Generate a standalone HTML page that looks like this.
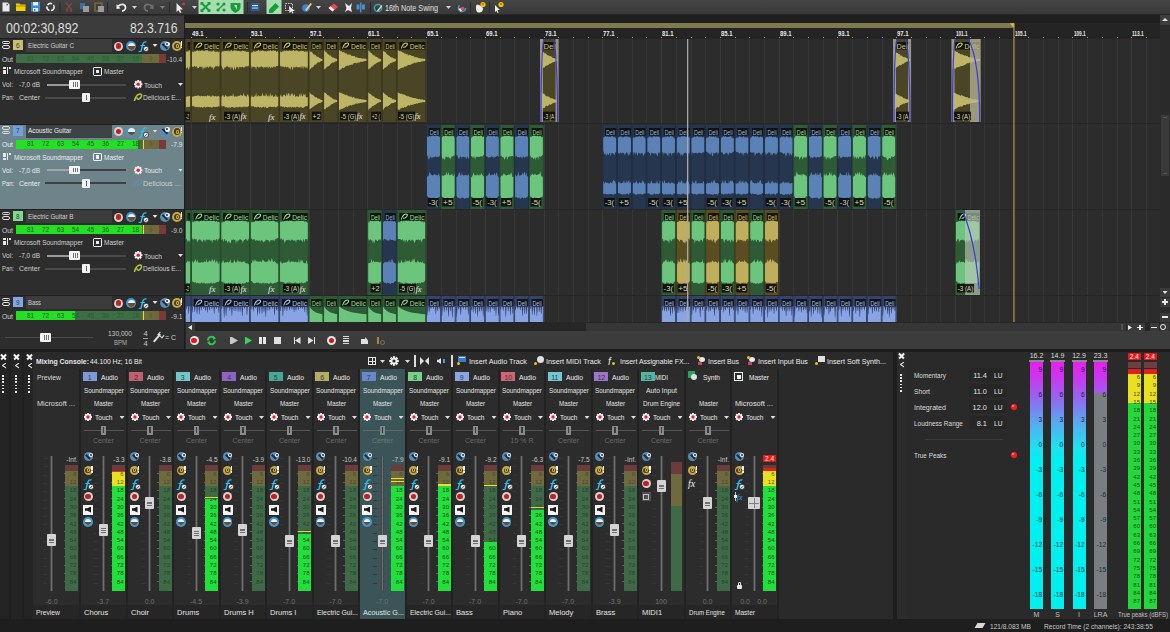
<!DOCTYPE html>
<html><head><meta charset="utf-8"><style>
html,body{margin:0;padding:0;}
body{width:1170px;height:632px;overflow:hidden;position:relative;background:#2b2b2b;font-family:"Liberation Sans",sans-serif;}
body>div,body>svg{position:absolute;}
.t{white-space:nowrap;line-height:1;transform-origin:0 0;}
</style></head><body>
<div style="left:0px;top:0px;width:1170px;height:632px;background:#2b2b2b;"></div>
<div style="left:0px;top:0px;width:1170px;height:15px;background:linear-gradient(#454545,#383838);"></div>
<div style="left:0px;top:14px;width:1170px;height:1px;background:#262626;"></div>
<svg style="position:absolute;left:0;top:0" width="520" height="15"><path d="M2.5,2.5 h5 l2,2 v7 h-7 z" fill="#ececec"/><circle cx="7.2" cy="4.6" r="0.9" fill="#555"/><path d="M16,3.5 h3.5 l1,1 h5 v6.5 h-9.5 z" fill="#f2d000"/><rect x="16" y="5.5" width="9.5" height="1" fill="#a08a00"/><rect x="31" y="2" width="9" height="9.5" fill="#2e8ee0"/><rect x="33" y="2" width="5" height="3.5" fill="#f0f0f0"/><rect x="33" y="8" width="5" height="3.5" fill="#f0f0f0"/><rect x="34" y="9" width="1.5" height="2" fill="#2e8ee0"/><circle cx="50.5" cy="7" r="3.6" stroke="#ececec" stroke-width="1.6" fill="none" stroke-dasharray="5 1.6"/><rect x="59.5" y="2" width="1" height="11" fill="#2a2a2a"/><path d="M66,3 L72,10 M72,3 L66,10" stroke="#7a4a50" stroke-width="1.2"/><circle cx="67" cy="10.5" r="1.3" fill="#8a3a40"/><circle cx="71" cy="10.5" r="1.3" fill="#8a3a40"/><rect x="80" y="3" width="5" height="6" fill="#3a70a0"/><rect x="83" y="6" width="6" height="6" fill="#9a9a9a"/><rect x="95" y="3" width="7" height="8" fill="none" stroke="#8a7030" stroke-width="1.2"/><rect x="98" y="6" width="6" height="6" fill="#9a9a9a"/><rect x="107" y="2" width="1" height="11" fill="#2a2a2a"/><path d="M118,6.5 C120,3.5 125,3.5 125.5,7 C126,10 123,11 122,11" stroke="#ececec" stroke-width="1.8" fill="none"/><path d="M116.5,4 L120.5,8.5 L116.5,9 z" fill="#ececec"/><path d="M152,6.5 C150,3.5 145,3.5 144.5,7 C144,10 147,11 148,11" stroke="#707070" stroke-width="1.8" fill="none"/><path d="M153.5,4 L149.5,8.5 L153.5,9 z" fill="#707070"/><rect x="169" y="2" width="1" height="11" fill="#2a2a2a"/><path d="M176.5,3 L183,9.5 L179.8,9.5 L181.5,12.5 L180,13 L178.3,10.2 L176.5,12 z" fill="#ececec"/><circle cx="183.5" cy="4" r="1.5" fill="#e03040"/><rect x="198.5" y="0" width="45" height="14" fill="#a6deb0"/><path d="M201.5,3 L209.5,11 M209.5,3 L201.5,11" stroke="#1c9a3e" stroke-width="1.8"/><path d="M200.5,2 h3 v1.2 h-1.8 v1.8 h-1.2 z M210.5,2 h-3 v1.2 h1.8 v1.8 h1.2 z M200.5,12 h3 v-1.2 h-1.8 v-1.8 h-1.2 z M210.5,12 h-3 v-1.2 h1.8 v-1.8 h1.2 z" fill="#1c9a3e"/><circle cx="218" cy="4" r="1.6" fill="#1c9a3e"/><circle cx="224" cy="4" r="1.6" fill="#1c9a3e"/><circle cx="218" cy="10" r="1.6" fill="#1c9a3e"/><circle cx="224" cy="10" r="1.6" fill="#1c9a3e"/><path d="M218,10 L224,4" stroke="#1c9a3e" stroke-width="1.3"/><path d="M230.5,3 h10 v4 c0,3 -3,5 -5,6 c-2,-1 -5,-3 -5,-6 z" fill="#1c9a3e"/><path d="M234,5 l3,0 l0,5 z" fill="#a6deb0"/><rect x="247" y="2" width="1" height="11" fill="#2a2a2a"/><rect x="250.5" y="3" width="9" height="8" fill="#2a5a9a"/><rect x="252" y="5" width="6" height="1.2" fill="#e8e8e8"/><rect x="252" y="7.5" width="6" height="1.2" fill="#9ac0f0"/><rect x="266.5" y="0" width="15" height="14" fill="#a6deb0"/><path d="M269,9.5 L275.5,3 L279,6.5 L272.5,13 L269,13 z" fill="#1c9a3e"/><rect x="285.5" y="3.5" width="7" height="7" fill="none" stroke="#c8c8c8" stroke-width="1" stroke-dasharray="1.5 1"/><path d="M289,6 L295,11 L292.5,11 L293.5,13 L292.5,13.5 L291.5,11.5 L289.5,13 z" fill="#ececec"/><circle cx="306" cy="8" r="3.8" fill="#3a84d8"/><path d="M305,10 L310.5,3 L312,4 L306.5,11 z" fill="#f2d060"/><path d="M328.5,8 L334,3.5 L338,7 L332.5,11.5 z" fill="#e84858"/><path d="M328.5,8 L330.5,6.3 L334.5,9.8 L332.5,11.5 z" fill="#f4f4f4"/><path d="M345,3 L349,6 L352,3 L351,8 L352,12 L348,10 L345,12 L346.5,8 z" fill="#ececec"/><rect x="360" y="2.5" width="1.5" height="10" fill="#4a90c8"/><rect x="356.5" y="4.5" width="3" height="5" fill="#4a90c8"/><rect x="362" y="4.5" width="3" height="5" fill="#4a90c8"/><rect x="370" y="2" width="1" height="11" fill="#2a2a2a"/><circle cx="378" cy="8" r="3.6" stroke="#2aa8c8" stroke-width="1.5" fill="none"/><path d="M377,10.5 L381.5,5 L382.5,6 L378,11.5 z" fill="#f0d8a0"/><circle cx="462" cy="8" r="3.6" stroke="#2aa8c8" stroke-width="1.5" fill="none" stroke-dasharray="14 8"/><path d="M458.5,9 L463,6.5 L465,9 L460.5,11.5 z" fill="#e84858"/><path d="M458.5,9 L460,8.2 L462,10.8 L460.5,11.5 z" fill="#f4f4f4"/><rect x="470" y="2" width="1" height="11" fill="#2a2a2a"/><path d="M476,7 C476,4 478,4 479,5 L481,6 C482.5,6.5 483,8 483,9 C483,12 480,12.5 478.5,12.5 C476.5,12.5 476,10 476,7 z" fill="#ececec"/><circle cx="483" cy="4.5" r="2.6" fill="#f2c200"/><rect x="482.6" y="3" width="0.8" height="2" fill="#604000"/><rect x="489" y="2" width="1" height="11" fill="#2a2a2a"/><path d="M495,5 L500,10 L497.5,10 L498.5,12.5 L497.5,13 L496.5,10.8 L495,12 z" fill="#ececec"/><circle cx="501" cy="4.5" r="2.6" fill="#f2c200"/><rect x="500.6" y="3" width="0.8" height="2" fill="#604000"/></svg>
<div style="left:132px;top:6px;width:5px;height:3px;background:#d0d0d0;clip-path:polygon(0 0,100% 0,50% 100%);"></div>
<div style="left:160px;top:6px;width:5px;height:3px;background:#808080;clip-path:polygon(0 0,100% 0,50% 100%);"></div>
<div style="left:192px;top:6px;width:5px;height:3px;background:#d0d0d0;clip-path:polygon(0 0,100% 0,50% 100%);"></div>
<div style="left:316px;top:6px;width:5px;height:3px;background:#d0d0d0;clip-path:polygon(0 0,100% 0,50% 100%);"></div>
<div class="t" style="left:385.00px;top:3.80px;font-size:8.5px;color:#e0e0e0;font-weight:normal;transform:scaleX(0.8497);">16th Note Swing</div>
<div style="left:446px;top:6px;width:5px;height:3px;background:#d0d0d0;clip-path:polygon(0 0,100% 0,50% 100%);"></div>
<div style="left:0px;top:15px;width:185px;height:334px;background:#2d2d2d;"></div>
<div style="left:0px;top:15.8px;width:184px;height:23px;background:#3c3c3c;"></div>
<div class="t" style="left:5.50px;top:20.80px;font-size:14.3px;color:#dcdcdc;font-weight:normal;transform:scaleX(0.8683);">00:02:30,892</div>
<div class="t" style="left:130.00px;top:20.80px;font-size:14.3px;color:#dcdcdc;font-weight:normal;transform:scaleX(0.8533);">82.3.716</div>
<div style="left:185px;top:15px;width:985px;height:24px;background:#242424;"></div>
<div style="left:185px;top:15px;width:985px;height:8px;background:#1f1f1f;"></div>
<div style="left:185px;top:23.2px;width:828.8px;height:4.8px;background:#7d7b4d;"></div>
<div style="left:1009.5px;top:23.2px;width:5px;height:5px;background:#e0b040;clip-path:polygon(0 0,100% 0,100% 100%);"></div>
<div style="left:185px;top:39px;width:975px;height:283px;background:#2c2c2c;"></div>
<div style="left:191px;top:39px;width:1px;height:283px;background:#3a3a3a;"></div>
<div style="left:191px;top:36.8px;width:1px;height:1.6px;background:#a0a0a0;"></div>
<div style="left:206px;top:39px;width:1px;height:283px;background:#363636;"></div>
<div style="left:206px;top:36.8px;width:1px;height:1.6px;background:#a0a0a0;"></div>
<div style="left:220px;top:39px;width:1px;height:283px;background:#363636;"></div>
<div style="left:220px;top:36.8px;width:1px;height:1.6px;background:#a0a0a0;"></div>
<div style="left:235px;top:39px;width:1px;height:283px;background:#363636;"></div>
<div style="left:235px;top:36.8px;width:1px;height:1.6px;background:#a0a0a0;"></div>
<div style="left:250px;top:39px;width:1px;height:283px;background:#3a3a3a;"></div>
<div style="left:250px;top:36.8px;width:1px;height:1.6px;background:#a0a0a0;"></div>
<div style="left:265px;top:39px;width:1px;height:283px;background:#363636;"></div>
<div style="left:265px;top:36.8px;width:1px;height:1.6px;background:#a0a0a0;"></div>
<div style="left:279px;top:39px;width:1px;height:283px;background:#363636;"></div>
<div style="left:279px;top:36.8px;width:1px;height:1.6px;background:#a0a0a0;"></div>
<div style="left:294px;top:39px;width:1px;height:283px;background:#363636;"></div>
<div style="left:294px;top:36.8px;width:1px;height:1.6px;background:#a0a0a0;"></div>
<div style="left:309px;top:39px;width:1px;height:283px;background:#3a3a3a;"></div>
<div style="left:309px;top:36.8px;width:1px;height:1.6px;background:#a0a0a0;"></div>
<div style="left:323px;top:39px;width:1px;height:283px;background:#363636;"></div>
<div style="left:323px;top:36.8px;width:1px;height:1.6px;background:#a0a0a0;"></div>
<div style="left:338px;top:39px;width:1px;height:283px;background:#363636;"></div>
<div style="left:338px;top:36.8px;width:1px;height:1.6px;background:#a0a0a0;"></div>
<div style="left:353px;top:39px;width:1px;height:283px;background:#363636;"></div>
<div style="left:353px;top:36.8px;width:1px;height:1.6px;background:#a0a0a0;"></div>
<div style="left:367px;top:39px;width:1px;height:283px;background:#3a3a3a;"></div>
<div style="left:367px;top:36.8px;width:1px;height:1.6px;background:#a0a0a0;"></div>
<div style="left:382px;top:39px;width:1px;height:283px;background:#363636;"></div>
<div style="left:382px;top:36.8px;width:1px;height:1.6px;background:#a0a0a0;"></div>
<div style="left:397px;top:39px;width:1px;height:283px;background:#363636;"></div>
<div style="left:397px;top:36.8px;width:1px;height:1.6px;background:#a0a0a0;"></div>
<div style="left:411px;top:39px;width:1px;height:283px;background:#363636;"></div>
<div style="left:411px;top:36.8px;width:1px;height:1.6px;background:#a0a0a0;"></div>
<div style="left:426px;top:39px;width:1px;height:283px;background:#3a3a3a;"></div>
<div style="left:426px;top:36.8px;width:1px;height:1.6px;background:#a0a0a0;"></div>
<div style="left:441px;top:39px;width:1px;height:283px;background:#363636;"></div>
<div style="left:441px;top:36.8px;width:1px;height:1.6px;background:#a0a0a0;"></div>
<div style="left:456px;top:39px;width:1px;height:283px;background:#363636;"></div>
<div style="left:456px;top:36.8px;width:1px;height:1.6px;background:#a0a0a0;"></div>
<div style="left:470px;top:39px;width:1px;height:283px;background:#363636;"></div>
<div style="left:470px;top:36.8px;width:1px;height:1.6px;background:#a0a0a0;"></div>
<div style="left:485px;top:39px;width:1px;height:283px;background:#3a3a3a;"></div>
<div style="left:485px;top:36.8px;width:1px;height:1.6px;background:#a0a0a0;"></div>
<div style="left:500px;top:39px;width:1px;height:283px;background:#363636;"></div>
<div style="left:500px;top:36.8px;width:1px;height:1.6px;background:#a0a0a0;"></div>
<div style="left:514px;top:39px;width:1px;height:283px;background:#363636;"></div>
<div style="left:514px;top:36.8px;width:1px;height:1.6px;background:#a0a0a0;"></div>
<div style="left:529px;top:39px;width:1px;height:283px;background:#363636;"></div>
<div style="left:529px;top:36.8px;width:1px;height:1.6px;background:#a0a0a0;"></div>
<div style="left:544px;top:39px;width:1px;height:283px;background:#3a3a3a;"></div>
<div style="left:544px;top:36.8px;width:1px;height:1.6px;background:#a0a0a0;"></div>
<div style="left:558px;top:39px;width:1px;height:283px;background:#363636;"></div>
<div style="left:558px;top:36.8px;width:1px;height:1.6px;background:#a0a0a0;"></div>
<div style="left:573px;top:39px;width:1px;height:283px;background:#363636;"></div>
<div style="left:573px;top:36.8px;width:1px;height:1.6px;background:#a0a0a0;"></div>
<div style="left:588px;top:39px;width:1px;height:283px;background:#363636;"></div>
<div style="left:588px;top:36.8px;width:1px;height:1.6px;background:#a0a0a0;"></div>
<div style="left:602px;top:39px;width:1px;height:283px;background:#3a3a3a;"></div>
<div style="left:602px;top:36.8px;width:1px;height:1.6px;background:#a0a0a0;"></div>
<div style="left:617px;top:39px;width:1px;height:283px;background:#363636;"></div>
<div style="left:617px;top:36.8px;width:1px;height:1.6px;background:#a0a0a0;"></div>
<div style="left:632px;top:39px;width:1px;height:283px;background:#363636;"></div>
<div style="left:632px;top:36.8px;width:1px;height:1.6px;background:#a0a0a0;"></div>
<div style="left:646px;top:39px;width:1px;height:283px;background:#363636;"></div>
<div style="left:646px;top:36.8px;width:1px;height:1.6px;background:#a0a0a0;"></div>
<div style="left:661px;top:39px;width:1px;height:283px;background:#3a3a3a;"></div>
<div style="left:661px;top:36.8px;width:1px;height:1.6px;background:#a0a0a0;"></div>
<div style="left:676px;top:39px;width:1px;height:283px;background:#363636;"></div>
<div style="left:676px;top:36.8px;width:1px;height:1.6px;background:#a0a0a0;"></div>
<div style="left:691px;top:39px;width:1px;height:283px;background:#363636;"></div>
<div style="left:691px;top:36.8px;width:1px;height:1.6px;background:#a0a0a0;"></div>
<div style="left:705px;top:39px;width:1px;height:283px;background:#363636;"></div>
<div style="left:705px;top:36.8px;width:1px;height:1.6px;background:#a0a0a0;"></div>
<div style="left:720px;top:39px;width:1px;height:283px;background:#3a3a3a;"></div>
<div style="left:720px;top:36.8px;width:1px;height:1.6px;background:#a0a0a0;"></div>
<div style="left:735px;top:39px;width:1px;height:283px;background:#363636;"></div>
<div style="left:735px;top:36.8px;width:1px;height:1.6px;background:#a0a0a0;"></div>
<div style="left:749px;top:39px;width:1px;height:283px;background:#363636;"></div>
<div style="left:749px;top:36.8px;width:1px;height:1.6px;background:#a0a0a0;"></div>
<div style="left:764px;top:39px;width:1px;height:283px;background:#363636;"></div>
<div style="left:764px;top:36.8px;width:1px;height:1.6px;background:#a0a0a0;"></div>
<div style="left:779px;top:39px;width:1px;height:283px;background:#3a3a3a;"></div>
<div style="left:779px;top:36.8px;width:1px;height:1.6px;background:#a0a0a0;"></div>
<div style="left:793px;top:39px;width:1px;height:283px;background:#363636;"></div>
<div style="left:793px;top:36.8px;width:1px;height:1.6px;background:#a0a0a0;"></div>
<div style="left:808px;top:39px;width:1px;height:283px;background:#363636;"></div>
<div style="left:808px;top:36.8px;width:1px;height:1.6px;background:#a0a0a0;"></div>
<div style="left:823px;top:39px;width:1px;height:283px;background:#363636;"></div>
<div style="left:823px;top:36.8px;width:1px;height:1.6px;background:#a0a0a0;"></div>
<div style="left:837px;top:39px;width:1px;height:283px;background:#3a3a3a;"></div>
<div style="left:837px;top:36.8px;width:1px;height:1.6px;background:#a0a0a0;"></div>
<div style="left:852px;top:39px;width:1px;height:283px;background:#363636;"></div>
<div style="left:852px;top:36.8px;width:1px;height:1.6px;background:#a0a0a0;"></div>
<div style="left:867px;top:39px;width:1px;height:283px;background:#363636;"></div>
<div style="left:867px;top:36.8px;width:1px;height:1.6px;background:#a0a0a0;"></div>
<div style="left:882px;top:39px;width:1px;height:283px;background:#363636;"></div>
<div style="left:882px;top:36.8px;width:1px;height:1.6px;background:#a0a0a0;"></div>
<div style="left:896px;top:39px;width:1px;height:283px;background:#3a3a3a;"></div>
<div style="left:896px;top:36.8px;width:1px;height:1.6px;background:#a0a0a0;"></div>
<div style="left:911px;top:39px;width:1px;height:283px;background:#363636;"></div>
<div style="left:911px;top:36.8px;width:1px;height:1.6px;background:#a0a0a0;"></div>
<div style="left:926px;top:39px;width:1px;height:283px;background:#363636;"></div>
<div style="left:926px;top:36.8px;width:1px;height:1.6px;background:#a0a0a0;"></div>
<div style="left:940px;top:39px;width:1px;height:283px;background:#363636;"></div>
<div style="left:940px;top:36.8px;width:1px;height:1.6px;background:#a0a0a0;"></div>
<div style="left:955px;top:39px;width:1px;height:283px;background:#3a3a3a;"></div>
<div style="left:955px;top:36.8px;width:1px;height:1.6px;background:#a0a0a0;"></div>
<div style="left:970px;top:39px;width:1px;height:283px;background:#363636;"></div>
<div style="left:970px;top:36.8px;width:1px;height:1.6px;background:#a0a0a0;"></div>
<div style="left:984px;top:39px;width:1px;height:283px;background:#363636;"></div>
<div style="left:984px;top:36.8px;width:1px;height:1.6px;background:#a0a0a0;"></div>
<div style="left:999px;top:39px;width:1px;height:283px;background:#363636;"></div>
<div style="left:999px;top:36.8px;width:1px;height:1.6px;background:#a0a0a0;"></div>
<div style="left:1014px;top:39px;width:1px;height:283px;background:#3a3a3a;"></div>
<div style="left:1014px;top:36.8px;width:1px;height:1.6px;background:#a0a0a0;"></div>
<div style="left:1028px;top:39px;width:1px;height:283px;background:#363636;"></div>
<div style="left:1028px;top:36.8px;width:1px;height:1.6px;background:#a0a0a0;"></div>
<div style="left:1043px;top:39px;width:1px;height:283px;background:#363636;"></div>
<div style="left:1043px;top:36.8px;width:1px;height:1.6px;background:#a0a0a0;"></div>
<div style="left:1058px;top:39px;width:1px;height:283px;background:#363636;"></div>
<div style="left:1058px;top:36.8px;width:1px;height:1.6px;background:#a0a0a0;"></div>
<div style="left:1072px;top:39px;width:1px;height:283px;background:#3a3a3a;"></div>
<div style="left:1072px;top:36.8px;width:1px;height:1.6px;background:#a0a0a0;"></div>
<div style="left:1087px;top:39px;width:1px;height:283px;background:#363636;"></div>
<div style="left:1087px;top:36.8px;width:1px;height:1.6px;background:#a0a0a0;"></div>
<div style="left:1102px;top:39px;width:1px;height:283px;background:#363636;"></div>
<div style="left:1102px;top:36.8px;width:1px;height:1.6px;background:#a0a0a0;"></div>
<div style="left:1117px;top:39px;width:1px;height:283px;background:#363636;"></div>
<div style="left:1117px;top:36.8px;width:1px;height:1.6px;background:#a0a0a0;"></div>
<div style="left:1131px;top:39px;width:1px;height:283px;background:#3a3a3a;"></div>
<div style="left:1131px;top:36.8px;width:1px;height:1.6px;background:#a0a0a0;"></div>
<div style="left:1146px;top:39px;width:1px;height:283px;background:#363636;"></div>
<div style="left:1146px;top:36.8px;width:1px;height:1.6px;background:#a0a0a0;"></div>
<div class="t" style="left:192.10px;top:29.87px;font-size:7px;color:#e8e8e8;font-weight:bold;transform:scaleX(0.8441);">49.1</div>
<div class="t" style="left:250.86px;top:29.87px;font-size:7px;color:#e8e8e8;font-weight:bold;transform:scaleX(0.8441);">53.1</div>
<div class="t" style="left:309.62px;top:29.87px;font-size:7px;color:#e8e8e8;font-weight:bold;transform:scaleX(0.8441);">57.1</div>
<div class="t" style="left:368.38px;top:29.87px;font-size:7px;color:#e8e8e8;font-weight:bold;transform:scaleX(0.8441);">61.1</div>
<div class="t" style="left:427.14px;top:29.87px;font-size:7px;color:#e8e8e8;font-weight:bold;transform:scaleX(0.8441);">65.1</div>
<div class="t" style="left:485.90px;top:29.87px;font-size:7px;color:#e8e8e8;font-weight:bold;transform:scaleX(0.8441);">69.1</div>
<div class="t" style="left:544.66px;top:29.87px;font-size:7px;color:#e8e8e8;font-weight:bold;transform:scaleX(0.8441);">73.1</div>
<div class="t" style="left:603.42px;top:29.87px;font-size:7px;color:#e8e8e8;font-weight:bold;transform:scaleX(0.8441);">77.1</div>
<div class="t" style="left:662.18px;top:29.87px;font-size:7px;color:#e8e8e8;font-weight:bold;transform:scaleX(0.8441);">81.1</div>
<div class="t" style="left:720.94px;top:29.87px;font-size:7px;color:#e8e8e8;font-weight:bold;transform:scaleX(0.8441);">85.1</div>
<div class="t" style="left:779.70px;top:29.87px;font-size:7px;color:#e8e8e8;font-weight:bold;transform:scaleX(0.8441);">89.1</div>
<div class="t" style="left:838.46px;top:29.87px;font-size:7px;color:#e8e8e8;font-weight:bold;transform:scaleX(0.8441);">93.1</div>
<div class="t" style="left:897.22px;top:29.87px;font-size:7px;color:#e8e8e8;font-weight:bold;transform:scaleX(0.8441);">97.1</div>
<div class="t" style="left:955.98px;top:29.87px;font-size:7px;color:#e8e8e8;font-weight:bold;transform:scaleX(0.6565);">101.1</div>
<div class="t" style="left:1014.74px;top:29.87px;font-size:7px;color:#e8e8e8;font-weight:bold;transform:scaleX(0.6565);">105.1</div>
<div class="t" style="left:1073.50px;top:29.87px;font-size:7px;color:#e8e8e8;font-weight:bold;transform:scaleX(0.6565);">109.1</div>
<div class="t" style="left:1132.26px;top:29.87px;font-size:7px;color:#e8e8e8;font-weight:bold;transform:scaleX(0.6713);">113.1</div>
<div style="left:185px;top:123px;width:975px;height:1px;background:#262626;"></div>
<div style="left:185px;top:209px;width:975px;height:1px;background:#262626;"></div>
<div style="left:185px;top:295px;width:975px;height:1px;background:#262626;"></div>
<div style="left:1160px;top:15px;width:10px;height:307px;background:#2a2a2a;"></div>
<div style="left:1160px;top:15px;width:10px;height:10px;background:#3d3d3d;"></div>
<div style="left:1162px;top:18px;width:6px;height:3px;background:#e8e8e8;clip-path:polygon(50% 0,100% 100%,0 100%);"></div>
<div style="left:1161px;top:115px;width:8px;height:61px;background:#3a3a3a;"></div>
<div style="left:1163px;top:117px;width:4px;height:1px;background:#555;"></div>
<div style="left:1163px;top:173px;width:4px;height:1px;background:#555;"></div>
<div style="left:1160px;top:288px;width:10px;height:9px;background:#3a3a3a;"></div>
<div style="left:1160px;top:297.5px;width:10px;height:9px;background:#3a3a3a;"></div>
<div style="left:1160px;top:312.5px;width:10px;height:9px;background:#3a3a3a;"></div>
<div style="left:1162.5px;top:291px;width:5px;height:3px;background:#e8e8e8;clip-path:polygon(0 0,100% 0,50% 100%);"></div>
<div style="left:1162px;top:301.2px;width:6px;height:1.5px;background:#e8e8e8;"></div>
<div style="left:1164.25px;top:299px;width:1.5px;height:6px;background:#e8e8e8;"></div>
<div style="left:1162px;top:316.2px;width:6px;height:1.5px;background:#e8e8e8;"></div>
<svg style="position:absolute;left:0;top:0" width="1170" height="632" viewBox="0 0 1170 632"><rect x="185.00" y="39.00" width="6.10" height="83.00" fill="#4a4524" /><polygon points="185.6,52.0 186.3,51.4 187.0,51.5 187.7,51.5 188.4,51.4 189.1,50.1 189.8,50.4 190.5,52.6 190.5,68.6 189.8,66.4 189.1,69.0 188.4,69.9 187.7,66.5 187.0,68.5 186.3,68.2 185.6,65.4" fill="#bdb565"/><polygon points="185.6,97.3 186.3,96.8 187.0,96.2 187.7,96.5 188.4,96.2 189.1,96.1 189.8,96.0 190.5,97.0 190.5,106.8 189.8,106.5 189.1,106.9 188.4,106.9 187.7,106.7 187.0,107.3 186.3,107.0 185.6,105.9" fill="#bdb565"/><rect x="185.00" y="39.00" width="0.80" height="83.00" fill="#3a3620" /><rect x="190.30" y="39.00" width="0.80" height="83.00" fill="#3a3620" /><rect x="187.60" y="42.00" width="2.60" height="7.50" fill="#0e0e08" opacity="0.9"/><text x="188.5" y="48.6" font-family="Liberation Sans" font-size="8" fill="#d4ca74" textLength="0.6" lengthAdjust="spacingAndGlyphs">Deli</text><rect x="191.10" y="39.00" width="29.38" height="83.00" fill="#4a4524" /><polygon points="191.7,51.5 192.4,51.6 193.1,52.6 193.8,51.6 194.5,51.2 195.2,51.4 195.9,51.2 196.6,50.7 197.3,50.3 198.0,50.5 198.7,51.3 199.4,50.4 200.2,51.0 200.9,50.9 201.6,50.3 202.3,50.9 203.0,50.1 203.7,51.2 204.4,50.7 205.1,50.9 205.8,50.1 206.5,50.6 207.2,50.2 207.9,50.3 208.6,51.4 209.3,51.5 210.0,51.1 210.7,51.4 211.4,51.6 212.1,51.4 212.8,51.0 213.5,50.0 214.2,51.5 214.9,51.4 215.7,51.9 216.4,51.9 217.1,51.5 217.8,51.4 218.5,52.4 219.2,51.6 219.9,51.7 219.9,65.8 219.2,65.7 218.5,66.8 217.8,66.6 217.1,65.5 216.4,66.5 215.7,66.1 214.9,67.6 214.2,66.9 213.5,70.0 212.8,67.8 212.1,67.1 211.4,67.8 210.7,66.2 210.0,66.9 209.3,66.3 208.6,68.0 207.9,67.5 207.2,66.3 206.5,67.0 205.8,68.7 205.1,66.2 204.4,68.4 203.7,67.0 203.0,70.2 202.3,66.6 201.6,67.5 200.9,66.3 200.2,67.3 199.4,66.5 198.7,68.3 198.0,67.9 197.3,67.7 196.6,66.1 195.9,67.3 195.2,66.5 194.5,66.0 193.8,66.4 193.1,67.3 192.4,66.8 191.7,65.2" fill="#bdb565"/><polygon points="191.7,96.5 192.4,96.6 193.1,97.0 193.8,96.2 194.5,95.9 195.2,95.7 195.9,96.1 196.6,96.0 197.3,95.5 198.0,95.6 198.7,95.4 199.4,96.1 200.2,96.3 200.9,96.2 201.6,95.7 202.3,96.1 203.0,96.6 203.7,95.8 204.4,96.6 205.1,95.8 205.8,96.1 206.5,96.5 207.2,95.7 207.9,94.9 208.6,96.3 209.3,95.4 210.0,96.0 210.7,96.8 211.4,96.8 212.1,94.7 212.8,96.3 213.5,95.6 214.2,96.4 214.9,96.2 215.7,95.7 216.4,96.4 217.1,96.6 217.8,96.0 218.5,96.1 219.2,96.3 219.9,97.2 219.9,106.1 219.2,106.9 218.5,106.1 217.8,106.9 217.1,106.8 216.4,106.8 215.7,106.9 214.9,107.2 214.2,106.8 213.5,106.6 212.8,107.2 212.1,107.6 211.4,107.7 210.7,107.1 210.0,107.3 209.3,107.1 208.6,107.1 207.9,106.6 207.2,107.3 206.5,106.8 205.8,107.8 205.1,107.2 204.4,106.4 203.7,107.0 203.0,107.7 202.3,107.8 201.6,106.7 200.9,107.0 200.2,107.7 199.4,106.7 198.7,107.7 198.0,106.5 197.3,107.2 196.6,107.3 195.9,106.5 195.2,107.6 194.5,106.6 193.8,106.2 193.1,105.7 192.4,105.9 191.7,106.7" fill="#bdb565"/><rect x="191.10" y="39.00" width="0.80" height="83.00" fill="#3a3620" /><rect x="219.68" y="39.00" width="0.80" height="83.00" fill="#3a3620" /><rect x="193.70" y="42.00" width="25.88" height="7.50" fill="#0e0e08" opacity="0.9"/><path d="M195.6,48.5 C196.6,44 200.1,42 201.6,43.5 C202.6,45 199.1,48 197.6,47" stroke="#d4ca74" stroke-width="1.1" fill="none"/><text x="204.1" y="48.6" font-family="Liberation Sans" font-size="8" fill="#d4ca74" textLength="14.9" lengthAdjust="spacingAndGlyphs">Delic</text><rect x="220.48" y="39.00" width="29.38" height="83.00" fill="#4a4524" /><polygon points="221.1,52.9 221.8,51.4 222.5,51.6 223.2,51.0 223.9,51.7 224.6,50.8 225.3,51.1 226.0,51.3 226.7,50.7 227.4,51.1 228.1,51.5 228.8,50.0 229.5,51.5 230.2,51.4 230.9,50.3 231.6,50.1 232.4,51.5 233.1,50.9 233.8,50.6 234.5,50.2 235.2,50.9 235.9,50.1 236.6,50.8 237.3,51.3 238.0,51.1 238.7,51.1 239.4,51.0 240.1,51.6 240.8,51.3 241.5,51.4 242.2,50.8 242.9,50.8 243.6,51.1 244.3,50.8 245.0,51.9 245.7,51.0 246.4,52.2 247.1,51.4 247.9,52.2 248.6,52.1 249.3,51.5 249.3,69.1 248.6,65.2 247.9,66.2 247.1,66.6 246.4,66.2 245.7,66.0 245.0,67.4 244.3,67.1 243.6,67.7 242.9,66.8 242.2,66.8 241.5,67.6 240.8,67.0 240.1,67.3 239.4,66.5 238.7,69.6 238.0,67.1 237.3,66.7 236.6,66.8 235.9,68.7 235.2,70.1 234.5,66.3 233.8,70.4 233.1,69.3 232.4,67.3 231.6,66.9 230.9,70.3 230.2,66.6 229.5,67.4 228.8,67.4 228.1,67.0 227.4,66.3 226.7,66.2 226.0,66.9 225.3,67.8 224.6,67.1 223.9,69.8 223.2,69.3 222.5,68.3 221.8,66.1 221.1,65.8" fill="#bdb565"/><polygon points="221.1,97.4 221.8,96.1 222.5,95.4 223.2,95.1 223.9,96.9 224.6,97.1 225.3,94.4 226.0,95.9 226.7,96.2 227.4,96.6 228.1,96.7 228.8,95.9 229.5,96.6 230.2,95.5 230.9,95.9 231.6,95.8 232.4,96.2 233.1,93.0 233.8,95.9 234.5,96.8 235.2,96.0 235.9,96.7 236.6,96.5 237.3,96.5 238.0,96.1 238.7,95.8 239.4,95.8 240.1,95.7 240.8,94.2 241.5,95.6 242.2,95.8 242.9,96.1 243.6,92.8 244.3,95.5 245.0,95.8 245.7,96.0 246.4,97.0 247.1,95.1 247.9,93.9 248.6,96.6 249.3,97.1 249.3,105.4 248.6,105.9 247.9,106.5 247.1,107.3 246.4,106.8 245.7,106.4 245.0,107.7 244.3,106.3 243.6,106.7 242.9,107.1 242.2,106.9 241.5,107.5 240.8,106.4 240.1,107.6 239.4,106.5 238.7,107.6 238.0,107.0 237.3,107.6 236.6,106.8 235.9,107.6 235.2,107.3 234.5,107.7 233.8,107.5 233.1,107.3 232.4,107.0 231.6,106.8 230.9,107.8 230.2,107.7 229.5,107.2 228.8,107.6 228.1,107.7 227.4,107.6 226.7,106.9 226.0,107.4 225.3,107.0 224.6,106.5 223.9,106.5 223.2,105.8 222.5,106.5 221.8,105.5 221.1,107.0" fill="#bdb565"/><rect x="220.48" y="39.00" width="0.80" height="83.00" fill="#3a3620" /><rect x="249.06" y="39.00" width="0.80" height="83.00" fill="#3a3620" /><rect x="223.08" y="42.00" width="25.88" height="7.50" fill="#0e0e08" opacity="0.9"/><path d="M224.98,48.5 C225.98,44 229.48,42 230.98,43.5 C231.98,45 228.48,48 226.98,47" stroke="#d4ca74" stroke-width="1.1" fill="none"/><text x="233.48" y="48.6" font-family="Liberation Sans" font-size="8" fill="#d4ca74" textLength="14.9" lengthAdjust="spacingAndGlyphs">Delic</text><rect x="249.86" y="39.00" width="29.38" height="83.00" fill="#4a4524" /><polygon points="250.5,52.3 251.2,52.3 251.9,52.7 252.6,52.3 253.3,50.9 254.0,51.5 254.7,51.4 255.4,51.7 256.1,51.1 256.8,51.2 257.5,51.0 258.2,50.3 258.9,50.1 259.6,51.5 260.3,50.4 261.0,51.5 261.7,50.8 262.4,50.4 263.1,50.6 263.8,51.0 264.5,51.3 265.3,51.2 266.0,50.9 266.7,51.5 267.4,51.2 268.1,50.2 268.8,50.9 269.5,51.1 270.2,50.1 270.9,50.6 271.6,51.2 272.3,50.9 273.0,50.2 273.7,50.6 274.4,51.0 275.1,50.7 275.8,50.8 276.5,52.3 277.2,51.2 277.9,51.6 278.6,53.0 278.6,65.6 277.9,65.9 277.2,66.1 276.5,65.8 275.8,66.8 275.1,67.4 274.4,66.5 273.7,66.2 273.0,67.5 272.3,68.0 271.6,66.5 270.9,68.5 270.2,67.4 269.5,66.8 268.8,66.8 268.1,68.8 267.4,66.6 266.7,67.1 266.0,67.7 265.3,66.9 264.5,66.9 263.8,68.7 263.1,66.6 262.4,67.5 261.7,66.4 261.0,66.6 260.3,66.9 259.6,67.3 258.9,67.6 258.2,67.5 257.5,66.5 256.8,66.6 256.1,70.0 255.4,67.3 254.7,66.7 254.0,67.3 253.3,66.5 252.6,66.6 251.9,68.9 251.2,65.6 250.5,67.0" fill="#bdb565"/><polygon points="250.5,97.4 251.2,97.2 251.9,94.7 252.6,97.1 253.3,96.7 254.0,97.2 254.7,95.6 255.4,96.2 256.1,92.5 256.8,96.7 257.5,96.2 258.2,95.4 258.9,95.3 259.6,96.5 260.3,96.0 261.0,96.3 261.7,95.8 262.4,92.5 263.1,95.8 263.8,95.4 264.5,95.8 265.3,96.6 266.0,92.8 266.7,95.3 267.4,96.0 268.1,96.8 268.8,95.1 269.5,96.8 270.2,92.5 270.9,96.5 271.6,95.6 272.3,94.7 273.0,96.5 273.7,96.9 274.4,95.9 275.1,96.9 275.8,93.9 276.5,96.2 277.2,97.1 277.9,96.4 278.6,96.4 278.6,106.4 277.9,105.5 277.2,106.8 276.5,107.3 275.8,107.3 275.1,107.5 274.4,106.2 273.7,106.9 273.0,107.0 272.3,107.0 271.6,107.1 270.9,107.0 270.2,106.6 269.5,106.8 268.8,106.9 268.1,107.5 267.4,107.9 266.7,107.9 266.0,107.8 265.3,106.5 264.5,108.0 263.8,106.6 263.1,107.1 262.4,107.2 261.7,107.6 261.0,107.7 260.3,106.7 259.6,107.7 258.9,107.1 258.2,106.8 257.5,106.8 256.8,107.2 256.1,107.5 255.4,106.7 254.7,107.2 254.0,106.5 253.3,106.3 252.6,106.6 251.9,106.8 251.2,105.7 250.5,106.9" fill="#bdb565"/><rect x="249.86" y="39.00" width="0.80" height="83.00" fill="#3a3620" /><rect x="278.44" y="39.00" width="0.80" height="83.00" fill="#3a3620" /><rect x="252.46" y="42.00" width="25.88" height="7.50" fill="#0e0e08" opacity="0.9"/><path d="M254.35999999999999,48.5 C255.35999999999999,44 258.86,42 260.36,43.5 C261.36,45 257.86,48 256.36,47" stroke="#d4ca74" stroke-width="1.1" fill="none"/><text x="262.86" y="48.6" font-family="Liberation Sans" font-size="8" fill="#d4ca74" textLength="14.9" lengthAdjust="spacingAndGlyphs">Delic</text><rect x="279.24" y="39.00" width="29.38" height="83.00" fill="#4a4524" /><polygon points="279.8,52.7 280.5,51.3 281.2,52.0 282.0,52.2 282.7,51.0 283.4,51.6 284.1,50.7 284.8,50.6 285.5,51.5 286.2,50.0 286.9,51.2 287.6,50.8 288.3,51.2 289.0,50.5 289.7,50.5 290.4,51.1 291.1,50.4 291.8,51.2 292.5,50.7 293.2,50.0 293.9,50.3 294.6,51.4 295.3,50.3 296.0,51.1 296.7,50.0 297.5,51.0 298.2,51.2 298.9,51.4 299.6,51.3 300.3,51.3 301.0,50.6 301.7,51.1 302.4,51.1 303.1,50.9 303.8,51.3 304.5,52.0 305.2,51.7 305.9,51.0 306.6,52.1 307.3,51.3 308.0,51.9 308.0,65.6 307.3,68.8 306.6,67.7 305.9,66.7 305.2,68.6 304.5,66.6 303.8,66.3 303.1,69.6 302.4,66.5 301.7,66.3 301.0,68.9 300.3,66.8 299.6,67.1 298.9,67.6 298.2,66.9 297.5,67.6 296.7,67.1 296.0,66.3 295.3,67.4 294.6,67.7 293.9,66.5 293.2,68.0 292.5,70.2 291.8,67.3 291.1,66.8 290.4,70.0 289.7,67.5 289.0,69.0 288.3,66.9 287.6,66.6 286.9,67.7 286.2,66.7 285.5,66.5 284.8,66.9 284.1,67.5 283.4,66.6 282.7,66.6 282.0,66.7 281.2,66.2 280.5,66.4 279.8,64.8" fill="#bdb565"/><polygon points="279.8,97.8 280.5,94.0 281.2,96.9 282.0,94.9 282.7,97.2 283.4,94.9 284.1,94.7 284.8,94.7 285.5,96.5 286.2,95.3 286.9,92.6 287.6,95.9 288.3,93.3 289.0,93.0 289.7,95.8 290.4,96.2 291.1,93.5 291.8,94.3 292.5,93.0 293.2,96.0 293.9,94.9 294.6,93.8 295.3,96.7 296.0,96.4 296.7,96.1 297.5,96.6 298.2,96.4 298.9,96.7 299.6,93.5 300.3,96.7 301.0,92.5 301.7,95.3 302.4,96.5 303.1,95.5 303.8,93.5 304.5,95.6 305.2,93.3 305.9,97.2 306.6,97.2 307.3,97.2 308.0,97.1 308.0,106.9 307.3,105.6 306.6,106.1 305.9,106.6 305.2,106.3 304.5,107.2 303.8,107.6 303.1,107.7 302.4,108.0 301.7,107.6 301.0,106.6 300.3,107.2 299.6,107.6 298.9,107.4 298.2,107.1 297.5,106.6 296.7,106.7 296.0,107.6 295.3,107.4 294.6,107.1 293.9,107.3 293.2,107.4 292.5,106.6 291.8,107.6 291.1,107.8 290.4,106.6 289.7,107.0 289.0,107.7 288.3,106.8 287.6,107.7 286.9,107.0 286.2,107.2 285.5,106.6 284.8,107.6 284.1,107.6 283.4,106.3 282.7,106.9 282.0,106.8 281.2,105.9 280.5,106.2 279.8,106.9" fill="#bdb565"/><rect x="279.24" y="39.00" width="0.80" height="83.00" fill="#3a3620" /><rect x="307.82" y="39.00" width="0.80" height="83.00" fill="#3a3620" /><rect x="281.84" y="42.00" width="25.88" height="7.50" fill="#0e0e08" opacity="0.9"/><path d="M283.74,48.5 C284.74,44 288.24,42 289.74,43.5 C290.74,45 287.24,48 285.74,47" stroke="#d4ca74" stroke-width="1.1" fill="none"/><text x="292.24" y="48.6" font-family="Liberation Sans" font-size="8" fill="#d4ca74" textLength="14.9" lengthAdjust="spacingAndGlyphs">Delic</text><rect x="308.62" y="39.00" width="14.69" height="83.00" fill="#4a4524" /><polygon points="309.1,49.6 309.8,51.0 310.6,51.8 311.3,51.8 312.0,52.2 312.7,53.2 313.4,54.5 314.2,54.4 314.9,54.7 315.6,55.0 316.3,56.3 317.0,56.7 317.8,56.7 318.5,57.1 319.2,57.7 319.9,58.1 320.6,58.6 321.4,58.9 322.1,58.8 322.8,58.9 322.8,61.2 322.1,61.1 321.4,61.1 320.6,61.2 319.9,62.0 319.2,62.6 318.5,62.3 317.8,62.4 317.0,63.0 316.3,64.2 315.6,64.5 314.9,64.6 314.2,65.3 313.4,66.7 312.7,67.2 312.0,67.4 311.3,67.8 310.6,68.7 309.8,69.8 309.1,70.7" fill="#bdb565"/><polygon points="309.1,92.3 309.8,92.3 310.6,93.8 311.3,94.3 312.0,94.7 312.7,94.8 313.4,95.3 314.2,96.5 314.9,96.8 315.6,97.5 316.3,96.9 317.0,98.0 317.8,98.8 318.5,98.6 319.2,98.8 319.9,98.9 320.6,99.7 321.4,100.0 322.1,99.9 322.8,100.1 322.8,102.2 322.1,102.0 321.4,102.3 320.6,102.7 319.9,102.9 319.2,103.0 318.5,103.2 317.8,103.9 317.0,103.8 316.3,104.9 315.6,105.2 314.9,105.0 314.2,106.6 313.4,106.5 312.7,106.7 312.0,107.7 311.3,108.0 310.6,108.7 309.8,108.9 309.1,109.8" fill="#bdb565"/><rect x="308.62" y="39.00" width="0.80" height="83.00" fill="#3a3620" /><rect x="322.51" y="39.00" width="0.80" height="83.00" fill="#3a3620" /><rect x="311.22" y="42.00" width="11.19" height="7.50" fill="#0e0e08" opacity="0.9"/><text x="312.12" y="48.6" font-family="Liberation Sans" font-size="8" fill="#d4ca74" textLength="9.2" lengthAdjust="spacingAndGlyphs">Deli</text><rect x="323.31" y="39.00" width="14.69" height="83.00" fill="#4a4524" /><polygon points="323.8,50.5 324.5,50.0 325.3,51.7 326.0,52.0 326.7,52.3 327.4,53.6 328.1,54.5 328.9,54.2 329.6,55.7 330.3,55.3 331.0,55.8 331.7,57.0 332.5,57.4 333.2,57.6 333.9,57.7 334.6,58.0 335.3,58.4 336.1,58.5 336.8,59.0 337.5,58.7 337.5,60.9 336.8,61.2 336.1,61.3 335.3,61.5 334.6,61.7 333.9,62.5 333.2,62.8 332.5,62.4 331.7,62.9 331.0,63.8 330.3,64.3 329.6,65.4 328.9,65.7 328.1,66.6 327.4,66.4 326.7,66.9 326.0,68.2 325.3,68.8 324.5,68.9 323.8,70.2" fill="#bdb565"/><polygon points="323.8,91.4 324.5,92.8 325.3,92.8 326.0,93.5 326.7,93.9 327.4,95.3 328.1,95.3 328.9,95.8 329.6,96.6 330.3,96.7 331.0,97.5 331.7,97.8 332.5,98.6 333.2,99.0 333.9,99.3 334.6,99.5 335.3,99.6 336.1,100.0 336.8,99.8 337.5,99.9 337.5,102.2 336.8,102.2 336.1,102.0 335.3,102.3 334.6,103.1 333.9,102.6 333.2,103.8 332.5,103.9 331.7,103.9 331.0,104.9 330.3,105.5 329.6,105.9 328.9,106.6 328.1,106.8 327.4,107.6 326.7,107.4 326.0,108.0 325.3,109.4 324.5,109.1 323.8,109.5" fill="#bdb565"/><rect x="323.31" y="39.00" width="0.80" height="83.00" fill="#3a3620" /><rect x="337.20" y="39.00" width="0.80" height="83.00" fill="#3a3620" /><rect x="325.91" y="42.00" width="11.19" height="7.50" fill="#0e0e08" opacity="0.9"/><text x="326.81" y="48.6" font-family="Liberation Sans" font-size="8" fill="#d4ca74" textLength="9.2" lengthAdjust="spacingAndGlyphs">Deli</text><rect x="338.00" y="39.00" width="29.38" height="83.00" fill="#4a4524" /><polygon points="338.5,50.4 339.2,50.4 339.9,50.1 340.6,51.5 341.3,50.7 342.0,52.1 342.8,52.4 343.5,51.8 344.2,52.4 344.9,52.7 345.6,53.7 346.3,53.1 347.0,54.0 347.7,54.7 348.4,54.6 349.1,54.8 349.9,54.3 350.6,54.7 351.3,56.0 352.0,55.7 352.7,56.1 353.4,56.1 354.1,55.9 354.8,56.1 355.5,57.4 356.2,56.7 356.9,57.8 357.7,57.4 358.4,57.9 359.1,57.9 359.8,58.1 360.5,58.3 361.2,58.1 361.9,58.6 362.6,58.8 363.3,58.5 364.0,58.6 364.8,58.8 365.5,58.7 366.2,58.8 366.9,59.1 366.9,60.9 366.2,60.9 365.5,60.9 364.8,61.1 364.0,61.2 363.3,61.6 362.6,61.7 361.9,61.7 361.2,61.8 360.5,61.7 359.8,62.5 359.1,62.6 358.4,62.4 357.7,62.9 356.9,62.8 356.2,63.6 355.5,62.8 354.8,63.0 354.1,63.1 353.4,63.5 352.7,64.4 352.0,64.7 351.3,64.5 350.6,65.0 349.9,65.1 349.1,65.2 348.4,65.9 347.7,65.6 347.0,66.1 346.3,66.1 345.6,66.3 344.9,66.9 344.2,67.9 343.5,68.2 342.8,67.5 342.0,68.0 341.3,69.3 340.6,69.6 339.9,69.9 339.2,70.2 338.5,70.3" fill="#bdb565"/><polygon points="338.5,91.3 339.2,92.3 339.9,92.8 340.6,92.7 341.3,92.8 342.0,93.6 342.8,94.1 343.5,93.8 344.2,94.7 344.9,94.2 345.6,95.3 346.3,94.6 347.0,95.7 347.7,95.3 348.4,96.3 349.1,96.4 349.9,96.3 350.6,96.8 351.3,96.2 352.0,97.5 352.7,97.7 353.4,96.8 354.1,97.3 354.8,98.2 355.5,98.5 356.2,98.3 356.9,98.5 357.7,98.4 358.4,98.6 359.1,99.2 359.8,99.1 360.5,98.9 361.2,99.3 361.9,99.5 362.6,99.4 363.3,99.5 364.0,99.6 364.8,99.7 365.5,100.0 366.2,100.1 366.9,99.8 366.9,102.1 366.2,102.0 365.5,102.2 364.8,102.2 364.0,102.4 363.3,102.5 362.6,102.7 361.9,102.4 361.2,102.9 360.5,102.8 359.8,103.2 359.1,103.2 358.4,103.2 357.7,103.4 356.9,103.9 356.2,103.3 355.5,103.6 354.8,104.4 354.1,104.3 353.4,105.0 352.7,104.6 352.0,105.6 351.3,105.5 350.6,105.0 349.9,105.2 349.1,105.7 348.4,105.7 347.7,106.9 347.0,106.4 346.3,106.6 345.6,107.1 344.9,107.6 344.2,107.7 343.5,108.3 342.8,108.8 342.0,108.4 341.3,109.1 340.6,109.5 339.9,109.5 339.2,110.3 338.5,110.2" fill="#bdb565"/><rect x="338.00" y="39.00" width="0.80" height="83.00" fill="#3a3620" /><rect x="366.58" y="39.00" width="0.80" height="83.00" fill="#3a3620" /><rect x="340.60" y="42.00" width="25.88" height="7.50" fill="#0e0e08" opacity="0.9"/><path d="M342.5,48.5 C343.5,44 347.0,42 348.5,43.5 C349.5,45 346.0,48 344.5,47" stroke="#d4ca74" stroke-width="1.1" fill="none"/><text x="351.0" y="48.6" font-family="Liberation Sans" font-size="8" fill="#d4ca74" textLength="14.9" lengthAdjust="spacingAndGlyphs">Delic</text><rect x="367.38" y="39.00" width="14.69" height="83.00" fill="#4a4524" /><polygon points="367.9,49.7 368.6,50.7 369.3,51.2 370.0,51.8 370.8,53.1 371.5,53.0 372.2,54.0 372.9,55.1 373.6,55.5 374.4,55.1 375.1,56.6 375.8,56.5 376.5,57.0 377.2,57.1 378.0,57.9 378.7,58.4 379.4,58.5 380.1,58.9 380.8,58.9 381.6,59.0 381.6,61.0 380.8,60.9 380.1,61.6 379.4,61.7 378.7,62.0 378.0,62.6 377.2,62.6 376.5,63.1 375.8,63.7 375.1,64.0 374.4,64.4 373.6,65.3 372.9,65.5 372.2,66.7 371.5,66.5 370.8,67.5 370.0,68.5 369.3,68.6 368.6,69.3 367.9,69.8" fill="#bdb565"/><polygon points="367.9,92.5 368.6,92.6 369.3,93.3 370.0,94.1 370.8,93.8 371.5,95.3 372.2,95.6 372.9,96.5 373.6,96.1 374.4,97.0 375.1,97.8 375.8,98.0 376.5,97.9 377.2,98.7 378.0,98.9 378.7,99.0 379.4,99.3 380.1,99.8 380.8,99.9 381.6,100.2 381.6,102.1 380.8,102.0 380.1,102.1 379.4,102.3 378.7,102.6 378.0,102.7 377.2,103.2 376.5,104.1 375.8,104.3 375.1,105.2 374.4,105.1 373.6,105.7 372.9,106.3 372.2,106.1 371.5,107.4 370.8,107.7 370.0,108.5 369.3,108.5 368.6,109.7 367.9,110.0" fill="#bdb565"/><rect x="367.38" y="39.00" width="0.80" height="83.00" fill="#3a3620" /><rect x="381.27" y="39.00" width="0.80" height="83.00" fill="#3a3620" /><rect x="369.98" y="42.00" width="11.19" height="7.50" fill="#0e0e08" opacity="0.9"/><text x="370.88" y="48.6" font-family="Liberation Sans" font-size="8" fill="#d4ca74" textLength="9.2" lengthAdjust="spacingAndGlyphs">Deli</text><rect x="382.07" y="39.00" width="14.69" height="83.00" fill="#4a4524" /><polygon points="382.6,50.1 383.3,50.9 384.0,51.4 384.7,51.8 385.5,52.1 386.2,53.9 386.9,53.4 387.6,55.0 388.3,54.9 389.1,56.3 389.8,55.9 390.5,57.1 391.2,57.4 391.9,57.6 392.7,57.5 393.4,58.4 394.1,58.4 394.8,58.6 395.5,58.7 396.3,59.1 396.3,61.1 395.5,61.3 394.8,61.5 394.1,61.7 393.4,62.1 392.7,62.4 391.9,62.2 391.2,63.3 390.5,62.9 389.8,63.5 389.1,65.0 388.3,64.3 387.6,65.9 386.9,66.4 386.2,67.1 385.5,67.8 384.7,67.8 384.0,68.9 383.3,69.4 382.6,69.8" fill="#bdb565"/><polygon points="382.6,91.8 383.3,92.6 384.0,93.1 384.7,94.1 385.5,94.4 386.2,95.0 386.9,95.5 387.6,96.0 388.3,97.2 389.1,97.0 389.8,97.2 390.5,98.0 391.2,97.7 391.9,98.5 392.7,99.4 393.4,99.1 394.1,99.6 394.8,99.7 395.5,99.7 396.3,99.9 396.3,102.1 395.5,101.9 394.8,102.3 394.1,102.8 393.4,103.1 392.7,103.1 391.9,103.5 391.2,103.3 390.5,104.0 389.8,105.0 389.1,105.1 388.3,105.9 387.6,106.5 386.9,106.5 386.2,106.6 385.5,107.1 384.7,107.8 384.0,108.5 383.3,110.0 382.6,110.5" fill="#bdb565"/><rect x="382.07" y="39.00" width="0.80" height="83.00" fill="#3a3620" /><rect x="395.96" y="39.00" width="0.80" height="83.00" fill="#3a3620" /><rect x="384.67" y="42.00" width="11.19" height="7.50" fill="#0e0e08" opacity="0.9"/><text x="385.57" y="48.6" font-family="Liberation Sans" font-size="8" fill="#d4ca74" textLength="9.2" lengthAdjust="spacingAndGlyphs">Deli</text><rect x="396.76" y="39.00" width="29.38" height="83.00" fill="#4a4524" /><polygon points="397.3,50.1 398.0,50.4 398.7,50.5 399.4,51.3 400.1,51.3 400.8,51.2 401.5,51.5 402.2,52.2 402.9,52.5 403.6,52.7 404.4,53.4 405.1,53.7 405.8,53.6 406.5,54.6 407.2,53.8 407.9,55.2 408.6,55.5 409.3,54.6 410.0,55.2 410.7,55.1 411.4,55.7 412.2,55.9 412.9,56.1 413.6,56.3 414.3,56.4 415.0,57.4 415.7,56.9 416.4,57.2 417.1,57.3 417.8,57.7 418.5,58.1 419.3,58.2 420.0,58.1 420.7,58.7 421.4,58.8 422.1,58.4 422.8,58.5 423.5,59.0 424.2,58.8 424.9,58.7 425.6,59.0 425.6,60.9 424.9,61.1 424.2,61.3 423.5,61.1 422.8,61.3 422.1,61.4 421.4,61.3 420.7,61.7 420.0,62.1 419.3,61.9 418.5,62.0 417.8,62.0 417.1,62.7 416.4,62.5 415.7,63.3 415.0,62.4 414.3,62.7 413.6,63.4 412.9,63.3 412.2,64.0 411.4,64.3 410.7,64.5 410.0,65.0 409.3,65.0 408.6,64.7 407.9,65.1 407.2,65.7 406.5,66.2 405.8,66.6 405.1,66.6 404.4,66.6 403.6,67.5 402.9,68.1 402.2,67.5 401.5,68.0 400.8,68.1 400.1,68.8 399.4,69.0 398.7,69.8 398.0,69.8 397.3,70.6" fill="#bdb565"/><polygon points="397.3,91.7 398.0,92.6 398.7,93.1 399.4,93.3 400.1,93.6 400.8,93.9 401.5,93.4 402.2,93.7 402.9,94.8 403.6,94.3 404.4,94.5 405.1,94.9 405.8,95.4 406.5,95.9 407.2,95.6 407.9,96.7 408.6,95.9 409.3,96.8 410.0,97.2 410.7,97.0 411.4,97.4 412.2,97.5 412.9,98.1 413.6,98.0 414.3,97.9 415.0,98.3 415.7,97.9 416.4,98.5 417.1,99.1 417.8,98.7 418.5,99.2 419.3,98.8 420.0,99.2 420.7,99.5 421.4,99.6 422.1,99.6 422.8,99.6 423.5,100.1 424.2,99.9 424.9,99.8 425.6,100.1 425.6,102.2 424.9,102.2 424.2,102.2 423.5,102.1 422.8,102.1 422.1,102.6 421.4,102.6 420.7,102.8 420.0,102.6 419.3,103.1 418.5,103.0 417.8,103.4 417.1,103.7 416.4,103.2 415.7,103.9 415.0,104.1 414.3,103.9 413.6,104.4 412.9,104.8 412.2,104.8 411.4,104.9 410.7,104.4 410.0,105.7 409.3,105.7 408.6,105.1 407.9,106.1 407.2,105.5 406.5,107.0 405.8,107.2 405.1,107.2 404.4,106.7 403.6,107.9 402.9,108.1 402.2,107.6 401.5,108.0 400.8,108.0 400.1,109.4 399.4,109.8 398.7,109.8 398.0,109.2 397.3,109.8" fill="#bdb565"/><rect x="396.76" y="39.00" width="0.80" height="83.00" fill="#3a3620" /><rect x="425.34" y="39.00" width="0.80" height="83.00" fill="#3a3620" /><rect x="399.36" y="42.00" width="25.88" height="7.50" fill="#0e0e08" opacity="0.9"/><path d="M401.26,48.5 C402.26,44 405.76,42 407.26,43.5 C408.26,45 404.76,48 403.26,47" stroke="#d4ca74" stroke-width="1.1" fill="none"/><text x="409.76" y="48.6" font-family="Liberation Sans" font-size="8" fill="#d4ca74" textLength="14.9" lengthAdjust="spacingAndGlyphs">Delic</text><rect x="540.00" y="39.00" width="18.60" height="83.00" fill="#4a4524" /><polygon points="540.5,49.4 541.2,50.3 541.9,50.5 542.6,51.3 543.3,52.2 544.0,52.5 544.7,53.4 545.4,53.0 546.1,53.9 546.8,54.5 547.5,55.2 548.2,54.9 548.9,56.2 549.7,55.7 550.4,56.3 551.1,56.3 551.8,57.1 552.5,57.8 553.2,58.0 553.9,58.1 554.6,58.3 555.3,58.7 556.0,58.4 556.7,59.0 557.4,58.8 558.1,58.9 558.1,61.0 557.4,60.9 556.7,61.3 556.0,61.3 555.3,61.3 554.6,61.8 553.9,62.1 553.2,62.5 552.5,62.2 551.8,63.0 551.1,63.3 550.4,64.1 549.7,63.6 548.9,64.7 548.2,64.7 547.5,65.5 546.8,65.2 546.1,66.2 545.4,66.1 544.7,67.3 544.0,67.8 543.3,67.4 542.6,69.0 541.9,69.4 541.2,69.3 540.5,70.6" fill="#bdb565"/><polygon points="540.5,91.8 541.2,93.0 541.9,92.4 542.6,93.2 543.3,93.4 544.0,93.7 544.7,94.3 545.4,95.4 546.1,95.9 546.8,96.5 547.5,96.2 548.2,96.7 548.9,96.5 549.7,97.3 550.4,98.2 551.1,98.3 551.8,98.2 552.5,98.4 553.2,98.9 553.9,98.7 554.6,99.5 555.3,99.7 556.0,99.4 556.7,99.6 557.4,99.8 558.1,99.9 558.1,102.3 557.4,102.2 556.7,102.0 556.0,102.6 555.3,102.4 554.6,102.4 553.9,103.3 553.2,102.8 552.5,103.3 551.8,104.2 551.1,104.1 550.4,104.9 549.7,104.5 548.9,104.4 548.2,105.9 547.5,106.2 546.8,105.5 546.1,106.1 545.4,106.3 544.7,107.9 544.0,108.1 543.3,108.1 542.6,108.4 541.9,109.1 541.2,110.3 540.5,109.5" fill="#bdb565"/><rect x="540.00" y="39.00" width="0.80" height="83.00" fill="#3a3620" /><rect x="557.80" y="39.00" width="0.80" height="83.00" fill="#3a3620" /><rect x="542.60" y="42.00" width="15.10" height="7.50" fill="#0e0e08" opacity="0.9"/><text x="543.5" y="48.6" font-family="Liberation Sans" font-size="8" fill="#d4ca74" textLength="13.1" lengthAdjust="spacingAndGlyphs">Deli</text><rect x="540.00" y="39.00" width="3.00" height="83.00" fill="#b8b49a" opacity="0.75"/><rect x="555.60" y="39.00" width="3.00" height="83.00" fill="#b8b49a" opacity="0.75"/><path d="M541,122 Q541,49 544,39" stroke="#3838e8" stroke-width="1.2" fill="none"/><path d="M553.6,39 Q557.6,59 557.6,122" stroke="#3838e8" stroke-width="1.2" fill="none"/><rect x="893.00" y="39.00" width="18.00" height="83.00" fill="#4a4524" /><polygon points="893.5,50.4 894.2,50.1 894.9,50.8 895.6,51.5 896.3,52.6 897.0,53.0 897.8,53.2 898.5,54.0 899.2,53.9 899.9,54.3 900.6,55.7 901.3,55.8 902.0,55.4 902.7,56.7 903.4,57.2 904.1,56.6 904.8,57.4 905.5,57.3 906.2,57.8 907.0,58.4 907.7,58.3 908.4,58.8 909.1,58.9 909.8,59.0 910.5,58.8 910.5,61.0 909.8,61.0 909.1,61.2 908.4,61.6 907.7,61.6 907.0,61.5 906.2,61.8 905.5,62.3 904.8,62.5 904.1,63.2 903.4,63.9 902.7,63.7 902.0,64.6 901.3,65.1 900.6,65.5 899.9,65.0 899.2,65.2 898.5,65.9 897.8,66.4 897.0,66.9 896.3,67.6 895.6,68.8 894.9,68.7 894.2,70.1 893.5,69.7" fill="#bdb565"/><polygon points="893.5,92.3 894.2,92.6 894.9,93.4 895.6,94.0 896.3,93.7 897.0,94.4 897.8,95.1 898.5,95.4 899.2,95.0 899.9,96.6 900.6,96.0 901.3,96.6 902.0,96.6 902.7,97.2 903.4,98.3 904.1,97.8 904.8,98.8 905.5,98.4 906.2,99.0 907.0,99.5 907.7,99.3 908.4,99.9 909.1,99.7 909.8,100.0 910.5,99.9 910.5,102.1 909.8,102.0 909.1,102.2 908.4,102.1 907.7,102.3 907.0,102.9 906.2,102.7 905.5,103.0 904.8,103.4 904.1,103.8 903.4,103.5 902.7,104.2 902.0,104.2 901.3,104.9 900.6,105.0 899.9,105.6 899.2,106.9 898.5,107.4 897.8,106.8 897.0,107.4 896.3,107.8 895.6,109.1 894.9,109.7 894.2,110.1 893.5,110.1" fill="#bdb565"/><rect x="893.00" y="39.00" width="0.80" height="83.00" fill="#3a3620" /><rect x="910.20" y="39.00" width="0.80" height="83.00" fill="#3a3620" /><rect x="895.60" y="42.00" width="14.50" height="7.50" fill="#0e0e08" opacity="0.9"/><text x="896.5" y="48.6" font-family="Liberation Sans" font-size="8" fill="#d4ca74" textLength="12.5" lengthAdjust="spacingAndGlyphs">Deli</text><rect x="893.00" y="39.00" width="3.00" height="83.00" fill="#b8b49a" opacity="0.75"/><rect x="908.00" y="39.00" width="3.00" height="83.00" fill="#b8b49a" opacity="0.75"/><path d="M894,122 Q894,49 897,39" stroke="#3838e8" stroke-width="1.2" fill="none"/><path d="M906,39 Q910,59 910,122" stroke="#3838e8" stroke-width="1.2" fill="none"/><rect x="951.50" y="39.00" width="29.20" height="83.00" fill="#4a4524" /><polygon points="952.0,49.4 952.7,50.6 953.4,50.3 954.1,50.6 954.8,50.8 955.5,51.1 956.2,51.9 956.9,51.7 957.6,52.1 958.3,53.3 959.0,53.3 959.8,53.6 960.5,54.4 961.2,54.1 961.9,54.8 962.6,54.2 963.3,55.1 964.0,55.3 964.7,56.0 965.4,55.0 966.1,55.9 966.8,56.1 967.5,55.7 968.2,57.0 968.9,57.1 969.6,57.6 970.3,57.0 971.0,57.9 971.7,57.5 972.4,57.6 973.2,57.6 973.9,58.4 974.6,58.2 975.3,58.5 976.0,58.6 976.7,58.6 977.4,58.9 978.1,58.7 978.8,58.7 979.5,59.0 980.2,58.8 980.2,61.1 979.5,61.0 978.8,61.3 978.1,61.0 977.4,61.3 976.7,61.6 976.0,61.3 975.3,61.4 974.6,61.8 973.9,61.6 973.2,62.3 972.4,61.9 971.7,62.4 971.0,62.7 970.3,62.5 969.6,62.5 968.9,63.6 968.2,62.9 967.5,63.3 966.8,63.3 966.1,64.2 965.4,64.4 964.7,65.1 964.0,65.2 963.3,65.4 962.6,65.9 961.9,65.9 961.2,66.0 960.5,66.3 959.8,66.7 959.0,66.4 958.3,67.6 957.6,67.1 956.9,67.7 956.2,67.5 955.5,68.9 954.8,68.5 954.1,68.5 953.4,69.3 952.7,69.2 952.0,70.3" fill="#bdb565"/><polygon points="952.0,92.0 952.7,91.8 953.4,92.8 954.1,92.9 954.8,92.7 955.5,93.0 956.2,94.3 956.9,93.4 957.6,94.6 958.3,94.4 959.0,94.8 959.8,95.2 960.5,96.0 961.2,95.0 961.9,95.3 962.6,95.7 963.3,95.8 964.0,96.4 964.7,96.5 965.4,96.9 966.1,97.1 966.8,97.4 967.5,97.0 968.2,98.1 968.9,98.5 969.6,97.7 970.3,98.6 971.0,98.5 971.7,99.1 972.4,99.1 973.2,99.2 973.9,99.5 974.6,99.1 975.3,99.4 976.0,99.7 976.7,99.7 977.4,99.7 978.1,99.9 978.8,100.0 979.5,100.0 980.2,100.2 980.2,102.0 979.5,102.1 978.8,102.1 978.1,102.1 977.4,102.2 976.7,102.4 976.0,102.6 975.3,102.7 974.6,102.8 973.9,102.9 973.2,102.8 972.4,103.0 971.7,102.9 971.0,103.1 970.3,103.6 969.6,103.8 968.9,104.1 968.2,104.4 967.5,104.1 966.8,104.5 966.1,104.5 965.4,105.6 964.7,104.9 964.0,105.1 963.3,105.1 962.6,106.4 961.9,106.3 961.2,106.8 960.5,106.2 959.8,106.9 959.0,106.6 958.3,107.3 957.6,107.6 956.9,108.6 956.2,108.3 955.5,109.1 954.8,109.4 954.1,109.8 953.4,109.3 952.7,109.6 952.0,110.7" fill="#bdb565"/><rect x="951.50" y="39.00" width="0.80" height="83.00" fill="#3a3620" /><rect x="979.90" y="39.00" width="0.80" height="83.00" fill="#3a3620" /><rect x="954.10" y="42.00" width="25.70" height="7.50" fill="#0e0e08" opacity="0.9"/><path d="M956.0,48.5 C957.0,44 960.5,42 962.0,43.5 C963.0,45 959.5,48 958.0,47" stroke="#d4ca74" stroke-width="1.1" fill="none"/><text x="964.5" y="48.6" font-family="Liberation Sans" font-size="8" fill="#d4ca74" textLength="14.7" lengthAdjust="spacingAndGlyphs">Delic</text><rect x="951.50" y="39.00" width="3.00" height="83.00" fill="#b8b49a" opacity="0.75"/><rect x="970.00" y="39.00" width="10.70" height="83.00" fill="#b8b49a" opacity="0.75"/><path d="M952.5,122 Q952.5,49 955.5,39" stroke="#3838e8" stroke-width="1.2" fill="none"/><path d="M968.0,39 Q979.7,59 979.7,122" stroke="#3838e8" stroke-width="1.2" fill="none"/><rect x="426.14" y="125.00" width="14.69" height="84.00" fill="#26364e" /><polygon points="426.7,137.6 427.4,136.4 428.2,137.2 428.9,136.3 429.6,135.9 430.3,136.2 431.0,136.4 431.7,135.5 432.4,135.3 433.1,135.4 433.8,135.3 434.5,136.4 435.3,135.4 436.0,135.1 436.7,135.3 437.4,136.0 438.1,135.8 438.8,136.6 439.5,136.7 440.2,137.8 440.2,155.1 439.5,156.3 438.8,157.1 438.1,156.5 437.4,157.1 436.7,156.8 436.0,156.9 435.3,156.2 434.5,157.6 433.8,156.9 433.1,157.3 432.4,157.5 431.7,157.8 431.0,157.3 430.3,156.4 429.6,157.9 428.9,159.7 428.2,158.8 427.4,155.2 426.7,154.7" fill="#5b82b6"/><polygon points="426.7,176.5 427.4,176.5 428.2,176.3 428.9,174.8 429.6,171.7 430.3,173.3 431.0,174.6 431.7,175.0 432.4,175.2 433.1,175.3 433.8,175.0 434.5,174.0 435.3,174.5 436.0,175.1 436.7,175.3 437.4,175.5 438.1,175.0 438.8,172.8 439.5,175.8 440.2,177.2 440.2,195.8 439.5,197.3 438.8,197.5 438.1,197.8 437.4,197.9 436.7,198.2 436.0,198.4 435.3,198.9 434.5,198.3 433.8,197.6 433.1,198.9 432.4,198.0 431.7,198.2 431.0,198.3 430.3,198.2 429.6,197.4 428.9,197.3 428.2,197.8 427.4,196.0 426.7,195.6" fill="#5b82b6"/><rect x="426.14" y="125.00" width="0.80" height="84.00" fill="#202c40" /><rect x="440.03" y="125.00" width="0.80" height="84.00" fill="#202c40" /><rect x="428.74" y="128.00" width="11.19" height="7.50" fill="#0e0e08" opacity="0.9"/><text x="429.64" y="134.6" font-family="Liberation Sans" font-size="8" fill="#98b8e8" textLength="9.2" lengthAdjust="spacingAndGlyphs">Deli</text><rect x="440.83" y="125.00" width="14.69" height="84.00" fill="#2e5a36" /><polygon points="441.4,138.2 442.1,137.0 442.9,136.5 443.6,135.7 444.3,136.6 445.0,135.7 445.7,135.8 446.4,135.6 447.1,135.7 447.8,136.3 448.5,136.4 449.2,135.3 449.9,136.5 450.7,136.1 451.4,136.3 452.1,135.2 452.8,136.3 453.5,136.1 454.2,137.3 454.9,138.4 454.9,154.7 454.2,156.2 453.5,155.6 452.8,156.3 452.1,156.6 451.4,156.7 450.7,159.7 449.9,157.4 449.2,158.6 448.5,156.4 447.8,156.7 447.1,157.7 446.4,156.6 445.7,156.5 445.0,160.0 444.3,159.3 443.6,157.7 442.9,159.8 442.1,157.6 441.4,155.1" fill="#6cc57c"/><polygon points="441.4,176.6 442.1,176.1 442.9,175.3 443.6,175.9 444.3,175.5 445.0,175.1 445.7,175.0 446.4,171.4 447.1,175.6 447.8,174.0 448.5,172.1 449.2,174.9 449.9,175.6 450.7,175.1 451.4,174.6 452.1,173.8 452.8,176.0 453.5,176.2 454.2,173.0 454.9,175.8 454.9,195.5 454.2,196.7 453.5,198.0 452.8,197.5 452.1,198.7 451.4,198.7 450.7,198.5 449.9,198.5 449.2,197.9 448.5,198.0 447.8,197.5 447.1,198.3 446.4,197.9 445.7,198.0 445.0,198.7 444.3,197.9 443.6,197.6 442.9,197.2 442.1,196.4 441.4,195.8" fill="#6cc57c"/><rect x="440.83" y="125.00" width="0.80" height="84.00" fill="#264a2c" /><rect x="454.72" y="125.00" width="0.80" height="84.00" fill="#264a2c" /><rect x="443.43" y="128.00" width="11.19" height="7.50" fill="#0e0e08" opacity="0.9"/><text x="444.33" y="134.6" font-family="Liberation Sans" font-size="8" fill="#98dc98" textLength="9.2" lengthAdjust="spacingAndGlyphs">Deli</text><rect x="455.52" y="125.00" width="14.69" height="84.00" fill="#26364e" /><polygon points="456.1,137.1 456.8,137.6 457.5,136.1 458.2,136.1 459.0,136.0 459.7,136.1 460.4,136.3 461.1,135.5 461.8,136.0 462.5,136.5 463.2,136.4 463.9,136.0 464.6,135.2 465.4,136.2 466.1,135.5 466.8,135.5 467.5,135.6 468.2,137.2 468.9,136.8 469.6,138.4 469.6,154.4 468.9,158.9 468.2,158.1 467.5,156.2 466.8,158.1 466.1,159.3 465.4,156.4 464.6,157.4 463.9,156.6 463.2,157.2 462.5,156.6 461.8,158.7 461.1,156.7 460.4,156.6 459.7,157.1 459.0,159.7 458.2,158.1 457.5,155.6 456.8,155.4 456.1,154.7" fill="#5b82b6"/><polygon points="456.1,177.0 456.8,177.1 457.5,176.5 458.2,175.2 459.0,172.7 459.7,172.0 460.4,175.6 461.1,175.7 461.8,172.2 462.5,174.7 463.2,175.2 463.9,175.4 464.6,175.2 465.4,174.7 466.1,175.1 466.8,175.2 467.5,176.0 468.2,173.6 468.9,174.9 469.6,177.1 469.6,195.7 468.9,197.4 468.2,197.7 467.5,198.2 466.8,198.2 466.1,197.5 465.4,198.7 464.6,198.9 463.9,197.5 463.2,198.6 462.5,197.5 461.8,197.7 461.1,197.8 460.4,198.8 459.7,198.6 459.0,198.0 458.2,197.4 457.5,197.8 456.8,196.4 456.1,195.8" fill="#5b82b6"/><rect x="455.52" y="125.00" width="0.80" height="84.00" fill="#202c40" /><rect x="469.41" y="125.00" width="0.80" height="84.00" fill="#202c40" /><rect x="458.12" y="128.00" width="11.19" height="7.50" fill="#0e0e08" opacity="0.9"/><text x="459.02" y="134.6" font-family="Liberation Sans" font-size="8" fill="#98b8e8" textLength="9.2" lengthAdjust="spacingAndGlyphs">Deli</text><rect x="470.21" y="125.00" width="14.69" height="84.00" fill="#2e5a36" /><polygon points="470.8,137.8 471.5,137.8 472.2,137.1 472.9,136.3 473.7,136.1 474.4,135.7 475.1,135.7 475.8,135.5 476.5,135.4 477.2,136.1 477.9,136.5 478.6,135.5 479.3,136.1 480.0,136.3 480.8,135.0 481.5,135.5 482.2,136.8 482.9,137.2 483.6,136.5 484.3,137.0 484.3,155.3 483.6,154.8 482.9,156.0 482.2,156.6 481.5,156.3 480.8,156.2 480.0,156.7 479.3,156.7 478.6,157.1 477.9,157.1 477.2,156.4 476.5,156.9 475.8,156.5 475.1,159.9 474.4,156.4 473.7,156.7 472.9,158.1 472.2,156.3 471.5,156.2 470.8,155.9" fill="#6cc57c"/><polygon points="470.8,177.5 471.5,177.2 472.2,176.3 472.9,175.0 473.7,172.3 474.4,175.3 475.1,175.3 475.8,175.2 476.5,175.6 477.2,174.6 477.9,174.4 478.6,175.6 479.3,175.7 480.0,173.8 480.8,175.6 481.5,172.5 482.2,175.0 482.9,175.5 483.6,176.7 484.3,174.9 484.3,196.7 483.6,196.4 482.9,197.5 482.2,198.2 481.5,197.4 480.8,198.1 480.0,199.0 479.3,198.5 478.6,197.9 477.9,198.2 477.2,198.5 476.5,198.3 475.8,198.7 475.1,198.0 474.4,197.7 473.7,198.7 472.9,198.4 472.2,196.7 471.5,197.1 470.8,195.7" fill="#6cc57c"/><rect x="470.21" y="125.00" width="0.80" height="84.00" fill="#264a2c" /><rect x="484.10" y="125.00" width="0.80" height="84.00" fill="#264a2c" /><rect x="472.81" y="128.00" width="11.19" height="7.50" fill="#0e0e08" opacity="0.9"/><text x="473.71000000000004" y="134.6" font-family="Liberation Sans" font-size="8" fill="#98dc98" textLength="9.2" lengthAdjust="spacingAndGlyphs">Deli</text><rect x="484.90" y="125.00" width="14.69" height="84.00" fill="#26364e" /><polygon points="485.5,138.0 486.2,137.4 486.9,137.0 487.6,135.5 488.3,135.1 489.1,136.5 489.8,136.1 490.5,135.8 491.2,136.1 491.9,136.3 492.6,136.5 493.3,135.7 494.0,135.7 494.7,136.3 495.4,136.4 496.2,136.4 496.9,136.2 497.6,136.6 498.3,137.1 499.0,138.4 499.0,156.1 498.3,157.1 497.6,155.6 496.9,156.2 496.2,156.6 495.4,157.0 494.7,156.7 494.0,158.6 493.3,156.8 492.6,156.9 491.9,156.2 491.2,156.6 490.5,157.6 489.8,157.1 489.1,157.4 488.3,157.7 487.6,157.3 486.9,155.7 486.2,157.3 485.5,154.6" fill="#5b82b6"/><polygon points="485.5,174.0 486.2,176.2 486.9,175.7 487.6,175.6 488.3,175.0 489.1,172.3 489.8,174.1 490.5,175.5 491.2,175.2 491.9,174.5 492.6,174.5 493.3,175.3 494.0,174.6 494.7,172.5 495.4,175.7 496.2,173.3 496.9,172.1 497.6,175.9 498.3,176.5 499.0,177.4 499.0,196.6 498.3,196.1 497.6,197.1 496.9,198.0 496.2,198.7 495.4,198.4 494.7,198.9 494.0,197.6 493.3,198.6 492.6,197.7 491.9,198.3 491.2,198.8 490.5,197.9 489.8,197.4 489.1,197.5 488.3,198.6 487.6,197.2 486.9,196.6 486.2,196.1 485.5,196.2" fill="#5b82b6"/><rect x="484.90" y="125.00" width="0.80" height="84.00" fill="#202c40" /><rect x="498.79" y="125.00" width="0.80" height="84.00" fill="#202c40" /><rect x="487.50" y="128.00" width="11.19" height="7.50" fill="#0e0e08" opacity="0.9"/><text x="488.4" y="134.6" font-family="Liberation Sans" font-size="8" fill="#98b8e8" textLength="9.2" lengthAdjust="spacingAndGlyphs">Deli</text><rect x="499.59" y="125.00" width="14.69" height="84.00" fill="#2e5a36" /><polygon points="500.2,138.0 500.9,137.8 501.6,136.4 502.3,137.0 503.0,135.8 503.7,136.5 504.5,135.5 505.2,136.3 505.9,135.2 506.6,136.1 507.3,135.7 508.0,136.0 508.7,136.0 509.4,135.7 510.1,135.9 510.8,136.4 511.5,136.6 512.3,136.6 513.0,136.4 513.7,137.3 513.7,156.8 513.0,156.2 512.3,155.7 511.5,156.2 510.8,156.3 510.1,156.3 509.4,156.2 508.7,157.1 508.0,157.0 507.3,160.2 506.6,156.3 505.9,156.8 505.2,158.3 504.5,159.9 503.7,157.4 503.0,156.9 502.3,157.2 501.6,156.1 500.9,155.4 500.2,156.8" fill="#6cc57c"/><polygon points="500.2,176.7 500.9,176.8 501.6,175.5 502.3,175.8 503.0,175.0 503.7,173.3 504.5,174.3 505.2,175.1 505.9,174.7 506.6,175.8 507.3,175.1 508.0,175.0 508.7,174.4 509.4,174.4 510.1,174.9 510.8,173.2 511.5,172.8 512.3,176.7 513.0,176.9 513.7,177.1 513.7,195.8 513.0,196.3 512.3,197.2 511.5,197.6 510.8,199.0 510.1,197.5 509.4,197.9 508.7,198.6 508.0,197.5 507.3,198.3 506.6,198.8 505.9,198.0 505.2,198.0 504.5,197.9 503.7,198.0 503.0,198.4 502.3,198.2 501.6,197.9 500.9,196.3 500.2,196.3" fill="#6cc57c"/><rect x="499.59" y="125.00" width="0.80" height="84.00" fill="#264a2c" /><rect x="513.48" y="125.00" width="0.80" height="84.00" fill="#264a2c" /><rect x="502.19" y="128.00" width="11.19" height="7.50" fill="#0e0e08" opacity="0.9"/><text x="503.09000000000003" y="134.6" font-family="Liberation Sans" font-size="8" fill="#98dc98" textLength="9.2" lengthAdjust="spacingAndGlyphs">Deli</text><rect x="514.28" y="125.00" width="14.69" height="84.00" fill="#26364e" /><polygon points="514.9,137.9 515.6,136.6 516.3,136.3 517.0,136.9 517.7,136.1 518.4,135.7 519.1,135.1 519.9,135.4 520.6,135.5 521.3,135.9 522.0,136.1 522.7,136.2 523.4,135.1 524.1,136.5 524.8,136.1 525.5,136.4 526.2,135.7 527.0,136.6 527.7,137.0 528.4,138.1 528.4,157.6 527.7,155.8 527.0,157.7 526.2,155.9 525.5,156.9 524.8,157.3 524.1,157.7 523.4,156.2 522.7,157.1 522.0,159.0 521.3,156.5 520.6,156.8 519.9,157.7 519.1,157.2 518.4,157.0 517.7,157.5 517.0,156.7 516.3,155.6 515.6,157.5 514.9,154.6" fill="#5b82b6"/><polygon points="514.9,176.7 515.6,173.8 516.3,176.4 517.0,176.0 517.7,174.8 518.4,171.3 519.1,175.7 519.9,175.5 520.6,175.5 521.3,175.1 522.0,174.4 522.7,172.3 523.4,175.1 524.1,172.2 524.8,171.7 525.5,175.7 526.2,172.3 527.0,176.2 527.7,176.4 528.4,176.7 528.4,196.0 527.7,196.2 527.0,197.9 526.2,197.1 525.5,198.4 524.8,197.6 524.1,198.1 523.4,198.4 522.7,197.8 522.0,197.7 521.3,197.7 520.6,198.9 519.9,198.2 519.1,197.4 518.4,197.8 517.7,198.6 517.0,197.0 516.3,197.3 515.6,197.4 514.9,196.6" fill="#5b82b6"/><rect x="514.28" y="125.00" width="0.80" height="84.00" fill="#202c40" /><rect x="528.17" y="125.00" width="0.80" height="84.00" fill="#202c40" /><rect x="516.88" y="128.00" width="11.19" height="7.50" fill="#0e0e08" opacity="0.9"/><text x="517.78" y="134.6" font-family="Liberation Sans" font-size="8" fill="#98b8e8" textLength="9.2" lengthAdjust="spacingAndGlyphs">Deli</text><rect x="528.97" y="125.00" width="14.69" height="84.00" fill="#2e5a36" /><polygon points="529.6,137.3 530.3,136.4 531.0,137.2 531.7,136.6 532.4,136.1 533.1,135.2 533.8,135.6 534.5,135.2 535.2,136.0 536.0,136.3 536.7,136.1 537.4,135.0 538.1,136.4 538.8,136.3 539.5,136.1 540.2,135.2 540.9,136.6 541.6,137.4 542.3,137.3 543.1,136.9 543.1,154.4 542.3,155.2 541.6,156.3 540.9,155.9 540.2,157.3 539.5,156.3 538.8,156.3 538.1,160.3 537.4,156.7 536.7,157.7 536.0,157.5 535.2,160.2 534.5,157.1 533.8,159.3 533.1,158.4 532.4,157.4 531.7,157.1 531.0,157.9 530.3,155.3 529.6,155.2" fill="#6cc57c"/><polygon points="529.6,173.9 530.3,177.1 531.0,173.7 531.7,175.5 532.4,173.6 533.1,174.8 533.8,174.7 534.5,174.6 535.2,173.5 536.0,175.3 536.7,174.8 537.4,174.8 538.1,174.7 538.8,173.9 539.5,174.1 540.2,171.3 540.9,174.8 541.6,176.2 542.3,176.8 543.1,176.5 543.1,195.4 542.3,197.2 541.6,196.8 540.9,197.4 540.2,197.4 539.5,198.1 538.8,199.0 538.1,198.0 537.4,199.0 536.7,198.3 536.0,197.4 535.2,198.1 534.5,197.5 533.8,197.8 533.1,198.9 532.4,198.9 531.7,197.1 531.0,196.7 530.3,196.6 529.6,195.5" fill="#6cc57c"/><rect x="528.97" y="125.00" width="0.80" height="84.00" fill="#264a2c" /><rect x="542.86" y="125.00" width="0.80" height="84.00" fill="#264a2c" /><rect x="531.57" y="128.00" width="11.19" height="7.50" fill="#0e0e08" opacity="0.9"/><text x="532.47" y="134.6" font-family="Liberation Sans" font-size="8" fill="#98dc98" textLength="9.2" lengthAdjust="spacingAndGlyphs">Deli</text><rect x="602.40" y="125.00" width="14.69" height="84.00" fill="#26364e" /><polygon points="603.0,138.0 603.7,137.1 604.4,136.9 605.1,136.3 605.8,136.4 606.5,137.0 607.3,136.5 608.0,136.7 608.7,137.2 609.4,136.4 610.1,137.2 610.8,136.8 611.5,136.3 612.2,136.3 612.9,136.3 613.6,137.5 614.4,136.6 615.1,137.9 615.8,137.4 616.5,138.9 616.5,151.4 615.8,152.7 615.1,152.2 614.4,155.6 613.6,153.5 612.9,153.2 612.2,153.0 611.5,153.0 610.8,156.4 610.1,152.9 609.4,152.9 608.7,155.0 608.0,155.0 607.3,153.1 606.5,155.4 605.8,155.0 605.1,152.8 604.4,154.9 603.7,151.6 603.0,151.2" fill="#5b82b6"/><polygon points="603.0,180.3 603.7,182.4 604.4,184.0 605.1,181.7 605.8,182.3 606.5,182.9 607.3,183.0 608.0,182.3 608.7,183.7 609.4,183.5 610.1,182.9 610.8,181.8 611.5,183.4 612.2,182.6 612.9,181.2 613.6,179.4 614.4,181.0 615.1,180.9 615.8,183.8 616.5,184.8 616.5,193.4 615.8,194.1 615.1,193.5 614.4,193.7 613.6,194.5 612.9,194.9 612.2,194.0 611.5,194.1 610.8,194.0 610.1,194.0 609.4,194.1 608.7,194.4 608.0,193.8 607.3,194.5 606.5,194.3 605.8,194.0 605.1,193.6 604.4,194.0 603.7,193.9 603.0,193.5" fill="#5b82b6"/><rect x="602.40" y="125.00" width="0.80" height="84.00" fill="#202c40" /><rect x="616.29" y="125.00" width="0.80" height="84.00" fill="#202c40" /><rect x="605.00" y="128.00" width="11.19" height="7.50" fill="#0e0e08" opacity="0.9"/><text x="605.9" y="134.6" font-family="Liberation Sans" font-size="8" fill="#98b8e8" textLength="9.2" lengthAdjust="spacingAndGlyphs">Deli</text><rect x="617.09" y="125.00" width="14.69" height="84.00" fill="#26364e" /><polygon points="617.7,137.7 618.4,137.2 619.1,137.5 619.8,136.7 620.5,136.5 621.2,136.4 622.0,137.5 622.7,137.5 623.4,137.5 624.1,136.8 624.8,136.9 625.5,136.3 626.2,137.1 626.9,136.0 627.6,137.1 628.3,136.7 629.0,137.8 629.8,137.0 630.5,138.3 631.2,138.4 631.2,153.2 630.5,151.5 629.8,155.4 629.0,152.5 628.3,156.1 627.6,153.4 626.9,152.2 626.2,152.4 625.5,153.7 624.8,155.3 624.1,153.3 623.4,153.0 622.7,152.4 622.0,153.2 621.2,153.4 620.5,152.4 619.8,152.9 619.1,153.7 618.4,153.3 617.7,151.5" fill="#5b82b6"/><polygon points="617.7,184.1 618.4,180.9 619.1,183.4 619.8,181.6 620.5,183.3 621.2,183.4 622.0,182.9 622.7,183.1 623.4,181.8 624.1,179.9 624.8,183.5 625.5,182.6 626.2,182.8 626.9,180.0 627.6,183.5 628.3,180.3 629.0,181.0 629.8,183.2 630.5,181.4 631.2,184.3 631.2,192.8 630.5,192.7 629.8,193.2 629.0,193.6 628.3,194.9 627.6,193.6 626.9,193.6 626.2,193.9 625.5,194.2 624.8,194.9 624.1,193.5 623.4,194.4 622.7,194.8 622.0,194.1 621.2,194.5 620.5,193.8 619.8,193.8 619.1,193.0 618.4,193.0 617.7,193.3" fill="#5b82b6"/><rect x="617.09" y="125.00" width="0.80" height="84.00" fill="#202c40" /><rect x="630.98" y="125.00" width="0.80" height="84.00" fill="#202c40" /><rect x="619.69" y="128.00" width="11.19" height="7.50" fill="#0e0e08" opacity="0.9"/><text x="620.59" y="134.6" font-family="Liberation Sans" font-size="8" fill="#98b8e8" textLength="9.2" lengthAdjust="spacingAndGlyphs">Deli</text><rect x="631.78" y="125.00" width="14.69" height="84.00" fill="#26364e" /><polygon points="632.4,138.1 633.1,138.1 633.8,137.0 634.5,137.9 635.2,137.2 635.9,136.9 636.6,136.5 637.4,137.4 638.1,136.1 638.8,137.0 639.5,136.1 640.2,136.2 640.9,137.5 641.6,136.2 642.3,136.1 643.0,136.1 643.7,136.9 644.5,137.6 645.2,138.4 645.9,138.9 645.9,151.2 645.2,154.5 644.5,153.0 643.7,156.1 643.0,154.9 642.3,152.5 641.6,153.4 640.9,153.0 640.2,154.4 639.5,152.9 638.8,152.6 638.1,153.7 637.4,155.9 636.6,152.8 635.9,152.3 635.2,155.1 634.5,152.5 633.8,151.7 633.1,155.2 632.4,151.2" fill="#5b82b6"/><polygon points="632.4,184.6 633.1,183.6 633.8,182.0 634.5,183.8 635.2,182.1 635.9,183.0 636.6,180.0 637.4,183.6 638.1,183.6 638.8,183.6 639.5,181.4 640.2,182.9 640.9,183.2 641.6,183.0 642.3,179.6 643.0,182.9 643.7,180.6 644.5,184.1 645.2,184.1 645.9,182.2 645.9,192.8 645.2,194.1 644.5,193.6 643.7,193.4 643.0,194.5 642.3,194.2 641.6,194.8 640.9,193.8 640.2,194.0 639.5,194.2 638.8,194.1 638.1,194.2 637.4,193.6 636.6,194.8 635.9,194.9 635.2,194.5 634.5,194.1 633.8,193.1 633.1,193.4 632.4,193.3" fill="#5b82b6"/><rect x="631.78" y="125.00" width="0.80" height="84.00" fill="#202c40" /><rect x="645.67" y="125.00" width="0.80" height="84.00" fill="#202c40" /><rect x="634.38" y="128.00" width="11.19" height="7.50" fill="#0e0e08" opacity="0.9"/><text x="635.28" y="134.6" font-family="Liberation Sans" font-size="8" fill="#98b8e8" textLength="9.2" lengthAdjust="spacingAndGlyphs">Deli</text><rect x="646.47" y="125.00" width="14.69" height="84.00" fill="#26364e" /><polygon points="647.1,137.9 647.8,137.7 648.5,137.3 649.2,137.4 649.9,136.1 650.6,136.9 651.3,137.2 652.0,137.4 652.8,137.3 653.5,136.0 654.2,136.8 654.9,136.1 655.6,137.3 656.3,136.3 657.0,137.0 657.7,136.5 658.4,136.6 659.1,137.1 659.8,137.7 660.6,137.8 660.6,154.5 659.8,152.3 659.1,152.9 658.4,152.1 657.7,156.5 657.0,155.4 656.3,153.5 655.6,153.2 654.9,153.4 654.2,153.4 653.5,153.7 652.8,152.8 652.0,153.2 651.3,152.6 650.6,156.4 649.9,152.9 649.2,153.1 648.5,151.6 647.8,152.2 647.1,151.9" fill="#5b82b6"/><polygon points="647.1,184.3 647.8,183.1 648.5,183.1 649.2,183.7 649.9,183.4 650.6,182.8 651.3,180.3 652.0,182.4 652.8,183.4 653.5,183.3 654.2,182.6 654.9,183.8 655.6,183.2 656.3,183.3 657.0,180.0 657.7,183.4 658.4,183.3 659.1,184.1 659.8,180.8 660.6,180.5 660.6,193.0 659.8,193.0 659.1,194.0 658.4,194.2 657.7,193.8 657.0,194.4 656.3,193.7 655.6,194.4 654.9,193.6 654.2,193.4 653.5,194.4 652.8,194.4 652.0,194.7 651.3,194.7 650.6,194.5 649.9,194.2 649.2,193.5 648.5,193.3 647.8,192.9 647.1,193.9" fill="#5b82b6"/><rect x="646.47" y="125.00" width="0.80" height="84.00" fill="#202c40" /><rect x="660.36" y="125.00" width="0.80" height="84.00" fill="#202c40" /><rect x="649.07" y="128.00" width="11.19" height="7.50" fill="#0e0e08" opacity="0.9"/><text x="649.97" y="134.6" font-family="Liberation Sans" font-size="8" fill="#98b8e8" textLength="9.2" lengthAdjust="spacingAndGlyphs">Deli</text><rect x="661.16" y="125.00" width="14.69" height="84.00" fill="#26364e" /><polygon points="661.8,138.1 662.5,137.9 663.2,136.7 663.9,137.6 664.6,137.3 665.3,136.3 666.0,137.4 666.7,136.8 667.4,136.2 668.1,136.6 668.9,137.0 669.6,137.0 670.3,136.1 671.0,136.0 671.7,136.5 672.4,136.4 673.1,136.7 673.8,138.1 674.5,138.4 675.2,139.0 675.2,151.6 674.5,152.5 673.8,153.0 673.1,153.0 672.4,152.9 671.7,156.0 671.0,152.7 670.3,153.2 669.6,153.1 668.9,156.5 668.1,152.3 667.4,156.4 666.7,153.5 666.0,153.8 665.3,152.9 664.6,152.2 663.9,155.6 663.2,152.3 662.5,151.7 661.8,154.8" fill="#5b82b6"/><polygon points="661.8,181.4 662.5,181.1 663.2,183.6 663.9,182.8 664.6,179.5 665.3,183.4 666.0,182.6 666.7,183.2 667.4,183.6 668.1,182.4 668.9,182.1 669.6,183.5 670.3,183.5 671.0,183.3 671.7,182.1 672.4,182.9 673.1,182.8 673.8,183.8 674.5,183.8 675.2,183.7 675.2,192.9 674.5,193.6 673.8,193.2 673.1,194.2 672.4,194.9 671.7,194.9 671.0,193.8 670.3,193.9 669.6,193.9 668.9,194.9 668.1,193.5 667.4,194.6 666.7,194.2 666.0,194.7 665.3,193.7 664.6,194.5 663.9,194.3 663.2,194.5 662.5,193.1 661.8,193.4" fill="#5b82b6"/><rect x="661.16" y="125.00" width="0.80" height="84.00" fill="#202c40" /><rect x="675.05" y="125.00" width="0.80" height="84.00" fill="#202c40" /><rect x="663.76" y="128.00" width="11.19" height="7.50" fill="#0e0e08" opacity="0.9"/><text x="664.66" y="134.6" font-family="Liberation Sans" font-size="8" fill="#98b8e8" textLength="9.2" lengthAdjust="spacingAndGlyphs">Deli</text><rect x="675.85" y="125.00" width="14.69" height="84.00" fill="#26364e" /><polygon points="676.5,138.2 677.2,138.2 677.9,137.0 678.6,136.4 679.3,137.5 680.0,136.5 680.7,137.4 681.4,136.1 682.1,136.4 682.8,136.4 683.5,136.3 684.3,136.2 685.0,136.5 685.7,137.1 686.4,136.8 687.1,136.7 687.8,137.5 688.5,136.9 689.2,137.5 689.9,137.6 689.9,152.1 689.2,154.2 688.5,152.7 687.8,154.5 687.1,153.2 686.4,154.1 685.7,152.4 685.0,153.0 684.3,153.0 683.5,154.0 682.8,156.4 682.1,153.2 681.4,155.1 680.7,155.8 680.0,153.3 679.3,153.3 678.6,152.4 677.9,151.6 677.2,154.0 676.5,154.9" fill="#5b82b6"/><polygon points="676.5,183.6 677.2,184.3 677.9,183.4 678.6,181.3 679.3,182.8 680.0,180.8 680.7,183.3 681.4,180.0 682.1,181.0 682.8,183.5 683.5,182.6 684.3,183.6 685.0,183.3 685.7,183.5 686.4,180.0 687.1,183.8 687.8,181.7 688.5,181.4 689.2,183.9 689.9,184.5 689.9,193.8 689.2,193.5 688.5,194.1 687.8,193.9 687.1,194.6 686.4,194.7 685.7,194.7 685.0,193.9 684.3,193.8 683.5,193.5 682.8,194.1 682.1,193.6 681.4,193.9 680.7,194.5 680.0,195.0 679.3,193.8 678.6,194.5 677.9,193.4 677.2,193.8 676.5,193.4" fill="#5b82b6"/><rect x="675.85" y="125.00" width="0.80" height="84.00" fill="#202c40" /><rect x="689.74" y="125.00" width="0.80" height="84.00" fill="#202c40" /><rect x="678.45" y="128.00" width="11.19" height="7.50" fill="#0e0e08" opacity="0.9"/><text x="679.35" y="134.6" font-family="Liberation Sans" font-size="8" fill="#98b8e8" textLength="9.2" lengthAdjust="spacingAndGlyphs">Deli</text><rect x="690.54" y="125.00" width="14.69" height="84.00" fill="#26364e" /><polygon points="691.1,137.5 691.9,138.5 692.6,137.6 693.3,137.2 694.0,137.0 694.7,136.4 695.4,137.3 696.1,137.2 696.8,136.0 697.5,136.1 698.2,137.5 699.0,136.2 699.7,137.2 700.4,136.6 701.1,137.5 701.8,136.2 702.5,137.7 703.2,137.0 703.9,137.2 704.6,137.7 704.6,151.5 703.9,152.6 703.2,152.2 702.5,152.6 701.8,153.8 701.1,152.7 700.4,152.9 699.7,153.1 699.0,152.3 698.2,153.3 697.5,153.6 696.8,153.3 696.1,152.5 695.4,152.9 694.7,153.1 694.0,153.1 693.3,153.0 692.6,151.7 691.9,155.6 691.1,152.0" fill="#5b82b6"/><polygon points="691.1,184.3 691.9,184.2 692.6,180.2 693.3,182.5 694.0,183.2 694.7,183.6 695.4,181.2 696.1,180.1 696.8,183.7 697.5,183.7 698.2,182.5 699.0,183.5 699.7,183.2 700.4,183.6 701.1,182.9 701.8,183.1 702.5,183.9 703.2,181.2 703.9,181.6 704.6,184.6 704.6,193.9 703.9,193.8 703.2,194.1 702.5,193.9 701.8,193.5 701.1,194.4 700.4,193.7 699.7,193.6 699.0,193.8 698.2,194.2 697.5,193.9 696.8,194.8 696.1,194.7 695.4,194.0 694.7,193.4 694.0,194.7 693.3,193.9 692.6,194.1 691.9,193.1 691.1,193.3" fill="#5b82b6"/><rect x="690.54" y="125.00" width="0.80" height="84.00" fill="#202c40" /><rect x="704.43" y="125.00" width="0.80" height="84.00" fill="#202c40" /><rect x="693.14" y="128.00" width="11.19" height="7.50" fill="#0e0e08" opacity="0.9"/><text x="694.04" y="134.6" font-family="Liberation Sans" font-size="8" fill="#98b8e8" textLength="9.2" lengthAdjust="spacingAndGlyphs">Deli</text><rect x="705.23" y="125.00" width="14.69" height="84.00" fill="#26364e" /><polygon points="705.8,138.7 706.5,138.0 707.2,137.3 708.0,137.8 708.7,137.5 709.4,136.1 710.1,136.1 710.8,137.2 711.5,136.4 712.2,136.5 712.9,137.3 713.6,136.3 714.4,137.6 715.1,136.3 715.8,136.6 716.5,137.5 717.2,137.3 717.9,138.2 718.6,137.9 719.3,138.7 719.3,153.7 718.6,152.4 717.9,154.9 717.2,152.3 716.5,152.3 715.8,153.1 715.1,153.0 714.4,153.6 713.6,152.4 712.9,155.8 712.2,156.6 711.5,152.3 710.8,153.6 710.1,155.2 709.4,153.3 708.7,153.4 708.0,152.0 707.2,152.8 706.5,151.5 705.8,150.9" fill="#5b82b6"/><polygon points="705.8,184.3 706.5,184.0 707.2,183.0 708.0,182.4 708.7,183.6 709.4,182.6 710.1,183.3 710.8,183.0 711.5,181.1 712.2,182.7 712.9,182.5 713.6,180.7 714.4,179.8 715.1,183.1 715.8,182.4 716.5,183.4 717.2,183.0 717.9,183.0 718.6,184.1 719.3,184.7 719.3,192.8 718.6,193.1 717.9,194.5 717.2,194.7 716.5,194.1 715.8,194.0 715.1,194.5 714.4,193.7 713.6,194.8 712.9,194.5 712.2,194.7 711.5,194.4 710.8,194.1 710.1,194.5 709.4,193.4 708.7,194.4 708.0,193.7 707.2,194.3 706.5,192.8 705.8,194.0" fill="#5b82b6"/><rect x="705.23" y="125.00" width="0.80" height="84.00" fill="#202c40" /><rect x="719.12" y="125.00" width="0.80" height="84.00" fill="#202c40" /><rect x="707.83" y="128.00" width="11.19" height="7.50" fill="#0e0e08" opacity="0.9"/><text x="708.73" y="134.6" font-family="Liberation Sans" font-size="8" fill="#98b8e8" textLength="9.2" lengthAdjust="spacingAndGlyphs">Deli</text><rect x="719.92" y="125.00" width="14.69" height="84.00" fill="#26364e" /><polygon points="720.5,138.5 721.2,137.2 721.9,138.1 722.6,136.9 723.4,136.1 724.1,136.6 724.8,136.9 725.5,136.1 726.2,137.1 726.9,137.2 727.6,137.3 728.3,136.5 729.0,137.2 729.8,136.5 730.5,136.1 731.2,136.6 731.9,137.4 732.6,138.3 733.3,138.5 734.0,137.9 734.0,152.2 733.3,151.8 732.6,151.8 731.9,152.9 731.2,153.1 730.5,153.4 729.8,152.3 729.0,153.3 728.3,155.3 727.6,153.7 726.9,152.2 726.2,153.2 725.5,153.2 724.8,153.6 724.1,154.6 723.4,154.6 722.6,152.4 721.9,152.3 721.2,152.3 720.5,152.1" fill="#5b82b6"/><polygon points="720.5,181.3 721.2,183.2 721.9,183.6 722.6,179.8 723.4,183.8 724.1,180.0 724.8,183.4 725.5,179.7 726.2,182.9 726.9,183.2 727.6,183.2 728.3,183.5 729.0,180.0 729.8,183.3 730.5,180.3 731.2,181.4 731.9,180.4 732.6,180.8 733.3,183.5 734.0,181.9 734.0,193.2 733.3,193.3 732.6,193.3 731.9,193.6 731.2,193.6 730.5,193.8 729.8,194.6 729.0,193.6 728.3,193.5 727.6,194.4 726.9,193.6 726.2,194.5 725.5,193.7 724.8,193.4 724.1,194.7 723.4,194.7 722.6,193.7 721.9,194.1 721.2,193.3 720.5,192.7" fill="#5b82b6"/><rect x="719.92" y="125.00" width="0.80" height="84.00" fill="#202c40" /><rect x="733.81" y="125.00" width="0.80" height="84.00" fill="#202c40" /><rect x="722.52" y="128.00" width="11.19" height="7.50" fill="#0e0e08" opacity="0.9"/><text x="723.42" y="134.6" font-family="Liberation Sans" font-size="8" fill="#98b8e8" textLength="9.2" lengthAdjust="spacingAndGlyphs">Deli</text><rect x="734.61" y="125.00" width="14.69" height="84.00" fill="#26364e" /><polygon points="735.2,138.0 735.9,138.6 736.6,137.5 737.3,137.7 738.1,137.2 738.8,137.5 739.5,136.1 740.2,137.2 740.9,136.2 741.6,137.4 742.3,137.2 743.0,137.3 743.7,136.1 744.4,137.5 745.1,137.3 745.9,137.4 746.6,137.6 747.3,137.5 748.0,137.5 748.7,138.2 748.7,151.1 748.0,153.3 747.3,154.5 746.6,152.6 745.9,152.7 745.1,152.7 744.4,153.3 743.7,153.4 743.0,156.1 742.3,153.0 741.6,153.5 740.9,153.0 740.2,152.3 739.5,154.3 738.8,152.7 738.1,152.5 737.3,152.0 736.6,152.0 735.9,151.5 735.2,150.8" fill="#5b82b6"/><polygon points="735.2,183.8 735.9,183.1 736.6,183.7 737.3,183.0 738.1,183.7 738.8,181.8 739.5,180.4 740.2,183.2 740.9,179.5 741.6,183.0 742.3,182.3 743.0,180.0 743.7,183.1 744.4,183.3 745.1,180.8 745.9,183.1 746.6,181.3 747.3,183.4 748.0,183.4 748.7,184.6 748.7,192.6 748.0,192.9 747.3,194.1 746.6,193.6 745.9,194.7 745.1,193.4 744.4,194.1 743.7,193.8 743.0,193.7 742.3,194.4 741.6,194.9 740.9,193.8 740.2,194.5 739.5,194.3 738.8,193.6 738.1,193.7 737.3,194.1 736.6,194.4 735.9,193.9 735.2,192.6" fill="#5b82b6"/><rect x="734.61" y="125.00" width="0.80" height="84.00" fill="#202c40" /><rect x="748.50" y="125.00" width="0.80" height="84.00" fill="#202c40" /><rect x="737.21" y="128.00" width="11.19" height="7.50" fill="#0e0e08" opacity="0.9"/><text x="738.11" y="134.6" font-family="Liberation Sans" font-size="8" fill="#98b8e8" textLength="9.2" lengthAdjust="spacingAndGlyphs">Deli</text><rect x="749.30" y="125.00" width="14.69" height="84.00" fill="#26364e" /><polygon points="749.9,137.6 750.6,138.4 751.3,137.6 752.0,136.5 752.7,136.1 753.4,136.1 754.2,137.1 754.9,136.2 755.6,136.2 756.3,136.8 757.0,136.5 757.7,136.2 758.4,137.5 759.1,137.3 759.8,137.2 760.5,136.5 761.3,136.9 762.0,137.0 762.7,137.6 763.4,138.8 763.4,151.7 762.7,153.3 762.0,152.5 761.3,155.2 760.5,154.6 759.8,152.6 759.1,153.1 758.4,152.5 757.7,153.4 757.0,153.3 756.3,153.2 755.6,154.6 754.9,156.6 754.2,152.3 753.4,152.4 752.7,152.6 752.0,152.9 751.3,152.2 750.6,152.2 749.9,151.6" fill="#5b82b6"/><polygon points="749.9,183.6 750.6,180.2 751.3,179.9 752.0,180.7 752.7,182.6 753.4,182.8 754.2,183.2 754.9,183.4 755.6,182.9 756.3,183.1 757.0,183.8 757.7,182.1 758.4,182.5 759.1,182.7 759.8,180.4 760.5,180.1 761.3,182.7 762.0,184.2 762.7,184.1 763.4,184.0 763.4,193.5 762.7,192.8 762.0,193.8 761.3,194.1 760.5,194.4 759.8,193.9 759.1,194.9 758.4,194.4 757.7,194.9 757.0,194.5 756.3,193.7 755.6,194.0 754.9,194.3 754.2,194.0 753.4,193.8 752.7,193.6 752.0,193.8 751.3,194.4 750.6,193.0 749.9,192.8" fill="#5b82b6"/><rect x="749.30" y="125.00" width="0.80" height="84.00" fill="#202c40" /><rect x="763.19" y="125.00" width="0.80" height="84.00" fill="#202c40" /><rect x="751.90" y="128.00" width="11.19" height="7.50" fill="#0e0e08" opacity="0.9"/><text x="752.8" y="134.6" font-family="Liberation Sans" font-size="8" fill="#98b8e8" textLength="9.2" lengthAdjust="spacingAndGlyphs">Deli</text><rect x="763.99" y="125.00" width="14.69" height="84.00" fill="#26364e" /><polygon points="764.6,138.6 765.3,138.6 766.0,136.7 766.7,137.1 767.4,136.8 768.1,137.5 768.9,136.6 769.6,136.3 770.3,136.8 771.0,136.7 771.7,136.5 772.4,137.2 773.1,137.4 773.8,136.5 774.5,137.2 775.2,136.7 775.9,137.0 776.7,137.9 777.4,137.8 778.1,137.9 778.1,150.8 777.4,153.0 776.7,154.4 775.9,152.8 775.2,155.2 774.5,153.4 773.8,152.5 773.1,153.4 772.4,155.4 771.7,152.9 771.0,156.4 770.3,152.7 769.6,152.6 768.9,152.6 768.1,152.4 767.4,154.1 766.7,153.4 766.0,155.7 765.3,152.6 764.6,151.8" fill="#5b82b6"/><polygon points="764.6,183.5 765.3,183.6 766.0,182.9 766.7,183.3 767.4,182.6 768.1,182.6 768.9,180.6 769.6,183.7 770.3,183.6 771.0,183.1 771.7,181.5 772.4,180.6 773.1,183.6 773.8,181.6 774.5,183.5 775.2,182.7 775.9,182.0 776.7,183.3 777.4,183.6 778.1,180.4 778.1,193.9 777.4,193.1 776.7,193.1 775.9,194.7 775.2,194.6 774.5,193.9 773.8,193.8 773.1,193.5 772.4,194.2 771.7,194.2 771.0,193.7 770.3,194.9 769.6,193.5 768.9,193.5 768.1,193.9 767.4,194.5 766.7,193.6 766.0,194.0 765.3,194.1 764.6,193.4" fill="#5b82b6"/><rect x="763.99" y="125.00" width="0.80" height="84.00" fill="#202c40" /><rect x="777.88" y="125.00" width="0.80" height="84.00" fill="#202c40" /><rect x="766.59" y="128.00" width="11.19" height="7.50" fill="#0e0e08" opacity="0.9"/><text x="767.49" y="134.6" font-family="Liberation Sans" font-size="8" fill="#98b8e8" textLength="9.2" lengthAdjust="spacingAndGlyphs">Deli</text><rect x="778.68" y="125.00" width="14.69" height="84.00" fill="#26364e" /><polygon points="779.3,138.0 780.0,137.5 780.7,138.1 781.4,136.4 782.1,136.4 782.8,137.5 783.5,136.3 784.2,136.4 785.0,137.4 785.7,137.4 786.4,136.2 787.1,136.1 787.8,136.9 788.5,137.4 789.2,137.4 789.9,137.2 790.6,136.3 791.4,137.8 792.1,138.1 792.8,137.7 792.8,152.6 792.1,154.5 791.4,155.4 790.6,154.0 789.9,152.7 789.2,156.5 788.5,153.3 787.8,152.6 787.1,152.9 786.4,155.5 785.7,156.6 785.0,153.7 784.2,153.0 783.5,154.6 782.8,152.7 782.1,153.5 781.4,152.3 780.7,152.2 780.0,151.4 779.3,152.9" fill="#5b82b6"/><polygon points="779.3,183.9 780.0,183.6 780.7,183.8 781.4,183.6 782.1,182.2 782.8,182.8 783.5,180.9 784.2,183.4 785.0,182.3 785.7,182.6 786.4,183.2 787.1,181.4 787.8,183.3 788.5,182.5 789.2,182.7 789.9,183.7 790.6,183.3 791.4,183.1 792.1,183.0 792.8,183.3 792.8,192.5 792.1,193.1 791.4,194.3 790.6,193.7 789.9,194.8 789.2,194.5 788.5,193.6 787.8,194.8 787.1,193.9 786.4,194.7 785.7,193.8 785.0,194.6 784.2,194.9 783.5,194.8 782.8,194.9 782.1,194.0 781.4,193.8 780.7,194.3 780.0,194.1 779.3,192.4" fill="#5b82b6"/><rect x="778.68" y="125.00" width="0.80" height="84.00" fill="#202c40" /><rect x="792.57" y="125.00" width="0.80" height="84.00" fill="#202c40" /><rect x="781.28" y="128.00" width="11.19" height="7.50" fill="#0e0e08" opacity="0.9"/><text x="782.18" y="134.6" font-family="Liberation Sans" font-size="8" fill="#98b8e8" textLength="9.2" lengthAdjust="spacingAndGlyphs">Deli</text><rect x="793.30" y="125.00" width="14.69" height="84.00" fill="#2e5a36" /><polygon points="793.9,138.4 794.6,137.7 795.3,136.2 796.0,136.0 796.7,135.2 797.4,135.2 798.2,135.7 798.9,135.8 799.6,135.5 800.3,136.0 801.0,136.4 801.7,135.7 802.4,135.9 803.1,135.3 803.8,136.2 804.5,136.2 805.3,136.3 806.0,136.0 806.7,137.5 807.4,137.6 807.4,154.6 806.7,156.2 806.0,158.5 805.3,157.3 804.5,157.4 803.8,156.7 803.1,158.6 802.4,159.4 801.7,156.3 801.0,157.2 800.3,157.8 799.6,160.2 798.9,157.0 798.2,156.4 797.4,156.7 796.7,156.9 796.0,156.3 795.3,155.9 794.6,158.1 793.9,154.7" fill="#6cc57c"/><polygon points="793.9,176.9 794.6,175.8 795.3,176.5 796.0,175.1 796.7,171.6 797.4,173.5 798.2,174.4 798.9,175.0 799.6,174.6 800.3,175.4 801.0,173.5 801.7,175.8 802.4,174.7 803.1,173.5 803.8,174.4 804.5,174.7 805.3,175.2 806.0,175.4 806.7,176.7 807.4,174.3 807.4,196.4 806.7,196.0 806.0,196.5 805.3,197.4 804.5,198.6 803.8,197.7 803.1,197.7 802.4,197.8 801.7,197.9 801.0,198.1 800.3,197.8 799.6,198.1 798.9,197.6 798.2,198.2 797.4,198.8 796.7,197.7 796.0,198.4 795.3,197.9 794.6,196.8 793.9,195.6" fill="#6cc57c"/><rect x="793.30" y="125.00" width="0.80" height="84.00" fill="#264a2c" /><rect x="807.19" y="125.00" width="0.80" height="84.00" fill="#264a2c" /><rect x="795.90" y="128.00" width="11.19" height="7.50" fill="#0e0e08" opacity="0.9"/><text x="796.8" y="134.6" font-family="Liberation Sans" font-size="8" fill="#98dc98" textLength="9.2" lengthAdjust="spacingAndGlyphs">Deli</text><rect x="807.99" y="125.00" width="14.69" height="84.00" fill="#26364e" /><polygon points="808.6,137.5 809.3,136.8 810.0,137.2 810.7,136.5 811.4,136.5 812.1,135.8 812.9,135.9 813.6,135.1 814.3,135.7 815.0,136.5 815.7,136.0 816.4,136.0 817.1,136.4 817.8,136.6 818.5,136.0 819.2,136.0 820.0,136.1 820.7,136.0 821.4,136.6 822.1,137.4 822.1,155.2 821.4,156.5 820.7,156.4 820.0,157.1 819.2,157.6 818.5,157.3 817.8,157.1 817.1,156.8 816.4,158.1 815.7,157.7 815.0,157.0 814.3,156.5 813.6,156.9 812.9,158.4 812.1,157.6 811.4,157.2 810.7,158.6 810.0,156.2 809.3,155.3 808.6,156.4" fill="#5b82b6"/><polygon points="808.6,173.6 809.3,176.5 810.0,175.6 810.7,174.1 811.4,171.8 812.1,174.4 812.9,175.3 813.6,174.6 814.3,174.1 815.0,175.0 815.7,172.1 816.4,175.8 817.1,172.2 817.8,175.5 818.5,174.7 819.2,175.0 820.0,172.1 820.7,173.4 821.4,176.9 822.1,177.0 822.1,196.9 821.4,197.3 820.7,197.8 820.0,197.7 819.2,198.9 818.5,198.9 817.8,197.8 817.1,197.6 816.4,197.7 815.7,197.7 815.0,197.8 814.3,198.0 813.6,197.8 812.9,198.0 812.1,198.4 811.4,198.0 810.7,197.8 810.0,196.5 809.3,196.1 808.6,196.2" fill="#5b82b6"/><rect x="807.99" y="125.00" width="0.80" height="84.00" fill="#202c40" /><rect x="821.88" y="125.00" width="0.80" height="84.00" fill="#202c40" /><rect x="810.59" y="128.00" width="11.19" height="7.50" fill="#0e0e08" opacity="0.9"/><text x="811.49" y="134.6" font-family="Liberation Sans" font-size="8" fill="#98b8e8" textLength="9.2" lengthAdjust="spacingAndGlyphs">Deli</text><rect x="822.68" y="125.00" width="14.69" height="84.00" fill="#2e5a36" /><polygon points="823.3,138.3 824.0,137.0 824.7,137.2 825.4,135.4 826.1,135.9 826.8,136.2 827.5,135.5 828.2,136.4 829.0,136.5 829.7,136.5 830.4,135.7 831.1,135.6 831.8,135.1 832.5,135.7 833.2,136.0 833.9,135.3 834.6,137.0 835.4,136.4 836.1,137.3 836.8,137.0 836.8,155.7 836.1,155.9 835.4,155.9 834.6,156.6 833.9,156.2 833.2,157.0 832.5,157.6 831.8,158.0 831.1,157.5 830.4,159.8 829.7,157.2 829.0,159.5 828.2,157.0 827.5,157.7 826.8,157.3 826.1,160.6 825.4,156.8 824.7,156.0 824.0,158.0 823.3,154.6" fill="#6cc57c"/><polygon points="823.3,177.4 824.0,173.3 824.7,175.5 825.4,175.8 826.1,173.1 826.8,175.1 827.5,175.7 828.2,175.6 829.0,174.4 829.7,171.6 830.4,175.6 831.1,171.9 831.8,175.4 832.5,175.7 833.2,175.5 833.9,174.1 834.6,174.7 835.4,175.6 836.1,176.0 836.8,177.2 836.8,195.5 836.1,196.5 835.4,197.6 834.6,197.6 833.9,198.9 833.2,198.4 832.5,198.2 831.8,198.6 831.1,198.1 830.4,197.8 829.7,197.5 829.0,198.3 828.2,198.6 827.5,198.9 826.8,197.8 826.1,197.7 825.4,198.2 824.7,198.0 824.0,197.1 823.3,195.9" fill="#6cc57c"/><rect x="822.68" y="125.00" width="0.80" height="84.00" fill="#264a2c" /><rect x="836.57" y="125.00" width="0.80" height="84.00" fill="#264a2c" /><rect x="825.28" y="128.00" width="11.19" height="7.50" fill="#0e0e08" opacity="0.9"/><text x="826.18" y="134.6" font-family="Liberation Sans" font-size="8" fill="#98dc98" textLength="9.2" lengthAdjust="spacingAndGlyphs">Deli</text><rect x="837.37" y="125.00" width="14.69" height="84.00" fill="#26364e" /><polygon points="838.0,137.4 838.7,137.1 839.4,136.5 840.1,135.7 840.8,136.5 841.5,136.5 842.2,135.5 842.9,135.1 843.6,135.3 844.4,135.8 845.1,135.1 845.8,136.2 846.5,135.1 847.2,135.4 847.9,135.2 848.6,135.1 849.3,135.8 850.0,136.2 850.8,137.7 851.5,137.8 851.5,155.1 850.8,156.2 850.0,157.4 849.3,156.8 848.6,156.6 847.9,157.0 847.2,157.7 846.5,156.5 845.8,157.4 845.1,156.9 844.4,157.0 843.6,156.8 842.9,156.7 842.2,156.9 841.5,157.5 840.8,158.4 840.1,156.9 839.4,155.5 838.7,159.3 838.0,154.5" fill="#5b82b6"/><polygon points="838.0,177.3 838.7,176.9 839.4,175.6 840.1,172.2 840.8,174.3 841.5,174.3 842.2,175.3 842.9,175.2 843.6,175.0 844.4,175.3 845.1,175.0 845.8,175.3 846.5,171.4 847.2,175.7 847.9,175.5 848.6,172.0 849.3,174.8 850.0,175.7 850.8,175.4 851.5,175.3 851.5,195.3 850.8,197.4 850.0,196.4 849.3,198.6 848.6,198.5 847.9,198.2 847.2,197.4 846.5,197.8 845.8,198.4 845.1,198.8 844.4,198.9 843.6,198.9 842.9,197.9 842.2,197.4 841.5,198.0 840.8,197.6 840.1,197.6 839.4,197.4 838.7,196.5 838.0,196.1" fill="#5b82b6"/><rect x="837.37" y="125.00" width="0.80" height="84.00" fill="#202c40" /><rect x="851.26" y="125.00" width="0.80" height="84.00" fill="#202c40" /><rect x="839.97" y="128.00" width="11.19" height="7.50" fill="#0e0e08" opacity="0.9"/><text x="840.87" y="134.6" font-family="Liberation Sans" font-size="8" fill="#98b8e8" textLength="9.2" lengthAdjust="spacingAndGlyphs">Deli</text><rect x="852.06" y="125.00" width="14.69" height="84.00" fill="#2e5a36" /><polygon points="852.7,137.5 853.4,137.7 854.1,137.3 854.8,135.6 855.5,135.1 856.2,136.5 856.9,136.4 857.6,136.4 858.3,135.1 859.0,135.6 859.8,135.4 860.5,135.2 861.2,136.3 861.9,135.3 862.6,135.7 863.3,135.7 864.0,136.3 864.7,137.1 865.4,137.8 866.1,138.0 866.1,154.9 865.4,155.2 864.7,158.7 864.0,156.1 863.3,156.8 862.6,158.5 861.9,158.8 861.2,156.8 860.5,156.7 859.8,156.4 859.0,157.7 858.3,159.2 857.6,156.6 856.9,157.7 856.2,159.3 855.5,156.7 854.8,156.2 854.1,159.1 853.4,154.8 852.7,158.4" fill="#6cc57c"/><polygon points="852.7,177.5 853.4,176.6 854.1,175.9 854.8,175.9 855.5,172.9 856.2,173.5 856.9,175.1 857.6,171.7 858.3,175.1 859.0,172.0 859.8,173.0 860.5,175.3 861.2,174.7 861.9,172.8 862.6,175.7 863.3,174.8 864.0,175.8 864.7,176.3 865.4,177.0 866.1,177.2 866.1,195.6 865.4,196.5 864.7,196.8 864.0,198.1 863.3,198.0 862.6,198.8 861.9,198.1 861.2,198.2 860.5,197.6 859.8,197.5 859.0,198.4 858.3,197.5 857.6,198.5 856.9,197.9 856.2,198.9 855.5,198.1 854.8,197.5 854.1,196.7 853.4,196.7 852.7,196.4" fill="#6cc57c"/><rect x="852.06" y="125.00" width="0.80" height="84.00" fill="#264a2c" /><rect x="865.95" y="125.00" width="0.80" height="84.00" fill="#264a2c" /><rect x="854.66" y="128.00" width="11.19" height="7.50" fill="#0e0e08" opacity="0.9"/><text x="855.56" y="134.6" font-family="Liberation Sans" font-size="8" fill="#98dc98" textLength="9.2" lengthAdjust="spacingAndGlyphs">Deli</text><rect x="866.75" y="125.00" width="14.69" height="84.00" fill="#26364e" /><polygon points="867.4,136.9 868.1,137.2 868.8,136.4 869.5,136.5 870.2,135.8 870.9,136.4 871.6,135.7 872.3,135.5 873.0,136.1 873.7,135.4 874.5,136.0 875.2,135.0 875.9,136.5 876.6,135.6 877.3,135.5 878.0,135.5 878.7,136.4 879.4,137.0 880.1,136.6 880.8,137.5 880.8,155.8 880.1,156.0 879.4,156.8 878.7,156.0 878.0,157.9 877.3,160.1 876.6,157.5 875.9,156.2 875.2,156.6 874.5,159.3 873.7,158.8 873.0,156.4 872.3,156.3 871.6,157.2 870.9,158.4 870.2,157.4 869.5,157.0 868.8,155.6 868.1,155.0 867.4,156.8" fill="#5b82b6"/><polygon points="867.4,177.0 868.1,176.6 868.8,174.5 869.5,175.0 870.2,175.2 870.9,173.4 871.6,174.7 872.3,175.4 873.0,175.2 873.7,172.6 874.5,174.7 875.2,175.3 875.9,172.4 876.6,174.7 877.3,174.8 878.0,175.4 878.7,176.1 879.4,175.8 880.1,177.0 880.8,174.3 880.8,196.5 880.1,196.4 879.4,198.0 878.7,198.5 878.0,197.5 877.3,198.4 876.6,198.7 875.9,198.6 875.2,197.9 874.5,197.7 873.7,198.7 873.0,197.9 872.3,198.9 871.6,198.6 870.9,197.8 870.2,198.5 869.5,197.8 868.8,197.4 868.1,196.4 867.4,195.6" fill="#5b82b6"/><rect x="866.75" y="125.00" width="0.80" height="84.00" fill="#202c40" /><rect x="880.64" y="125.00" width="0.80" height="84.00" fill="#202c40" /><rect x="869.35" y="128.00" width="11.19" height="7.50" fill="#0e0e08" opacity="0.9"/><text x="870.25" y="134.6" font-family="Liberation Sans" font-size="8" fill="#98b8e8" textLength="9.2" lengthAdjust="spacingAndGlyphs">Deli</text><rect x="881.44" y="125.00" width="14.69" height="84.00" fill="#2e5a36" /><polygon points="882.0,138.1 882.8,136.6 883.5,136.8 884.2,135.4 884.9,136.2 885.6,136.1 886.3,135.9 887.0,136.0 887.7,135.9 888.4,136.2 889.1,136.0 889.9,135.4 890.6,135.6 891.3,135.5 892.0,136.3 892.7,136.2 893.4,136.5 894.1,136.5 894.8,137.8 895.5,137.8 895.5,155.7 894.8,155.6 894.1,156.8 893.4,156.7 892.7,157.6 892.0,156.6 891.3,156.3 890.6,159.3 889.9,157.9 889.1,158.0 888.4,158.9 887.7,160.3 887.0,159.7 886.3,157.5 885.6,157.5 884.9,156.9 884.2,157.2 883.5,156.6 882.8,155.9 882.0,154.9" fill="#6cc57c"/><polygon points="882.0,173.8 882.8,177.0 883.5,174.1 884.2,172.7 884.9,172.3 885.6,175.7 886.3,173.0 887.0,175.0 887.7,175.6 888.4,175.1 889.1,173.7 889.9,175.4 890.6,173.9 891.3,172.6 892.0,175.5 892.7,175.2 893.4,172.3 894.1,174.0 894.8,176.9 895.5,177.4 895.5,196.4 894.8,197.4 894.1,197.3 893.4,197.5 892.7,198.8 892.0,198.2 891.3,198.2 890.6,198.2 889.9,197.5 889.1,197.7 888.4,199.0 887.7,197.8 887.0,198.0 886.3,198.6 885.6,198.0 884.9,198.2 884.2,198.3 883.5,197.0 882.8,197.2 882.0,195.5" fill="#6cc57c"/><rect x="881.44" y="125.00" width="0.80" height="84.00" fill="#264a2c" /><rect x="895.33" y="125.00" width="0.80" height="84.00" fill="#264a2c" /><rect x="884.04" y="128.00" width="11.19" height="7.50" fill="#0e0e08" opacity="0.9"/><text x="884.9399999999999" y="134.6" font-family="Liberation Sans" font-size="8" fill="#98dc98" textLength="9.2" lengthAdjust="spacingAndGlyphs">Deli</text><rect x="185.00" y="210.00" width="6.10" height="85.00" fill="#2e5a36" /><polygon points="185.6,222.8 186.3,221.4 187.0,221.0 187.7,220.5 188.4,221.2 189.1,220.3 189.8,222.0 190.5,222.2 190.5,241.8 189.8,242.0 189.1,239.9 188.4,241.0 187.7,242.2 187.0,239.7 186.3,239.2 185.6,238.0" fill="#6cc57c"/><polygon points="185.6,263.9 186.3,262.6 187.0,262.4 187.7,260.0 188.4,262.3 189.1,260.6 189.8,262.0 190.5,263.8 190.5,281.8 189.8,282.9 189.1,283.4 188.4,283.3 187.7,282.7 187.0,283.4 186.3,282.9 185.6,281.3" fill="#6cc57c"/><rect x="185.00" y="210.00" width="0.80" height="85.00" fill="#264a2c" /><rect x="190.30" y="210.00" width="0.80" height="85.00" fill="#264a2c" /><rect x="187.60" y="213.00" width="2.60" height="7.50" fill="#0e0e08" opacity="0.9"/><text x="188.5" y="219.6" font-family="Liberation Sans" font-size="8" fill="#98dc98" textLength="0.6" lengthAdjust="spacingAndGlyphs">Deli</text><rect x="191.10" y="210.00" width="29.38" height="85.00" fill="#2e5a36" /><polygon points="191.7,222.6 192.4,221.9 193.1,221.3 193.8,222.5 194.5,221.0 195.2,221.8 195.9,220.7 196.6,220.4 197.3,220.5 198.0,221.3 198.7,221.6 199.4,221.5 200.2,221.3 200.9,220.1 201.6,220.0 202.3,221.2 203.0,220.4 203.7,220.1 204.4,220.2 205.1,220.9 205.8,221.3 206.5,220.4 207.2,220.5 207.9,221.3 208.6,220.8 209.3,220.4 210.0,221.0 210.7,220.4 211.4,220.8 212.1,220.8 212.8,221.3 213.5,220.3 214.2,220.6 214.9,220.9 215.7,222.0 216.4,220.9 217.1,221.5 217.8,222.2 218.5,221.8 219.2,222.0 219.9,223.1 219.9,237.8 219.2,238.4 218.5,239.1 217.8,241.6 217.1,239.2 216.4,238.9 215.7,240.7 214.9,239.6 214.2,240.4 213.5,239.7 212.8,240.4 212.1,243.3 211.4,239.8 210.7,240.8 210.0,240.5 209.3,239.2 208.6,239.8 207.9,240.2 207.2,239.6 206.5,239.6 205.8,239.9 205.1,242.3 204.4,240.1 203.7,239.6 203.0,240.4 202.3,242.8 201.6,240.5 200.9,240.5 200.2,239.4 199.4,239.5 198.7,239.7 198.0,240.5 197.3,242.9 196.6,239.0 195.9,239.0 195.2,239.7 194.5,238.4 193.8,239.1 193.1,239.9 192.4,238.6 191.7,237.8" fill="#6cc57c"/><polygon points="191.7,262.4 192.4,260.6 193.1,263.4 193.8,261.8 194.5,261.5 195.2,259.3 195.9,259.8 196.6,262.7 197.3,259.5 198.0,261.8 198.7,262.7 199.4,262.6 200.2,262.6 200.9,262.7 201.6,261.7 202.3,262.4 203.0,262.2 203.7,262.6 204.4,261.3 205.1,261.6 205.8,262.6 206.5,258.6 207.2,262.5 207.9,262.1 208.6,261.6 209.3,261.0 210.0,259.8 210.7,261.9 211.4,261.5 212.1,258.8 212.8,260.0 213.5,262.1 214.2,259.6 214.9,260.1 215.7,263.2 216.4,260.8 217.1,260.7 217.8,263.5 218.5,264.0 219.2,260.2 219.9,264.1 219.9,280.8 219.2,280.8 218.5,282.2 217.8,282.1 217.1,281.9 216.4,282.2 215.7,282.6 214.9,283.2 214.2,283.6 213.5,282.6 212.8,283.4 212.1,284.0 211.4,282.5 210.7,282.8 210.0,283.3 209.3,283.8 208.6,283.2 207.9,283.1 207.2,283.9 206.5,283.0 205.8,283.6 205.1,284.0 204.4,282.6 203.7,282.8 203.0,283.7 202.3,282.9 201.6,282.5 200.9,282.8 200.2,283.7 199.4,283.3 198.7,283.4 198.0,283.0 197.3,282.8 196.6,283.4 195.9,282.8 195.2,282.0 194.5,282.8 193.8,282.1 193.1,281.9 192.4,281.4 191.7,280.7" fill="#6cc57c"/><rect x="191.10" y="210.00" width="0.80" height="85.00" fill="#264a2c" /><rect x="219.68" y="210.00" width="0.80" height="85.00" fill="#264a2c" /><rect x="193.70" y="213.00" width="25.88" height="7.50" fill="#0e0e08" opacity="0.9"/><path d="M195.6,219.5 C196.6,215 200.1,213 201.6,214.5 C202.6,216 199.1,219 197.6,218" stroke="#98dc98" stroke-width="1.1" fill="none"/><text x="204.1" y="219.6" font-family="Liberation Sans" font-size="8" fill="#98dc98" textLength="14.9" lengthAdjust="spacingAndGlyphs">Delic</text><rect x="220.48" y="210.00" width="29.38" height="85.00" fill="#2e5a36" /><polygon points="221.1,222.6 221.8,222.6 222.5,222.2 223.2,222.2 223.9,221.8 224.6,222.1 225.3,220.6 226.0,220.6 226.7,220.8 227.4,220.2 228.1,220.9 228.8,220.1 229.5,220.5 230.2,221.4 230.9,221.6 231.6,220.8 232.4,221.2 233.1,221.3 233.8,220.3 234.5,221.2 235.2,220.4 235.9,220.9 236.6,221.4 237.3,220.7 238.0,220.8 238.7,221.1 239.4,221.2 240.1,220.3 240.8,221.4 241.5,220.4 242.2,220.2 242.9,220.2 243.6,221.2 244.3,221.5 245.0,220.7 245.7,220.9 246.4,221.5 247.1,221.5 247.9,222.7 248.6,222.0 249.3,221.8 249.3,238.3 248.6,238.7 247.9,240.9 247.1,240.2 246.4,239.5 245.7,238.7 245.0,239.7 244.3,239.9 243.6,240.6 242.9,243.6 242.2,241.1 241.5,240.0 240.8,239.5 240.1,239.3 239.4,239.6 238.7,241.2 238.0,239.6 237.3,242.3 236.6,240.5 235.9,243.5 235.2,239.3 234.5,240.3 233.8,239.4 233.1,239.6 232.4,239.9 231.6,239.8 230.9,242.4 230.2,243.4 229.5,241.8 228.8,241.2 228.1,241.7 227.4,243.4 226.7,239.9 226.0,241.0 225.3,240.8 224.6,239.0 223.9,239.6 223.2,242.5 222.5,238.5 221.8,240.1 221.1,239.7" fill="#6cc57c"/><polygon points="221.1,262.8 221.8,263.3 222.5,261.7 223.2,259.7 223.9,262.3 224.6,263.1 225.3,261.9 226.0,262.6 226.7,262.3 227.4,261.5 228.1,262.5 228.8,262.5 229.5,262.1 230.2,259.0 230.9,262.3 231.6,262.7 232.4,262.7 233.1,262.8 233.8,261.7 234.5,259.6 235.2,262.4 235.9,262.2 236.6,262.6 237.3,259.6 238.0,262.0 238.7,260.4 239.4,261.9 240.1,261.6 240.8,261.4 241.5,262.3 242.2,262.3 242.9,261.4 243.6,261.4 244.3,261.0 245.0,262.8 245.7,263.1 246.4,263.6 247.1,263.5 247.9,263.5 248.6,264.2 249.3,264.3 249.3,281.2 248.6,282.3 247.9,282.3 247.1,282.7 246.4,281.7 245.7,282.8 245.0,282.9 244.3,283.4 243.6,283.6 242.9,283.4 242.2,282.9 241.5,283.9 240.8,283.7 240.1,283.4 239.4,283.5 238.7,282.8 238.0,283.7 237.3,283.7 236.6,283.8 235.9,284.0 235.2,282.9 234.5,283.3 233.8,282.4 233.1,283.9 232.4,283.8 231.6,283.1 230.9,282.8 230.2,282.9 229.5,283.5 228.8,282.9 228.1,282.6 227.4,283.8 226.7,283.0 226.0,283.4 225.3,283.3 224.6,282.9 223.9,282.2 223.2,282.8 222.5,281.8 221.8,281.8 221.1,281.1" fill="#6cc57c"/><rect x="220.48" y="210.00" width="0.80" height="85.00" fill="#264a2c" /><rect x="249.06" y="210.00" width="0.80" height="85.00" fill="#264a2c" /><rect x="223.08" y="213.00" width="25.88" height="7.50" fill="#0e0e08" opacity="0.9"/><path d="M224.98,219.5 C225.98,215 229.48,213 230.98,214.5 C231.98,216 228.48,219 226.98,218" stroke="#98dc98" stroke-width="1.1" fill="none"/><text x="233.48" y="219.6" font-family="Liberation Sans" font-size="8" fill="#98dc98" textLength="14.9" lengthAdjust="spacingAndGlyphs">Delic</text><rect x="249.86" y="210.00" width="29.38" height="85.00" fill="#2e5a36" /><polygon points="250.5,222.7 251.2,221.7 251.9,222.5 252.6,222.0 253.3,221.9 254.0,221.9 254.7,221.9 255.4,220.5 256.1,220.3 256.8,221.6 257.5,220.6 258.2,221.0 258.9,221.4 259.6,220.6 260.3,220.2 261.0,221.5 261.7,221.2 262.4,220.2 263.1,221.0 263.8,220.6 264.5,220.1 265.3,220.7 266.0,220.9 266.7,220.1 267.4,220.6 268.1,220.1 268.8,220.2 269.5,221.6 270.2,221.2 270.9,220.5 271.6,221.1 272.3,220.4 273.0,220.8 273.7,220.5 274.4,220.8 275.1,221.8 275.8,222.2 276.5,221.8 277.2,222.4 277.9,222.6 278.6,223.1 278.6,238.4 277.9,238.3 277.2,238.0 276.5,238.7 275.8,239.7 275.1,238.6 274.4,241.3 273.7,240.5 273.0,239.6 272.3,240.6 271.6,240.1 270.9,240.2 270.2,240.4 269.5,242.8 268.8,240.6 268.1,240.3 267.4,239.9 266.7,240.3 266.0,239.2 265.3,240.6 264.5,241.6 263.8,242.6 263.1,241.8 262.4,240.4 261.7,240.2 261.0,240.3 260.3,241.9 259.6,240.4 258.9,239.8 258.2,241.6 257.5,240.4 256.8,240.1 256.1,240.6 255.4,240.9 254.7,238.8 254.0,240.1 253.3,239.1 252.6,240.3 251.9,238.8 251.2,238.3 250.5,239.7" fill="#6cc57c"/><polygon points="250.5,263.9 251.2,263.2 251.9,263.0 252.6,260.1 253.3,260.3 254.0,262.3 254.7,259.5 255.4,260.0 256.1,261.9 256.8,260.4 257.5,261.5 258.2,261.8 258.9,261.7 259.6,261.5 260.3,261.6 261.0,261.2 261.7,262.5 262.4,259.8 263.1,259.8 263.8,260.8 264.5,261.7 265.3,261.6 266.0,262.6 266.7,261.5 267.4,261.3 268.1,261.8 268.8,258.7 269.5,260.2 270.2,261.6 270.9,261.6 271.6,258.3 272.3,259.0 273.0,262.2 273.7,261.7 274.4,261.0 275.1,261.4 275.8,262.4 276.5,263.8 277.2,262.9 277.9,264.4 278.6,264.1 278.6,281.8 277.9,282.1 277.2,281.6 276.5,282.7 275.8,282.2 275.1,283.2 274.4,282.4 273.7,283.2 273.0,283.4 272.3,283.8 271.6,283.2 270.9,282.7 270.2,282.6 269.5,283.8 268.8,283.9 268.1,283.2 267.4,282.9 266.7,283.6 266.0,283.0 265.3,283.3 264.5,283.7 263.8,282.4 263.1,283.8 262.4,282.5 261.7,283.6 261.0,283.8 260.3,282.7 259.6,283.6 258.9,282.9 258.2,282.6 257.5,282.8 256.8,282.6 256.1,282.8 255.4,283.3 254.7,283.4 254.0,283.3 253.3,282.7 252.6,282.5 251.9,281.3 251.2,281.1 250.5,280.7" fill="#6cc57c"/><rect x="249.86" y="210.00" width="0.80" height="85.00" fill="#264a2c" /><rect x="278.44" y="210.00" width="0.80" height="85.00" fill="#264a2c" /><rect x="252.46" y="213.00" width="25.88" height="7.50" fill="#0e0e08" opacity="0.9"/><path d="M254.35999999999999,219.5 C255.35999999999999,215 258.86,213 260.36,214.5 C261.36,216 257.86,219 256.36,218" stroke="#98dc98" stroke-width="1.1" fill="none"/><text x="262.86" y="219.6" font-family="Liberation Sans" font-size="8" fill="#98dc98" textLength="14.9" lengthAdjust="spacingAndGlyphs">Delic</text><rect x="279.24" y="210.00" width="29.38" height="85.00" fill="#2e5a36" /><polygon points="279.8,222.6 280.5,221.8 281.2,221.3 282.0,222.0 282.7,220.9 283.4,222.1 284.1,221.1 284.8,221.2 285.5,221.3 286.2,220.7 286.9,221.1 287.6,220.0 288.3,221.5 289.0,220.3 289.7,220.4 290.4,220.7 291.1,220.5 291.8,220.1 292.5,221.5 293.2,221.2 293.9,221.5 294.6,221.2 295.3,221.3 296.0,220.9 296.7,220.3 297.5,221.0 298.2,220.0 298.9,220.6 299.6,221.2 300.3,220.9 301.0,220.4 301.7,220.5 302.4,221.0 303.1,220.5 303.8,220.4 304.5,222.2 305.2,221.2 305.9,221.4 306.6,222.1 307.3,222.7 308.0,222.9 308.0,237.5 307.3,241.2 306.6,239.1 305.9,239.1 305.2,238.9 304.5,242.5 303.8,239.3 303.1,239.8 302.4,242.5 301.7,240.2 301.0,240.4 300.3,239.2 299.6,240.7 298.9,240.0 298.2,239.5 297.5,240.2 296.7,239.7 296.0,242.9 295.3,240.2 294.6,240.1 293.9,241.4 293.2,240.2 292.5,239.7 291.8,239.8 291.1,239.5 290.4,241.6 289.7,239.6 289.0,240.8 288.3,239.5 287.6,239.9 286.9,240.3 286.2,240.1 285.5,241.1 284.8,243.4 284.1,241.1 283.4,239.1 282.7,239.7 282.0,239.8 281.2,238.1 280.5,238.6 279.8,240.9" fill="#6cc57c"/><polygon points="279.8,263.5 280.5,261.2 281.2,261.8 282.0,263.7 282.7,263.3 283.4,262.6 284.1,263.1 284.8,262.6 285.5,262.4 286.2,262.4 286.9,262.0 287.6,261.4 288.3,261.4 289.0,258.8 289.7,262.3 290.4,262.4 291.1,261.1 291.8,261.7 292.5,261.4 293.2,261.7 293.9,261.6 294.6,262.3 295.3,261.9 296.0,261.5 296.7,262.4 297.5,262.3 298.2,262.5 298.9,258.4 299.6,262.7 300.3,262.1 301.0,259.2 301.7,261.5 302.4,259.4 303.1,262.5 303.8,262.8 304.5,263.2 305.2,263.6 305.9,262.9 306.6,259.9 307.3,263.4 308.0,264.1 308.0,281.7 307.3,281.3 306.6,281.1 305.9,282.2 305.2,282.8 304.5,282.6 303.8,283.5 303.1,282.8 302.4,283.2 301.7,282.6 301.0,282.6 300.3,283.2 299.6,282.8 298.9,282.7 298.2,283.4 297.5,283.2 296.7,283.3 296.0,282.5 295.3,282.6 294.6,282.6 293.9,283.3 293.2,282.9 292.5,283.2 291.8,283.3 291.1,282.6 290.4,282.7 289.7,282.4 289.0,282.4 288.3,282.7 287.6,282.4 286.9,282.8 286.2,283.6 285.5,283.8 284.8,282.6 284.1,283.1 283.4,282.0 282.7,282.0 282.0,281.7 281.2,281.9 280.5,281.8 279.8,281.5" fill="#6cc57c"/><rect x="279.24" y="210.00" width="0.80" height="85.00" fill="#264a2c" /><rect x="307.82" y="210.00" width="0.80" height="85.00" fill="#264a2c" /><rect x="281.84" y="213.00" width="25.88" height="7.50" fill="#0e0e08" opacity="0.9"/><path d="M283.74,219.5 C284.74,215 288.24,213 289.74,214.5 C290.74,216 287.24,219 285.74,218" stroke="#98dc98" stroke-width="1.1" fill="none"/><text x="292.24" y="219.6" font-family="Liberation Sans" font-size="8" fill="#98dc98" textLength="14.9" lengthAdjust="spacingAndGlyphs">Delic</text><rect x="367.38" y="210.00" width="14.69" height="85.00" fill="#2e5a36" /><polygon points="368.0,222.7 368.7,221.6 369.4,222.4 370.1,220.6 370.8,220.0 371.5,221.5 372.2,220.6 372.9,220.9 373.7,221.2 374.4,221.2 375.1,220.0 375.8,221.4 376.5,220.7 377.2,220.1 377.9,221.5 378.6,220.1 379.3,221.9 380.0,221.6 380.8,221.6 381.5,222.6 381.5,241.4 380.8,240.2 380.0,239.1 379.3,239.9 378.6,239.4 377.9,241.1 377.2,241.1 376.5,240.2 375.8,239.5 375.1,239.8 374.4,243.4 373.7,240.4 372.9,243.4 372.2,240.3 371.5,240.6 370.8,239.8 370.1,239.0 369.4,240.8 368.7,238.6 368.0,241.7" fill="#6cc57c"/><polygon points="368.0,263.6 368.7,263.3 369.4,262.9 370.1,263.1 370.8,262.2 371.5,258.7 372.2,261.8 372.9,262.3 373.7,260.3 374.4,262.5 375.1,261.6 375.8,261.9 376.5,261.7 377.2,262.0 377.9,261.8 378.6,262.1 379.3,263.0 380.0,261.8 380.8,262.4 381.5,260.3 381.5,280.7 380.8,281.7 380.0,282.4 379.3,282.7 378.6,283.6 377.9,283.4 377.2,283.3 376.5,283.4 375.8,282.6 375.1,284.0 374.4,283.0 373.7,283.4 372.9,283.6 372.2,283.6 371.5,283.2 370.8,283.1 370.1,282.5 369.4,283.1 368.7,282.4 368.0,281.2" fill="#6cc57c"/><rect x="367.38" y="210.00" width="0.80" height="85.00" fill="#264a2c" /><rect x="381.27" y="210.00" width="0.80" height="85.00" fill="#264a2c" /><rect x="369.98" y="213.00" width="11.19" height="7.50" fill="#0e0e08" opacity="0.9"/><text x="370.88" y="219.6" font-family="Liberation Sans" font-size="8" fill="#98dc98" textLength="9.2" lengthAdjust="spacingAndGlyphs">Deli</text><rect x="382.07" y="210.00" width="14.69" height="85.00" fill="#26364e" /><polygon points="382.7,222.7 383.4,222.3 384.1,221.0 384.8,221.2 385.5,220.2 386.2,221.2 386.9,220.8 387.6,220.3 388.4,221.4 389.1,220.5 389.8,221.5 390.5,220.3 391.2,220.2 391.9,221.4 392.6,221.2 393.3,221.4 394.0,221.0 394.7,221.1 395.4,222.3 396.2,222.8 396.2,238.9 395.4,241.2 394.7,240.4 394.0,240.4 393.3,240.3 392.6,239.8 391.9,240.1 391.2,239.9 390.5,239.3 389.8,239.4 389.1,240.7 388.4,240.5 387.6,240.3 386.9,240.4 386.2,239.6 385.5,239.5 384.8,239.3 384.1,238.5 383.4,240.6 382.7,240.7" fill="#5b82b6"/><polygon points="382.7,264.5 383.4,263.2 384.1,263.1 384.8,261.8 385.5,262.0 386.2,262.4 386.9,261.6 387.6,262.6 388.4,261.8 389.1,259.4 389.8,262.2 390.5,262.2 391.2,258.4 391.9,262.2 392.6,258.8 393.3,262.1 394.0,262.4 394.7,262.9 395.4,263.5 396.2,263.7 396.2,281.8 395.4,281.1 394.7,281.5 394.0,282.5 393.3,283.2 392.6,283.0 391.9,282.8 391.2,283.2 390.5,283.9 389.8,283.6 389.1,283.0 388.4,282.9 387.6,282.7 386.9,283.1 386.2,283.7 385.5,282.8 384.8,283.0 384.1,282.4 383.4,281.6 382.7,281.2" fill="#5b82b6"/><rect x="382.07" y="210.00" width="0.80" height="85.00" fill="#202c40" /><rect x="395.96" y="210.00" width="0.80" height="85.00" fill="#202c40" /><rect x="384.67" y="213.00" width="11.19" height="7.50" fill="#0e0e08" opacity="0.9"/><text x="385.57" y="219.6" font-family="Liberation Sans" font-size="8" fill="#98b8e8" textLength="9.2" lengthAdjust="spacingAndGlyphs">Deli</text><rect x="396.76" y="210.00" width="29.38" height="85.00" fill="#2e5a36" /><polygon points="397.4,222.9 398.1,222.5 398.8,221.8 399.5,222.5 400.2,222.0 400.9,221.3 401.6,220.5 402.3,221.7 403.0,220.2 403.7,221.0 404.4,221.4 405.1,220.0 405.8,221.1 406.5,220.0 407.2,221.0 407.9,220.1 408.6,220.6 409.3,221.3 410.0,221.3 410.7,220.8 411.4,220.2 412.2,220.3 412.9,221.4 413.6,221.4 414.3,220.5 415.0,220.3 415.7,220.5 416.4,221.3 417.1,221.0 417.8,221.0 418.5,221.1 419.2,220.1 419.9,220.3 420.6,221.4 421.3,221.5 422.0,222.1 422.7,221.2 423.4,222.4 424.1,222.3 424.8,221.8 425.5,222.8 425.5,238.7 424.8,238.4 424.1,239.0 423.4,238.6 422.7,239.5 422.0,241.0 421.3,242.7 420.6,239.2 419.9,240.0 419.2,240.5 418.5,239.3 417.8,240.0 417.1,239.8 416.4,239.8 415.7,239.9 415.0,242.3 414.3,243.0 413.6,240.4 412.9,240.6 412.2,239.3 411.4,240.3 410.7,241.5 410.0,239.4 409.3,240.0 408.6,239.9 407.9,241.2 407.2,242.0 406.5,239.6 405.8,240.2 405.1,242.8 404.4,239.6 403.7,242.1 403.0,239.6 402.3,239.5 401.6,239.9 400.9,239.8 400.2,239.1 399.5,239.1 398.8,239.1 398.1,239.0 397.4,238.0" fill="#6cc57c"/><polygon points="397.4,262.4 398.1,263.9 398.8,260.3 399.5,263.4 400.2,262.5 400.9,262.6 401.6,259.6 402.3,262.2 403.0,262.7 403.7,262.2 404.4,261.6 405.1,262.7 405.8,259.3 406.5,261.6 407.2,261.4 407.9,260.6 408.6,261.6 409.3,259.5 410.0,262.3 410.7,262.1 411.4,262.0 412.2,258.8 412.9,261.5 413.6,259.6 414.3,258.3 415.0,262.2 415.7,262.3 416.4,262.4 417.1,262.0 417.8,260.1 418.5,261.4 419.2,262.7 419.9,262.2 420.6,261.8 421.3,262.3 422.0,263.3 422.7,260.7 423.4,263.5 424.1,263.1 424.8,264.0 425.5,263.8 425.5,280.8 424.8,280.8 424.1,281.7 423.4,282.4 422.7,282.4 422.0,282.5 421.3,282.0 420.6,283.7 419.9,283.1 419.2,282.6 418.5,283.6 417.8,283.0 417.1,283.1 416.4,283.9 415.7,282.8 415.0,282.5 414.3,283.4 413.6,283.7 412.9,282.6 412.2,283.5 411.4,283.9 410.7,283.3 410.0,283.8 409.3,283.2 408.6,283.5 407.9,282.8 407.2,283.6 406.5,282.7 405.8,282.6 405.1,282.4 404.4,283.5 403.7,283.5 403.0,283.9 402.3,282.8 401.6,282.8 400.9,283.2 400.2,281.9 399.5,281.7 398.8,282.2 398.1,281.9 397.4,281.7" fill="#6cc57c"/><rect x="396.76" y="210.00" width="0.80" height="85.00" fill="#264a2c" /><rect x="425.34" y="210.00" width="0.80" height="85.00" fill="#264a2c" /><rect x="399.36" y="213.00" width="25.88" height="7.50" fill="#0e0e08" opacity="0.9"/><path d="M401.26,219.5 C402.26,215 405.76,213 407.26,214.5 C408.26,216 404.76,219 403.26,218" stroke="#98dc98" stroke-width="1.1" fill="none"/><text x="409.76" y="219.6" font-family="Liberation Sans" font-size="8" fill="#98dc98" textLength="14.9" lengthAdjust="spacingAndGlyphs">Delic</text><rect x="661.30" y="210.00" width="14.69" height="85.00" fill="#2e5a36" /><polygon points="661.9,221.9 662.6,222.6 663.3,220.8 664.0,221.4 664.7,221.4 665.4,220.1 666.2,221.3 666.9,220.3 667.6,220.4 668.3,221.4 669.0,220.7 669.7,221.6 670.4,220.7 671.1,220.1 671.8,221.2 672.5,220.9 673.3,221.4 674.0,221.3 674.7,221.4 675.4,222.8 675.4,240.6 674.7,238.1 674.0,238.7 673.3,239.2 672.5,239.2 671.8,240.5 671.1,241.8 670.4,239.6 669.7,239.6 669.0,243.7 668.3,240.6 667.6,241.6 666.9,240.1 666.2,240.6 665.4,239.7 664.7,241.9 664.0,238.9 663.3,241.7 662.6,238.7 661.9,238.8" fill="#6cc57c"/><polygon points="661.9,264.3 662.6,263.5 663.3,262.3 664.0,260.9 664.7,261.8 665.4,260.3 666.2,258.9 666.9,261.9 667.6,262.1 668.3,260.1 669.0,262.4 669.7,261.7 670.4,261.5 671.1,259.4 671.8,262.7 672.5,260.2 673.3,262.9 674.0,262.7 674.7,263.7 675.4,264.4 675.4,281.2 674.7,281.5 674.0,282.2 673.3,283.1 672.5,284.0 671.8,283.1 671.1,283.4 670.4,282.7 669.7,283.7 669.0,283.5 668.3,283.1 667.6,282.7 666.9,282.6 666.2,282.4 665.4,283.8 664.7,283.7 664.0,283.6 663.3,282.4 662.6,282.3 661.9,282.1" fill="#6cc57c"/><rect x="661.30" y="210.00" width="0.80" height="85.00" fill="#264a2c" /><rect x="675.19" y="210.00" width="0.80" height="85.00" fill="#264a2c" /><rect x="663.90" y="213.00" width="11.19" height="7.50" fill="#0e0e08" opacity="0.9"/><text x="664.8" y="219.6" font-family="Liberation Sans" font-size="8" fill="#98dc98" textLength="9.2" lengthAdjust="spacingAndGlyphs">Deli</text><rect x="675.99" y="210.00" width="14.69" height="85.00" fill="#5a4e20" /><polygon points="676.6,222.0 677.3,221.9 678.0,222.2 678.7,221.4 679.4,220.4 680.1,220.5 680.9,221.3 681.6,220.2 682.3,221.1 683.0,220.4 683.7,220.0 684.4,220.9 685.1,221.3 685.8,221.5 686.5,220.4 687.2,220.5 688.0,221.9 688.7,221.6 689.4,221.5 690.1,222.7 690.1,241.8 689.4,238.2 688.7,238.5 688.0,239.2 687.2,240.6 686.5,241.3 685.8,243.6 685.1,240.5 684.4,243.4 683.7,242.3 683.0,242.0 682.3,240.0 681.6,240.0 680.9,239.8 680.1,239.9 679.4,242.0 678.7,239.8 678.0,239.8 677.3,238.4 676.6,238.0" fill="#bfae5c"/><polygon points="676.6,263.9 677.3,264.2 678.0,259.7 678.7,261.9 679.4,262.6 680.1,260.4 680.9,258.3 681.6,261.7 682.3,262.6 683.0,261.9 683.7,258.7 684.4,261.3 685.1,258.4 685.8,262.8 686.5,259.5 687.2,261.6 688.0,262.8 688.7,262.9 689.4,264.0 690.1,260.3 690.1,281.2 689.4,281.5 688.7,281.9 688.0,283.3 687.2,282.6 686.5,283.7 685.8,283.1 685.1,283.8 684.4,283.0 683.7,283.3 683.0,282.9 682.3,283.7 681.6,283.5 680.9,283.9 680.1,283.1 679.4,283.6 678.7,283.0 678.0,282.3 677.3,281.4 676.6,280.9" fill="#bfae5c"/><rect x="675.99" y="210.00" width="0.80" height="85.00" fill="#3a3620" /><rect x="689.88" y="210.00" width="0.80" height="85.00" fill="#3a3620" /><rect x="678.59" y="213.00" width="11.19" height="7.50" fill="#0e0e08" opacity="0.9"/><text x="679.49" y="219.6" font-family="Liberation Sans" font-size="8" fill="#d0c070" textLength="9.2" lengthAdjust="spacingAndGlyphs">Deli</text><rect x="690.68" y="210.00" width="14.69" height="85.00" fill="#2e5a36" /><polygon points="691.3,222.4 692.0,221.4 692.7,221.2 693.4,221.4 694.1,220.9 694.8,220.8 695.5,220.4 696.2,220.4 697.0,221.1 697.7,220.7 698.4,221.5 699.1,221.4 699.8,220.4 700.5,220.4 701.2,221.2 701.9,221.2 702.6,220.9 703.4,222.0 704.1,222.4 704.8,221.9 704.8,238.2 704.1,238.0 703.4,238.6 702.6,242.7 701.9,239.8 701.2,240.1 700.5,239.5 699.8,242.4 699.1,240.6 698.4,241.8 697.7,240.3 697.0,240.5 696.2,241.1 695.5,240.0 694.8,243.7 694.1,239.3 693.4,240.3 692.7,238.5 692.0,239.1 691.3,238.7" fill="#6cc57c"/><polygon points="691.3,263.7 692.0,263.6 692.7,262.5 693.4,262.2 694.1,262.7 694.8,261.6 695.5,262.8 696.2,261.3 697.0,261.3 697.7,261.7 698.4,261.8 699.1,262.5 699.8,262.6 700.5,262.6 701.2,261.8 701.9,262.2 702.6,259.4 703.4,263.6 704.1,262.6 704.8,263.5 704.8,281.8 704.1,281.3 703.4,282.7 702.6,283.4 701.9,282.5 701.2,283.4 700.5,282.9 699.8,283.2 699.1,283.7 698.4,283.8 697.7,283.2 697.0,282.4 696.2,283.1 695.5,282.8 694.8,283.0 694.1,283.2 693.4,283.1 692.7,281.7 692.0,281.0 691.3,281.4" fill="#6cc57c"/><rect x="690.68" y="210.00" width="0.80" height="85.00" fill="#264a2c" /><rect x="704.57" y="210.00" width="0.80" height="85.00" fill="#264a2c" /><rect x="693.28" y="213.00" width="11.19" height="7.50" fill="#0e0e08" opacity="0.9"/><text x="694.18" y="219.6" font-family="Liberation Sans" font-size="8" fill="#98dc98" textLength="9.2" lengthAdjust="spacingAndGlyphs">Deli</text><rect x="705.37" y="210.00" width="14.69" height="85.00" fill="#5a4e20" /><polygon points="706.0,222.9 706.7,222.5 707.4,221.1 708.1,221.5 708.8,220.8 709.5,221.3 710.2,221.2 710.9,221.0 711.6,221.5 712.4,220.8 713.1,220.7 713.8,220.4 714.5,220.8 715.2,221.0 715.9,220.3 716.6,220.7 717.3,220.4 718.0,222.1 718.8,222.5 719.5,222.2 719.5,237.8 718.8,238.6 718.0,239.5 717.3,239.8 716.6,240.4 715.9,241.6 715.2,243.5 714.5,241.9 713.8,239.3 713.1,239.6 712.4,241.9 711.6,240.2 710.9,239.5 710.2,239.5 709.5,240.3 708.8,240.2 708.1,239.5 707.4,238.8 706.7,239.0 706.0,241.7" fill="#bfae5c"/><polygon points="706.0,264.0 706.7,262.7 707.4,263.3 708.1,261.8 708.8,262.7 709.5,262.3 710.2,262.7 710.9,261.2 711.6,262.2 712.4,260.3 713.1,261.2 713.8,262.1 714.5,262.2 715.2,261.0 715.9,262.1 716.6,261.8 717.3,262.7 718.0,262.9 718.8,260.8 719.5,264.3 719.5,282.0 718.8,281.6 718.0,282.4 717.3,282.1 716.6,283.4 715.9,283.3 715.2,283.0 714.5,282.7 713.8,283.7 713.1,282.9 712.4,284.0 711.6,282.6 710.9,283.2 710.2,282.7 709.5,282.6 708.8,283.2 708.1,282.7 707.4,282.6 706.7,282.6 706.0,281.6" fill="#bfae5c"/><rect x="705.37" y="210.00" width="0.80" height="85.00" fill="#3a3620" /><rect x="719.26" y="210.00" width="0.80" height="85.00" fill="#3a3620" /><rect x="707.97" y="213.00" width="11.19" height="7.50" fill="#0e0e08" opacity="0.9"/><text x="708.87" y="219.6" font-family="Liberation Sans" font-size="8" fill="#d0c070" textLength="9.2" lengthAdjust="spacingAndGlyphs">Deli</text><rect x="720.06" y="210.00" width="14.69" height="85.00" fill="#2e5a36" /><polygon points="720.7,221.9 721.4,222.1 722.1,222.1 722.8,221.3 723.5,220.3 724.2,221.0 724.9,220.2 725.6,221.4 726.3,221.3 727.0,220.2 727.8,220.9 728.5,220.1 729.2,220.6 729.9,220.6 730.6,221.3 731.3,220.8 732.0,221.2 732.7,221.5 733.4,221.4 734.1,223.2 734.1,239.0 733.4,241.7 732.7,241.6 732.0,239.5 731.3,239.8 730.6,243.1 729.9,240.6 729.2,240.0 728.5,240.4 727.8,241.4 727.0,240.1 726.3,239.3 725.6,239.6 724.9,239.9 724.2,243.2 723.5,240.3 722.8,239.0 722.1,238.6 721.4,239.2 720.7,238.7" fill="#6cc57c"/><polygon points="720.7,262.7 721.4,262.8 722.1,262.2 722.8,263.0 723.5,261.6 724.2,258.4 724.9,262.7 725.6,258.6 726.3,262.5 727.0,262.5 727.8,262.3 728.5,260.5 729.2,260.2 729.9,259.1 730.6,262.3 731.3,259.9 732.0,261.9 732.7,262.6 733.4,263.3 734.1,264.1 734.1,281.5 733.4,281.2 732.7,282.3 732.0,282.2 731.3,283.9 730.6,282.5 729.9,283.5 729.2,283.1 728.5,283.3 727.8,283.5 727.0,283.0 726.3,282.5 725.6,282.8 724.9,283.6 724.2,282.4 723.5,282.7 722.8,282.7 722.1,282.9 721.4,281.2 720.7,280.9" fill="#6cc57c"/><rect x="720.06" y="210.00" width="0.80" height="85.00" fill="#264a2c" /><rect x="733.95" y="210.00" width="0.80" height="85.00" fill="#264a2c" /><rect x="722.66" y="213.00" width="11.19" height="7.50" fill="#0e0e08" opacity="0.9"/><text x="723.56" y="219.6" font-family="Liberation Sans" font-size="8" fill="#98dc98" textLength="9.2" lengthAdjust="spacingAndGlyphs">Deli</text><rect x="734.75" y="210.00" width="14.69" height="85.00" fill="#5a4e20" /><polygon points="735.4,223.3 736.1,222.4 736.8,222.2 737.5,221.1 738.2,220.6 738.9,220.8 739.6,220.6 740.3,221.2 741.0,221.0 741.7,221.2 742.5,221.0 743.2,220.0 743.9,220.7 744.6,220.5 745.3,221.1 746.0,220.9 746.7,221.6 747.4,222.1 748.1,222.3 748.8,221.9 748.8,241.3 748.1,238.7 747.4,239.2 746.7,239.3 746.0,240.4 745.3,241.5 744.6,241.3 743.9,239.5 743.2,241.8 742.5,240.5 741.7,240.1 741.0,240.0 740.3,239.7 739.6,240.2 738.9,240.4 738.2,239.2 737.5,240.2 736.8,242.3 736.1,242.3 735.4,238.8" fill="#bfae5c"/><polygon points="735.4,264.3 736.1,264.2 736.8,263.2 737.5,263.0 738.2,261.8 738.9,261.8 739.6,259.9 740.3,262.0 741.0,262.0 741.7,261.4 742.5,261.2 743.2,262.0 743.9,261.7 744.6,259.6 745.3,262.0 746.0,261.5 746.7,262.6 747.4,263.4 748.1,262.9 748.8,264.6 748.8,281.3 748.1,282.0 747.4,282.6 746.7,283.4 746.0,283.4 745.3,282.5 744.6,283.4 743.9,282.5 743.2,283.2 742.5,282.7 741.7,283.2 741.0,282.9 740.3,283.9 739.6,283.3 738.9,282.8 738.2,283.3 737.5,282.6 736.8,282.2 736.1,282.4 735.4,280.6" fill="#bfae5c"/><rect x="734.75" y="210.00" width="0.80" height="85.00" fill="#3a3620" /><rect x="748.64" y="210.00" width="0.80" height="85.00" fill="#3a3620" /><rect x="737.35" y="213.00" width="11.19" height="7.50" fill="#0e0e08" opacity="0.9"/><text x="738.25" y="219.6" font-family="Liberation Sans" font-size="8" fill="#d0c070" textLength="9.2" lengthAdjust="spacingAndGlyphs">Deli</text><rect x="749.44" y="210.00" width="14.69" height="85.00" fill="#2e5a36" /><polygon points="750.0,223.1 750.8,222.8 751.5,220.9 752.2,221.8 752.9,221.1 753.6,221.5 754.3,220.2 755.0,220.2 755.7,220.8 756.4,221.3 757.1,220.2 757.9,220.5 758.6,221.2 759.3,221.2 760.0,220.5 760.7,220.0 761.4,221.5 762.1,221.0 762.8,221.7 763.5,222.2 763.5,238.2 762.8,238.0 762.1,240.6 761.4,242.3 760.7,240.4 760.0,241.4 759.3,242.4 758.6,239.9 757.9,239.7 757.1,240.0 756.4,242.4 755.7,240.6 755.0,239.3 754.3,240.2 753.6,241.3 752.9,239.5 752.2,240.2 751.5,240.9 750.8,239.0 750.0,238.0" fill="#6cc57c"/><polygon points="750.0,264.4 750.8,262.8 751.5,262.9 752.2,262.6 752.9,261.2 753.6,261.4 754.3,259.0 755.0,261.8 755.7,262.4 756.4,261.7 757.1,261.0 757.9,258.9 758.6,262.0 759.3,261.2 760.0,262.1 760.7,259.8 761.4,261.8 762.1,261.4 762.8,263.9 763.5,263.5 763.5,281.1 762.8,281.8 762.1,281.7 761.4,283.6 760.7,282.9 760.0,282.8 759.3,283.5 758.6,283.8 757.9,283.5 757.1,283.0 756.4,283.7 755.7,283.7 755.0,283.4 754.3,282.9 753.6,283.4 752.9,282.5 752.2,282.9 751.5,282.6 750.8,282.4 750.0,281.6" fill="#6cc57c"/><rect x="749.44" y="210.00" width="0.80" height="85.00" fill="#264a2c" /><rect x="763.33" y="210.00" width="0.80" height="85.00" fill="#264a2c" /><rect x="752.04" y="213.00" width="11.19" height="7.50" fill="#0e0e08" opacity="0.9"/><text x="752.9399999999999" y="219.6" font-family="Liberation Sans" font-size="8" fill="#98dc98" textLength="9.2" lengthAdjust="spacingAndGlyphs">Deli</text><rect x="764.13" y="210.00" width="14.69" height="85.00" fill="#5a4e20" /><polygon points="764.7,223.2 765.4,222.7 766.1,221.8 766.9,221.1 767.6,221.1 768.3,220.6 769.0,221.5 769.7,220.8 770.4,220.6 771.1,220.4 771.8,220.1 772.5,220.1 773.2,220.3 774.0,220.5 774.7,221.1 775.4,221.1 776.1,221.9 776.8,220.9 777.5,221.5 778.2,222.6 778.2,238.4 777.5,239.7 776.8,238.7 776.1,238.9 775.4,240.4 774.7,240.7 774.0,240.1 773.2,240.0 772.5,240.4 771.8,242.6 771.1,241.7 770.4,239.5 769.7,239.7 769.0,239.3 768.3,242.7 767.6,240.5 766.9,241.6 766.1,239.4 765.4,239.2 764.7,241.7" fill="#bfae5c"/><polygon points="764.7,263.3 765.4,263.5 766.1,261.4 766.9,262.9 767.6,258.8 768.3,262.6 769.0,259.4 769.7,261.0 770.4,258.5 771.1,260.3 771.8,262.7 772.5,258.6 773.2,261.4 774.0,259.8 774.7,262.4 775.4,261.7 776.1,262.8 776.8,262.9 777.5,263.7 778.2,263.6 778.2,280.8 777.5,282.5 776.8,281.8 776.1,282.2 775.4,283.4 774.7,283.1 774.0,283.1 773.2,283.3 772.5,282.9 771.8,283.5 771.1,283.0 770.4,282.7 769.7,283.2 769.0,283.1 768.3,282.8 767.6,282.5 766.9,283.5 766.1,282.8 765.4,281.2 764.7,281.0" fill="#bfae5c"/><rect x="764.13" y="210.00" width="0.80" height="85.00" fill="#3a3620" /><rect x="778.02" y="210.00" width="0.80" height="85.00" fill="#3a3620" /><rect x="766.73" y="213.00" width="11.19" height="7.50" fill="#0e0e08" opacity="0.9"/><text x="767.63" y="219.6" font-family="Liberation Sans" font-size="8" fill="#d0c070" textLength="9.2" lengthAdjust="spacingAndGlyphs">Deli</text><rect x="955.00" y="210.00" width="25.00" height="85.00" fill="#2e5a36" /><polygon points="955.6,222.4 956.3,222.0 957.0,221.7 957.8,221.9 958.5,221.3 959.2,220.6 959.9,220.9 960.6,221.4 961.4,220.1 962.1,220.1 962.8,221.4 963.5,220.6 964.3,220.9 965.0,221.2 965.7,220.7 966.4,220.7 967.1,221.3 967.9,221.1 968.6,220.8 969.3,221.3 970.0,221.2 970.7,221.5 971.5,221.4 972.2,221.0 972.9,220.8 973.6,220.7 974.4,221.3 975.1,221.1 975.8,221.7 976.5,222.0 977.2,222.5 978.0,221.8 978.7,222.2 979.4,222.5 979.4,241.8 978.7,238.7 978.0,240.9 977.2,238.3 976.5,241.8 975.8,239.6 975.1,240.3 974.4,240.5 973.6,243.2 972.9,239.8 972.2,240.6 971.5,239.9 970.7,239.2 970.0,242.8 969.3,239.5 968.6,241.4 967.9,240.0 967.1,242.9 966.4,239.6 965.7,243.1 965.0,241.7 964.3,239.9 963.5,240.5 962.8,239.2 962.1,240.5 961.4,240.0 960.6,240.1 959.9,240.7 959.2,242.3 958.5,239.1 957.8,238.7 957.0,240.7 956.3,241.4 955.6,240.6" fill="#6cc57c"/><polygon points="955.6,264.6 956.3,264.1 957.0,261.5 957.8,263.6 958.5,262.5 959.2,260.2 959.9,261.7 960.6,262.4 961.4,261.4 962.1,261.8 962.8,262.1 963.5,261.8 964.3,262.8 965.0,262.7 965.7,258.8 966.4,259.4 967.1,260.1 967.9,262.0 968.6,262.2 969.3,259.7 970.0,262.0 970.7,262.4 971.5,261.5 972.2,261.6 972.9,262.5 973.6,261.7 974.4,258.9 975.1,262.0 975.8,262.7 976.5,263.5 977.2,261.4 978.0,263.8 978.7,260.6 979.4,263.5 979.4,281.3 978.7,281.6 978.0,281.4 977.2,282.9 976.5,283.2 975.8,283.0 975.1,283.0 974.4,283.0 973.6,283.1 972.9,282.9 972.2,283.2 971.5,282.7 970.7,283.3 970.0,283.0 969.3,283.9 968.6,283.5 967.9,283.3 967.1,283.3 966.4,283.5 965.7,282.8 965.0,283.7 964.3,282.4 963.5,283.3 962.8,283.0 962.1,283.7 961.4,282.9 960.6,283.9 959.9,283.4 959.2,282.6 958.5,283.2 957.8,282.5 957.0,281.4 956.3,281.4 955.6,281.8" fill="#6cc57c"/><rect x="955.00" y="210.00" width="0.80" height="85.00" fill="#264a2c" /><rect x="979.20" y="210.00" width="0.80" height="85.00" fill="#264a2c" /><rect x="957.60" y="213.00" width="21.50" height="7.50" fill="#0e0e08" opacity="0.9"/><path d="M959.5,219.5 C960.5,215 964,213 965.5,214.5 C966.5,216 963,219 961.5,218" stroke="#98dc98" stroke-width="1.1" fill="none"/><text x="968" y="219.6" font-family="Liberation Sans" font-size="8" fill="#98dc98" textLength="10.5" lengthAdjust="spacingAndGlyphs">Delic</text><rect x="965.00" y="210.00" width="15.00" height="85.00" fill="#c0c8bc" opacity="0.62"/><path d="M963,212 Q975,240 979,289" stroke="#3838e8" stroke-width="1.2" fill="none"/><rect x="191.10" y="296.00" width="29.38" height="26.00" fill="#34446e" /><rect x="191.10" y="306.50" width="29.38" height="15.50" fill="#88a4e4" /><polygon points="191.5,306.5 193.1,306.5 192.5,312.6 192.1,312.6" fill="#34446e"/><polygon points="194.0,306.5 195.6,306.5 195.0,312.1 194.6,312.1" fill="#34446e"/><polygon points="196.3,306.5 197.9,306.5 197.3,314.1 196.9,314.1" fill="#34446e"/><polygon points="198.5,306.5 200.1,306.5 199.5,314.3 199.1,314.3" fill="#34446e"/><polygon points="200.5,306.5 202.1,306.5 201.5,310.3 201.1,310.3" fill="#34446e"/><polygon points="203.0,306.5 204.6,306.5 204.0,309.0 203.6,309.0" fill="#34446e"/><polygon points="204.9,306.5 206.5,306.5 205.9,310.9 205.5,310.9" fill="#34446e"/><polygon points="206.7,306.5 208.3,306.5 207.7,312.5 207.3,312.5" fill="#34446e"/><polygon points="208.8,306.5 210.4,306.5 209.8,310.2 209.4,310.2" fill="#34446e"/><polygon points="211.1,306.5 212.7,306.5 212.1,309.3 211.7,309.3" fill="#34446e"/><polygon points="213.4,306.5 215.0,306.5 214.4,313.8 214.0,313.8" fill="#34446e"/><polygon points="215.6,306.5 217.2,306.5 216.6,309.0 216.2,309.0" fill="#34446e"/><polygon points="218.0,306.5 219.6,306.5 219.0,312.7 218.6,312.7" fill="#34446e"/><rect x="191.10" y="296.00" width="0.80" height="26.00" fill="#2a3450" /><rect x="219.68" y="296.00" width="0.80" height="26.00" fill="#2a3450" /><rect x="193.70" y="299.00" width="25.88" height="7.50" fill="#0e0e08" opacity="0.9"/><path d="M195.6,305.5 C196.6,301 200.1,299 201.6,300.5 C202.6,302 199.1,305 197.6,304" stroke="#a8c0f0" stroke-width="1.1" fill="none"/><text x="204.1" y="305.6" font-family="Liberation Sans" font-size="8" fill="#a8c0f0" textLength="14.9" lengthAdjust="spacingAndGlyphs">Delic</text><rect x="220.48" y="296.00" width="29.38" height="26.00" fill="#34446e" /><rect x="220.48" y="306.50" width="29.38" height="15.50" fill="#88a4e4" /><polygon points="220.9,306.5 222.5,306.5 221.9,309.6 221.5,309.6" fill="#34446e"/><polygon points="223.4,306.5 225.0,306.5 224.4,317.2 224.0,317.2" fill="#34446e"/><polygon points="225.3,306.5 226.9,306.5 226.3,315.8 225.9,315.8" fill="#34446e"/><polygon points="227.2,306.5 228.8,306.5 228.2,308.5 227.8,308.5" fill="#34446e"/><polygon points="229.0,306.5 230.6,306.5 230.0,311.1 229.6,311.1" fill="#34446e"/><polygon points="231.1,306.5 232.7,306.5 232.1,315.7 231.7,315.7" fill="#34446e"/><polygon points="233.2,306.5 234.8,306.5 234.2,311.0 233.8,311.0" fill="#34446e"/><polygon points="235.1,306.5 236.7,306.5 236.1,311.2 235.7,311.2" fill="#34446e"/><polygon points="237.3,306.5 238.9,306.5 238.3,311.7 237.9,311.7" fill="#34446e"/><polygon points="239.3,306.5 240.9,306.5 240.3,311.9 239.9,311.9" fill="#34446e"/><polygon points="241.5,306.5 243.1,306.5 242.5,315.9 242.1,315.9" fill="#34446e"/><polygon points="243.8,306.5 245.4,306.5 244.8,308.8 244.4,308.8" fill="#34446e"/><polygon points="246.2,306.5 247.8,306.5 247.2,314.9 246.8,314.9" fill="#34446e"/><rect x="220.48" y="296.00" width="0.80" height="26.00" fill="#2a3450" /><rect x="249.06" y="296.00" width="0.80" height="26.00" fill="#2a3450" /><rect x="223.08" y="299.00" width="25.88" height="7.50" fill="#0e0e08" opacity="0.9"/><path d="M224.98,305.5 C225.98,301 229.48,299 230.98,300.5 C231.98,302 228.48,305 226.98,304" stroke="#a8c0f0" stroke-width="1.1" fill="none"/><text x="233.48" y="305.6" font-family="Liberation Sans" font-size="8" fill="#a8c0f0" textLength="14.9" lengthAdjust="spacingAndGlyphs">Delic</text><rect x="249.86" y="296.00" width="29.38" height="26.00" fill="#34446e" /><rect x="249.86" y="306.50" width="29.38" height="15.50" fill="#88a4e4" /><polygon points="250.3,306.5 251.9,306.5 251.3,309.7 250.9,309.7" fill="#34446e"/><polygon points="252.6,306.5 254.2,306.5 253.6,311.5 253.2,311.5" fill="#34446e"/><polygon points="254.6,306.5 256.2,306.5 255.6,308.5 255.2,308.5" fill="#34446e"/><polygon points="256.8,306.5 258.4,306.5 257.8,315.5 257.4,315.5" fill="#34446e"/><polygon points="258.8,306.5 260.4,306.5 259.8,313.8 259.4,313.8" fill="#34446e"/><polygon points="261.2,306.5 262.8,306.5 262.2,314.1 261.8,314.1" fill="#34446e"/><polygon points="263.2,306.5 264.8,306.5 264.2,312.3 263.8,312.3" fill="#34446e"/><polygon points="265.0,306.5 266.6,306.5 266.0,316.8 265.6,316.8" fill="#34446e"/><polygon points="267.1,306.5 268.7,306.5 268.1,310.7 267.7,310.7" fill="#34446e"/><polygon points="269.0,306.5 270.6,306.5 270.0,310.6 269.6,310.6" fill="#34446e"/><polygon points="271.5,306.5 273.1,306.5 272.5,308.8 272.1,308.8" fill="#34446e"/><polygon points="273.7,306.5 275.3,306.5 274.7,315.2 274.3,315.2" fill="#34446e"/><polygon points="275.7,306.5 277.3,306.5 276.7,310.4 276.3,310.4" fill="#34446e"/><polygon points="277.4,306.5 279.0,306.5 278.4,311.2 278.0,311.2" fill="#34446e"/><rect x="249.86" y="296.00" width="0.80" height="26.00" fill="#2a3450" /><rect x="278.44" y="296.00" width="0.80" height="26.00" fill="#2a3450" /><rect x="252.46" y="299.00" width="25.88" height="7.50" fill="#0e0e08" opacity="0.9"/><path d="M254.35999999999999,305.5 C255.35999999999999,301 258.86,299 260.36,300.5 C261.36,302 257.86,305 256.36,304" stroke="#a8c0f0" stroke-width="1.1" fill="none"/><text x="262.86" y="305.6" font-family="Liberation Sans" font-size="8" fill="#a8c0f0" textLength="14.9" lengthAdjust="spacingAndGlyphs">Delic</text><rect x="279.24" y="296.00" width="29.38" height="26.00" fill="#34446e" /><rect x="279.24" y="306.50" width="29.38" height="15.50" fill="#88a4e4" /><polygon points="279.6,306.5 281.2,306.5 280.6,311.1 280.2,311.1" fill="#34446e"/><polygon points="282.1,306.5 283.7,306.5 283.1,316.4 282.7,316.4" fill="#34446e"/><polygon points="284.1,306.5 285.7,306.5 285.1,310.6 284.7,310.6" fill="#34446e"/><polygon points="286.2,306.5 287.8,306.5 287.2,310.9 286.8,310.9" fill="#34446e"/><polygon points="288.8,306.5 290.4,306.5 289.8,310.2 289.4,310.2" fill="#34446e"/><polygon points="291.1,306.5 292.7,306.5 292.1,309.7 291.7,309.7" fill="#34446e"/><polygon points="293.3,306.5 294.9,306.5 294.3,312.0 293.9,312.0" fill="#34446e"/><polygon points="295.2,306.5 296.8,306.5 296.2,311.0 295.8,311.0" fill="#34446e"/><polygon points="297.5,306.5 299.1,306.5 298.5,310.0 298.1,310.0" fill="#34446e"/><polygon points="299.8,306.5 301.4,306.5 300.8,308.5 300.4,308.5" fill="#34446e"/><polygon points="301.9,306.5 303.5,306.5 302.9,309.1 302.5,309.1" fill="#34446e"/><polygon points="304.0,306.5 305.6,306.5 305.0,312.3 304.6,312.3" fill="#34446e"/><polygon points="306.4,306.5 308.0,306.5 307.4,316.1 307.0,316.1" fill="#34446e"/><rect x="279.24" y="296.00" width="0.80" height="26.00" fill="#2a3450" /><rect x="307.82" y="296.00" width="0.80" height="26.00" fill="#2a3450" /><rect x="281.84" y="299.00" width="25.88" height="7.50" fill="#0e0e08" opacity="0.9"/><path d="M283.74,305.5 C284.74,301 288.24,299 289.74,300.5 C290.74,302 287.24,305 285.74,304" stroke="#a8c0f0" stroke-width="1.1" fill="none"/><text x="292.24" y="305.6" font-family="Liberation Sans" font-size="8" fill="#a8c0f0" textLength="14.9" lengthAdjust="spacingAndGlyphs">Delic</text><rect x="185.00" y="296.00" width="6.10" height="26.00" fill="#34446e" /><rect x="185.00" y="306.50" width="6.10" height="15.50" fill="#88a4e4" /><polygon points="185.4,306.5 187.0,306.5 186.4,309.3 186.0,309.3" fill="#34446e"/><polygon points="187.9,306.5 189.5,306.5 188.9,313.7 188.5,313.7" fill="#34446e"/><rect x="185.00" y="296.00" width="0.80" height="26.00" fill="#2a3450" /><rect x="190.30" y="296.00" width="0.80" height="26.00" fill="#2a3450" /><rect x="308.62" y="296.00" width="14.69" height="26.00" fill="#2e5a36" /><polygon points="309.1,322.0 309.1,306.0 309.1,306.0 310.8,308.4 312.5,310.2 314.3,311.5 316.0,312.4 317.7,313.1 319.4,313.6 321.1,314.0 322.8,314.3 322.8,322.0" fill="#6cc57c"/><rect x="308.62" y="296.00" width="0.80" height="26.00" fill="#264a2c" /><rect x="322.51" y="296.00" width="0.80" height="26.00" fill="#264a2c" /><rect x="311.22" y="299.00" width="11.19" height="7.50" fill="#0e0e08" opacity="0.9"/><text x="312.12" y="305.6" font-family="Liberation Sans" font-size="8" fill="#98dc98" textLength="9.2" lengthAdjust="spacingAndGlyphs">Deli</text><rect x="323.31" y="296.00" width="14.69" height="26.00" fill="#2e5a36" /><polygon points="323.8,322.0 323.8,306.0 323.8,306.0 325.5,308.4 327.2,310.2 328.9,311.5 330.7,312.4 332.4,313.1 334.1,313.6 335.8,314.0 337.5,314.3 337.5,322.0" fill="#6cc57c"/><rect x="323.31" y="296.00" width="0.80" height="26.00" fill="#264a2c" /><rect x="337.20" y="296.00" width="0.80" height="26.00" fill="#264a2c" /><rect x="325.91" y="299.00" width="11.19" height="7.50" fill="#0e0e08" opacity="0.9"/><text x="326.81" y="305.6" font-family="Liberation Sans" font-size="8" fill="#98dc98" textLength="9.2" lengthAdjust="spacingAndGlyphs">Deli</text><rect x="338.00" y="296.00" width="29.38" height="26.00" fill="#2e5a36" /><polygon points="338.5,322.0 338.5,306.0 338.5,306.0 342.0,308.4 345.6,310.2 349.1,311.5 352.7,312.4 356.2,313.1 359.8,313.6 363.3,314.0 366.9,314.3 366.9,322.0" fill="#6cc57c"/><rect x="338.00" y="296.00" width="0.80" height="26.00" fill="#264a2c" /><rect x="366.58" y="296.00" width="0.80" height="26.00" fill="#264a2c" /><rect x="340.60" y="299.00" width="25.88" height="7.50" fill="#0e0e08" opacity="0.9"/><path d="M342.5,305.5 C343.5,301 347.0,299 348.5,300.5 C349.5,302 346.0,305 344.5,304" stroke="#98dc98" stroke-width="1.1" fill="none"/><text x="351.0" y="305.6" font-family="Liberation Sans" font-size="8" fill="#98dc98" textLength="14.9" lengthAdjust="spacingAndGlyphs">Delic</text><rect x="367.38" y="296.00" width="14.69" height="26.00" fill="#2e5a36" /><polygon points="367.9,322.0 367.9,306.0 367.9,306.0 369.6,308.4 371.3,310.2 373.0,311.5 374.7,312.4 376.4,313.1 378.1,313.6 379.9,314.0 381.6,314.3 381.6,322.0" fill="#6cc57c"/><rect x="367.38" y="296.00" width="0.80" height="26.00" fill="#264a2c" /><rect x="381.27" y="296.00" width="0.80" height="26.00" fill="#264a2c" /><rect x="369.98" y="299.00" width="11.19" height="7.50" fill="#0e0e08" opacity="0.9"/><text x="370.88" y="305.6" font-family="Liberation Sans" font-size="8" fill="#98dc98" textLength="9.2" lengthAdjust="spacingAndGlyphs">Deli</text><rect x="382.07" y="296.00" width="14.69" height="26.00" fill="#2e5a36" /><polygon points="382.6,322.0 382.6,306.0 382.6,306.0 384.3,308.4 386.0,310.2 387.7,311.5 389.4,312.4 391.1,313.1 392.8,313.6 394.5,314.0 396.3,314.3 396.3,322.0" fill="#6cc57c"/><rect x="382.07" y="296.00" width="0.80" height="26.00" fill="#264a2c" /><rect x="395.96" y="296.00" width="0.80" height="26.00" fill="#264a2c" /><rect x="384.67" y="299.00" width="11.19" height="7.50" fill="#0e0e08" opacity="0.9"/><text x="385.57" y="305.6" font-family="Liberation Sans" font-size="8" fill="#98dc98" textLength="9.2" lengthAdjust="spacingAndGlyphs">Deli</text><rect x="396.76" y="296.00" width="29.38" height="26.00" fill="#2e5a36" /><polygon points="397.3,322.0 397.3,306.0 397.3,306.0 400.8,308.4 404.4,310.2 407.9,311.5 411.4,312.4 415.0,313.1 418.5,313.6 422.1,314.0 425.6,314.3 425.6,322.0" fill="#6cc57c"/><rect x="396.76" y="296.00" width="0.80" height="26.00" fill="#264a2c" /><rect x="425.34" y="296.00" width="0.80" height="26.00" fill="#264a2c" /><rect x="399.36" y="299.00" width="25.88" height="7.50" fill="#0e0e08" opacity="0.9"/><path d="M401.26,305.5 C402.26,301 405.76,299 407.26,300.5 C408.26,302 404.76,305 403.26,304" stroke="#98dc98" stroke-width="1.1" fill="none"/><text x="409.76" y="305.6" font-family="Liberation Sans" font-size="8" fill="#98dc98" textLength="14.9" lengthAdjust="spacingAndGlyphs">Delic</text><rect x="426.14" y="296.00" width="14.69" height="26.00" fill="#34446e" /><rect x="426.14" y="306.50" width="14.69" height="15.50" fill="#88a4e4" /><polygon points="426.5,306.5 428.1,306.5 427.5,315.3 427.1,315.3" fill="#34446e"/><polygon points="428.3,306.5 429.9,306.5 429.3,312.4 428.9,312.4" fill="#34446e"/><polygon points="430.1,306.5 431.7,306.5 431.1,309.2 430.7,309.2" fill="#34446e"/><polygon points="432.7,306.5 434.3,306.5 433.7,309.1 433.3,309.1" fill="#34446e"/><polygon points="435.0,306.5 436.6,306.5 436.0,314.2 435.6,314.2" fill="#34446e"/><polygon points="436.8,306.5 438.4,306.5 437.8,310.9 437.4,310.9" fill="#34446e"/><polygon points="439.0,306.5 440.6,306.5 440.0,309.5 439.6,309.5" fill="#34446e"/><rect x="426.14" y="296.00" width="0.80" height="26.00" fill="#2a3450" /><rect x="440.03" y="296.00" width="0.80" height="26.00" fill="#2a3450" /><rect x="428.74" y="299.00" width="11.19" height="7.50" fill="#0e0e08" opacity="0.9"/><text x="429.64" y="305.6" font-family="Liberation Sans" font-size="8" fill="#a8c0f0" textLength="9.2" lengthAdjust="spacingAndGlyphs">Deli</text><rect x="440.83" y="296.00" width="14.69" height="26.00" fill="#34446e" /><rect x="440.83" y="306.50" width="14.69" height="15.50" fill="#88a4e4" /><polygon points="441.2,306.5 442.8,306.5 442.2,315.7 441.8,315.7" fill="#34446e"/><polygon points="443.4,306.5 445.0,306.5 444.4,312.2 444.0,312.2" fill="#34446e"/><polygon points="445.6,306.5 447.2,306.5 446.6,310.8 446.2,310.8" fill="#34446e"/><polygon points="447.7,306.5 449.3,306.5 448.7,316.7 448.3,316.7" fill="#34446e"/><polygon points="449.5,306.5 451.1,306.5 450.5,310.9 450.1,310.9" fill="#34446e"/><polygon points="451.5,306.5 453.1,306.5 452.5,317.4 452.1,317.4" fill="#34446e"/><rect x="440.83" y="296.00" width="0.80" height="26.00" fill="#2a3450" /><rect x="454.72" y="296.00" width="0.80" height="26.00" fill="#2a3450" /><rect x="443.43" y="299.00" width="11.19" height="7.50" fill="#0e0e08" opacity="0.9"/><text x="444.33" y="305.6" font-family="Liberation Sans" font-size="8" fill="#a8c0f0" textLength="9.2" lengthAdjust="spacingAndGlyphs">Deli</text><rect x="455.52" y="296.00" width="14.69" height="26.00" fill="#34446e" /><rect x="455.52" y="306.50" width="14.69" height="15.50" fill="#88a4e4" /><polygon points="455.9,306.5 457.5,306.5 456.9,317.3 456.5,317.3" fill="#34446e"/><polygon points="457.9,306.5 459.5,306.5 458.9,309.4 458.5,309.4" fill="#34446e"/><polygon points="459.9,306.5 461.5,306.5 460.9,315.1 460.5,315.1" fill="#34446e"/><polygon points="462.4,306.5 464.0,306.5 463.4,309.0 463.0,309.0" fill="#34446e"/><polygon points="465.0,306.5 466.6,306.5 466.0,310.0 465.6,310.0" fill="#34446e"/><polygon points="467.5,306.5 469.1,306.5 468.5,314.7 468.1,314.7" fill="#34446e"/><rect x="455.52" y="296.00" width="0.80" height="26.00" fill="#2a3450" /><rect x="469.41" y="296.00" width="0.80" height="26.00" fill="#2a3450" /><rect x="458.12" y="299.00" width="11.19" height="7.50" fill="#0e0e08" opacity="0.9"/><text x="459.02" y="305.6" font-family="Liberation Sans" font-size="8" fill="#a8c0f0" textLength="9.2" lengthAdjust="spacingAndGlyphs">Deli</text><rect x="470.21" y="296.00" width="14.69" height="26.00" fill="#34446e" /><rect x="470.21" y="306.50" width="14.69" height="15.50" fill="#88a4e4" /><polygon points="470.6,306.5 472.2,306.5 471.6,310.5 471.2,310.5" fill="#34446e"/><polygon points="472.4,306.5 474.0,306.5 473.4,312.4 473.0,312.4" fill="#34446e"/><polygon points="474.6,306.5 476.2,306.5 475.6,313.7 475.2,313.7" fill="#34446e"/><polygon points="476.8,306.5 478.4,306.5 477.8,316.7 477.4,316.7" fill="#34446e"/><polygon points="478.8,306.5 480.4,306.5 479.8,311.8 479.4,311.8" fill="#34446e"/><polygon points="480.6,306.5 482.2,306.5 481.6,311.3 481.2,311.3" fill="#34446e"/><polygon points="482.4,306.5 484.0,306.5 483.4,316.8 483.0,316.8" fill="#34446e"/><rect x="470.21" y="296.00" width="0.80" height="26.00" fill="#2a3450" /><rect x="484.10" y="296.00" width="0.80" height="26.00" fill="#2a3450" /><rect x="472.81" y="299.00" width="11.19" height="7.50" fill="#0e0e08" opacity="0.9"/><text x="473.71000000000004" y="305.6" font-family="Liberation Sans" font-size="8" fill="#a8c0f0" textLength="9.2" lengthAdjust="spacingAndGlyphs">Deli</text><rect x="484.90" y="296.00" width="14.69" height="26.00" fill="#34446e" /><rect x="484.90" y="306.50" width="14.69" height="15.50" fill="#88a4e4" /><polygon points="485.3,306.5 486.9,306.5 486.3,311.5 485.9,311.5" fill="#34446e"/><polygon points="487.3,306.5 488.9,306.5 488.3,312.2 487.9,312.2" fill="#34446e"/><polygon points="489.4,306.5 491.0,306.5 490.4,312.3 490.0,312.3" fill="#34446e"/><polygon points="491.6,306.5 493.2,306.5 492.6,309.0 492.2,309.0" fill="#34446e"/><polygon points="493.4,306.5 495.0,306.5 494.4,311.1 494.0,311.1" fill="#34446e"/><polygon points="495.2,306.5 496.8,306.5 496.2,316.1 495.8,316.1" fill="#34446e"/><polygon points="497.7,306.5 499.3,306.5 498.7,316.1 498.3,316.1" fill="#34446e"/><rect x="484.90" y="296.00" width="0.80" height="26.00" fill="#2a3450" /><rect x="498.79" y="296.00" width="0.80" height="26.00" fill="#2a3450" /><rect x="487.50" y="299.00" width="11.19" height="7.50" fill="#0e0e08" opacity="0.9"/><text x="488.4" y="305.6" font-family="Liberation Sans" font-size="8" fill="#a8c0f0" textLength="9.2" lengthAdjust="spacingAndGlyphs">Deli</text><rect x="499.59" y="296.00" width="14.69" height="26.00" fill="#34446e" /><rect x="499.59" y="306.50" width="14.69" height="15.50" fill="#88a4e4" /><polygon points="500.0,306.5 501.6,306.5 501.0,309.4 500.6,309.4" fill="#34446e"/><polygon points="502.4,306.5 504.0,306.5 503.4,310.8 503.0,310.8" fill="#34446e"/><polygon points="505.0,306.5 506.6,306.5 506.0,316.9 505.6,316.9" fill="#34446e"/><polygon points="507.4,306.5 509.0,306.5 508.4,311.2 508.0,311.2" fill="#34446e"/><polygon points="509.6,306.5 511.2,306.5 510.6,315.2 510.2,315.2" fill="#34446e"/><polygon points="512.0,306.5 513.6,306.5 513.0,313.8 512.6,313.8" fill="#34446e"/><rect x="499.59" y="296.00" width="0.80" height="26.00" fill="#2a3450" /><rect x="513.48" y="296.00" width="0.80" height="26.00" fill="#2a3450" /><rect x="502.19" y="299.00" width="11.19" height="7.50" fill="#0e0e08" opacity="0.9"/><text x="503.09000000000003" y="305.6" font-family="Liberation Sans" font-size="8" fill="#a8c0f0" textLength="9.2" lengthAdjust="spacingAndGlyphs">Deli</text><rect x="514.28" y="296.00" width="14.69" height="26.00" fill="#34446e" /><rect x="514.28" y="306.50" width="14.69" height="15.50" fill="#88a4e4" /><polygon points="514.7,306.5 516.3,306.5 515.7,310.4 515.3,310.4" fill="#34446e"/><polygon points="517.0,306.5 518.6,306.5 518.0,308.7 517.6,308.7" fill="#34446e"/><polygon points="519.5,306.5 521.1,306.5 520.5,310.0 520.1,310.0" fill="#34446e"/><polygon points="521.7,306.5 523.3,306.5 522.7,315.8 522.3,315.8" fill="#34446e"/><polygon points="523.9,306.5 525.5,306.5 524.9,314.1 524.5,314.1" fill="#34446e"/><polygon points="525.8,306.5 527.4,306.5 526.8,314.1 526.4,314.1" fill="#34446e"/><rect x="514.28" y="296.00" width="0.80" height="26.00" fill="#2a3450" /><rect x="528.17" y="296.00" width="0.80" height="26.00" fill="#2a3450" /><rect x="516.88" y="299.00" width="11.19" height="7.50" fill="#0e0e08" opacity="0.9"/><text x="517.78" y="305.6" font-family="Liberation Sans" font-size="8" fill="#a8c0f0" textLength="9.2" lengthAdjust="spacingAndGlyphs">Deli</text><rect x="528.97" y="296.00" width="14.69" height="26.00" fill="#34446e" /><rect x="528.97" y="306.50" width="14.69" height="15.50" fill="#88a4e4" /><polygon points="529.4,306.5 531.0,306.5 530.4,309.1 530.0,309.1" fill="#34446e"/><polygon points="531.5,306.5 533.1,306.5 532.5,314.6 532.1,314.6" fill="#34446e"/><polygon points="533.6,306.5 535.2,306.5 534.6,315.3 534.2,315.3" fill="#34446e"/><polygon points="536.1,306.5 537.7,306.5 537.1,316.0 536.7,316.0" fill="#34446e"/><polygon points="538.4,306.5 540.0,306.5 539.4,312.3 539.0,312.3" fill="#34446e"/><polygon points="540.4,306.5 542.0,306.5 541.4,313.9 541.0,313.9" fill="#34446e"/><rect x="528.97" y="296.00" width="0.80" height="26.00" fill="#2a3450" /><rect x="542.86" y="296.00" width="0.80" height="26.00" fill="#2a3450" /><rect x="531.57" y="299.00" width="11.19" height="7.50" fill="#0e0e08" opacity="0.9"/><text x="532.47" y="305.6" font-family="Liberation Sans" font-size="8" fill="#a8c0f0" textLength="9.2" lengthAdjust="spacingAndGlyphs">Deli</text><rect x="661.30" y="296.00" width="14.69" height="26.00" fill="#34446e" /><rect x="661.30" y="306.50" width="14.69" height="15.50" fill="#88a4e4" /><polygon points="661.7,306.5 663.3,306.5 662.7,310.7 662.3,310.7" fill="#34446e"/><polygon points="663.7,306.5 665.3,306.5 664.7,311.3 664.3,311.3" fill="#34446e"/><polygon points="665.6,306.5 667.2,306.5 666.6,311.4 666.2,311.4" fill="#34446e"/><polygon points="667.6,306.5 669.2,306.5 668.6,310.9 668.2,310.9" fill="#34446e"/><polygon points="669.6,306.5 671.2,306.5 670.6,316.1 670.2,316.1" fill="#34446e"/><polygon points="671.7,306.5 673.3,306.5 672.7,313.7 672.3,313.7" fill="#34446e"/><polygon points="674.0,306.5 675.6,306.5 675.0,311.2 674.6,311.2" fill="#34446e"/><rect x="661.30" y="296.00" width="0.80" height="26.00" fill="#2a3450" /><rect x="675.19" y="296.00" width="0.80" height="26.00" fill="#2a3450" /><rect x="663.90" y="299.00" width="11.19" height="7.50" fill="#0e0e08" opacity="0.9"/><text x="664.8" y="305.6" font-family="Liberation Sans" font-size="8" fill="#a8c0f0" textLength="9.2" lengthAdjust="spacingAndGlyphs">Deli</text><rect x="675.99" y="296.00" width="14.69" height="26.00" fill="#34446e" /><rect x="675.99" y="306.50" width="14.69" height="15.50" fill="#88a4e4" /><polygon points="676.4,306.5 678.0,306.5 677.4,313.1 677.0,313.1" fill="#34446e"/><polygon points="678.1,306.5 679.7,306.5 679.1,312.9 678.7,312.9" fill="#34446e"/><polygon points="680.0,306.5 681.6,306.5 681.0,311.4 680.6,311.4" fill="#34446e"/><polygon points="682.2,306.5 683.8,306.5 683.2,312.2 682.8,312.2" fill="#34446e"/><polygon points="684.6,306.5 686.2,306.5 685.6,310.7 685.2,310.7" fill="#34446e"/><polygon points="687.0,306.5 688.6,306.5 688.0,311.1 687.6,311.1" fill="#34446e"/><rect x="675.99" y="296.00" width="0.80" height="26.00" fill="#2a3450" /><rect x="689.88" y="296.00" width="0.80" height="26.00" fill="#2a3450" /><rect x="678.59" y="299.00" width="11.19" height="7.50" fill="#0e0e08" opacity="0.9"/><text x="679.49" y="305.6" font-family="Liberation Sans" font-size="8" fill="#a8c0f0" textLength="9.2" lengthAdjust="spacingAndGlyphs">Deli</text><rect x="690.68" y="296.00" width="14.69" height="26.00" fill="#34446e" /><rect x="690.68" y="306.50" width="14.69" height="15.50" fill="#88a4e4" /><polygon points="691.1,306.5 692.7,306.5 692.1,315.4 691.7,315.4" fill="#34446e"/><polygon points="692.9,306.5 694.5,306.5 693.9,310.5 693.5,310.5" fill="#34446e"/><polygon points="695.1,306.5 696.7,306.5 696.1,312.5 695.7,312.5" fill="#34446e"/><polygon points="697.2,306.5 698.8,306.5 698.2,308.9 697.8,308.9" fill="#34446e"/><polygon points="699.4,306.5 701.0,306.5 700.4,317.3 700.0,317.3" fill="#34446e"/><polygon points="701.8,306.5 703.4,306.5 702.8,310.7 702.4,310.7" fill="#34446e"/><rect x="690.68" y="296.00" width="0.80" height="26.00" fill="#2a3450" /><rect x="704.57" y="296.00" width="0.80" height="26.00" fill="#2a3450" /><rect x="693.28" y="299.00" width="11.19" height="7.50" fill="#0e0e08" opacity="0.9"/><text x="694.18" y="305.6" font-family="Liberation Sans" font-size="8" fill="#a8c0f0" textLength="9.2" lengthAdjust="spacingAndGlyphs">Deli</text><rect x="705.37" y="296.00" width="14.69" height="26.00" fill="#34446e" /><rect x="705.37" y="306.50" width="14.69" height="15.50" fill="#88a4e4" /><polygon points="705.8,306.5 707.4,306.5 706.8,310.8 706.4,310.8" fill="#34446e"/><polygon points="708.0,306.5 709.6,306.5 709.0,311.8 708.6,311.8" fill="#34446e"/><polygon points="709.8,306.5 711.4,306.5 710.8,310.9 710.4,310.9" fill="#34446e"/><polygon points="711.8,306.5 713.4,306.5 712.8,309.0 712.4,309.0" fill="#34446e"/><polygon points="713.6,306.5 715.2,306.5 714.6,316.1 714.2,316.1" fill="#34446e"/><polygon points="715.4,306.5 717.0,306.5 716.4,310.1 716.0,310.1" fill="#34446e"/><polygon points="717.8,306.5 719.4,306.5 718.8,310.8 718.4,310.8" fill="#34446e"/><rect x="705.37" y="296.00" width="0.80" height="26.00" fill="#2a3450" /><rect x="719.26" y="296.00" width="0.80" height="26.00" fill="#2a3450" /><rect x="707.97" y="299.00" width="11.19" height="7.50" fill="#0e0e08" opacity="0.9"/><text x="708.87" y="305.6" font-family="Liberation Sans" font-size="8" fill="#a8c0f0" textLength="9.2" lengthAdjust="spacingAndGlyphs">Deli</text><rect x="720.06" y="296.00" width="14.69" height="26.00" fill="#34446e" /><rect x="720.06" y="306.50" width="14.69" height="15.50" fill="#88a4e4" /><polygon points="720.5,306.5 722.1,306.5 721.5,310.0 721.1,310.0" fill="#34446e"/><polygon points="722.8,306.5 724.4,306.5 723.8,312.5 723.4,312.5" fill="#34446e"/><polygon points="724.7,306.5 726.3,306.5 725.7,310.6 725.3,310.6" fill="#34446e"/><polygon points="726.6,306.5 728.2,306.5 727.6,308.6 727.2,308.6" fill="#34446e"/><polygon points="728.7,306.5 730.3,306.5 729.7,315.9 729.3,315.9" fill="#34446e"/><polygon points="731.0,306.5 732.6,306.5 732.0,309.1 731.6,309.1" fill="#34446e"/><polygon points="732.8,306.5 734.4,306.5 733.8,310.6 733.4,310.6" fill="#34446e"/><rect x="720.06" y="296.00" width="0.80" height="26.00" fill="#2a3450" /><rect x="733.95" y="296.00" width="0.80" height="26.00" fill="#2a3450" /><rect x="722.66" y="299.00" width="11.19" height="7.50" fill="#0e0e08" opacity="0.9"/><text x="723.56" y="305.6" font-family="Liberation Sans" font-size="8" fill="#a8c0f0" textLength="9.2" lengthAdjust="spacingAndGlyphs">Deli</text><rect x="734.75" y="296.00" width="14.69" height="26.00" fill="#34446e" /><rect x="734.75" y="306.50" width="14.69" height="15.50" fill="#88a4e4" /><polygon points="735.2,306.5 736.8,306.5 736.2,311.2 735.8,311.2" fill="#34446e"/><polygon points="737.2,306.5 738.8,306.5 738.2,315.1 737.8,315.1" fill="#34446e"/><polygon points="739.7,306.5 741.3,306.5 740.7,310.0 740.3,310.0" fill="#34446e"/><polygon points="742.1,306.5 743.7,306.5 743.1,310.7 742.7,310.7" fill="#34446e"/><polygon points="744.3,306.5 745.9,306.5 745.3,312.8 744.9,312.8" fill="#34446e"/><polygon points="746.3,306.5 747.9,306.5 747.3,312.7 746.9,312.7" fill="#34446e"/><rect x="734.75" y="296.00" width="0.80" height="26.00" fill="#2a3450" /><rect x="748.64" y="296.00" width="0.80" height="26.00" fill="#2a3450" /><rect x="737.35" y="299.00" width="11.19" height="7.50" fill="#0e0e08" opacity="0.9"/><text x="738.25" y="305.6" font-family="Liberation Sans" font-size="8" fill="#a8c0f0" textLength="9.2" lengthAdjust="spacingAndGlyphs">Deli</text><rect x="749.44" y="296.00" width="14.69" height="26.00" fill="#34446e" /><rect x="749.44" y="306.50" width="14.69" height="15.50" fill="#88a4e4" /><polygon points="749.8,306.5 751.4,306.5 750.8,309.9 750.4,309.9" fill="#34446e"/><polygon points="752.3,306.5 753.9,306.5 753.3,314.1 752.9,314.1" fill="#34446e"/><polygon points="754.7,306.5 756.3,306.5 755.7,309.7 755.3,309.7" fill="#34446e"/><polygon points="756.5,306.5 758.1,306.5 757.5,310.3 757.1,310.3" fill="#34446e"/><polygon points="758.8,306.5 760.4,306.5 759.8,311.3 759.4,311.3" fill="#34446e"/><polygon points="761.0,306.5 762.6,306.5 762.0,316.7 761.6,316.7" fill="#34446e"/><rect x="749.44" y="296.00" width="0.80" height="26.00" fill="#2a3450" /><rect x="763.33" y="296.00" width="0.80" height="26.00" fill="#2a3450" /><rect x="752.04" y="299.00" width="11.19" height="7.50" fill="#0e0e08" opacity="0.9"/><text x="752.9399999999999" y="305.6" font-family="Liberation Sans" font-size="8" fill="#a8c0f0" textLength="9.2" lengthAdjust="spacingAndGlyphs">Deli</text><rect x="764.13" y="296.00" width="14.69" height="26.00" fill="#34446e" /><rect x="764.13" y="306.50" width="14.69" height="15.50" fill="#88a4e4" /><polygon points="764.5,306.5 766.1,306.5 765.5,310.2 765.1,310.2" fill="#34446e"/><polygon points="766.9,306.5 768.5,306.5 767.9,317.5 767.5,317.5" fill="#34446e"/><polygon points="769.1,306.5 770.7,306.5 770.1,311.8 769.7,311.8" fill="#34446e"/><polygon points="770.9,306.5 772.5,306.5 771.9,310.7 771.5,310.7" fill="#34446e"/><polygon points="773.2,306.5 774.8,306.5 774.2,313.9 773.8,313.9" fill="#34446e"/><polygon points="775.6,306.5 777.2,306.5 776.6,311.2 776.2,311.2" fill="#34446e"/><rect x="764.13" y="296.00" width="0.80" height="26.00" fill="#2a3450" /><rect x="778.02" y="296.00" width="0.80" height="26.00" fill="#2a3450" /><rect x="766.73" y="299.00" width="11.19" height="7.50" fill="#0e0e08" opacity="0.9"/><text x="767.63" y="305.6" font-family="Liberation Sans" font-size="8" fill="#a8c0f0" textLength="9.2" lengthAdjust="spacingAndGlyphs">Deli</text><rect x="778.82" y="296.00" width="14.69" height="26.00" fill="#34446e" /><rect x="778.82" y="306.50" width="14.69" height="15.50" fill="#88a4e4" /><polygon points="779.2,306.5 780.8,306.5 780.2,308.5 779.8,308.5" fill="#34446e"/><polygon points="781.5,306.5 783.1,306.5 782.5,311.0 782.1,311.0" fill="#34446e"/><polygon points="783.6,306.5 785.2,306.5 784.6,311.1 784.2,311.1" fill="#34446e"/><polygon points="785.3,306.5 786.9,306.5 786.3,316.1 785.9,316.1" fill="#34446e"/><polygon points="787.1,306.5 788.7,306.5 788.1,311.3 787.7,311.3" fill="#34446e"/><polygon points="789.1,306.5 790.7,306.5 790.1,311.5 789.7,311.5" fill="#34446e"/><polygon points="791.0,306.5 792.6,306.5 792.0,315.4 791.6,315.4" fill="#34446e"/><rect x="778.82" y="296.00" width="0.80" height="26.00" fill="#2a3450" /><rect x="792.71" y="296.00" width="0.80" height="26.00" fill="#2a3450" /><rect x="781.42" y="299.00" width="11.19" height="7.50" fill="#0e0e08" opacity="0.9"/><text x="782.3199999999999" y="305.6" font-family="Liberation Sans" font-size="8" fill="#a8c0f0" textLength="9.2" lengthAdjust="spacingAndGlyphs">Deli</text><rect x="793.51" y="296.00" width="14.69" height="26.00" fill="#34446e" /><rect x="793.51" y="306.50" width="14.69" height="15.50" fill="#88a4e4" /><polygon points="793.9,306.5 795.5,306.5 794.9,317.2 794.5,317.2" fill="#34446e"/><polygon points="796.0,306.5 797.6,306.5 797.0,308.5 796.6,308.5" fill="#34446e"/><polygon points="798.1,306.5 799.7,306.5 799.1,311.4 798.7,311.4" fill="#34446e"/><polygon points="800.5,306.5 802.1,306.5 801.5,312.6 801.1,312.6" fill="#34446e"/><polygon points="802.7,306.5 804.3,306.5 803.7,310.7 803.3,310.7" fill="#34446e"/><polygon points="804.5,306.5 806.1,306.5 805.5,309.7 805.1,309.7" fill="#34446e"/><polygon points="806.3,306.5 807.9,306.5 807.3,313.1 806.9,313.1" fill="#34446e"/><rect x="793.51" y="296.00" width="0.80" height="26.00" fill="#2a3450" /><rect x="807.40" y="296.00" width="0.80" height="26.00" fill="#2a3450" /><rect x="796.11" y="299.00" width="11.19" height="7.50" fill="#0e0e08" opacity="0.9"/><text x="797.01" y="305.6" font-family="Liberation Sans" font-size="8" fill="#a8c0f0" textLength="9.2" lengthAdjust="spacingAndGlyphs">Deli</text><rect x="808.20" y="296.00" width="14.69" height="26.00" fill="#34446e" /><rect x="808.20" y="306.50" width="14.69" height="15.50" fill="#88a4e4" /><polygon points="808.6,306.5 810.2,306.5 809.6,311.8 809.2,311.8" fill="#34446e"/><polygon points="810.4,306.5 812.0,306.5 811.4,317.2 811.0,317.2" fill="#34446e"/><polygon points="812.8,306.5 814.4,306.5 813.8,314.3 813.4,314.3" fill="#34446e"/><polygon points="814.8,306.5 816.4,306.5 815.8,310.6 815.4,310.6" fill="#34446e"/><polygon points="817.0,306.5 818.6,306.5 818.0,313.6 817.6,313.6" fill="#34446e"/><polygon points="819.2,306.5 820.8,306.5 820.2,314.4 819.8,314.4" fill="#34446e"/><polygon points="821.0,306.5 822.6,306.5 822.0,317.4 821.6,317.4" fill="#34446e"/><rect x="808.20" y="296.00" width="0.80" height="26.00" fill="#2a3450" /><rect x="822.09" y="296.00" width="0.80" height="26.00" fill="#2a3450" /><rect x="810.80" y="299.00" width="11.19" height="7.50" fill="#0e0e08" opacity="0.9"/><text x="811.6999999999999" y="305.6" font-family="Liberation Sans" font-size="8" fill="#a8c0f0" textLength="9.2" lengthAdjust="spacingAndGlyphs">Deli</text><rect x="822.89" y="296.00" width="14.69" height="26.00" fill="#34446e" /><rect x="822.89" y="306.50" width="14.69" height="15.50" fill="#88a4e4" /><polygon points="823.3,306.5 824.9,306.5 824.3,315.8 823.9,315.8" fill="#34446e"/><polygon points="825.7,306.5 827.3,306.5 826.7,309.6 826.3,309.6" fill="#34446e"/><polygon points="828.1,306.5 829.7,306.5 829.1,314.8 828.7,314.8" fill="#34446e"/><polygon points="829.8,306.5 831.4,306.5 830.8,311.7 830.4,311.7" fill="#34446e"/><polygon points="831.8,306.5 833.4,306.5 832.8,308.6 832.4,308.6" fill="#34446e"/><polygon points="834.3,306.5 835.9,306.5 835.3,317.2 834.9,317.2" fill="#34446e"/><rect x="822.89" y="296.00" width="0.80" height="26.00" fill="#2a3450" /><rect x="836.78" y="296.00" width="0.80" height="26.00" fill="#2a3450" /><rect x="825.49" y="299.00" width="11.19" height="7.50" fill="#0e0e08" opacity="0.9"/><text x="826.39" y="305.6" font-family="Liberation Sans" font-size="8" fill="#a8c0f0" textLength="9.2" lengthAdjust="spacingAndGlyphs">Deli</text><rect x="837.58" y="296.00" width="14.69" height="26.00" fill="#34446e" /><rect x="837.58" y="306.50" width="14.69" height="15.50" fill="#88a4e4" /><polygon points="838.0,306.5 839.6,306.5 839.0,311.0 838.6,311.0" fill="#34446e"/><polygon points="840.5,306.5 842.1,306.5 841.5,316.5 841.1,316.5" fill="#34446e"/><polygon points="842.3,306.5 843.9,306.5 843.3,310.4 842.9,310.4" fill="#34446e"/><polygon points="844.7,306.5 846.3,306.5 845.7,311.1 845.3,311.1" fill="#34446e"/><polygon points="846.8,306.5 848.4,306.5 847.8,310.6 847.4,310.6" fill="#34446e"/><polygon points="848.7,306.5 850.3,306.5 849.7,317.3 849.3,317.3" fill="#34446e"/><rect x="837.58" y="296.00" width="0.80" height="26.00" fill="#2a3450" /><rect x="851.47" y="296.00" width="0.80" height="26.00" fill="#2a3450" /><rect x="840.18" y="299.00" width="11.19" height="7.50" fill="#0e0e08" opacity="0.9"/><text x="841.0799999999999" y="305.6" font-family="Liberation Sans" font-size="8" fill="#a8c0f0" textLength="9.2" lengthAdjust="spacingAndGlyphs">Deli</text><rect x="852.27" y="296.00" width="14.69" height="26.00" fill="#34446e" /><rect x="852.27" y="306.50" width="14.69" height="15.50" fill="#88a4e4" /><polygon points="852.7,306.5 854.3,306.5 853.7,311.4 853.3,311.4" fill="#34446e"/><polygon points="855.0,306.5 856.6,306.5 856.0,313.4 855.6,313.4" fill="#34446e"/><polygon points="857.1,306.5 858.7,306.5 858.1,311.0 857.7,311.0" fill="#34446e"/><polygon points="859.0,306.5 860.6,306.5 860.0,316.8 859.6,316.8" fill="#34446e"/><polygon points="861.1,306.5 862.7,306.5 862.1,310.2 861.7,310.2" fill="#34446e"/><polygon points="863.6,306.5 865.2,306.5 864.6,310.6 864.2,310.6" fill="#34446e"/><rect x="852.27" y="296.00" width="0.80" height="26.00" fill="#2a3450" /><rect x="866.16" y="296.00" width="0.80" height="26.00" fill="#2a3450" /><rect x="854.87" y="299.00" width="11.19" height="7.50" fill="#0e0e08" opacity="0.9"/><text x="855.77" y="305.6" font-family="Liberation Sans" font-size="8" fill="#a8c0f0" textLength="9.2" lengthAdjust="spacingAndGlyphs">Deli</text><rect x="866.96" y="296.00" width="14.69" height="26.00" fill="#34446e" /><rect x="866.96" y="306.50" width="14.69" height="15.50" fill="#88a4e4" /><polygon points="867.4,306.5 869.0,306.5 868.4,314.4 868.0,314.4" fill="#34446e"/><polygon points="869.3,306.5 870.9,306.5 870.3,308.6 869.9,308.6" fill="#34446e"/><polygon points="871.6,306.5 873.2,306.5 872.6,313.4 872.2,313.4" fill="#34446e"/><polygon points="873.8,306.5 875.4,306.5 874.8,311.5 874.4,311.5" fill="#34446e"/><polygon points="875.8,306.5 877.4,306.5 876.8,311.4 876.4,311.4" fill="#34446e"/><polygon points="878.0,306.5 879.6,306.5 879.0,311.9 878.6,311.9" fill="#34446e"/><rect x="866.96" y="296.00" width="0.80" height="26.00" fill="#2a3450" /><rect x="880.85" y="296.00" width="0.80" height="26.00" fill="#2a3450" /><rect x="869.56" y="299.00" width="11.19" height="7.50" fill="#0e0e08" opacity="0.9"/><text x="870.4599999999999" y="305.6" font-family="Liberation Sans" font-size="8" fill="#a8c0f0" textLength="9.2" lengthAdjust="spacingAndGlyphs">Deli</text><rect x="881.65" y="296.00" width="14.69" height="26.00" fill="#34446e" /><rect x="881.65" y="306.50" width="14.69" height="15.50" fill="#88a4e4" /><polygon points="882.1,306.5 883.6,306.5 883.1,315.8 882.6,315.8" fill="#34446e"/><polygon points="884.6,306.5 886.2,306.5 885.6,310.6 885.2,310.6" fill="#34446e"/><polygon points="886.8,306.5 888.4,306.5 887.8,313.7 887.4,313.7" fill="#34446e"/><polygon points="888.5,306.5 890.1,306.5 889.5,317.4 889.1,317.4" fill="#34446e"/><polygon points="890.6,306.5 892.2,306.5 891.6,313.5 891.2,313.5" fill="#34446e"/><polygon points="892.3,306.5 893.9,306.5 893.3,309.2 892.9,309.2" fill="#34446e"/><polygon points="894.2,306.5 895.8,306.5 895.2,311.3 894.8,311.3" fill="#34446e"/><rect x="881.65" y="296.00" width="0.80" height="26.00" fill="#2a3450" /><rect x="895.54" y="296.00" width="0.80" height="26.00" fill="#2a3450" /><rect x="884.25" y="299.00" width="11.19" height="7.50" fill="#0e0e08" opacity="0.9"/><text x="885.15" y="305.6" font-family="Liberation Sans" font-size="8" fill="#a8c0f0" textLength="9.2" lengthAdjust="spacingAndGlyphs">Deli</text><rect x="185.00" y="111.70" width="5.00" height="8.50" fill="#0e0e08" opacity="0.9"/><text x="185.8" y="119.0" font-family="Liberation Sans" font-size="7.5" fill="#d8d8c0" textLength="3.4" lengthAdjust="spacingAndGlyphs">-2</text><text x="209" y="119.5" font-family="Liberation Serif" font-style="italic" font-size="9" fill="#e8e8e8">fx</text><rect x="224.00" y="111.70" width="17.00" height="8.50" fill="#0e0e08" opacity="0.9"/><text x="224.8" y="119.0" font-family="Liberation Sans" font-size="7.5" fill="#d8d8c0" textLength="15.4" lengthAdjust="spacingAndGlyphs">-3 (A)</text><text x="240.5" y="119.2" font-family="Liberation Serif" font-style="italic" font-size="8.5" fill="#e8e8e8">fx</text><text x="268" y="119.5" font-family="Liberation Serif" font-style="italic" font-size="9" fill="#e8e8e8">fx</text><rect x="283.00" y="111.70" width="17.00" height="8.50" fill="#0e0e08" opacity="0.9"/><text x="283.8" y="119.0" font-family="Liberation Sans" font-size="7.5" fill="#d8d8c0" textLength="15.4" lengthAdjust="spacingAndGlyphs">-3 (A)</text><text x="299.5" y="119.2" font-family="Liberation Serif" font-style="italic" font-size="8.5" fill="#e8e8e8">fx</text><rect x="311.80" y="111.70" width="9.50" height="8.50" fill="#0e0e08" opacity="0.9"/><text x="312.6" y="119.0" font-family="Liberation Sans" font-size="7.5" fill="#d8d8c0" textLength="7.9" lengthAdjust="spacingAndGlyphs">+2</text><rect x="340.00" y="111.70" width="17.00" height="8.50" fill="#0e0e08" opacity="0.9"/><text x="340.8" y="119.0" font-family="Liberation Sans" font-size="7.5" fill="#d8d8c0" textLength="15.4" lengthAdjust="spacingAndGlyphs">-5 (G)</text><text x="356.5" y="119.2" font-family="Liberation Serif" font-style="italic" font-size="8.5" fill="#e8e8e8">fx</text><rect x="371.00" y="111.70" width="10.00" height="8.50" fill="#0e0e08" opacity="0.9"/><text x="371.8" y="119.0" font-family="Liberation Sans" font-size="7.5" fill="#d8d8c0" textLength="8.4" lengthAdjust="spacingAndGlyphs">+2 (</text><rect x="398.00" y="111.70" width="17.00" height="8.50" fill="#0e0e08" opacity="0.9"/><text x="398.8" y="119.0" font-family="Liberation Sans" font-size="7.5" fill="#d8d8c0" textLength="15.4" lengthAdjust="spacingAndGlyphs">-5 (G)</text><text x="414.5" y="119.2" font-family="Liberation Serif" font-style="italic" font-size="8.5" fill="#e8e8e8">fx</text><rect x="543.00" y="111.70" width="12.00" height="8.50" fill="#0e0e08" opacity="0.9"/><text x="543.8" y="119.0" font-family="Liberation Sans" font-size="7.5" fill="#d8d8c0" textLength="10.4" lengthAdjust="spacingAndGlyphs">-3 (A</text><rect x="896.00" y="111.70" width="13.00" height="8.50" fill="#0e0e08" opacity="0.9"/><text x="896.8" y="119.0" font-family="Liberation Sans" font-size="7.5" fill="#d8d8c0" textLength="11.4" lengthAdjust="spacingAndGlyphs">-3 (A</text><rect x="954.00" y="111.70" width="17.00" height="8.50" fill="#0e0e08" opacity="0.9"/><text x="954.8" y="119.0" font-family="Liberation Sans" font-size="7.5" fill="#d8d8c0" textLength="15.4" lengthAdjust="spacingAndGlyphs">-3 (A)</text><rect x="427.64" y="198.00" width="11.00" height="8.50" fill="#0e0e08" opacity="0.9"/><text x="428.44" y="205.3" font-family="Liberation Sans" font-size="7.5" fill="#d8d8c0" textLength="9.4" lengthAdjust="spacingAndGlyphs">-3(</text><rect x="442.33" y="198.00" width="11.00" height="8.50" fill="#0e0e08" opacity="0.9"/><text x="443.13" y="205.3" font-family="Liberation Sans" font-size="7.5" fill="#d8d8c0" textLength="9.4" lengthAdjust="spacingAndGlyphs">+5</text><rect x="471.71" y="198.00" width="11.00" height="8.50" fill="#0e0e08" opacity="0.9"/><text x="472.51000000000005" y="205.3" font-family="Liberation Sans" font-size="7.5" fill="#d8d8c0" textLength="9.4" lengthAdjust="spacingAndGlyphs">-5(</text><rect x="486.40" y="198.00" width="11.00" height="8.50" fill="#0e0e08" opacity="0.9"/><text x="487.2" y="205.3" font-family="Liberation Sans" font-size="7.5" fill="#d8d8c0" textLength="9.4" lengthAdjust="spacingAndGlyphs">-3(</text><rect x="501.09" y="198.00" width="11.00" height="8.50" fill="#0e0e08" opacity="0.9"/><text x="501.89000000000004" y="205.3" font-family="Liberation Sans" font-size="7.5" fill="#d8d8c0" textLength="9.4" lengthAdjust="spacingAndGlyphs">+5</text><rect x="530.47" y="198.00" width="11.00" height="8.50" fill="#0e0e08" opacity="0.9"/><text x="531.27" y="205.3" font-family="Liberation Sans" font-size="7.5" fill="#d8d8c0" textLength="9.4" lengthAdjust="spacingAndGlyphs">-5(</text><rect x="603.90" y="198.00" width="11.00" height="8.50" fill="#0e0e08" opacity="0.9"/><text x="604.6999999999999" y="205.3" font-family="Liberation Sans" font-size="7.5" fill="#d8d8c0" textLength="9.4" lengthAdjust="spacingAndGlyphs">-3(</text><rect x="618.59" y="198.00" width="11.00" height="8.50" fill="#0e0e08" opacity="0.9"/><text x="619.39" y="205.3" font-family="Liberation Sans" font-size="7.5" fill="#d8d8c0" textLength="9.4" lengthAdjust="spacingAndGlyphs">+5</text><rect x="647.97" y="198.00" width="11.00" height="8.50" fill="#0e0e08" opacity="0.9"/><text x="648.77" y="205.3" font-family="Liberation Sans" font-size="7.5" fill="#d8d8c0" textLength="9.4" lengthAdjust="spacingAndGlyphs">-5(</text><rect x="662.66" y="198.00" width="11.00" height="8.50" fill="#0e0e08" opacity="0.9"/><text x="663.4599999999999" y="205.3" font-family="Liberation Sans" font-size="7.5" fill="#d8d8c0" textLength="9.4" lengthAdjust="spacingAndGlyphs">-3(</text><rect x="677.35" y="198.00" width="11.00" height="8.50" fill="#0e0e08" opacity="0.9"/><text x="678.15" y="205.3" font-family="Liberation Sans" font-size="7.5" fill="#d8d8c0" textLength="9.4" lengthAdjust="spacingAndGlyphs">+5</text><rect x="706.73" y="198.00" width="11.00" height="8.50" fill="#0e0e08" opacity="0.9"/><text x="707.53" y="205.3" font-family="Liberation Sans" font-size="7.5" fill="#d8d8c0" textLength="9.4" lengthAdjust="spacingAndGlyphs">-5(</text><rect x="721.42" y="198.00" width="11.00" height="8.50" fill="#0e0e08" opacity="0.9"/><text x="722.2199999999999" y="205.3" font-family="Liberation Sans" font-size="7.5" fill="#d8d8c0" textLength="9.4" lengthAdjust="spacingAndGlyphs">-3(</text><rect x="736.11" y="198.00" width="11.00" height="8.50" fill="#0e0e08" opacity="0.9"/><text x="736.91" y="205.3" font-family="Liberation Sans" font-size="7.5" fill="#d8d8c0" textLength="9.4" lengthAdjust="spacingAndGlyphs">+5</text><rect x="765.49" y="198.00" width="11.00" height="8.50" fill="#0e0e08" opacity="0.9"/><text x="766.29" y="205.3" font-family="Liberation Sans" font-size="7.5" fill="#d8d8c0" textLength="9.4" lengthAdjust="spacingAndGlyphs">-5(</text><rect x="780.18" y="198.00" width="11.00" height="8.50" fill="#0e0e08" opacity="0.9"/><text x="780.9799999999999" y="205.3" font-family="Liberation Sans" font-size="7.5" fill="#d8d8c0" textLength="9.4" lengthAdjust="spacingAndGlyphs">-3(</text><rect x="794.87" y="198.00" width="11.00" height="8.50" fill="#0e0e08" opacity="0.9"/><text x="795.67" y="205.3" font-family="Liberation Sans" font-size="7.5" fill="#d8d8c0" textLength="9.4" lengthAdjust="spacingAndGlyphs">+5</text><rect x="824.25" y="198.00" width="11.00" height="8.50" fill="#0e0e08" opacity="0.9"/><text x="825.05" y="205.3" font-family="Liberation Sans" font-size="7.5" fill="#d8d8c0" textLength="9.4" lengthAdjust="spacingAndGlyphs">-5(</text><rect x="838.94" y="198.00" width="11.00" height="8.50" fill="#0e0e08" opacity="0.9"/><text x="839.7399999999999" y="205.3" font-family="Liberation Sans" font-size="7.5" fill="#d8d8c0" textLength="9.4" lengthAdjust="spacingAndGlyphs">-3(</text><rect x="853.63" y="198.00" width="11.00" height="8.50" fill="#0e0e08" opacity="0.9"/><text x="854.43" y="205.3" font-family="Liberation Sans" font-size="7.5" fill="#d8d8c0" textLength="9.4" lengthAdjust="spacingAndGlyphs">+5</text><rect x="883.01" y="198.00" width="11.00" height="8.50" fill="#0e0e08" opacity="0.9"/><text x="883.81" y="205.3" font-family="Liberation Sans" font-size="7.5" fill="#d8d8c0" textLength="9.4" lengthAdjust="spacingAndGlyphs">-5(</text><rect x="185.00" y="284.00" width="5.00" height="8.50" fill="#0e0e08" opacity="0.9"/><text x="185.8" y="291.3" font-family="Liberation Sans" font-size="7.5" fill="#d8d8c0" textLength="3.4" lengthAdjust="spacingAndGlyphs">-2</text><text x="209" y="292" font-family="Liberation Serif" font-style="italic" font-size="9" fill="#e8e8e8">fx</text><rect x="224.00" y="284.00" width="17.00" height="8.50" fill="#0e0e08" opacity="0.9"/><text x="224.8" y="291.3" font-family="Liberation Sans" font-size="7.5" fill="#d8d8c0" textLength="15.4" lengthAdjust="spacingAndGlyphs">-3 (A)</text><text x="240.5" y="291.5" font-family="Liberation Serif" font-style="italic" font-size="8.5" fill="#e8e8e8">fx</text><text x="268" y="292" font-family="Liberation Serif" font-style="italic" font-size="9" fill="#e8e8e8">fx</text><rect x="283.00" y="284.00" width="17.00" height="8.50" fill="#0e0e08" opacity="0.9"/><text x="283.8" y="291.3" font-family="Liberation Sans" font-size="7.5" fill="#d8d8c0" textLength="15.4" lengthAdjust="spacingAndGlyphs">-3 (A)</text><text x="299.5" y="291.5" font-family="Liberation Serif" font-style="italic" font-size="8.5" fill="#e8e8e8">fx</text><rect x="370.50" y="284.00" width="10.00" height="8.50" fill="#0e0e08" opacity="0.9"/><text x="371.3" y="291.3" font-family="Liberation Sans" font-size="7.5" fill="#d8d8c0" textLength="8.4" lengthAdjust="spacingAndGlyphs">+2</text><rect x="399.00" y="284.00" width="17.00" height="8.50" fill="#0e0e08" opacity="0.9"/><text x="399.8" y="291.3" font-family="Liberation Sans" font-size="7.5" fill="#d8d8c0" textLength="15.4" lengthAdjust="spacingAndGlyphs">-5 (G)</text><text x="415.5" y="291.5" font-family="Liberation Serif" font-style="italic" font-size="8.5" fill="#e8e8e8">fx</text><rect x="662.80" y="284.00" width="11.00" height="8.50" fill="#0e0e08" opacity="0.9"/><text x="663.5999999999999" y="291.3" font-family="Liberation Sans" font-size="7.5" fill="#d8d8c0" textLength="9.4" lengthAdjust="spacingAndGlyphs">-3(</text><rect x="677.49" y="284.00" width="11.00" height="8.50" fill="#0e0e08" opacity="0.9"/><text x="678.29" y="291.3" font-family="Liberation Sans" font-size="7.5" fill="#d8d8c0" textLength="9.4" lengthAdjust="spacingAndGlyphs">+5</text><rect x="706.87" y="284.00" width="11.00" height="8.50" fill="#0e0e08" opacity="0.9"/><text x="707.67" y="291.3" font-family="Liberation Sans" font-size="7.5" fill="#d8d8c0" textLength="9.4" lengthAdjust="spacingAndGlyphs">-5(</text><rect x="721.56" y="284.00" width="11.00" height="8.50" fill="#0e0e08" opacity="0.9"/><text x="722.3599999999999" y="291.3" font-family="Liberation Sans" font-size="7.5" fill="#d8d8c0" textLength="9.4" lengthAdjust="spacingAndGlyphs">-3(</text><rect x="736.25" y="284.00" width="11.00" height="8.50" fill="#0e0e08" opacity="0.9"/><text x="737.05" y="291.3" font-family="Liberation Sans" font-size="7.5" fill="#d8d8c0" textLength="9.4" lengthAdjust="spacingAndGlyphs">+5</text><rect x="765.63" y="284.00" width="11.00" height="8.50" fill="#0e0e08" opacity="0.9"/><text x="766.43" y="291.3" font-family="Liberation Sans" font-size="7.5" fill="#d8d8c0" textLength="9.4" lengthAdjust="spacingAndGlyphs">-5(</text><rect x="957.00" y="284.00" width="17.00" height="8.50" fill="#0e0e08" opacity="0.9"/><text x="957.8" y="291.3" font-family="Liberation Sans" font-size="7.5" fill="#d8d8c0" textLength="15.4" lengthAdjust="spacingAndGlyphs">-3 (A)</text><rect x="687.00" y="39.00" width="1.30" height="283.00" fill="#a8a8a8" /><rect x="1013.30" y="28.00" width="1.20" height="294.00" fill="#b0903a" /></svg>
<div style="left:0px;top:39px;width:184px;height:85px;background:#2d2d2d;"></div>
<div style="left:0px;top:38px;width:184px;height:1px;background:#1f1f1f;"></div>
<div style="left:2px;top:40.5px;width:8px;height:3.5px;background:transparent;border:1px solid #e0e0e0;border-radius:2px;box-sizing:border-box;"></div>
<div style="left:2px;top:45px;width:8px;height:3.5px;background:transparent;border:1px solid #e0e0e0;border-radius:2px;box-sizing:border-box;"></div>
<div style="left:13px;top:40px;width:9.5px;height:10px;background:#c8c070;"></div>
<div class="t" style="left:15.89px;top:42.50px;font-size:6.5px;color:#3a3a3a;font-weight:normal;transform:scaleX(1.0000);">6</div>
<div style="left:25.5px;top:39px;width:86px;height:13px;background:#3c3c3c;"></div>
<div class="t" style="left:27.50px;top:41.54px;font-size:7.4px;color:#d0d0d0;font-weight:normal;transform:scaleX(0.8540);">Electric Guitar C</div>
<div style="left:113.8px;top:41.5px;width:9.0px;height:9.0px;background:#d8d0d0;border-radius:50%;"></div>
<div style="left:115.6px;top:43.3px;width:5.4px;height:5.4px;background:#c02020;border-radius:50%;"></div>
<div style="left:126px;top:41px;width:10px;height:10px;background:#3a9ad8;border-radius:50%;"></div>
<div style="left:127.5px;top:42.5px;width:7px;height:7px;background:#f0f0f0;border-radius:50%;"></div>
<div style="left:127.5px;top:46px;width:7px;height:3.5px;background:#6a4a30;border-radius:0 0 5px 5px;"></div>
<svg style="position:absolute;left:138px;top:41px" width="11" height="11"><path d="M8.5,1.2 C6.5,0.2 5.2,1.5 4.6,4 L3,10 C2.6,11 1.5,11 0.8,10.3" stroke="#28c0f8" stroke-width="1.4" fill="none"/><path d="M2.5,4.5 L7,4.5" stroke="#28c0f8" stroke-width="1.1"/><circle cx="8" cy="7.8" r="2.6" fill="#f4f4f4" stroke="#2a2a2a" stroke-width="0.8"/><path d="M6.9,7.8 L7.8,8.7 L9.2,7" stroke="#333" stroke-width="0.8" fill="none"/></svg>
<div style="left:152.5px;top:44px;width:5px;height:3px;background:#e0e0e0;clip-path:polygon(0 0,100% 0,50% 100%);"></div>
<div style="left:159.5px;top:41px;width:10px;height:10px;background:#5a8cb4;border-radius:50%;"></div>
<div style="left:163.7px;top:42.5px;width:1.6px;height:7px;background:#1a2a3a;transform:rotate(-45deg);"></div>
<div style="left:165.0px;top:41.5px;width:4.5px;height:4.5px;background:#f0f0f0;border-radius:50%;"></div>
<div style="left:166.1px;top:42.6px;width:2.25px;height:2.25px;background:#303030;border-radius:50%;"></div>
<div style="left:172px;top:41px;width:10px;height:10px;background:#c8a848;border-radius:50%;"></div>
<div style="left:173.8px;top:42.8px;width:6.4px;height:6.4px;background:#4a4020;border-radius:50%;"></div>
<div style="left:175.5px;top:44px;width:3px;height:4px;background:transparent;border:1px solid #c8b050;border-radius:40%;box-sizing:border-box;"></div>
<div style="left:180.5px;top:41px;width:1.6px;height:4.5px;background:#f0f0f0;"></div>
<div style="left:180.5px;top:46.5px;width:1.6px;height:1.4px;background:#f0f0f0;"></div>
<div class="t" style="left:2.00px;top:55.74px;font-size:7.4px;color:#d0d0d0;font-weight:normal;transform:scaleX(0.9222);">Out</div>
<div style="left:16px;top:54px;width:126px;height:9px;background:#3d6e45;"></div>
<div style="left:142px;top:54px;width:17px;height:9px;background:#6d6a3c;"></div>
<div style="left:159px;top:54px;width:7px;height:9px;background:#7a3a3a;"></div>
<div class="t" style="left:26.89px;top:55.70px;font-size:6.5px;color:#2e5a34;font-weight:normal;transform:scaleX(1.0000);">81</div>
<div class="t" style="left:41.89px;top:55.70px;font-size:6.5px;color:#2e5a34;font-weight:normal;transform:scaleX(1.0000);">72</div>
<div class="t" style="left:56.89px;top:55.70px;font-size:6.5px;color:#2e5a34;font-weight:normal;transform:scaleX(1.0000);">63</div>
<div class="t" style="left:71.89px;top:55.70px;font-size:6.5px;color:#2e5a34;font-weight:normal;transform:scaleX(1.0000);">54</div>
<div class="t" style="left:86.89px;top:55.70px;font-size:6.5px;color:#2e5a34;font-weight:normal;transform:scaleX(1.0000);">45</div>
<div class="t" style="left:101.89px;top:55.70px;font-size:6.5px;color:#2e5a34;font-weight:normal;transform:scaleX(1.0000);">36</div>
<div class="t" style="left:116.89px;top:55.70px;font-size:6.5px;color:#2e5a34;font-weight:normal;transform:scaleX(1.0000);">27</div>
<div class="t" style="left:131.89px;top:55.70px;font-size:6.5px;color:#2e5a34;font-weight:normal;transform:scaleX(1.0000);">18</div>
<div class="t" style="left:148.69px;top:55.70px;font-size:6.5px;color:#5a5830;font-weight:normal;transform:scaleX(1.0000);">9</div>
<div class="t" style="left:166.84px;top:55.57px;font-size:7px;color:#c8c8c8;font-weight:normal;transform:scaleX(0.9500);">-10.4</div>
<div style="left:3px;top:67.0px;width:3px;height:2px;background:#e8e8e8;"></div>
<div style="left:3px;top:69.6px;width:3px;height:2px;background:#e8e8e8;"></div>
<div style="left:3px;top:72.2px;width:3px;height:2px;background:#e8e8e8;"></div>
<div style="left:7px;top:67px;width:1px;height:7px;background:#e8e8e8;"></div>
<div style="left:9px;top:67px;width:2px;height:2px;background:#e8e8e8;"></div>
<div class="t" style="left:13.50px;top:68.24px;font-size:7.4px;color:#d0d0d0;font-weight:normal;transform:scaleX(0.8783);">Microsoft Soundmapper</div>
<div style="left:93px;top:67px;width:8.5px;height:8.5px;background:transparent;border:1.5px solid #f0f0f0;border-radius:1px;box-sizing:border-box;"></div>
<div style="left:95.5px;top:69.5px;width:3.5px;height:3.5px;background:#f0f0f0;"></div>
<div class="t" style="left:104.00px;top:68.24px;font-size:7.4px;color:#d0d0d0;font-weight:normal;transform:scaleX(0.8843);">Master</div>
<div class="t" style="left:2.00px;top:81.24px;font-size:7.4px;color:#d0d0d0;font-weight:normal;transform:scaleX(0.8912);">Vol:</div>
<div class="t" style="left:19.00px;top:81.24px;font-size:7.4px;color:#d0d0d0;font-weight:normal;transform:scaleX(0.8802);">-7,0 dB</div>
<div style="left:47px;top:83.5px;width:79px;height:2px;background:#4a4a4a;"></div>
<div style="left:47px;top:83.5px;width:23px;height:2px;background:#9a9a9a;"></div>
<div style="left:69px;top:80px;width:11px;height:8.5px;background:#f4f4f4;border-radius:1px;"></div>
<div style="left:72.5px;top:82px;width:1px;height:4.5px;background:#707070;"></div>
<div style="left:74.5px;top:82px;width:1px;height:4.5px;background:#707070;"></div>
<div style="left:76.5px;top:82px;width:1px;height:4.5px;background:#707070;"></div>
<svg style="position:absolute;left:132.8px;top:79.3px" width="10.4" height="10.4"><g transform="translate(5.2,5.2)"><rect x="-1" y="-4.2" width="2" height="8.4" fill="#f0f0f0" transform="rotate(0)"/><rect x="-1" y="-4.2" width="2" height="8.4" fill="#f0f0f0" transform="rotate(45)"/><rect x="-1" y="-4.2" width="2" height="8.4" fill="#f0f0f0" transform="rotate(90)"/><rect x="-1" y="-4.2" width="2" height="8.4" fill="#f0f0f0" transform="rotate(135)"/><circle r="3.024" fill="#f0f0f0"/><circle r="1.764" fill="#e0203a"/></g></svg>
<div class="t" style="left:144.00px;top:81.74px;font-size:7.4px;color:#d0d0d0;font-weight:normal;transform:scaleX(0.9115);">Touch</div>
<div style="left:178px;top:83px;width:5px;height:3px;background:#e0e0e0;clip-path:polygon(0 0,100% 0,50% 100%);"></div>
<div class="t" style="left:2.00px;top:94.24px;font-size:7.4px;color:#d0d0d0;font-weight:normal;transform:scaleX(0.7883);">Pan:</div>
<div class="t" style="left:19.00px;top:94.24px;font-size:7.4px;color:#d0d0d0;font-weight:normal;transform:scaleX(0.9455);">Center</div>
<div style="left:45px;top:96.5px;width:81px;height:2px;background:#4a4a4a;"></div>
<div style="left:82px;top:93px;width:8px;height:9px;background:#f4f4f4;border-radius:1px;"></div>
<div style="left:85.5px;top:95px;width:1px;height:5px;background:#606060;"></div>
<svg style="position:absolute;left:133px;top:92px" width="10" height="10"><path d="M1.5,9 C2,5 5,1.5 7.5,2 C9.5,2.5 8.5,6 6,7 C4.5,7.5 3.5,6.5 4.5,5.5" stroke="#b8c040" stroke-width="1.5" fill="none"/></svg>
<div class="t" style="left:143.00px;top:94.24px;font-size:7.4px;color:#d0d0d0;font-weight:normal;transform:scaleX(0.8800);">Delicious E...</div>
<div style="left:0px;top:124.5px;width:184px;height:85px;background:#6d858a;"></div>
<div style="left:0px;top:123.5px;width:184px;height:1px;background:#1f1f1f;"></div>
<div style="left:2px;top:126.0px;width:8px;height:3.5px;background:transparent;border:1px solid #e0e0e0;border-radius:2px;box-sizing:border-box;"></div>
<div style="left:2px;top:130.5px;width:8px;height:3.5px;background:transparent;border:1px solid #e0e0e0;border-radius:2px;box-sizing:border-box;"></div>
<div style="left:13px;top:125.5px;width:9.5px;height:10px;background:#70a0e0;"></div>
<div class="t" style="left:15.89px;top:128.00px;font-size:6.5px;color:#3a3a3a;font-weight:normal;transform:scaleX(1.0000);">7</div>
<div style="left:25.5px;top:124.5px;width:86px;height:13px;background:#3e4446;"></div>
<div class="t" style="left:27.50px;top:127.04px;font-size:7.4px;color:#e8eef0;font-weight:normal;transform:scaleX(0.8670);">Acoustic Guitar</div>
<div style="left:113.8px;top:127.0px;width:9.0px;height:9.0px;background:#d8d0d0;border-radius:50%;"></div>
<div style="left:115.6px;top:128.8px;width:5.4px;height:5.4px;background:#c02020;border-radius:50%;"></div>
<div style="left:126px;top:126.5px;width:10px;height:10px;background:#3a9ad8;border-radius:50%;"></div>
<div style="left:127.5px;top:128.0px;width:7px;height:7px;background:#f0f0f0;border-radius:50%;"></div>
<div style="left:127.5px;top:131.5px;width:7px;height:3.5px;background:#6a4a30;border-radius:0 0 5px 5px;"></div>
<svg style="position:absolute;left:138px;top:126.5px" width="11" height="11"><path d="M8.5,1.2 C6.5,0.2 5.2,1.5 4.6,4 L3,10 C2.6,11 1.5,11 0.8,10.3" stroke="#28c0f8" stroke-width="1.4" fill="none"/><path d="M2.5,4.5 L7,4.5" stroke="#28c0f8" stroke-width="1.1"/><circle cx="8" cy="7.8" r="2.6" fill="#f4f4f4" stroke="#2a2a2a" stroke-width="0.8"/><path d="M6.9,7.8 L7.8,8.7 L9.2,7" stroke="#333" stroke-width="0.8" fill="none"/></svg>
<div style="left:152.5px;top:129.5px;width:5px;height:3px;background:#e0e0e0;clip-path:polygon(0 0,100% 0,50% 100%);"></div>
<div style="left:159.5px;top:126.5px;width:10px;height:10px;background:#5a8cb4;border-radius:50%;"></div>
<div style="left:163.7px;top:128.0px;width:1.6px;height:7px;background:#1a2a3a;transform:rotate(-45deg);"></div>
<div style="left:165.0px;top:127.0px;width:4.5px;height:4.5px;background:#f0f0f0;border-radius:50%;"></div>
<div style="left:166.1px;top:128.1px;width:2.25px;height:2.25px;background:#303030;border-radius:50%;"></div>
<div style="left:172px;top:126.5px;width:10px;height:10px;background:#c8a848;border-radius:50%;"></div>
<div style="left:173.8px;top:128.3px;width:6.4px;height:6.4px;background:#4a4020;border-radius:50%;"></div>
<div style="left:175.5px;top:129.5px;width:3px;height:4px;background:transparent;border:1px solid #c8b050;border-radius:40%;box-sizing:border-box;"></div>
<div style="left:180.5px;top:126.5px;width:1.6px;height:4.5px;background:#f0f0f0;"></div>
<div style="left:180.5px;top:132.0px;width:1.6px;height:1.4px;background:#f0f0f0;"></div>
<div class="t" style="left:2.00px;top:141.24px;font-size:7.4px;color:#e8eef0;font-weight:normal;transform:scaleX(0.9222);">Out</div>
<div style="left:16px;top:139.5px;width:126px;height:9px;background:#3d6e45;"></div>
<div style="left:142px;top:139.5px;width:17px;height:9px;background:#6d6a3c;"></div>
<div style="left:159px;top:139.5px;width:7px;height:9px;background:#7a3a3a;"></div>
<div style="left:16px;top:139.5px;width:122px;height:9px;background:#22e022;"></div>
<div style="left:142.5px;top:139.5px;width:1.5px;height:9px;background:#e8e020;"></div>
<div class="t" style="left:26.89px;top:141.20px;font-size:6.5px;color:#1e5a22;font-weight:normal;transform:scaleX(1.0000);">81</div>
<div class="t" style="left:41.89px;top:141.20px;font-size:6.5px;color:#1e5a22;font-weight:normal;transform:scaleX(1.0000);">72</div>
<div class="t" style="left:56.89px;top:141.20px;font-size:6.5px;color:#1e5a22;font-weight:normal;transform:scaleX(1.0000);">63</div>
<div class="t" style="left:71.89px;top:141.20px;font-size:6.5px;color:#1e5a22;font-weight:normal;transform:scaleX(1.0000);">54</div>
<div class="t" style="left:86.89px;top:141.20px;font-size:6.5px;color:#1e5a22;font-weight:normal;transform:scaleX(1.0000);">45</div>
<div class="t" style="left:101.89px;top:141.20px;font-size:6.5px;color:#1e5a22;font-weight:normal;transform:scaleX(1.0000);">36</div>
<div class="t" style="left:116.89px;top:141.20px;font-size:6.5px;color:#1e5a22;font-weight:normal;transform:scaleX(1.0000);">27</div>
<div class="t" style="left:131.89px;top:141.20px;font-size:6.5px;color:#1e5a22;font-weight:normal;transform:scaleX(1.0000);">18</div>
<div class="t" style="left:148.69px;top:141.20px;font-size:6.5px;color:#5a5830;font-weight:normal;transform:scaleX(1.0000);">9</div>
<div class="t" style="left:170.54px;top:141.07px;font-size:7px;color:#e0e0e0;font-weight:normal;transform:scaleX(0.9500);">-7.9</div>
<div style="left:3px;top:152.5px;width:3px;height:2px;background:#e8e8e8;"></div>
<div style="left:3px;top:155.1px;width:3px;height:2px;background:#e8e8e8;"></div>
<div style="left:3px;top:157.7px;width:3px;height:2px;background:#e8e8e8;"></div>
<div style="left:7px;top:152.5px;width:1px;height:7px;background:#e8e8e8;"></div>
<div style="left:9px;top:152.5px;width:2px;height:2px;background:#e8e8e8;"></div>
<div class="t" style="left:13.50px;top:153.74px;font-size:7.4px;color:#e8eef0;font-weight:normal;transform:scaleX(0.8783);">Microsoft Soundmapper</div>
<div style="left:93px;top:152.5px;width:8.5px;height:8.5px;background:transparent;border:1.5px solid #f0f0f0;border-radius:1px;box-sizing:border-box;"></div>
<div style="left:95.5px;top:155.0px;width:3.5px;height:3.5px;background:#f0f0f0;"></div>
<div class="t" style="left:104.00px;top:153.74px;font-size:7.4px;color:#e8eef0;font-weight:normal;transform:scaleX(0.8843);">Master</div>
<div class="t" style="left:2.00px;top:166.74px;font-size:7.4px;color:#e8eef0;font-weight:normal;transform:scaleX(0.8912);">Vol:</div>
<div class="t" style="left:19.00px;top:166.74px;font-size:7.4px;color:#e8eef0;font-weight:normal;transform:scaleX(0.8802);">-7,0 dB</div>
<div style="left:47px;top:169.0px;width:79px;height:2px;background:#3c4244;"></div>
<div style="left:47px;top:169.0px;width:23px;height:2px;background:#a0a6a8;"></div>
<div style="left:69px;top:165.5px;width:11px;height:8.5px;background:#f4f4f4;border-radius:1px;"></div>
<div style="left:72.5px;top:167.5px;width:1px;height:4.5px;background:#707070;"></div>
<div style="left:74.5px;top:167.5px;width:1px;height:4.5px;background:#707070;"></div>
<div style="left:76.5px;top:167.5px;width:1px;height:4.5px;background:#707070;"></div>
<svg style="position:absolute;left:132.8px;top:164.8px" width="10.4" height="10.4"><g transform="translate(5.2,5.2)"><rect x="-1" y="-4.2" width="2" height="8.4" fill="#f0f0f0" transform="rotate(0)"/><rect x="-1" y="-4.2" width="2" height="8.4" fill="#f0f0f0" transform="rotate(45)"/><rect x="-1" y="-4.2" width="2" height="8.4" fill="#f0f0f0" transform="rotate(90)"/><rect x="-1" y="-4.2" width="2" height="8.4" fill="#f0f0f0" transform="rotate(135)"/><circle r="3.024" fill="#f0f0f0"/><circle r="1.764" fill="#e0203a"/></g></svg>
<div class="t" style="left:144.00px;top:167.24px;font-size:7.4px;color:#e8eef0;font-weight:normal;transform:scaleX(0.9115);">Touch</div>
<div style="left:178px;top:168.5px;width:5px;height:3px;background:#e0e0e0;clip-path:polygon(0 0,100% 0,50% 100%);"></div>
<div class="t" style="left:2.00px;top:179.74px;font-size:7.4px;color:#e8eef0;font-weight:normal;transform:scaleX(0.7883);">Pan:</div>
<div class="t" style="left:19.00px;top:179.74px;font-size:7.4px;color:#e8eef0;font-weight:normal;transform:scaleX(0.9455);">Center</div>
<div style="left:45px;top:182.0px;width:81px;height:2px;background:#3c4244;"></div>
<div style="left:82px;top:178.5px;width:8px;height:9px;background:#f4f4f4;border-radius:1px;"></div>
<div style="left:85.5px;top:180.5px;width:1px;height:5px;background:#606060;"></div>
<svg style="position:absolute;left:133px;top:177.5px" width="10" height="10"><path d="M1.5,9 C2,5 5,1.5 7.5,2 C9.5,2.5 8.5,6 6,7 C4.5,7.5 3.5,6.5 4.5,5.5" stroke="#6a8aa8" stroke-width="1.5" fill="none"/></svg>
<div class="t" style="left:143.00px;top:179.74px;font-size:7.4px;color:#c8d0d0;font-weight:normal;transform:scaleX(0.9935);">Delicious ...</div>
<div style="left:0px;top:210px;width:184px;height:85px;background:#2d2d2d;"></div>
<div style="left:0px;top:209px;width:184px;height:1px;background:#1f1f1f;"></div>
<div style="left:2px;top:211.5px;width:8px;height:3.5px;background:transparent;border:1px solid #e0e0e0;border-radius:2px;box-sizing:border-box;"></div>
<div style="left:2px;top:216px;width:8px;height:3.5px;background:transparent;border:1px solid #e0e0e0;border-radius:2px;box-sizing:border-box;"></div>
<div style="left:13px;top:211px;width:9.5px;height:10px;background:#80d890;"></div>
<div class="t" style="left:15.89px;top:213.50px;font-size:6.5px;color:#3a3a3a;font-weight:normal;transform:scaleX(1.0000);">8</div>
<div style="left:25.5px;top:210px;width:86px;height:13px;background:#3c3c3c;"></div>
<div class="t" style="left:27.50px;top:212.54px;font-size:7.4px;color:#d0d0d0;font-weight:normal;transform:scaleX(0.8530);">Electric Guitar B</div>
<div style="left:113.8px;top:212.5px;width:9.0px;height:9.0px;background:#d8d0d0;border-radius:50%;"></div>
<div style="left:115.6px;top:214.3px;width:5.4px;height:5.4px;background:#c02020;border-radius:50%;"></div>
<div style="left:126px;top:212px;width:10px;height:10px;background:#3a9ad8;border-radius:50%;"></div>
<div style="left:127.5px;top:213.5px;width:7px;height:7px;background:#f0f0f0;border-radius:50%;"></div>
<div style="left:127.5px;top:217px;width:7px;height:3.5px;background:#6a4a30;border-radius:0 0 5px 5px;"></div>
<svg style="position:absolute;left:138px;top:212px" width="11" height="11"><path d="M8.5,1.2 C6.5,0.2 5.2,1.5 4.6,4 L3,10 C2.6,11 1.5,11 0.8,10.3" stroke="#28c0f8" stroke-width="1.4" fill="none"/><path d="M2.5,4.5 L7,4.5" stroke="#28c0f8" stroke-width="1.1"/><circle cx="8" cy="7.8" r="2.6" fill="#f4f4f4" stroke="#2a2a2a" stroke-width="0.8"/><path d="M6.9,7.8 L7.8,8.7 L9.2,7" stroke="#333" stroke-width="0.8" fill="none"/></svg>
<div style="left:152.5px;top:215px;width:5px;height:3px;background:#e0e0e0;clip-path:polygon(0 0,100% 0,50% 100%);"></div>
<div style="left:159.5px;top:212px;width:10px;height:10px;background:#5a8cb4;border-radius:50%;"></div>
<div style="left:163.7px;top:213.5px;width:1.6px;height:7px;background:#1a2a3a;transform:rotate(-45deg);"></div>
<div style="left:165.0px;top:212.5px;width:4.5px;height:4.5px;background:#f0f0f0;border-radius:50%;"></div>
<div style="left:166.1px;top:213.6px;width:2.25px;height:2.25px;background:#303030;border-radius:50%;"></div>
<div style="left:172px;top:212px;width:10px;height:10px;background:#c8a848;border-radius:50%;"></div>
<div style="left:173.8px;top:213.8px;width:6.4px;height:6.4px;background:#4a4020;border-radius:50%;"></div>
<div style="left:175.5px;top:215px;width:3px;height:4px;background:transparent;border:1px solid #c8b050;border-radius:40%;box-sizing:border-box;"></div>
<div style="left:180.5px;top:212px;width:1.6px;height:4.5px;background:#f0f0f0;"></div>
<div style="left:180.5px;top:217.5px;width:1.6px;height:1.4px;background:#f0f0f0;"></div>
<div class="t" style="left:2.00px;top:226.74px;font-size:7.4px;color:#d0d0d0;font-weight:normal;transform:scaleX(0.9222);">Out</div>
<div style="left:16px;top:225px;width:126px;height:9px;background:#3d6e45;"></div>
<div style="left:142px;top:225px;width:17px;height:9px;background:#6d6a3c;"></div>
<div style="left:159px;top:225px;width:7px;height:9px;background:#7a3a3a;"></div>
<div style="left:16px;top:225px;width:126px;height:9px;background:#22e022;"></div>
<div style="left:142.5px;top:225px;width:1.5px;height:9px;background:#e8e020;"></div>
<div class="t" style="left:26.89px;top:226.70px;font-size:6.5px;color:#1e5a22;font-weight:normal;transform:scaleX(1.0000);">81</div>
<div class="t" style="left:41.89px;top:226.70px;font-size:6.5px;color:#1e5a22;font-weight:normal;transform:scaleX(1.0000);">72</div>
<div class="t" style="left:56.89px;top:226.70px;font-size:6.5px;color:#1e5a22;font-weight:normal;transform:scaleX(1.0000);">63</div>
<div class="t" style="left:71.89px;top:226.70px;font-size:6.5px;color:#1e5a22;font-weight:normal;transform:scaleX(1.0000);">54</div>
<div class="t" style="left:86.89px;top:226.70px;font-size:6.5px;color:#1e5a22;font-weight:normal;transform:scaleX(1.0000);">45</div>
<div class="t" style="left:101.89px;top:226.70px;font-size:6.5px;color:#1e5a22;font-weight:normal;transform:scaleX(1.0000);">36</div>
<div class="t" style="left:116.89px;top:226.70px;font-size:6.5px;color:#1e5a22;font-weight:normal;transform:scaleX(1.0000);">27</div>
<div class="t" style="left:131.89px;top:226.70px;font-size:6.5px;color:#1e5a22;font-weight:normal;transform:scaleX(1.0000);">18</div>
<div class="t" style="left:148.69px;top:226.70px;font-size:6.5px;color:#5a5830;font-weight:normal;transform:scaleX(1.0000);">9</div>
<div class="t" style="left:170.54px;top:226.57px;font-size:7px;color:#c8c8c8;font-weight:normal;transform:scaleX(0.9500);">-9.0</div>
<div style="left:3px;top:238.0px;width:3px;height:2px;background:#e8e8e8;"></div>
<div style="left:3px;top:240.6px;width:3px;height:2px;background:#e8e8e8;"></div>
<div style="left:3px;top:243.2px;width:3px;height:2px;background:#e8e8e8;"></div>
<div style="left:7px;top:238px;width:1px;height:7px;background:#e8e8e8;"></div>
<div style="left:9px;top:238px;width:2px;height:2px;background:#e8e8e8;"></div>
<div class="t" style="left:13.50px;top:239.24px;font-size:7.4px;color:#d0d0d0;font-weight:normal;transform:scaleX(0.8783);">Microsoft Soundmapper</div>
<div style="left:93px;top:238px;width:8.5px;height:8.5px;background:transparent;border:1.5px solid #f0f0f0;border-radius:1px;box-sizing:border-box;"></div>
<div style="left:95.5px;top:240.5px;width:3.5px;height:3.5px;background:#f0f0f0;"></div>
<div class="t" style="left:104.00px;top:239.24px;font-size:7.4px;color:#d0d0d0;font-weight:normal;transform:scaleX(0.8843);">Master</div>
<div class="t" style="left:2.00px;top:252.24px;font-size:7.4px;color:#d0d0d0;font-weight:normal;transform:scaleX(0.8912);">Vol:</div>
<div class="t" style="left:19.00px;top:252.24px;font-size:7.4px;color:#d0d0d0;font-weight:normal;transform:scaleX(0.8802);">-7,0 dB</div>
<div style="left:47px;top:254.5px;width:79px;height:2px;background:#4a4a4a;"></div>
<div style="left:47px;top:254.5px;width:23px;height:2px;background:#9a9a9a;"></div>
<div style="left:69px;top:251px;width:11px;height:8.5px;background:#f4f4f4;border-radius:1px;"></div>
<div style="left:72.5px;top:253px;width:1px;height:4.5px;background:#707070;"></div>
<div style="left:74.5px;top:253px;width:1px;height:4.5px;background:#707070;"></div>
<div style="left:76.5px;top:253px;width:1px;height:4.5px;background:#707070;"></div>
<svg style="position:absolute;left:132.8px;top:250.3px" width="10.4" height="10.4"><g transform="translate(5.2,5.2)"><rect x="-1" y="-4.2" width="2" height="8.4" fill="#f0f0f0" transform="rotate(0)"/><rect x="-1" y="-4.2" width="2" height="8.4" fill="#f0f0f0" transform="rotate(45)"/><rect x="-1" y="-4.2" width="2" height="8.4" fill="#f0f0f0" transform="rotate(90)"/><rect x="-1" y="-4.2" width="2" height="8.4" fill="#f0f0f0" transform="rotate(135)"/><circle r="3.024" fill="#f0f0f0"/><circle r="1.764" fill="#e0203a"/></g></svg>
<div class="t" style="left:144.00px;top:252.74px;font-size:7.4px;color:#d0d0d0;font-weight:normal;transform:scaleX(0.9115);">Touch</div>
<div style="left:178px;top:254px;width:5px;height:3px;background:#e0e0e0;clip-path:polygon(0 0,100% 0,50% 100%);"></div>
<div class="t" style="left:2.00px;top:265.24px;font-size:7.4px;color:#d0d0d0;font-weight:normal;transform:scaleX(0.7883);">Pan:</div>
<div class="t" style="left:19.00px;top:265.24px;font-size:7.4px;color:#d0d0d0;font-weight:normal;transform:scaleX(0.9455);">Center</div>
<div style="left:45px;top:267.5px;width:81px;height:2px;background:#4a4a4a;"></div>
<div style="left:82px;top:264px;width:8px;height:9px;background:#f4f4f4;border-radius:1px;"></div>
<div style="left:85.5px;top:266px;width:1px;height:5px;background:#606060;"></div>
<svg style="position:absolute;left:133px;top:263px" width="10" height="10"><path d="M1.5,9 C2,5 5,1.5 7.5,2 C9.5,2.5 8.5,6 6,7 C4.5,7.5 3.5,6.5 4.5,5.5" stroke="#b8c040" stroke-width="1.5" fill="none"/></svg>
<div class="t" style="left:143.00px;top:265.24px;font-size:7.4px;color:#d0d0d0;font-weight:normal;transform:scaleX(0.8800);">Delicious E...</div>
<div style="left:0px;top:296px;width:184px;height:26px;background:#2d2d2d;"></div>
<div style="left:0px;top:295px;width:184px;height:1px;background:#1f1f1f;"></div>
<div style="left:2px;top:297.5px;width:8px;height:3.5px;background:transparent;border:1px solid #e0e0e0;border-radius:2px;box-sizing:border-box;"></div>
<div style="left:2px;top:302px;width:8px;height:3.5px;background:transparent;border:1px solid #e0e0e0;border-radius:2px;box-sizing:border-box;"></div>
<div style="left:13px;top:297px;width:9.5px;height:10px;background:#80a8e8;"></div>
<div class="t" style="left:15.89px;top:299.50px;font-size:6.5px;color:#3a3a3a;font-weight:normal;transform:scaleX(1.0000);">9</div>
<div style="left:25.5px;top:296px;width:86px;height:13px;background:#3c3c3c;"></div>
<div class="t" style="left:27.50px;top:298.54px;font-size:7.4px;color:#d0d0d0;font-weight:normal;transform:scaleX(0.7902);">Bass</div>
<div style="left:113.8px;top:298.5px;width:9.0px;height:9.0px;background:#d8d0d0;border-radius:50%;"></div>
<div style="left:115.6px;top:300.3px;width:5.4px;height:5.4px;background:#c02020;border-radius:50%;"></div>
<div style="left:126px;top:298px;width:10px;height:10px;background:#3a9ad8;border-radius:50%;"></div>
<div style="left:127.5px;top:299.5px;width:7px;height:7px;background:#f0f0f0;border-radius:50%;"></div>
<div style="left:127.5px;top:303px;width:7px;height:3.5px;background:#6a4a30;border-radius:0 0 5px 5px;"></div>
<svg style="position:absolute;left:138px;top:298px" width="11" height="11"><path d="M8.5,1.2 C6.5,0.2 5.2,1.5 4.6,4 L3,10 C2.6,11 1.5,11 0.8,10.3" stroke="#28c0f8" stroke-width="1.4" fill="none"/><path d="M2.5,4.5 L7,4.5" stroke="#28c0f8" stroke-width="1.1"/><circle cx="8" cy="7.8" r="2.6" fill="#f4f4f4" stroke="#2a2a2a" stroke-width="0.8"/><path d="M6.9,7.8 L7.8,8.7 L9.2,7" stroke="#333" stroke-width="0.8" fill="none"/></svg>
<div style="left:152.5px;top:301px;width:5px;height:3px;background:#e0e0e0;clip-path:polygon(0 0,100% 0,50% 100%);"></div>
<div style="left:159.5px;top:298px;width:10px;height:10px;background:#5a8cb4;border-radius:50%;"></div>
<div style="left:163.7px;top:299.5px;width:1.6px;height:7px;background:#1a2a3a;transform:rotate(-45deg);"></div>
<div style="left:165.0px;top:298.5px;width:4.5px;height:4.5px;background:#f0f0f0;border-radius:50%;"></div>
<div style="left:166.1px;top:299.6px;width:2.25px;height:2.25px;background:#303030;border-radius:50%;"></div>
<div style="left:172px;top:298px;width:10px;height:10px;background:#c8a848;border-radius:50%;"></div>
<div style="left:173.8px;top:299.8px;width:6.4px;height:6.4px;background:#4a4020;border-radius:50%;"></div>
<div style="left:175.5px;top:301px;width:3px;height:4px;background:transparent;border:1px solid #c8b050;border-radius:40%;box-sizing:border-box;"></div>
<div style="left:180.5px;top:298px;width:1.6px;height:4.5px;background:#f0f0f0;"></div>
<div style="left:180.5px;top:303.5px;width:1.6px;height:1.4px;background:#f0f0f0;"></div>
<div class="t" style="left:2.00px;top:312.74px;font-size:7.4px;color:#d0d0d0;font-weight:normal;transform:scaleX(0.9222);">Out</div>
<div style="left:16px;top:311px;width:126px;height:9px;background:#3d6e45;"></div>
<div style="left:142px;top:311px;width:17px;height:9px;background:#6d6a3c;"></div>
<div style="left:159px;top:311px;width:7px;height:9px;background:#7a3a3a;"></div>
<div style="left:16px;top:311px;width:59px;height:9px;background:#22e022;"></div>
<div style="left:142.5px;top:311px;width:1.5px;height:9px;background:#e8e020;"></div>
<div class="t" style="left:26.89px;top:312.70px;font-size:6.5px;color:#1e5a22;font-weight:normal;transform:scaleX(1.0000);">81</div>
<div class="t" style="left:41.89px;top:312.70px;font-size:6.5px;color:#1e5a22;font-weight:normal;transform:scaleX(1.0000);">72</div>
<div class="t" style="left:56.89px;top:312.70px;font-size:6.5px;color:#1e5a22;font-weight:normal;transform:scaleX(1.0000);">63</div>
<div class="t" style="left:71.89px;top:312.70px;font-size:6.5px;color:#2e5a34;font-weight:normal;transform:scaleX(1.0000);">54</div>
<div class="t" style="left:86.89px;top:312.70px;font-size:6.5px;color:#2e5a34;font-weight:normal;transform:scaleX(1.0000);">45</div>
<div class="t" style="left:101.89px;top:312.70px;font-size:6.5px;color:#2e5a34;font-weight:normal;transform:scaleX(1.0000);">36</div>
<div class="t" style="left:116.89px;top:312.70px;font-size:6.5px;color:#2e5a34;font-weight:normal;transform:scaleX(1.0000);">27</div>
<div class="t" style="left:131.89px;top:312.70px;font-size:6.5px;color:#2e5a34;font-weight:normal;transform:scaleX(1.0000);">18</div>
<div class="t" style="left:148.69px;top:312.70px;font-size:6.5px;color:#5a5830;font-weight:normal;transform:scaleX(1.0000);">9</div>
<div class="t" style="left:170.54px;top:312.57px;font-size:7px;color:#c8c8c8;font-weight:normal;transform:scaleX(0.9500);">-9.1</div>
<div style="left:184px;top:15px;width:1px;height:334px;background:#1c1c1c;"></div>
<div style="left:0px;top:322px;width:184px;height:27px;background:#2d2d2d;"></div>
<div style="left:5px;top:337px;width:88px;height:1.2px;background:#4a4a4a;"></div>
<div style="left:40px;top:333px;width:11px;height:9px;background:#f4f4f4;border-radius:1px;"></div>
<div style="left:43.5px;top:335px;width:1px;height:5px;background:#707070;"></div>
<div style="left:45.5px;top:335px;width:1px;height:5px;background:#707070;"></div>
<div style="left:47.5px;top:335px;width:1px;height:5px;background:#707070;"></div>
<div class="t" style="left:108.00px;top:329.74px;font-size:7.4px;color:#c8c8c8;font-weight:normal;transform:scaleX(0.8972);">130,000</div>
<div class="t" style="left:113.50px;top:338.74px;font-size:7.4px;color:#b0b0b0;font-weight:normal;transform:scaleX(0.8107);">BPM</div>
<div class="t" style="left:143.41px;top:329.65px;font-size:7.5px;color:#c8c8c8;font-weight:normal;transform:scaleX(1.0000);">4</div>
<div style="left:143px;top:338.3px;width:5px;height:0.8px;background:#a0a0a0;"></div>
<div class="t" style="left:143.41px;top:339.65px;font-size:7.5px;color:#c8c8c8;font-weight:normal;transform:scaleX(1.0000);">4</div>
<div style="left:156px;top:333px;width:2px;height:10px;background:#e0e0e0;transform:rotate(40deg)"></div>
<div style="left:158px;top:333px;width:6px;height:4px;background:transparent;border:1.5px solid #e0e0e0;border-top:none;box-sizing:border-box;transform:rotate(40deg);"></div>
<div class="t" style="left:165.00px;top:333.74px;font-size:7.4px;color:#d0d0d0;font-weight:normal;transform:scaleX(0.9384);">= C</div>
<div style="left:185px;top:322px;width:975px;height:9px;background:#262626;"></div>
<div style="left:186px;top:323px;width:9px;height:8px;background:#3a3a3a;"></div>
<div style="left:188px;top:325px;width:4px;height:5px;background:#e8e8e8;clip-path:polygon(0 50%,100% 0,100% 100%);"></div>
<div style="left:586px;top:323px;width:540px;height:8px;background:#363636;"></div>
<div style="left:1121px;top:324px;width:2px;height:6px;background:#505050;"></div>
<div style="left:1127px;top:323px;width:9px;height:8px;background:#3a3a3a;"></div>
<div style="left:1136px;top:323px;width:9px;height:8px;background:#3a3a3a;"></div>
<div style="left:1150px;top:323px;width:9px;height:8px;background:#3a3a3a;"></div>
<div style="left:1160px;top:323px;width:9px;height:8px;background:#3a3a3a;"></div>
<div style="left:1128px;top:325px;width:4px;height:5px;background:#e8e8e8;clip-path:polygon(0 0,100% 50%,0 100%);"></div>
<div style="left:1137px;top:326.5px;width:6px;height:1.5px;background:#e8e8e8;"></div>
<div style="left:1139.25px;top:324.5px;width:1.5px;height:5.5px;background:#e8e8e8;"></div>
<div style="left:1151px;top:326.5px;width:6px;height:1.5px;background:#e8e8e8;"></div>
<div style="left:1160px;top:324px;width:6px;height:6px;background:transparent;border:1.5px solid #e8e8e8;border-radius:50%;box-sizing:border-box;"></div>
<div style="left:185px;top:331px;width:985px;height:18px;background:#3c3c3c;"></div>
<div style="left:185px;top:331px;width:1px;height:18px;background:#262626;"></div>
<div style="left:189.5px;top:336px;width:9px;height:9px;background:#e8e8e8;border-radius:50%;"></div>
<div style="left:191.3px;top:337.8px;width:5.4px;height:5.4px;background:#e01818;border-radius:50%;"></div>
<svg style="position:absolute;left:206px;top:335px" width="11" height="11"><path d="M2,5.5 A3.5,3.5 0 0 1 8.5,3.5" stroke="#30c850" stroke-width="1.8" fill="none"/><path d="M9,5.5 A3.5,3.5 0 0 1 2.5,7.5" stroke="#30c850" stroke-width="1.8" fill="none"/><path d="M7,1 L10,3.5 L7,5 z" fill="#30c850"/><path d="M4,10 L1,7.5 L4,6 z" fill="#30c850"/></svg>
<div style="left:230px;top:337px;width:1.5px;height:7px;background:#c8c8c8;"></div>
<div style="left:232px;top:337px;width:6px;height:7px;background:#c8c8c8;clip-path:polygon(0 0,100% 50%,0 100%);"></div>
<div style="left:245px;top:336.5px;width:7px;height:8px;background:#38d060;clip-path:polygon(0 0,100% 50%,0 100%);"></div>
<div style="left:259px;top:337px;width:2.6px;height:7px;background:#e8e8e8;"></div>
<div style="left:263.4px;top:337px;width:2.6px;height:7px;background:#e8e8e8;"></div>
<div style="left:274px;top:337px;width:7px;height:7px;background:#e0e0e0;"></div>
<div style="left:293.5px;top:337px;width:1.5px;height:7px;background:#e0e0e0;"></div>
<div style="left:295px;top:337px;width:5.5px;height:7px;background:#e0e0e0;clip-path:polygon(100% 0,0 50%,100% 100%);"></div>
<div style="left:308px;top:337px;width:5.5px;height:7px;background:#e0e0e0;clip-path:polygon(0 0,100% 50%,0 100%);"></div>
<div style="left:313.5px;top:337px;width:1.5px;height:7px;background:#e0e0e0;"></div>
<div style="left:326.5px;top:336px;width:9px;height:9px;background:#e8e8e8;border-radius:50%;"></div>
<div style="left:328.5px;top:338px;width:5px;height:5px;background:#d01818;border-radius:50%;"></div>
<div style="left:343px;top:336px;width:6px;height:9px;background:#d8d8d8;background:repeating-linear-gradient(#d8d8d8 0 1.2px,#3c3c3c 1.2px 2.2px);"></div>
<div style="left:361px;top:337px;width:7px;height:7px;background:#e0e0e0;clip-path:polygon(0 30%,60% 30%,60% 0,100% 50%,100% 100%,0 100%);"></div>
<div style="left:377px;top:337px;width:1.5px;height:7px;background:#a08a30;"></div>
<div style="left:379.5px;top:339.5px;width:5px;height:5px;background:transparent;border:1px solid #807050;border-radius:50%;box-sizing:border-box;"></div>
<div style="left:0px;top:349px;width:1170px;height:3px;background:#1e1e1e;"></div>
<div style="left:0px;top:352px;width:893px;height:267px;background:#2a2a2a;"></div>
<div style="left:0px;top:352px;width:33px;height:267px;background:#242424;"></div>
<div style="left:9px;top:352px;width:2px;height:267px;background:#1f1f1f;"></div>
<div style="left:0.1px;top:356.2px;width:7px;height:1.7px;background:#f4f4f4;transform:rotate(45deg);"></div>
<div style="left:0.1px;top:356.2px;width:7px;height:1.7px;background:#f4f4f4;transform:rotate(-45deg);"></div>
<div style="left:1.5px;top:362.5px;width:4.5px;height:6px;background:#f0f0f0;clip-path:polygon(0 50%,100% 0,100% 22%,40% 50%,100% 78%,100% 100%);"></div>
<div style="left:2.4px;top:375.0px;width:2px;height:1.6px;background:#e8e8e8;"></div>
<div style="left:2.4px;top:378.2px;width:2px;height:1.6px;background:#e8e8e8;"></div>
<div style="left:2.4px;top:381.4px;width:2px;height:1.6px;background:#e8e8e8;"></div>
<div style="left:2.4px;top:384.6px;width:2px;height:1.6px;background:#e8e8e8;"></div>
<div style="left:2.4px;top:387.8px;width:2px;height:1.6px;background:#e8e8e8;"></div>
<div style="left:2.4px;top:391.0px;width:2px;height:1.6px;background:#e8e8e8;"></div>
<div style="left:22px;top:352px;width:2px;height:267px;background:#1f1f1f;"></div>
<div style="left:13.1px;top:356.2px;width:7px;height:1.7px;background:#f4f4f4;transform:rotate(45deg);"></div>
<div style="left:13.1px;top:356.2px;width:7px;height:1.7px;background:#f4f4f4;transform:rotate(-45deg);"></div>
<div style="left:14.5px;top:362.5px;width:4.5px;height:6px;background:#f0f0f0;clip-path:polygon(0 50%,100% 0,100% 22%,40% 50%,100% 78%,100% 100%);"></div>
<div style="left:15.4px;top:375.0px;width:2px;height:1.6px;background:#e8e8e8;"></div>
<div style="left:15.4px;top:378.2px;width:2px;height:1.6px;background:#e8e8e8;"></div>
<div style="left:15.4px;top:381.4px;width:2px;height:1.6px;background:#e8e8e8;"></div>
<div style="left:15.4px;top:384.6px;width:2px;height:1.6px;background:#e8e8e8;"></div>
<div style="left:15.4px;top:387.8px;width:2px;height:1.6px;background:#e8e8e8;"></div>
<div style="left:15.4px;top:391.0px;width:2px;height:1.6px;background:#e8e8e8;"></div>
<div style="left:35px;top:352px;width:2px;height:267px;background:#1f1f1f;"></div>
<div style="left:26.1px;top:356.2px;width:7px;height:1.7px;background:#f4f4f4;transform:rotate(45deg);"></div>
<div style="left:26.1px;top:356.2px;width:7px;height:1.7px;background:#f4f4f4;transform:rotate(-45deg);"></div>
<div style="left:27.5px;top:362.5px;width:4.5px;height:6px;background:#f0f0f0;clip-path:polygon(0 50%,100% 0,100% 22%,40% 50%,100% 78%,100% 100%);"></div>
<div style="left:28.4px;top:375.0px;width:2px;height:1.6px;background:#e8e8e8;"></div>
<div style="left:28.4px;top:378.2px;width:2px;height:1.6px;background:#e8e8e8;"></div>
<div style="left:28.4px;top:381.4px;width:2px;height:1.6px;background:#e8e8e8;"></div>
<div style="left:28.4px;top:384.6px;width:2px;height:1.6px;background:#e8e8e8;"></div>
<div style="left:28.4px;top:387.8px;width:2px;height:1.6px;background:#e8e8e8;"></div>
<div style="left:28.4px;top:391.0px;width:2px;height:1.6px;background:#e8e8e8;"></div>
<div style="left:33px;top:352px;width:860px;height:267px;background:#2a2a2a;"></div>
<div class="t" style="left:36.00px;top:357.74px;font-size:7.4px;color:#e8e8e8;font-weight:bold;transform:scaleX(0.9275);">Mixing Console:</div>
<div class="t" style="left:90.00px;top:357.74px;font-size:7.4px;color:#ececec;font-weight:normal;transform:scaleX(0.9160);">44.100 Hz; 16 Bit</div>
<div style="left:368px;top:357px;width:8px;height:8px;background:transparent;border:1.5px solid #e8e8e8;box-sizing:border-box;background:linear-gradient(#e8e8e8,#e8e8e8) 50% 0/1px 100% no-repeat,linear-gradient(#e8e8e8,#e8e8e8) 0 50%/100% 1px no-repeat;"></div>
<div style="left:380px;top:360px;width:5px;height:3px;background:#e0e0e0;clip-path:polygon(0 0,100% 0,50% 100%);"></div>
<svg style="position:absolute;left:389px;top:356px" width="10" height="10"><g transform="translate(5,5)"><rect x="-1.1" y="-4.8" width="2.2" height="9.6" fill="#f0f0f0" transform="rotate(0)"/><rect x="-1.1" y="-4.8" width="2.2" height="9.6" fill="#f0f0f0" transform="rotate(45)"/><rect x="-1.1" y="-4.8" width="2.2" height="9.6" fill="#f0f0f0" transform="rotate(90)"/><rect x="-1.1" y="-4.8" width="2.2" height="9.6" fill="#f0f0f0" transform="rotate(135)"/><circle r="3.3" fill="#f0f0f0"/><circle r="1.6" fill="#2a2a2a"/></g></svg>
<div style="left:405px;top:360px;width:5px;height:3px;background:#e0e0e0;clip-path:polygon(0 0,100% 0,50% 100%);"></div>
<div style="left:414px;top:355px;width:1.5px;height:12px;background:#dcdcdc;"></div>
<div style="left:420px;top:357px;width:4px;height:8px;background:#e0e0e0;clip-path:polygon(0 0,100% 50%,0 100%);"></div>
<div style="left:425px;top:357px;width:4px;height:8px;background:#e0e0e0;clip-path:polygon(100% 0,0 50%,100% 100%);"></div>
<div style="left:437px;top:358px;width:4px;height:6px;background:#e0e0e0;clip-path:polygon(0 30%,40% 30%,100% 0,100% 100%,40% 70%,0 70%);"></div>
<div style="left:443px;top:359px;width:2px;height:4px;background:#40a0e0;"></div>
<div style="left:451px;top:355px;width:1.5px;height:12px;background:#dcdcdc;"></div>
<div style="left:458px;top:356px;width:8px;height:6px;background:#3a7ad0;"></div>
<div style="left:459px;top:357px;width:6px;height:1px;background:#e0e0e0;"></div>
<div style="left:457px;top:362px;width:3px;height:3px;background:#f0c000;border-radius:50%;"></div>
<div class="t" style="left:469.00px;top:358.24px;font-size:7.4px;color:#ececec;font-weight:normal;transform:scaleX(0.9792);">Insert Audio Track</div>
<div style="left:537px;top:356px;width:7px;height:7px;background:#e0e0e0;border-radius:50%;"></div>
<div style="left:534px;top:362px;width:3px;height:3px;background:#f0c000;border-radius:50%;"></div>
<div class="t" style="left:546.00px;top:358.24px;font-size:7.4px;color:#ececec;font-weight:normal;transform:scaleX(0.9763);">Insert MIDI Track</div>
<div class="t" style="left:608.00px;top:356.54px;font-size:10px;color:#e8e8e8;font-weight:normal;transform:scaleX(1.0000);font-style:italic;">f</div>
<div style="left:612px;top:362px;width:3px;height:3px;background:#f0c000;border-radius:50%;"></div>
<div class="t" style="left:619.50px;top:358.24px;font-size:7.4px;color:#ececec;font-weight:normal;transform:scaleX(0.9387);">Insert Assignable FX...</div>
<div style="left:699px;top:357px;width:6px;height:5px;background:#e8e8e8;border-radius:50%;"></div>
<div style="left:697px;top:356px;width:3px;height:3px;background:#f0c000;border-radius:50%;"></div>
<div style="left:698px;top:362px;width:4px;height:3px;background:#d04060;"></div>
<div class="t" style="left:708.00px;top:358.24px;font-size:7.4px;color:#ececec;font-weight:normal;transform:scaleX(0.9305);">Insert Bus</div>
<div style="left:749px;top:357px;width:6px;height:5px;background:#e8e8e8;border-radius:50%;"></div>
<div style="left:747px;top:356px;width:3px;height:3px;background:#f0c000;border-radius:50%;"></div>
<div style="left:748px;top:362px;width:4px;height:3px;background:#d04060;"></div>
<div class="t" style="left:758.00px;top:358.24px;font-size:7.4px;color:#ececec;font-weight:normal;transform:scaleX(0.9647);">Insert Input Bus</div>
<div style="left:818px;top:356px;width:7px;height:6px;background:#e0e0e0;"></div>
<div style="left:815px;top:362px;width:3px;height:3px;background:#f0c000;border-radius:50%;"></div>
<div class="t" style="left:827.00px;top:358.24px;font-size:7.4px;color:#ececec;font-weight:normal;transform:scaleX(0.9692);">Insert Soft Synth...</div>
<div style="left:33px;top:369px;width:47px;height:250px;background:#2c2c2c;"></div>
<div class="t" style="left:37.00px;top:374.24px;font-size:7.4px;color:#dcdcdc;font-weight:normal;transform:scaleX(0.9119);">Preview</div>
<div class="t" style="left:37.00px;top:399.74px;font-size:7.4px;color:#dcdcdc;font-weight:normal;transform:scaleX(0.9937);">Microsoft ...</div>
<div style="left:50.0px;top:456px;width:3px;height:135px;background:#464646;"></div>
<div style="left:51.0px;top:456px;width:1px;height:135px;background:#6e6e6e;"></div>
<div style="left:42.5px;top:458.0px;width:4px;height:0.8px;background:#363636;"></div>
<div style="left:42.5px;top:466.3px;width:4px;height:0.8px;background:#363636;"></div>
<div style="left:42.5px;top:474.6px;width:4px;height:0.8px;background:#363636;"></div>
<div style="left:42.5px;top:482.9px;width:4px;height:0.8px;background:#363636;"></div>
<div style="left:42.5px;top:491.2px;width:4px;height:0.8px;background:#363636;"></div>
<div style="left:42.5px;top:499.5px;width:4px;height:0.8px;background:#363636;"></div>
<div style="left:42.5px;top:507.8px;width:4px;height:0.8px;background:#363636;"></div>
<div style="left:42.5px;top:516.1px;width:4px;height:0.8px;background:#363636;"></div>
<div style="left:42.5px;top:524.4px;width:4px;height:0.8px;background:#363636;"></div>
<div style="left:42.5px;top:532.7px;width:4px;height:0.8px;background:#363636;"></div>
<div style="left:42.5px;top:541.0px;width:4px;height:0.8px;background:#363636;"></div>
<div style="left:42.5px;top:549.3px;width:4px;height:0.8px;background:#363636;"></div>
<div style="left:42.5px;top:557.6px;width:4px;height:0.8px;background:#363636;"></div>
<div style="left:42.5px;top:565.9px;width:4px;height:0.8px;background:#363636;"></div>
<div style="left:42.5px;top:574.2px;width:4px;height:0.8px;background:#363636;"></div>
<div style="left:42.5px;top:582.5px;width:4px;height:0.8px;background:#363636;"></div>
<div style="left:47.0px;top:534.2px;width:9px;height:12px;background:#d4d4d4;border-radius:1px;"></div>
<div style="left:49.0px;top:538.7px;width:5px;height:0.8px;background:#707070;"></div>
<div style="left:49.0px;top:540.4000000000001px;width:5px;height:0.8px;background:#707070;"></div>
<div style="left:49.0px;top:542.1px;width:5px;height:0.8px;background:#707070;"></div>
<div style="left:65px;top:465px;width:13px;height:6px;background:#6b3c3c;"></div>
<div style="left:65px;top:471px;width:13px;height:15px;background:#6e6a3e;"></div>
<div style="left:65px;top:486px;width:13px;height:105px;background:#3f6a48;"></div>
<div class="t" style="left:73.16px;top:470.82px;font-size:6px;color:#4a4630;font-weight:normal;transform:scaleX(1.0000);">6</div>
<div style="left:63.5px;top:473.4px;width:1.5px;height:0.8px;background:#606060;"></div>
<div class="t" style="left:69.83px;top:479.12px;font-size:6px;color:#4a4630;font-weight:normal;transform:scaleX(1.0000);">12</div>
<div style="left:63.5px;top:481.695px;width:1.5px;height:0.8px;background:#606060;"></div>
<div class="t" style="left:69.83px;top:487.41px;font-size:6px;color:#30402c;font-weight:normal;transform:scaleX(1.0000);">18</div>
<div style="left:63.5px;top:489.98999999999995px;width:1.5px;height:0.8px;background:#606060;"></div>
<div class="t" style="left:69.83px;top:495.71px;font-size:6px;color:#30402c;font-weight:normal;transform:scaleX(1.0000);">24</div>
<div style="left:63.5px;top:498.28499999999997px;width:1.5px;height:0.8px;background:#606060;"></div>
<div class="t" style="left:69.83px;top:504.00px;font-size:6px;color:#30402c;font-weight:normal;transform:scaleX(1.0000);">30</div>
<div style="left:63.5px;top:506.58px;width:1.5px;height:0.8px;background:#606060;"></div>
<div class="t" style="left:69.83px;top:512.30px;font-size:6px;color:#30402c;font-weight:normal;transform:scaleX(1.0000);">36</div>
<div style="left:63.5px;top:514.875px;width:1.5px;height:0.8px;background:#606060;"></div>
<div class="t" style="left:69.83px;top:520.59px;font-size:6px;color:#30402c;font-weight:normal;transform:scaleX(1.0000);">42</div>
<div style="left:63.5px;top:523.17px;width:1.5px;height:0.8px;background:#606060;"></div>
<div class="t" style="left:69.83px;top:528.89px;font-size:6px;color:#30402c;font-weight:normal;transform:scaleX(1.0000);">48</div>
<div style="left:63.5px;top:531.4649999999999px;width:1.5px;height:0.8px;background:#606060;"></div>
<div class="t" style="left:69.83px;top:537.18px;font-size:6px;color:#30402c;font-weight:normal;transform:scaleX(1.0000);">54</div>
<div style="left:63.5px;top:539.76px;width:1.5px;height:0.8px;background:#606060;"></div>
<div class="t" style="left:69.83px;top:545.48px;font-size:6px;color:#30402c;font-weight:normal;transform:scaleX(1.0000);">60</div>
<div style="left:63.5px;top:548.055px;width:1.5px;height:0.8px;background:#606060;"></div>
<div class="t" style="left:69.83px;top:553.77px;font-size:6px;color:#30402c;font-weight:normal;transform:scaleX(1.0000);">66</div>
<div style="left:63.5px;top:556.35px;width:1.5px;height:0.8px;background:#606060;"></div>
<div class="t" style="left:69.83px;top:562.07px;font-size:6px;color:#30402c;font-weight:normal;transform:scaleX(1.0000);">72</div>
<div style="left:63.5px;top:564.645px;width:1.5px;height:0.8px;background:#606060;"></div>
<div class="t" style="left:69.83px;top:570.36px;font-size:6px;color:#30402c;font-weight:normal;transform:scaleX(1.0000);">78</div>
<div style="left:63.5px;top:572.9399999999999px;width:1.5px;height:0.8px;background:#606060;"></div>
<div class="t" style="left:69.83px;top:578.66px;font-size:6px;color:#30402c;font-weight:normal;transform:scaleX(1.0000);">84</div>
<div style="left:63.5px;top:581.235px;width:1.5px;height:0.8px;background:#606060;"></div>
<div class="t" style="left:66.30px;top:456.50px;font-size:6.5px;color:#c8c8c8;font-weight:normal;transform:scaleX(1.0000);">-Inf.</div>
<div class="t" style="left:45.47px;top:597.57px;font-size:7px;color:#707070;font-weight:normal;transform:scaleX(1.0000);">-6.0</div>
<div style="left:33px;top:605px;width:47px;height:14px;background:#262626;"></div>
<div class="t" style="left:36.00px;top:609.24px;font-size:7.4px;color:#e4e4e4;font-weight:normal;transform:scaleX(0.9119);">Preview</div>
<div style="left:81.0px;top:369px;width:44.5px;height:250px;background:#2c2c2c;"></div>
<div style="left:82.8px;top:372px;width:14px;height:9px;background:#7c9ad8;"></div>
<div class="t" style="left:87.85px;top:373.57px;font-size:7px;color:#3a3a3a;font-weight:normal;transform:scaleX(1.0000);">1</div>
<div class="t" style="left:100.50px;top:374.24px;font-size:7.4px;color:#ececec;font-weight:normal;transform:scaleX(0.8982);">Audio</div>
<div class="t" style="left:83.50px;top:386.94px;font-size:7.4px;color:#e4e4e4;font-weight:normal;transform:scaleX(0.8604);">Soundmapper</div>
<div class="t" style="left:94.00px;top:399.74px;font-size:7.4px;color:#e4e4e4;font-weight:normal;transform:scaleX(0.8401);">Master</div>
<svg style="position:absolute;left:83.0px;top:412.3px" width="10" height="10"><g transform="translate(5,5)"><rect x="-1" y="-4" width="2" height="8" fill="#f0f0f0" transform="rotate(0)"/><rect x="-1" y="-4" width="2" height="8" fill="#f0f0f0" transform="rotate(45)"/><rect x="-1" y="-4" width="2" height="8" fill="#f0f0f0" transform="rotate(90)"/><rect x="-1" y="-4" width="2" height="8" fill="#f0f0f0" transform="rotate(135)"/><circle r="2.88" fill="#f0f0f0"/><circle r="1.68" fill="#e0203a"/></g></svg>
<div class="t" style="left:95.00px;top:414.04px;font-size:7.4px;color:#ececec;font-weight:normal;transform:scaleX(0.8862);">Touch</div>
<div style="left:119.5px;top:416px;width:5px;height:3px;background:#e0e0e0;clip-path:polygon(0 0,100% 0,50% 100%);"></div>
<div style="left:84.0px;top:429.5px;width:40px;height:1.3px;background:#555555;"></div>
<div style="left:100.5px;top:425.5px;width:5.5px;height:9px;background:#8a8a8a;"></div>
<div style="left:102.5px;top:427px;width:1.5px;height:6px;background:#3a3a3a;"></div>
<div class="t" style="left:92.99px;top:437.07px;font-size:7px;color:#6a6a6a;font-weight:normal;transform:scaleX(1.0000);">Center</div>
<div style="left:83.5px;top:452.2px;width:9.0px;height:9.0px;background:#5a8cb4;border-radius:50%;"></div>
<div style="left:87.2px;top:453.7px;width:1.6px;height:6.0px;background:#1a2a3a;transform:rotate(-45deg);"></div>
<div style="left:88.5px;top:452.7px;width:4.05px;height:4.05px;background:#f0f0f0;border-radius:50%;"></div>
<div style="left:89.6px;top:453.8px;width:2.025px;height:2.025px;background:#303030;border-radius:50%;"></div>
<div style="left:83.5px;top:465.9px;width:9.0px;height:9.0px;background:#c8a848;border-radius:50%;"></div>
<div style="left:85.3px;top:467.7px;width:5.4px;height:5.4px;background:#4a4020;border-radius:50%;"></div>
<div style="left:86.5px;top:468.4px;width:3px;height:4px;background:transparent;border:1px solid #c8b050;border-radius:40%;box-sizing:border-box;"></div>
<div style="left:91.0px;top:465.9px;width:1.6px;height:4.5px;background:#f0f0f0;"></div>
<div style="left:91.0px;top:471.4px;width:1.6px;height:1.4px;background:#f0f0f0;"></div>
<svg style="position:absolute;left:83.0px;top:478.5px" width="11" height="11"><path d="M8.5,1.2 C6.5,0.2 5.2,1.5 4.6,4 L3,10 C2.6,11 1.5,11 0.8,10.3" stroke="#28c0f8" stroke-width="1.4" fill="none"/><path d="M2.5,4.5 L7,4.5" stroke="#28c0f8" stroke-width="1.1"/><circle cx="8" cy="7.8" r="2.6" fill="#f4f4f4" stroke="#2a2a2a" stroke-width="0.8"/><path d="M6.9,7.8 L7.8,8.7 L9.2,7" stroke="#333" stroke-width="0.8" fill="none"/></svg>
<div style="left:83.5px;top:491.7px;width:9.0px;height:9.0px;background:#d8d0d0;border-radius:50%;"></div>
<div style="left:85.3px;top:493.5px;width:5.4px;height:5.4px;background:#c02020;border-radius:50%;"></div>
<div style="left:83.0px;top:504.5px;width:10px;height:10px;background:#f4f4f4;"></div>
<div style="left:85.0px;top:506.5px;width:6px;height:6px;background:#1a1a1a;clip-path:polygon(0 30%,40% 30%,100% 0,100% 100%,40% 70%,0 70%);"></div>
<div style="left:83.2px;top:517.2px;width:9.6px;height:9.6px;background:#3a9ad8;border-radius:50%;"></div>
<div style="left:84.7px;top:518.7px;width:6.6px;height:6.6px;background:#f0f0f0;border-radius:50%;"></div>
<div style="left:84.7px;top:522px;width:6.6px;height:3.3px;background:#6a4a30;border-radius:0 0 5px 5px;"></div>
<div style="left:101.5px;top:456px;width:3px;height:135px;background:#464646;"></div>
<div style="left:102.5px;top:456px;width:1px;height:135px;background:#6e6e6e;"></div>
<div style="left:94.0px;top:458.0px;width:4px;height:0.8px;background:#363636;"></div>
<div style="left:94.0px;top:466.3px;width:4px;height:0.8px;background:#363636;"></div>
<div style="left:94.0px;top:474.6px;width:4px;height:0.8px;background:#363636;"></div>
<div style="left:94.0px;top:482.9px;width:4px;height:0.8px;background:#363636;"></div>
<div style="left:94.0px;top:491.2px;width:4px;height:0.8px;background:#363636;"></div>
<div style="left:94.0px;top:499.5px;width:4px;height:0.8px;background:#363636;"></div>
<div style="left:94.0px;top:507.8px;width:4px;height:0.8px;background:#363636;"></div>
<div style="left:94.0px;top:516.1px;width:4px;height:0.8px;background:#363636;"></div>
<div style="left:94.0px;top:524.4px;width:4px;height:0.8px;background:#363636;"></div>
<div style="left:94.0px;top:532.7px;width:4px;height:0.8px;background:#363636;"></div>
<div style="left:94.0px;top:541.0px;width:4px;height:0.8px;background:#363636;"></div>
<div style="left:94.0px;top:549.3px;width:4px;height:0.8px;background:#363636;"></div>
<div style="left:94.0px;top:557.6px;width:4px;height:0.8px;background:#363636;"></div>
<div style="left:94.0px;top:565.9px;width:4px;height:0.8px;background:#363636;"></div>
<div style="left:94.0px;top:574.2px;width:4px;height:0.8px;background:#363636;"></div>
<div style="left:94.0px;top:582.5px;width:4px;height:0.8px;background:#363636;"></div>
<div style="left:98.5px;top:523.6px;width:9px;height:12px;background:#d4d4d4;border-radius:1px;"></div>
<div style="left:100.5px;top:528.1px;width:5px;height:0.8px;background:#707070;"></div>
<div style="left:100.5px;top:529.8000000000001px;width:5px;height:0.8px;background:#707070;"></div>
<div style="left:100.5px;top:531.5px;width:5px;height:0.8px;background:#707070;"></div>
<div style="left:112.0px;top:465px;width:13px;height:6px;background:#6b3c3c;"></div>
<div style="left:112.0px;top:471px;width:13px;height:15px;background:#6e6a3e;"></div>
<div style="left:112.0px;top:486px;width:13px;height:105px;background:#3f6a48;"></div>
<div style="left:112.0px;top:471px;width:13px;height:15px;background:#e8e020;"></div>
<div style="left:112.0px;top:486px;width:13px;height:105px;background:#22e03c;"></div>
<div class="t" style="left:120.16px;top:470.82px;font-size:6px;color:#5a5a10;font-weight:normal;transform:scaleX(1.0000);">6</div>
<div style="left:110.5px;top:473.4px;width:1.5px;height:0.8px;background:#606060;"></div>
<div class="t" style="left:116.83px;top:479.12px;font-size:6px;color:#5a5a10;font-weight:normal;transform:scaleX(1.0000);">12</div>
<div style="left:110.5px;top:481.695px;width:1.5px;height:0.8px;background:#606060;"></div>
<div class="t" style="left:116.83px;top:487.41px;font-size:6px;color:#154a1c;font-weight:normal;transform:scaleX(1.0000);">18</div>
<div style="left:110.5px;top:489.98999999999995px;width:1.5px;height:0.8px;background:#606060;"></div>
<div class="t" style="left:116.83px;top:495.71px;font-size:6px;color:#154a1c;font-weight:normal;transform:scaleX(1.0000);">24</div>
<div style="left:110.5px;top:498.28499999999997px;width:1.5px;height:0.8px;background:#606060;"></div>
<div class="t" style="left:116.83px;top:504.00px;font-size:6px;color:#154a1c;font-weight:normal;transform:scaleX(1.0000);">30</div>
<div style="left:110.5px;top:506.58px;width:1.5px;height:0.8px;background:#606060;"></div>
<div class="t" style="left:116.83px;top:512.30px;font-size:6px;color:#154a1c;font-weight:normal;transform:scaleX(1.0000);">36</div>
<div style="left:110.5px;top:514.875px;width:1.5px;height:0.8px;background:#606060;"></div>
<div class="t" style="left:116.83px;top:520.59px;font-size:6px;color:#154a1c;font-weight:normal;transform:scaleX(1.0000);">42</div>
<div style="left:110.5px;top:523.17px;width:1.5px;height:0.8px;background:#606060;"></div>
<div class="t" style="left:116.83px;top:528.89px;font-size:6px;color:#154a1c;font-weight:normal;transform:scaleX(1.0000);">48</div>
<div style="left:110.5px;top:531.4649999999999px;width:1.5px;height:0.8px;background:#606060;"></div>
<div class="t" style="left:116.83px;top:537.18px;font-size:6px;color:#154a1c;font-weight:normal;transform:scaleX(1.0000);">54</div>
<div style="left:110.5px;top:539.76px;width:1.5px;height:0.8px;background:#606060;"></div>
<div class="t" style="left:116.83px;top:545.48px;font-size:6px;color:#154a1c;font-weight:normal;transform:scaleX(1.0000);">60</div>
<div style="left:110.5px;top:548.055px;width:1.5px;height:0.8px;background:#606060;"></div>
<div class="t" style="left:116.83px;top:553.77px;font-size:6px;color:#154a1c;font-weight:normal;transform:scaleX(1.0000);">66</div>
<div style="left:110.5px;top:556.35px;width:1.5px;height:0.8px;background:#606060;"></div>
<div class="t" style="left:116.83px;top:562.07px;font-size:6px;color:#154a1c;font-weight:normal;transform:scaleX(1.0000);">72</div>
<div style="left:110.5px;top:564.645px;width:1.5px;height:0.8px;background:#606060;"></div>
<div class="t" style="left:116.83px;top:570.36px;font-size:6px;color:#154a1c;font-weight:normal;transform:scaleX(1.0000);">78</div>
<div style="left:110.5px;top:572.9399999999999px;width:1.5px;height:0.8px;background:#606060;"></div>
<div class="t" style="left:116.83px;top:578.66px;font-size:6px;color:#154a1c;font-weight:normal;transform:scaleX(1.0000);">84</div>
<div style="left:110.5px;top:581.235px;width:1.5px;height:0.8px;background:#606060;"></div>
<div class="t" style="left:113.30px;top:456.50px;font-size:6.5px;color:#c8c8c8;font-weight:normal;transform:scaleX(1.0000);">-3.3</div>
<div class="t" style="left:96.97px;top:597.57px;font-size:7px;color:#707070;font-weight:normal;transform:scaleX(1.0000);">-3.7</div>
<div style="left:81.0px;top:605px;width:44.5px;height:14px;background:#262626;"></div>
<div class="t" style="left:84.00px;top:609.24px;font-size:7.4px;color:#e4e4e4;font-weight:normal;transform:scaleX(1.0200);">Chorus</div>
<div style="left:127.5px;top:369px;width:44.5px;height:250px;background:#2c2c2c;"></div>
<div style="left:129.3px;top:372px;width:14px;height:9px;background:#c0606c;"></div>
<div class="t" style="left:134.35px;top:373.57px;font-size:7px;color:#3a3a3a;font-weight:normal;transform:scaleX(1.0000);">2</div>
<div class="t" style="left:147.00px;top:374.24px;font-size:7.4px;color:#ececec;font-weight:normal;transform:scaleX(0.8982);">Audio</div>
<div class="t" style="left:130.00px;top:386.94px;font-size:7.4px;color:#e4e4e4;font-weight:normal;transform:scaleX(0.8604);">Soundmapper</div>
<div class="t" style="left:140.50px;top:399.74px;font-size:7.4px;color:#e4e4e4;font-weight:normal;transform:scaleX(0.8401);">Master</div>
<svg style="position:absolute;left:129.5px;top:412.3px" width="10" height="10"><g transform="translate(5,5)"><rect x="-1" y="-4" width="2" height="8" fill="#f0f0f0" transform="rotate(0)"/><rect x="-1" y="-4" width="2" height="8" fill="#f0f0f0" transform="rotate(45)"/><rect x="-1" y="-4" width="2" height="8" fill="#f0f0f0" transform="rotate(90)"/><rect x="-1" y="-4" width="2" height="8" fill="#f0f0f0" transform="rotate(135)"/><circle r="2.88" fill="#f0f0f0"/><circle r="1.68" fill="#e0203a"/></g></svg>
<div class="t" style="left:141.50px;top:414.04px;font-size:7.4px;color:#ececec;font-weight:normal;transform:scaleX(0.8862);">Touch</div>
<div style="left:166.0px;top:416px;width:5px;height:3px;background:#e0e0e0;clip-path:polygon(0 0,100% 0,50% 100%);"></div>
<div style="left:130.5px;top:429.5px;width:40px;height:1.3px;background:#555555;"></div>
<div style="left:147.0px;top:425.5px;width:5.5px;height:9px;background:#8a8a8a;"></div>
<div style="left:149.0px;top:427px;width:1.5px;height:6px;background:#3a3a3a;"></div>
<div class="t" style="left:139.49px;top:437.07px;font-size:7px;color:#6a6a6a;font-weight:normal;transform:scaleX(1.0000);">Center</div>
<div style="left:130.0px;top:452.2px;width:9.0px;height:9.0px;background:#5a8cb4;border-radius:50%;"></div>
<div style="left:133.7px;top:453.7px;width:1.6px;height:6.0px;background:#1a2a3a;transform:rotate(-45deg);"></div>
<div style="left:135.0px;top:452.7px;width:4.05px;height:4.05px;background:#f0f0f0;border-radius:50%;"></div>
<div style="left:136.1px;top:453.8px;width:2.025px;height:2.025px;background:#303030;border-radius:50%;"></div>
<div style="left:130.0px;top:465.9px;width:9.0px;height:9.0px;background:#c8a848;border-radius:50%;"></div>
<div style="left:131.8px;top:467.7px;width:5.4px;height:5.4px;background:#4a4020;border-radius:50%;"></div>
<div style="left:133.0px;top:468.4px;width:3px;height:4px;background:transparent;border:1px solid #c8b050;border-radius:40%;box-sizing:border-box;"></div>
<div style="left:137.5px;top:465.9px;width:1.6px;height:4.5px;background:#f0f0f0;"></div>
<div style="left:137.5px;top:471.4px;width:1.6px;height:1.4px;background:#f0f0f0;"></div>
<svg style="position:absolute;left:129.5px;top:478.5px" width="11" height="11"><path d="M8.5,1.2 C6.5,0.2 5.2,1.5 4.6,4 L3,10 C2.6,11 1.5,11 0.8,10.3" stroke="#28c0f8" stroke-width="1.4" fill="none"/><path d="M2.5,4.5 L7,4.5" stroke="#28c0f8" stroke-width="1.1"/><circle cx="8" cy="7.8" r="2.6" fill="#f4f4f4" stroke="#2a2a2a" stroke-width="0.8"/><path d="M6.9,7.8 L7.8,8.7 L9.2,7" stroke="#333" stroke-width="0.8" fill="none"/></svg>
<div style="left:130.0px;top:491.7px;width:9.0px;height:9.0px;background:#d8d0d0;border-radius:50%;"></div>
<div style="left:131.8px;top:493.5px;width:5.4px;height:5.4px;background:#c02020;border-radius:50%;"></div>
<div style="left:129.5px;top:504.5px;width:10px;height:10px;background:#f4f4f4;"></div>
<div style="left:131.5px;top:506.5px;width:6px;height:6px;background:#1a1a1a;clip-path:polygon(0 30%,40% 30%,100% 0,100% 100%,40% 70%,0 70%);"></div>
<div style="left:129.7px;top:517.2px;width:9.6px;height:9.6px;background:#3a9ad8;border-radius:50%;"></div>
<div style="left:131.2px;top:518.7px;width:6.6px;height:6.6px;background:#f0f0f0;border-radius:50%;"></div>
<div style="left:131.2px;top:522px;width:6.6px;height:3.3px;background:#6a4a30;border-radius:0 0 5px 5px;"></div>
<div style="left:148.0px;top:456px;width:3px;height:135px;background:#464646;"></div>
<div style="left:149.0px;top:456px;width:1px;height:135px;background:#6e6e6e;"></div>
<div style="left:140.5px;top:458.0px;width:4px;height:0.8px;background:#363636;"></div>
<div style="left:140.5px;top:466.3px;width:4px;height:0.8px;background:#363636;"></div>
<div style="left:140.5px;top:474.6px;width:4px;height:0.8px;background:#363636;"></div>
<div style="left:140.5px;top:482.9px;width:4px;height:0.8px;background:#363636;"></div>
<div style="left:140.5px;top:491.2px;width:4px;height:0.8px;background:#363636;"></div>
<div style="left:140.5px;top:499.5px;width:4px;height:0.8px;background:#363636;"></div>
<div style="left:140.5px;top:507.8px;width:4px;height:0.8px;background:#363636;"></div>
<div style="left:140.5px;top:516.1px;width:4px;height:0.8px;background:#363636;"></div>
<div style="left:140.5px;top:524.4px;width:4px;height:0.8px;background:#363636;"></div>
<div style="left:140.5px;top:532.7px;width:4px;height:0.8px;background:#363636;"></div>
<div style="left:140.5px;top:541.0px;width:4px;height:0.8px;background:#363636;"></div>
<div style="left:140.5px;top:549.3px;width:4px;height:0.8px;background:#363636;"></div>
<div style="left:140.5px;top:557.6px;width:4px;height:0.8px;background:#363636;"></div>
<div style="left:140.5px;top:565.9px;width:4px;height:0.8px;background:#363636;"></div>
<div style="left:140.5px;top:574.2px;width:4px;height:0.8px;background:#363636;"></div>
<div style="left:140.5px;top:582.5px;width:4px;height:0.8px;background:#363636;"></div>
<div style="left:145.0px;top:497.2px;width:9px;height:12px;background:#d4d4d4;border-radius:1px;"></div>
<div style="left:147.0px;top:501.7px;width:5px;height:0.8px;background:#707070;"></div>
<div style="left:147.0px;top:503.4px;width:5px;height:0.8px;background:#707070;"></div>
<div style="left:147.0px;top:505.09999999999997px;width:5px;height:0.8px;background:#707070;"></div>
<div style="left:158.5px;top:465px;width:13px;height:6px;background:#6b3c3c;"></div>
<div style="left:158.5px;top:471px;width:13px;height:15px;background:#6e6a3e;"></div>
<div style="left:158.5px;top:486px;width:13px;height:105px;background:#3f6a48;"></div>
<div class="t" style="left:166.66px;top:470.82px;font-size:6px;color:#4a4630;font-weight:normal;transform:scaleX(1.0000);">6</div>
<div style="left:157.0px;top:473.4px;width:1.5px;height:0.8px;background:#606060;"></div>
<div class="t" style="left:163.33px;top:479.12px;font-size:6px;color:#4a4630;font-weight:normal;transform:scaleX(1.0000);">12</div>
<div style="left:157.0px;top:481.695px;width:1.5px;height:0.8px;background:#606060;"></div>
<div class="t" style="left:163.33px;top:487.41px;font-size:6px;color:#30402c;font-weight:normal;transform:scaleX(1.0000);">18</div>
<div style="left:157.0px;top:489.98999999999995px;width:1.5px;height:0.8px;background:#606060;"></div>
<div class="t" style="left:163.33px;top:495.71px;font-size:6px;color:#30402c;font-weight:normal;transform:scaleX(1.0000);">24</div>
<div style="left:157.0px;top:498.28499999999997px;width:1.5px;height:0.8px;background:#606060;"></div>
<div class="t" style="left:163.33px;top:504.00px;font-size:6px;color:#30402c;font-weight:normal;transform:scaleX(1.0000);">30</div>
<div style="left:157.0px;top:506.58px;width:1.5px;height:0.8px;background:#606060;"></div>
<div class="t" style="left:163.33px;top:512.30px;font-size:6px;color:#30402c;font-weight:normal;transform:scaleX(1.0000);">36</div>
<div style="left:157.0px;top:514.875px;width:1.5px;height:0.8px;background:#606060;"></div>
<div class="t" style="left:163.33px;top:520.59px;font-size:6px;color:#30402c;font-weight:normal;transform:scaleX(1.0000);">42</div>
<div style="left:157.0px;top:523.17px;width:1.5px;height:0.8px;background:#606060;"></div>
<div class="t" style="left:163.33px;top:528.89px;font-size:6px;color:#30402c;font-weight:normal;transform:scaleX(1.0000);">48</div>
<div style="left:157.0px;top:531.4649999999999px;width:1.5px;height:0.8px;background:#606060;"></div>
<div class="t" style="left:163.33px;top:537.18px;font-size:6px;color:#30402c;font-weight:normal;transform:scaleX(1.0000);">54</div>
<div style="left:157.0px;top:539.76px;width:1.5px;height:0.8px;background:#606060;"></div>
<div class="t" style="left:163.33px;top:545.48px;font-size:6px;color:#30402c;font-weight:normal;transform:scaleX(1.0000);">60</div>
<div style="left:157.0px;top:548.055px;width:1.5px;height:0.8px;background:#606060;"></div>
<div class="t" style="left:163.33px;top:553.77px;font-size:6px;color:#30402c;font-weight:normal;transform:scaleX(1.0000);">66</div>
<div style="left:157.0px;top:556.35px;width:1.5px;height:0.8px;background:#606060;"></div>
<div class="t" style="left:163.33px;top:562.07px;font-size:6px;color:#30402c;font-weight:normal;transform:scaleX(1.0000);">72</div>
<div style="left:157.0px;top:564.645px;width:1.5px;height:0.8px;background:#606060;"></div>
<div class="t" style="left:163.33px;top:570.36px;font-size:6px;color:#30402c;font-weight:normal;transform:scaleX(1.0000);">78</div>
<div style="left:157.0px;top:572.9399999999999px;width:1.5px;height:0.8px;background:#606060;"></div>
<div class="t" style="left:163.33px;top:578.66px;font-size:6px;color:#30402c;font-weight:normal;transform:scaleX(1.0000);">84</div>
<div style="left:157.0px;top:581.235px;width:1.5px;height:0.8px;background:#606060;"></div>
<div class="t" style="left:159.80px;top:456.50px;font-size:6.5px;color:#c8c8c8;font-weight:normal;transform:scaleX(1.0000);">-3.8</div>
<div class="t" style="left:144.63px;top:597.57px;font-size:7px;color:#707070;font-weight:normal;transform:scaleX(1.0000);">0.0</div>
<div style="left:127.5px;top:605px;width:44.5px;height:14px;background:#262626;"></div>
<div class="t" style="left:130.50px;top:609.24px;font-size:7.4px;color:#e4e4e4;font-weight:normal;transform:scaleX(1.0200);">Choir</div>
<div style="left:174.0px;top:369px;width:44.5px;height:250px;background:#2c2c2c;"></div>
<div style="left:175.8px;top:372px;width:14px;height:9px;background:#70c8cc;"></div>
<div class="t" style="left:180.85px;top:373.57px;font-size:7px;color:#3a3a3a;font-weight:normal;transform:scaleX(1.0000);">3</div>
<div class="t" style="left:193.50px;top:374.24px;font-size:7.4px;color:#ececec;font-weight:normal;transform:scaleX(0.8982);">Audio</div>
<div class="t" style="left:176.50px;top:386.94px;font-size:7.4px;color:#e4e4e4;font-weight:normal;transform:scaleX(0.8604);">Soundmapper</div>
<div class="t" style="left:187.00px;top:399.74px;font-size:7.4px;color:#e4e4e4;font-weight:normal;transform:scaleX(0.8401);">Master</div>
<svg style="position:absolute;left:176.0px;top:412.3px" width="10" height="10"><g transform="translate(5,5)"><rect x="-1" y="-4" width="2" height="8" fill="#f0f0f0" transform="rotate(0)"/><rect x="-1" y="-4" width="2" height="8" fill="#f0f0f0" transform="rotate(45)"/><rect x="-1" y="-4" width="2" height="8" fill="#f0f0f0" transform="rotate(90)"/><rect x="-1" y="-4" width="2" height="8" fill="#f0f0f0" transform="rotate(135)"/><circle r="2.88" fill="#f0f0f0"/><circle r="1.68" fill="#e0203a"/></g></svg>
<div class="t" style="left:188.00px;top:414.04px;font-size:7.4px;color:#ececec;font-weight:normal;transform:scaleX(0.8862);">Touch</div>
<div style="left:212.5px;top:416px;width:5px;height:3px;background:#e0e0e0;clip-path:polygon(0 0,100% 0,50% 100%);"></div>
<div style="left:177.0px;top:429.5px;width:40px;height:1.3px;background:#555555;"></div>
<div style="left:193.5px;top:425.5px;width:5.5px;height:9px;background:#8a8a8a;"></div>
<div style="left:195.5px;top:427px;width:1.5px;height:6px;background:#3a3a3a;"></div>
<div class="t" style="left:185.99px;top:437.07px;font-size:7px;color:#6a6a6a;font-weight:normal;transform:scaleX(1.0000);">Center</div>
<div style="left:176.5px;top:452.2px;width:9.0px;height:9.0px;background:#5a8cb4;border-radius:50%;"></div>
<div style="left:180.2px;top:453.7px;width:1.6px;height:6.0px;background:#1a2a3a;transform:rotate(-45deg);"></div>
<div style="left:181.5px;top:452.7px;width:4.05px;height:4.05px;background:#f0f0f0;border-radius:50%;"></div>
<div style="left:182.6px;top:453.8px;width:2.025px;height:2.025px;background:#303030;border-radius:50%;"></div>
<div style="left:176.5px;top:465.9px;width:9.0px;height:9.0px;background:#c8a848;border-radius:50%;"></div>
<div style="left:178.3px;top:467.7px;width:5.4px;height:5.4px;background:#4a4020;border-radius:50%;"></div>
<div style="left:179.5px;top:468.4px;width:3px;height:4px;background:transparent;border:1px solid #c8b050;border-radius:40%;box-sizing:border-box;"></div>
<div style="left:184.0px;top:465.9px;width:1.6px;height:4.5px;background:#f0f0f0;"></div>
<div style="left:184.0px;top:471.4px;width:1.6px;height:1.4px;background:#f0f0f0;"></div>
<svg style="position:absolute;left:176.0px;top:478.5px" width="11" height="11"><path d="M8.5,1.2 C6.5,0.2 5.2,1.5 4.6,4 L3,10 C2.6,11 1.5,11 0.8,10.3" stroke="#28c0f8" stroke-width="1.4" fill="none"/><path d="M2.5,4.5 L7,4.5" stroke="#28c0f8" stroke-width="1.1"/><circle cx="8" cy="7.8" r="2.6" fill="#f4f4f4" stroke="#2a2a2a" stroke-width="0.8"/><path d="M6.9,7.8 L7.8,8.7 L9.2,7" stroke="#333" stroke-width="0.8" fill="none"/></svg>
<div style="left:176.5px;top:491.7px;width:9.0px;height:9.0px;background:#d8d0d0;border-radius:50%;"></div>
<div style="left:178.3px;top:493.5px;width:5.4px;height:5.4px;background:#c02020;border-radius:50%;"></div>
<div style="left:176.0px;top:504.5px;width:10px;height:10px;background:#f4f4f4;"></div>
<div style="left:178.0px;top:506.5px;width:6px;height:6px;background:#1a1a1a;clip-path:polygon(0 30%,40% 30%,100% 0,100% 100%,40% 70%,0 70%);"></div>
<div style="left:176.2px;top:517.2px;width:9.6px;height:9.6px;background:#3a9ad8;border-radius:50%;"></div>
<div style="left:177.7px;top:518.7px;width:6.6px;height:6.6px;background:#f0f0f0;border-radius:50%;"></div>
<div style="left:177.7px;top:522px;width:6.6px;height:3.3px;background:#6a4a30;border-radius:0 0 5px 5px;"></div>
<div style="left:194.5px;top:456px;width:3px;height:135px;background:#464646;"></div>
<div style="left:195.5px;top:456px;width:1px;height:135px;background:#6e6e6e;"></div>
<div style="left:187.0px;top:458.0px;width:4px;height:0.8px;background:#363636;"></div>
<div style="left:187.0px;top:466.3px;width:4px;height:0.8px;background:#363636;"></div>
<div style="left:187.0px;top:474.6px;width:4px;height:0.8px;background:#363636;"></div>
<div style="left:187.0px;top:482.9px;width:4px;height:0.8px;background:#363636;"></div>
<div style="left:187.0px;top:491.2px;width:4px;height:0.8px;background:#363636;"></div>
<div style="left:187.0px;top:499.5px;width:4px;height:0.8px;background:#363636;"></div>
<div style="left:187.0px;top:507.8px;width:4px;height:0.8px;background:#363636;"></div>
<div style="left:187.0px;top:516.1px;width:4px;height:0.8px;background:#363636;"></div>
<div style="left:187.0px;top:524.4px;width:4px;height:0.8px;background:#363636;"></div>
<div style="left:187.0px;top:532.7px;width:4px;height:0.8px;background:#363636;"></div>
<div style="left:187.0px;top:541.0px;width:4px;height:0.8px;background:#363636;"></div>
<div style="left:187.0px;top:549.3px;width:4px;height:0.8px;background:#363636;"></div>
<div style="left:187.0px;top:557.6px;width:4px;height:0.8px;background:#363636;"></div>
<div style="left:187.0px;top:565.9px;width:4px;height:0.8px;background:#363636;"></div>
<div style="left:187.0px;top:574.2px;width:4px;height:0.8px;background:#363636;"></div>
<div style="left:187.0px;top:582.5px;width:4px;height:0.8px;background:#363636;"></div>
<div style="left:191.5px;top:526.6px;width:9px;height:12px;background:#d4d4d4;border-radius:1px;"></div>
<div style="left:193.5px;top:531.1px;width:5px;height:0.8px;background:#707070;"></div>
<div style="left:193.5px;top:532.8000000000001px;width:5px;height:0.8px;background:#707070;"></div>
<div style="left:193.5px;top:534.5px;width:5px;height:0.8px;background:#707070;"></div>
<div style="left:205.0px;top:465px;width:13px;height:6px;background:#6b3c3c;"></div>
<div style="left:205.0px;top:471px;width:13px;height:15px;background:#6e6a3e;"></div>
<div style="left:205.0px;top:486px;width:13px;height:105px;background:#3f6a48;"></div>
<div style="left:205.0px;top:499px;width:13px;height:92px;background:#22e03c;"></div>
<div class="t" style="left:213.16px;top:470.82px;font-size:6px;color:#4a4630;font-weight:normal;transform:scaleX(1.0000);">6</div>
<div style="left:203.5px;top:473.4px;width:1.5px;height:0.8px;background:#606060;"></div>
<div class="t" style="left:209.83px;top:479.12px;font-size:6px;color:#4a4630;font-weight:normal;transform:scaleX(1.0000);">12</div>
<div style="left:203.5px;top:481.695px;width:1.5px;height:0.8px;background:#606060;"></div>
<div class="t" style="left:209.83px;top:487.41px;font-size:6px;color:#30402c;font-weight:normal;transform:scaleX(1.0000);">18</div>
<div style="left:203.5px;top:489.98999999999995px;width:1.5px;height:0.8px;background:#606060;"></div>
<div class="t" style="left:209.83px;top:495.71px;font-size:6px;color:#30402c;font-weight:normal;transform:scaleX(1.0000);">24</div>
<div style="left:203.5px;top:498.28499999999997px;width:1.5px;height:0.8px;background:#606060;"></div>
<div class="t" style="left:209.83px;top:504.00px;font-size:6px;color:#154a1c;font-weight:normal;transform:scaleX(1.0000);">30</div>
<div style="left:203.5px;top:506.58px;width:1.5px;height:0.8px;background:#606060;"></div>
<div class="t" style="left:209.83px;top:512.30px;font-size:6px;color:#154a1c;font-weight:normal;transform:scaleX(1.0000);">36</div>
<div style="left:203.5px;top:514.875px;width:1.5px;height:0.8px;background:#606060;"></div>
<div class="t" style="left:209.83px;top:520.59px;font-size:6px;color:#154a1c;font-weight:normal;transform:scaleX(1.0000);">42</div>
<div style="left:203.5px;top:523.17px;width:1.5px;height:0.8px;background:#606060;"></div>
<div class="t" style="left:209.83px;top:528.89px;font-size:6px;color:#154a1c;font-weight:normal;transform:scaleX(1.0000);">48</div>
<div style="left:203.5px;top:531.4649999999999px;width:1.5px;height:0.8px;background:#606060;"></div>
<div class="t" style="left:209.83px;top:537.18px;font-size:6px;color:#154a1c;font-weight:normal;transform:scaleX(1.0000);">54</div>
<div style="left:203.5px;top:539.76px;width:1.5px;height:0.8px;background:#606060;"></div>
<div class="t" style="left:209.83px;top:545.48px;font-size:6px;color:#154a1c;font-weight:normal;transform:scaleX(1.0000);">60</div>
<div style="left:203.5px;top:548.055px;width:1.5px;height:0.8px;background:#606060;"></div>
<div class="t" style="left:209.83px;top:553.77px;font-size:6px;color:#154a1c;font-weight:normal;transform:scaleX(1.0000);">66</div>
<div style="left:203.5px;top:556.35px;width:1.5px;height:0.8px;background:#606060;"></div>
<div class="t" style="left:209.83px;top:562.07px;font-size:6px;color:#154a1c;font-weight:normal;transform:scaleX(1.0000);">72</div>
<div style="left:203.5px;top:564.645px;width:1.5px;height:0.8px;background:#606060;"></div>
<div class="t" style="left:209.83px;top:570.36px;font-size:6px;color:#154a1c;font-weight:normal;transform:scaleX(1.0000);">78</div>
<div style="left:203.5px;top:572.9399999999999px;width:1.5px;height:0.8px;background:#606060;"></div>
<div class="t" style="left:209.83px;top:578.66px;font-size:6px;color:#154a1c;font-weight:normal;transform:scaleX(1.0000);">84</div>
<div style="left:203.5px;top:581.235px;width:1.5px;height:0.8px;background:#606060;"></div>
<div class="t" style="left:206.30px;top:456.50px;font-size:6.5px;color:#c8c8c8;font-weight:normal;transform:scaleX(1.0000);">-4.5</div>
<div class="t" style="left:189.97px;top:597.57px;font-size:7px;color:#707070;font-weight:normal;transform:scaleX(1.0000);">-4.5</div>
<div style="left:174.0px;top:605px;width:44.5px;height:14px;background:#262626;"></div>
<div class="t" style="left:177.00px;top:609.24px;font-size:7.4px;color:#e4e4e4;font-weight:normal;transform:scaleX(1.0200);">Drums</div>
<div style="left:220.5px;top:369px;width:44.5px;height:250px;background:#2c2c2c;"></div>
<div style="left:222.3px;top:372px;width:14px;height:9px;background:#8c64c4;"></div>
<div class="t" style="left:227.35px;top:373.57px;font-size:7px;color:#3a3a3a;font-weight:normal;transform:scaleX(1.0000);">4</div>
<div class="t" style="left:240.00px;top:374.24px;font-size:7.4px;color:#ececec;font-weight:normal;transform:scaleX(0.8982);">Audio</div>
<div class="t" style="left:223.00px;top:386.94px;font-size:7.4px;color:#e4e4e4;font-weight:normal;transform:scaleX(0.8604);">Soundmapper</div>
<div class="t" style="left:233.50px;top:399.74px;font-size:7.4px;color:#e4e4e4;font-weight:normal;transform:scaleX(0.8401);">Master</div>
<svg style="position:absolute;left:222.5px;top:412.3px" width="10" height="10"><g transform="translate(5,5)"><rect x="-1" y="-4" width="2" height="8" fill="#f0f0f0" transform="rotate(0)"/><rect x="-1" y="-4" width="2" height="8" fill="#f0f0f0" transform="rotate(45)"/><rect x="-1" y="-4" width="2" height="8" fill="#f0f0f0" transform="rotate(90)"/><rect x="-1" y="-4" width="2" height="8" fill="#f0f0f0" transform="rotate(135)"/><circle r="2.88" fill="#f0f0f0"/><circle r="1.68" fill="#e0203a"/></g></svg>
<div class="t" style="left:234.50px;top:414.04px;font-size:7.4px;color:#ececec;font-weight:normal;transform:scaleX(0.8862);">Touch</div>
<div style="left:259.0px;top:416px;width:5px;height:3px;background:#e0e0e0;clip-path:polygon(0 0,100% 0,50% 100%);"></div>
<div style="left:223.5px;top:429.5px;width:40px;height:1.3px;background:#555555;"></div>
<div style="left:240.0px;top:425.5px;width:5.5px;height:9px;background:#8a8a8a;"></div>
<div style="left:242.0px;top:427px;width:1.5px;height:6px;background:#3a3a3a;"></div>
<div class="t" style="left:232.49px;top:437.07px;font-size:7px;color:#6a6a6a;font-weight:normal;transform:scaleX(1.0000);">Center</div>
<div style="left:223.0px;top:452.2px;width:9.0px;height:9.0px;background:#5a8cb4;border-radius:50%;"></div>
<div style="left:226.7px;top:453.7px;width:1.6px;height:6.0px;background:#1a2a3a;transform:rotate(-45deg);"></div>
<div style="left:228.0px;top:452.7px;width:4.05px;height:4.05px;background:#f0f0f0;border-radius:50%;"></div>
<div style="left:229.1px;top:453.8px;width:2.025px;height:2.025px;background:#303030;border-radius:50%;"></div>
<div style="left:223.0px;top:465.9px;width:9.0px;height:9.0px;background:#c8a848;border-radius:50%;"></div>
<div style="left:224.8px;top:467.7px;width:5.4px;height:5.4px;background:#4a4020;border-radius:50%;"></div>
<div style="left:226.0px;top:468.4px;width:3px;height:4px;background:transparent;border:1px solid #c8b050;border-radius:40%;box-sizing:border-box;"></div>
<div style="left:230.5px;top:465.9px;width:1.6px;height:4.5px;background:#f0f0f0;"></div>
<div style="left:230.5px;top:471.4px;width:1.6px;height:1.4px;background:#f0f0f0;"></div>
<svg style="position:absolute;left:222.5px;top:478.5px" width="11" height="11"><path d="M8.5,1.2 C6.5,0.2 5.2,1.5 4.6,4 L3,10 C2.6,11 1.5,11 0.8,10.3" stroke="#28c0f8" stroke-width="1.4" fill="none"/><path d="M2.5,4.5 L7,4.5" stroke="#28c0f8" stroke-width="1.1"/><circle cx="8" cy="7.8" r="2.6" fill="#f4f4f4" stroke="#2a2a2a" stroke-width="0.8"/><path d="M6.9,7.8 L7.8,8.7 L9.2,7" stroke="#333" stroke-width="0.8" fill="none"/></svg>
<div style="left:223.0px;top:491.7px;width:9.0px;height:9.0px;background:#d8d0d0;border-radius:50%;"></div>
<div style="left:224.8px;top:493.5px;width:5.4px;height:5.4px;background:#c02020;border-radius:50%;"></div>
<div style="left:222.5px;top:504.5px;width:10px;height:10px;background:#f4f4f4;"></div>
<div style="left:224.5px;top:506.5px;width:6px;height:6px;background:#1a1a1a;clip-path:polygon(0 30%,40% 30%,100% 0,100% 100%,40% 70%,0 70%);"></div>
<div style="left:222.7px;top:517.2px;width:9.6px;height:9.6px;background:#3a9ad8;border-radius:50%;"></div>
<div style="left:224.2px;top:518.7px;width:6.6px;height:6.6px;background:#f0f0f0;border-radius:50%;"></div>
<div style="left:224.2px;top:522px;width:6.6px;height:3.3px;background:#6a4a30;border-radius:0 0 5px 5px;"></div>
<div style="left:241.0px;top:456px;width:3px;height:135px;background:#464646;"></div>
<div style="left:242.0px;top:456px;width:1px;height:135px;background:#6e6e6e;"></div>
<div style="left:233.5px;top:458.0px;width:4px;height:0.8px;background:#363636;"></div>
<div style="left:233.5px;top:466.3px;width:4px;height:0.8px;background:#363636;"></div>
<div style="left:233.5px;top:474.6px;width:4px;height:0.8px;background:#363636;"></div>
<div style="left:233.5px;top:482.9px;width:4px;height:0.8px;background:#363636;"></div>
<div style="left:233.5px;top:491.2px;width:4px;height:0.8px;background:#363636;"></div>
<div style="left:233.5px;top:499.5px;width:4px;height:0.8px;background:#363636;"></div>
<div style="left:233.5px;top:507.8px;width:4px;height:0.8px;background:#363636;"></div>
<div style="left:233.5px;top:516.1px;width:4px;height:0.8px;background:#363636;"></div>
<div style="left:233.5px;top:524.4px;width:4px;height:0.8px;background:#363636;"></div>
<div style="left:233.5px;top:532.7px;width:4px;height:0.8px;background:#363636;"></div>
<div style="left:233.5px;top:541.0px;width:4px;height:0.8px;background:#363636;"></div>
<div style="left:233.5px;top:549.3px;width:4px;height:0.8px;background:#363636;"></div>
<div style="left:233.5px;top:557.6px;width:4px;height:0.8px;background:#363636;"></div>
<div style="left:233.5px;top:565.9px;width:4px;height:0.8px;background:#363636;"></div>
<div style="left:233.5px;top:574.2px;width:4px;height:0.8px;background:#363636;"></div>
<div style="left:233.5px;top:582.5px;width:4px;height:0.8px;background:#363636;"></div>
<div style="left:238.0px;top:524.2px;width:9px;height:12px;background:#d4d4d4;border-radius:1px;"></div>
<div style="left:240.0px;top:528.7px;width:5px;height:0.8px;background:#707070;"></div>
<div style="left:240.0px;top:530.4000000000001px;width:5px;height:0.8px;background:#707070;"></div>
<div style="left:240.0px;top:532.1px;width:5px;height:0.8px;background:#707070;"></div>
<div style="left:251.5px;top:465px;width:13px;height:6px;background:#6b3c3c;"></div>
<div style="left:251.5px;top:471px;width:13px;height:15px;background:#6e6a3e;"></div>
<div style="left:251.5px;top:486px;width:13px;height:105px;background:#3f6a48;"></div>
<div class="t" style="left:259.66px;top:470.82px;font-size:6px;color:#4a4630;font-weight:normal;transform:scaleX(1.0000);">6</div>
<div style="left:250.0px;top:473.4px;width:1.5px;height:0.8px;background:#606060;"></div>
<div class="t" style="left:256.33px;top:479.12px;font-size:6px;color:#4a4630;font-weight:normal;transform:scaleX(1.0000);">12</div>
<div style="left:250.0px;top:481.695px;width:1.5px;height:0.8px;background:#606060;"></div>
<div class="t" style="left:256.33px;top:487.41px;font-size:6px;color:#30402c;font-weight:normal;transform:scaleX(1.0000);">18</div>
<div style="left:250.0px;top:489.98999999999995px;width:1.5px;height:0.8px;background:#606060;"></div>
<div class="t" style="left:256.33px;top:495.71px;font-size:6px;color:#30402c;font-weight:normal;transform:scaleX(1.0000);">24</div>
<div style="left:250.0px;top:498.28499999999997px;width:1.5px;height:0.8px;background:#606060;"></div>
<div class="t" style="left:256.33px;top:504.00px;font-size:6px;color:#30402c;font-weight:normal;transform:scaleX(1.0000);">30</div>
<div style="left:250.0px;top:506.58px;width:1.5px;height:0.8px;background:#606060;"></div>
<div class="t" style="left:256.33px;top:512.30px;font-size:6px;color:#30402c;font-weight:normal;transform:scaleX(1.0000);">36</div>
<div style="left:250.0px;top:514.875px;width:1.5px;height:0.8px;background:#606060;"></div>
<div class="t" style="left:256.33px;top:520.59px;font-size:6px;color:#30402c;font-weight:normal;transform:scaleX(1.0000);">42</div>
<div style="left:250.0px;top:523.17px;width:1.5px;height:0.8px;background:#606060;"></div>
<div class="t" style="left:256.33px;top:528.89px;font-size:6px;color:#30402c;font-weight:normal;transform:scaleX(1.0000);">48</div>
<div style="left:250.0px;top:531.4649999999999px;width:1.5px;height:0.8px;background:#606060;"></div>
<div class="t" style="left:256.33px;top:537.18px;font-size:6px;color:#30402c;font-weight:normal;transform:scaleX(1.0000);">54</div>
<div style="left:250.0px;top:539.76px;width:1.5px;height:0.8px;background:#606060;"></div>
<div class="t" style="left:256.33px;top:545.48px;font-size:6px;color:#30402c;font-weight:normal;transform:scaleX(1.0000);">60</div>
<div style="left:250.0px;top:548.055px;width:1.5px;height:0.8px;background:#606060;"></div>
<div class="t" style="left:256.33px;top:553.77px;font-size:6px;color:#30402c;font-weight:normal;transform:scaleX(1.0000);">66</div>
<div style="left:250.0px;top:556.35px;width:1.5px;height:0.8px;background:#606060;"></div>
<div class="t" style="left:256.33px;top:562.07px;font-size:6px;color:#30402c;font-weight:normal;transform:scaleX(1.0000);">72</div>
<div style="left:250.0px;top:564.645px;width:1.5px;height:0.8px;background:#606060;"></div>
<div class="t" style="left:256.33px;top:570.36px;font-size:6px;color:#30402c;font-weight:normal;transform:scaleX(1.0000);">78</div>
<div style="left:250.0px;top:572.9399999999999px;width:1.5px;height:0.8px;background:#606060;"></div>
<div class="t" style="left:256.33px;top:578.66px;font-size:6px;color:#30402c;font-weight:normal;transform:scaleX(1.0000);">84</div>
<div style="left:250.0px;top:581.235px;width:1.5px;height:0.8px;background:#606060;"></div>
<div class="t" style="left:252.80px;top:456.50px;font-size:6.5px;color:#c8c8c8;font-weight:normal;transform:scaleX(1.0000);">-3.9</div>
<div class="t" style="left:236.47px;top:597.57px;font-size:7px;color:#707070;font-weight:normal;transform:scaleX(1.0000);">-3.9</div>
<div style="left:220.5px;top:605px;width:44.5px;height:14px;background:#262626;"></div>
<div class="t" style="left:223.50px;top:609.24px;font-size:7.4px;color:#e4e4e4;font-weight:normal;transform:scaleX(1.0200);">Drums H</div>
<div style="left:267.0px;top:369px;width:44.5px;height:250px;background:#2c2c2c;"></div>
<div style="left:268.8px;top:372px;width:14px;height:9px;background:#44a894;"></div>
<div class="t" style="left:273.85px;top:373.57px;font-size:7px;color:#3a3a3a;font-weight:normal;transform:scaleX(1.0000);">5</div>
<div class="t" style="left:286.50px;top:374.24px;font-size:7.4px;color:#ececec;font-weight:normal;transform:scaleX(0.8982);">Audio</div>
<div class="t" style="left:269.50px;top:386.94px;font-size:7.4px;color:#e4e4e4;font-weight:normal;transform:scaleX(0.8604);">Soundmapper</div>
<div class="t" style="left:280.00px;top:399.74px;font-size:7.4px;color:#e4e4e4;font-weight:normal;transform:scaleX(0.8401);">Master</div>
<svg style="position:absolute;left:269.0px;top:412.3px" width="10" height="10"><g transform="translate(5,5)"><rect x="-1" y="-4" width="2" height="8" fill="#f0f0f0" transform="rotate(0)"/><rect x="-1" y="-4" width="2" height="8" fill="#f0f0f0" transform="rotate(45)"/><rect x="-1" y="-4" width="2" height="8" fill="#f0f0f0" transform="rotate(90)"/><rect x="-1" y="-4" width="2" height="8" fill="#f0f0f0" transform="rotate(135)"/><circle r="2.88" fill="#f0f0f0"/><circle r="1.68" fill="#e0203a"/></g></svg>
<div class="t" style="left:281.00px;top:414.04px;font-size:7.4px;color:#ececec;font-weight:normal;transform:scaleX(0.8862);">Touch</div>
<div style="left:305.5px;top:416px;width:5px;height:3px;background:#e0e0e0;clip-path:polygon(0 0,100% 0,50% 100%);"></div>
<div style="left:270.0px;top:429.5px;width:40px;height:1.3px;background:#555555;"></div>
<div style="left:286.5px;top:425.5px;width:5.5px;height:9px;background:#8a8a8a;"></div>
<div style="left:288.5px;top:427px;width:1.5px;height:6px;background:#3a3a3a;"></div>
<div class="t" style="left:278.99px;top:437.07px;font-size:7px;color:#6a6a6a;font-weight:normal;transform:scaleX(1.0000);">Center</div>
<div style="left:269.5px;top:452.2px;width:9.0px;height:9.0px;background:#5a8cb4;border-radius:50%;"></div>
<div style="left:273.2px;top:453.7px;width:1.6px;height:6.0px;background:#1a2a3a;transform:rotate(-45deg);"></div>
<div style="left:274.5px;top:452.7px;width:4.05px;height:4.05px;background:#f0f0f0;border-radius:50%;"></div>
<div style="left:275.6px;top:453.8px;width:2.025px;height:2.025px;background:#303030;border-radius:50%;"></div>
<div style="left:269.5px;top:465.9px;width:9.0px;height:9.0px;background:#c8a848;border-radius:50%;"></div>
<div style="left:271.3px;top:467.7px;width:5.4px;height:5.4px;background:#4a4020;border-radius:50%;"></div>
<div style="left:272.5px;top:468.4px;width:3px;height:4px;background:transparent;border:1px solid #c8b050;border-radius:40%;box-sizing:border-box;"></div>
<div style="left:277.0px;top:465.9px;width:1.6px;height:4.5px;background:#f0f0f0;"></div>
<div style="left:277.0px;top:471.4px;width:1.6px;height:1.4px;background:#f0f0f0;"></div>
<svg style="position:absolute;left:269.0px;top:478.5px" width="11" height="11"><path d="M8.5,1.2 C6.5,0.2 5.2,1.5 4.6,4 L3,10 C2.6,11 1.5,11 0.8,10.3" stroke="#28c0f8" stroke-width="1.4" fill="none"/><path d="M2.5,4.5 L7,4.5" stroke="#28c0f8" stroke-width="1.1"/><circle cx="8" cy="7.8" r="2.6" fill="#f4f4f4" stroke="#2a2a2a" stroke-width="0.8"/><path d="M6.9,7.8 L7.8,8.7 L9.2,7" stroke="#333" stroke-width="0.8" fill="none"/></svg>
<div style="left:269.5px;top:491.7px;width:9.0px;height:9.0px;background:#d8d0d0;border-radius:50%;"></div>
<div style="left:271.3px;top:493.5px;width:5.4px;height:5.4px;background:#c02020;border-radius:50%;"></div>
<div style="left:269.0px;top:504.5px;width:10px;height:10px;background:#f4f4f4;"></div>
<div style="left:271.0px;top:506.5px;width:6px;height:6px;background:#1a1a1a;clip-path:polygon(0 30%,40% 30%,100% 0,100% 100%,40% 70%,0 70%);"></div>
<div style="left:269.2px;top:517.2px;width:9.6px;height:9.6px;background:#3a9ad8;border-radius:50%;"></div>
<div style="left:270.7px;top:518.7px;width:6.6px;height:6.6px;background:#f0f0f0;border-radius:50%;"></div>
<div style="left:270.7px;top:522px;width:6.6px;height:3.3px;background:#6a4a30;border-radius:0 0 5px 5px;"></div>
<div style="left:287.5px;top:456px;width:3px;height:135px;background:#464646;"></div>
<div style="left:288.5px;top:456px;width:1px;height:135px;background:#6e6e6e;"></div>
<div style="left:280.0px;top:458.0px;width:4px;height:0.8px;background:#363636;"></div>
<div style="left:280.0px;top:466.3px;width:4px;height:0.8px;background:#363636;"></div>
<div style="left:280.0px;top:474.6px;width:4px;height:0.8px;background:#363636;"></div>
<div style="left:280.0px;top:482.9px;width:4px;height:0.8px;background:#363636;"></div>
<div style="left:280.0px;top:491.2px;width:4px;height:0.8px;background:#363636;"></div>
<div style="left:280.0px;top:499.5px;width:4px;height:0.8px;background:#363636;"></div>
<div style="left:280.0px;top:507.8px;width:4px;height:0.8px;background:#363636;"></div>
<div style="left:280.0px;top:516.1px;width:4px;height:0.8px;background:#363636;"></div>
<div style="left:280.0px;top:524.4px;width:4px;height:0.8px;background:#363636;"></div>
<div style="left:280.0px;top:532.7px;width:4px;height:0.8px;background:#363636;"></div>
<div style="left:280.0px;top:541.0px;width:4px;height:0.8px;background:#363636;"></div>
<div style="left:280.0px;top:549.3px;width:4px;height:0.8px;background:#363636;"></div>
<div style="left:280.0px;top:557.6px;width:4px;height:0.8px;background:#363636;"></div>
<div style="left:280.0px;top:565.9px;width:4px;height:0.8px;background:#363636;"></div>
<div style="left:280.0px;top:574.2px;width:4px;height:0.8px;background:#363636;"></div>
<div style="left:280.0px;top:582.5px;width:4px;height:0.8px;background:#363636;"></div>
<div style="left:284.5px;top:535px;width:9px;height:12px;background:#d4d4d4;border-radius:1px;"></div>
<div style="left:286.5px;top:539.5px;width:5px;height:0.8px;background:#707070;"></div>
<div style="left:286.5px;top:541.2px;width:5px;height:0.8px;background:#707070;"></div>
<div style="left:286.5px;top:542.9px;width:5px;height:0.8px;background:#707070;"></div>
<div style="left:298.0px;top:465px;width:13px;height:6px;background:#6b3c3c;"></div>
<div style="left:298.0px;top:471px;width:13px;height:15px;background:#6e6a3e;"></div>
<div style="left:298.0px;top:486px;width:13px;height:105px;background:#3f6a48;"></div>
<div style="left:298.0px;top:534px;width:13px;height:57px;background:#22e03c;"></div>
<div class="t" style="left:306.16px;top:470.82px;font-size:6px;color:#4a4630;font-weight:normal;transform:scaleX(1.0000);">6</div>
<div style="left:296.5px;top:473.4px;width:1.5px;height:0.8px;background:#606060;"></div>
<div class="t" style="left:302.83px;top:479.12px;font-size:6px;color:#4a4630;font-weight:normal;transform:scaleX(1.0000);">12</div>
<div style="left:296.5px;top:481.695px;width:1.5px;height:0.8px;background:#606060;"></div>
<div class="t" style="left:302.83px;top:487.41px;font-size:6px;color:#30402c;font-weight:normal;transform:scaleX(1.0000);">18</div>
<div style="left:296.5px;top:489.98999999999995px;width:1.5px;height:0.8px;background:#606060;"></div>
<div class="t" style="left:302.83px;top:495.71px;font-size:6px;color:#30402c;font-weight:normal;transform:scaleX(1.0000);">24</div>
<div style="left:296.5px;top:498.28499999999997px;width:1.5px;height:0.8px;background:#606060;"></div>
<div class="t" style="left:302.83px;top:504.00px;font-size:6px;color:#30402c;font-weight:normal;transform:scaleX(1.0000);">30</div>
<div style="left:296.5px;top:506.58px;width:1.5px;height:0.8px;background:#606060;"></div>
<div class="t" style="left:302.83px;top:512.30px;font-size:6px;color:#30402c;font-weight:normal;transform:scaleX(1.0000);">36</div>
<div style="left:296.5px;top:514.875px;width:1.5px;height:0.8px;background:#606060;"></div>
<div class="t" style="left:302.83px;top:520.59px;font-size:6px;color:#30402c;font-weight:normal;transform:scaleX(1.0000);">42</div>
<div style="left:296.5px;top:523.17px;width:1.5px;height:0.8px;background:#606060;"></div>
<div class="t" style="left:302.83px;top:528.89px;font-size:6px;color:#30402c;font-weight:normal;transform:scaleX(1.0000);">48</div>
<div style="left:296.5px;top:531.4649999999999px;width:1.5px;height:0.8px;background:#606060;"></div>
<div class="t" style="left:302.83px;top:537.18px;font-size:6px;color:#154a1c;font-weight:normal;transform:scaleX(1.0000);">54</div>
<div style="left:296.5px;top:539.76px;width:1.5px;height:0.8px;background:#606060;"></div>
<div class="t" style="left:302.83px;top:545.48px;font-size:6px;color:#154a1c;font-weight:normal;transform:scaleX(1.0000);">60</div>
<div style="left:296.5px;top:548.055px;width:1.5px;height:0.8px;background:#606060;"></div>
<div class="t" style="left:302.83px;top:553.77px;font-size:6px;color:#154a1c;font-weight:normal;transform:scaleX(1.0000);">66</div>
<div style="left:296.5px;top:556.35px;width:1.5px;height:0.8px;background:#606060;"></div>
<div class="t" style="left:302.83px;top:562.07px;font-size:6px;color:#154a1c;font-weight:normal;transform:scaleX(1.0000);">72</div>
<div style="left:296.5px;top:564.645px;width:1.5px;height:0.8px;background:#606060;"></div>
<div class="t" style="left:302.83px;top:570.36px;font-size:6px;color:#154a1c;font-weight:normal;transform:scaleX(1.0000);">78</div>
<div style="left:296.5px;top:572.9399999999999px;width:1.5px;height:0.8px;background:#606060;"></div>
<div class="t" style="left:302.83px;top:578.66px;font-size:6px;color:#154a1c;font-weight:normal;transform:scaleX(1.0000);">84</div>
<div style="left:296.5px;top:581.235px;width:1.5px;height:0.8px;background:#606060;"></div>
<div class="t" style="left:295.68px;top:456.50px;font-size:6.5px;color:#c8c8c8;font-weight:normal;transform:scaleX(1.0000);">-13.0</div>
<div class="t" style="left:282.97px;top:597.57px;font-size:7px;color:#707070;font-weight:normal;transform:scaleX(1.0000);">-7.0</div>
<div style="left:267.0px;top:605px;width:44.5px;height:14px;background:#262626;"></div>
<div class="t" style="left:270.00px;top:609.24px;font-size:7.4px;color:#e4e4e4;font-weight:normal;transform:scaleX(1.0200);">Drums I</div>
<div style="left:313.5px;top:369px;width:44.5px;height:250px;background:#2c2c2c;"></div>
<div style="left:315.3px;top:372px;width:14px;height:9px;background:#b4ac64;"></div>
<div class="t" style="left:320.35px;top:373.57px;font-size:7px;color:#3a3a3a;font-weight:normal;transform:scaleX(1.0000);">6</div>
<div class="t" style="left:333.00px;top:374.24px;font-size:7.4px;color:#ececec;font-weight:normal;transform:scaleX(0.8982);">Audio</div>
<div class="t" style="left:316.00px;top:386.94px;font-size:7.4px;color:#e4e4e4;font-weight:normal;transform:scaleX(0.8604);">Soundmapper</div>
<div class="t" style="left:326.50px;top:399.74px;font-size:7.4px;color:#e4e4e4;font-weight:normal;transform:scaleX(0.8401);">Master</div>
<svg style="position:absolute;left:315.5px;top:412.3px" width="10" height="10"><g transform="translate(5,5)"><rect x="-1" y="-4" width="2" height="8" fill="#f0f0f0" transform="rotate(0)"/><rect x="-1" y="-4" width="2" height="8" fill="#f0f0f0" transform="rotate(45)"/><rect x="-1" y="-4" width="2" height="8" fill="#f0f0f0" transform="rotate(90)"/><rect x="-1" y="-4" width="2" height="8" fill="#f0f0f0" transform="rotate(135)"/><circle r="2.88" fill="#f0f0f0"/><circle r="1.68" fill="#e0203a"/></g></svg>
<div class="t" style="left:327.50px;top:414.04px;font-size:7.4px;color:#ececec;font-weight:normal;transform:scaleX(0.8862);">Touch</div>
<div style="left:352.0px;top:416px;width:5px;height:3px;background:#e0e0e0;clip-path:polygon(0 0,100% 0,50% 100%);"></div>
<div style="left:316.5px;top:429.5px;width:40px;height:1.3px;background:#555555;"></div>
<div style="left:333.0px;top:425.5px;width:5.5px;height:9px;background:#8a8a8a;"></div>
<div style="left:335.0px;top:427px;width:1.5px;height:6px;background:#3a3a3a;"></div>
<div class="t" style="left:325.49px;top:437.07px;font-size:7px;color:#6a6a6a;font-weight:normal;transform:scaleX(1.0000);">Center</div>
<div style="left:316.0px;top:452.2px;width:9.0px;height:9.0px;background:#5a8cb4;border-radius:50%;"></div>
<div style="left:319.7px;top:453.7px;width:1.6px;height:6.0px;background:#1a2a3a;transform:rotate(-45deg);"></div>
<div style="left:321.0px;top:452.7px;width:4.05px;height:4.05px;background:#f0f0f0;border-radius:50%;"></div>
<div style="left:322.1px;top:453.8px;width:2.025px;height:2.025px;background:#303030;border-radius:50%;"></div>
<div style="left:316.0px;top:465.9px;width:9.0px;height:9.0px;background:#c8a848;border-radius:50%;"></div>
<div style="left:317.8px;top:467.7px;width:5.4px;height:5.4px;background:#4a4020;border-radius:50%;"></div>
<div style="left:319.0px;top:468.4px;width:3px;height:4px;background:transparent;border:1px solid #c8b050;border-radius:40%;box-sizing:border-box;"></div>
<div style="left:323.5px;top:465.9px;width:1.6px;height:4.5px;background:#f0f0f0;"></div>
<div style="left:323.5px;top:471.4px;width:1.6px;height:1.4px;background:#f0f0f0;"></div>
<svg style="position:absolute;left:315.5px;top:478.5px" width="11" height="11"><path d="M8.5,1.2 C6.5,0.2 5.2,1.5 4.6,4 L3,10 C2.6,11 1.5,11 0.8,10.3" stroke="#28c0f8" stroke-width="1.4" fill="none"/><path d="M2.5,4.5 L7,4.5" stroke="#28c0f8" stroke-width="1.1"/><circle cx="8" cy="7.8" r="2.6" fill="#f4f4f4" stroke="#2a2a2a" stroke-width="0.8"/><path d="M6.9,7.8 L7.8,8.7 L9.2,7" stroke="#333" stroke-width="0.8" fill="none"/></svg>
<div style="left:316.0px;top:491.7px;width:9.0px;height:9.0px;background:#d8d0d0;border-radius:50%;"></div>
<div style="left:317.8px;top:493.5px;width:5.4px;height:5.4px;background:#c02020;border-radius:50%;"></div>
<div style="left:315.5px;top:504.5px;width:10px;height:10px;background:#f4f4f4;"></div>
<div style="left:317.5px;top:506.5px;width:6px;height:6px;background:#1a1a1a;clip-path:polygon(0 30%,40% 30%,100% 0,100% 100%,40% 70%,0 70%);"></div>
<div style="left:315.7px;top:517.2px;width:9.6px;height:9.6px;background:#3a9ad8;border-radius:50%;"></div>
<div style="left:317.2px;top:518.7px;width:6.6px;height:6.6px;background:#f0f0f0;border-radius:50%;"></div>
<div style="left:317.2px;top:522px;width:6.6px;height:3.3px;background:#6a4a30;border-radius:0 0 5px 5px;"></div>
<div style="left:334.0px;top:456px;width:3px;height:135px;background:#464646;"></div>
<div style="left:335.0px;top:456px;width:1px;height:135px;background:#6e6e6e;"></div>
<div style="left:326.5px;top:458.0px;width:4px;height:0.8px;background:#363636;"></div>
<div style="left:326.5px;top:466.3px;width:4px;height:0.8px;background:#363636;"></div>
<div style="left:326.5px;top:474.6px;width:4px;height:0.8px;background:#363636;"></div>
<div style="left:326.5px;top:482.9px;width:4px;height:0.8px;background:#363636;"></div>
<div style="left:326.5px;top:491.2px;width:4px;height:0.8px;background:#363636;"></div>
<div style="left:326.5px;top:499.5px;width:4px;height:0.8px;background:#363636;"></div>
<div style="left:326.5px;top:507.8px;width:4px;height:0.8px;background:#363636;"></div>
<div style="left:326.5px;top:516.1px;width:4px;height:0.8px;background:#363636;"></div>
<div style="left:326.5px;top:524.4px;width:4px;height:0.8px;background:#363636;"></div>
<div style="left:326.5px;top:532.7px;width:4px;height:0.8px;background:#363636;"></div>
<div style="left:326.5px;top:541.0px;width:4px;height:0.8px;background:#363636;"></div>
<div style="left:326.5px;top:549.3px;width:4px;height:0.8px;background:#363636;"></div>
<div style="left:326.5px;top:557.6px;width:4px;height:0.8px;background:#363636;"></div>
<div style="left:326.5px;top:565.9px;width:4px;height:0.8px;background:#363636;"></div>
<div style="left:326.5px;top:574.2px;width:4px;height:0.8px;background:#363636;"></div>
<div style="left:326.5px;top:582.5px;width:4px;height:0.8px;background:#363636;"></div>
<div style="left:331.0px;top:535px;width:9px;height:12px;background:#d4d4d4;border-radius:1px;"></div>
<div style="left:333.0px;top:539.5px;width:5px;height:0.8px;background:#707070;"></div>
<div style="left:333.0px;top:541.2px;width:5px;height:0.8px;background:#707070;"></div>
<div style="left:333.0px;top:542.9px;width:5px;height:0.8px;background:#707070;"></div>
<div style="left:344.5px;top:465px;width:13px;height:6px;background:#6b3c3c;"></div>
<div style="left:344.5px;top:471px;width:13px;height:15px;background:#6e6a3e;"></div>
<div style="left:344.5px;top:486px;width:13px;height:105px;background:#3f6a48;"></div>
<div class="t" style="left:352.66px;top:470.82px;font-size:6px;color:#4a4630;font-weight:normal;transform:scaleX(1.0000);">6</div>
<div style="left:343.0px;top:473.4px;width:1.5px;height:0.8px;background:#606060;"></div>
<div class="t" style="left:349.33px;top:479.12px;font-size:6px;color:#4a4630;font-weight:normal;transform:scaleX(1.0000);">12</div>
<div style="left:343.0px;top:481.695px;width:1.5px;height:0.8px;background:#606060;"></div>
<div class="t" style="left:349.33px;top:487.41px;font-size:6px;color:#30402c;font-weight:normal;transform:scaleX(1.0000);">18</div>
<div style="left:343.0px;top:489.98999999999995px;width:1.5px;height:0.8px;background:#606060;"></div>
<div class="t" style="left:349.33px;top:495.71px;font-size:6px;color:#30402c;font-weight:normal;transform:scaleX(1.0000);">24</div>
<div style="left:343.0px;top:498.28499999999997px;width:1.5px;height:0.8px;background:#606060;"></div>
<div class="t" style="left:349.33px;top:504.00px;font-size:6px;color:#30402c;font-weight:normal;transform:scaleX(1.0000);">30</div>
<div style="left:343.0px;top:506.58px;width:1.5px;height:0.8px;background:#606060;"></div>
<div class="t" style="left:349.33px;top:512.30px;font-size:6px;color:#30402c;font-weight:normal;transform:scaleX(1.0000);">36</div>
<div style="left:343.0px;top:514.875px;width:1.5px;height:0.8px;background:#606060;"></div>
<div class="t" style="left:349.33px;top:520.59px;font-size:6px;color:#30402c;font-weight:normal;transform:scaleX(1.0000);">42</div>
<div style="left:343.0px;top:523.17px;width:1.5px;height:0.8px;background:#606060;"></div>
<div class="t" style="left:349.33px;top:528.89px;font-size:6px;color:#30402c;font-weight:normal;transform:scaleX(1.0000);">48</div>
<div style="left:343.0px;top:531.4649999999999px;width:1.5px;height:0.8px;background:#606060;"></div>
<div class="t" style="left:349.33px;top:537.18px;font-size:6px;color:#30402c;font-weight:normal;transform:scaleX(1.0000);">54</div>
<div style="left:343.0px;top:539.76px;width:1.5px;height:0.8px;background:#606060;"></div>
<div class="t" style="left:349.33px;top:545.48px;font-size:6px;color:#30402c;font-weight:normal;transform:scaleX(1.0000);">60</div>
<div style="left:343.0px;top:548.055px;width:1.5px;height:0.8px;background:#606060;"></div>
<div class="t" style="left:349.33px;top:553.77px;font-size:6px;color:#30402c;font-weight:normal;transform:scaleX(1.0000);">66</div>
<div style="left:343.0px;top:556.35px;width:1.5px;height:0.8px;background:#606060;"></div>
<div class="t" style="left:349.33px;top:562.07px;font-size:6px;color:#30402c;font-weight:normal;transform:scaleX(1.0000);">72</div>
<div style="left:343.0px;top:564.645px;width:1.5px;height:0.8px;background:#606060;"></div>
<div class="t" style="left:349.33px;top:570.36px;font-size:6px;color:#30402c;font-weight:normal;transform:scaleX(1.0000);">78</div>
<div style="left:343.0px;top:572.9399999999999px;width:1.5px;height:0.8px;background:#606060;"></div>
<div class="t" style="left:349.33px;top:578.66px;font-size:6px;color:#30402c;font-weight:normal;transform:scaleX(1.0000);">84</div>
<div style="left:343.0px;top:581.235px;width:1.5px;height:0.8px;background:#606060;"></div>
<div class="t" style="left:342.18px;top:456.50px;font-size:6.5px;color:#c8c8c8;font-weight:normal;transform:scaleX(1.0000);">-10.4</div>
<div class="t" style="left:329.47px;top:597.57px;font-size:7px;color:#707070;font-weight:normal;transform:scaleX(1.0000);">-7.0</div>
<div style="left:313.5px;top:605px;width:44.5px;height:14px;background:#262626;"></div>
<div class="t" style="left:316.50px;top:609.24px;font-size:7.4px;color:#e4e4e4;font-weight:normal;transform:scaleX(0.9318);">Electric Gui...</div>
<div style="left:360.0px;top:369px;width:44.5px;height:250px;background:#3a5458;"></div>
<div style="left:361.8px;top:372px;width:14px;height:9px;background:#6a88c8;"></div>
<div class="t" style="left:366.85px;top:373.57px;font-size:7px;color:#2a3a5a;font-weight:normal;transform:scaleX(1.0000);">7</div>
<div class="t" style="left:379.50px;top:374.24px;font-size:7.4px;color:#ececec;font-weight:normal;transform:scaleX(0.8982);">Audio</div>
<div class="t" style="left:362.50px;top:386.94px;font-size:7.4px;color:#e4e4e4;font-weight:normal;transform:scaleX(0.8604);">Soundmapper</div>
<div class="t" style="left:373.00px;top:399.74px;font-size:7.4px;color:#e4e4e4;font-weight:normal;transform:scaleX(0.8401);">Master</div>
<svg style="position:absolute;left:362.0px;top:412.3px" width="10" height="10"><g transform="translate(5,5)"><rect x="-1" y="-4" width="2" height="8" fill="#f0f0f0" transform="rotate(0)"/><rect x="-1" y="-4" width="2" height="8" fill="#f0f0f0" transform="rotate(45)"/><rect x="-1" y="-4" width="2" height="8" fill="#f0f0f0" transform="rotate(90)"/><rect x="-1" y="-4" width="2" height="8" fill="#f0f0f0" transform="rotate(135)"/><circle r="2.88" fill="#f0f0f0"/><circle r="1.68" fill="#e0203a"/></g></svg>
<div class="t" style="left:374.00px;top:414.04px;font-size:7.4px;color:#ececec;font-weight:normal;transform:scaleX(0.8862);">Touch</div>
<div style="left:398.5px;top:416px;width:5px;height:3px;background:#e0e0e0;clip-path:polygon(0 0,100% 0,50% 100%);"></div>
<div style="left:363.0px;top:429.5px;width:40px;height:1.3px;background:#5a6a6c;"></div>
<div style="left:379.5px;top:425.5px;width:5.5px;height:9px;background:#7a8a8a;"></div>
<div style="left:381.5px;top:427px;width:1.5px;height:6px;background:#3a3a3a;"></div>
<div class="t" style="left:371.99px;top:437.07px;font-size:7px;color:#6a7a7c;font-weight:normal;transform:scaleX(1.0000);">Center</div>
<div style="left:362.5px;top:452.2px;width:9.0px;height:9.0px;background:#5a8cb4;border-radius:50%;"></div>
<div style="left:366.2px;top:453.7px;width:1.6px;height:6.0px;background:#1a2a3a;transform:rotate(-45deg);"></div>
<div style="left:367.5px;top:452.7px;width:4.05px;height:4.05px;background:#f0f0f0;border-radius:50%;"></div>
<div style="left:368.6px;top:453.8px;width:2.025px;height:2.025px;background:#303030;border-radius:50%;"></div>
<div style="left:362.5px;top:465.9px;width:9.0px;height:9.0px;background:#c8a848;border-radius:50%;"></div>
<div style="left:364.3px;top:467.7px;width:5.4px;height:5.4px;background:#4a4020;border-radius:50%;"></div>
<div style="left:365.5px;top:468.4px;width:3px;height:4px;background:transparent;border:1px solid #c8b050;border-radius:40%;box-sizing:border-box;"></div>
<div style="left:370.0px;top:465.9px;width:1.6px;height:4.5px;background:#f0f0f0;"></div>
<div style="left:370.0px;top:471.4px;width:1.6px;height:1.4px;background:#f0f0f0;"></div>
<svg style="position:absolute;left:362.0px;top:478.5px" width="11" height="11"><path d="M8.5,1.2 C6.5,0.2 5.2,1.5 4.6,4 L3,10 C2.6,11 1.5,11 0.8,10.3" stroke="#28c0f8" stroke-width="1.4" fill="none"/><path d="M2.5,4.5 L7,4.5" stroke="#28c0f8" stroke-width="1.1"/><circle cx="8" cy="7.8" r="2.6" fill="#f4f4f4" stroke="#2a2a2a" stroke-width="0.8"/><path d="M6.9,7.8 L7.8,8.7 L9.2,7" stroke="#333" stroke-width="0.8" fill="none"/></svg>
<div style="left:362.5px;top:491.7px;width:9.0px;height:9.0px;background:#d8d0d0;border-radius:50%;"></div>
<div style="left:364.3px;top:493.5px;width:5.4px;height:5.4px;background:#c02020;border-radius:50%;"></div>
<div style="left:362.0px;top:504.5px;width:10px;height:10px;background:#f4f4f4;"></div>
<div style="left:364.0px;top:506.5px;width:6px;height:6px;background:#1a1a1a;clip-path:polygon(0 30%,40% 30%,100% 0,100% 100%,40% 70%,0 70%);"></div>
<div style="left:362.2px;top:517.2px;width:9.6px;height:9.6px;background:#3a9ad8;border-radius:50%;"></div>
<div style="left:363.7px;top:518.7px;width:6.6px;height:6.6px;background:#f0f0f0;border-radius:50%;"></div>
<div style="left:363.7px;top:522px;width:6.6px;height:3.3px;background:#6a4a30;border-radius:0 0 5px 5px;"></div>
<div style="left:380.5px;top:456px;width:3px;height:135px;background:#464646;"></div>
<div style="left:381.5px;top:456px;width:1px;height:135px;background:#6e6e6e;"></div>
<div style="left:373.0px;top:458.0px;width:4px;height:0.8px;background:#363636;"></div>
<div style="left:373.0px;top:466.3px;width:4px;height:0.8px;background:#363636;"></div>
<div style="left:373.0px;top:474.6px;width:4px;height:0.8px;background:#363636;"></div>
<div style="left:373.0px;top:482.9px;width:4px;height:0.8px;background:#363636;"></div>
<div style="left:373.0px;top:491.2px;width:4px;height:0.8px;background:#363636;"></div>
<div style="left:373.0px;top:499.5px;width:4px;height:0.8px;background:#363636;"></div>
<div style="left:373.0px;top:507.8px;width:4px;height:0.8px;background:#363636;"></div>
<div style="left:373.0px;top:516.1px;width:4px;height:0.8px;background:#363636;"></div>
<div style="left:373.0px;top:524.4px;width:4px;height:0.8px;background:#363636;"></div>
<div style="left:373.0px;top:532.7px;width:4px;height:0.8px;background:#363636;"></div>
<div style="left:373.0px;top:541.0px;width:4px;height:0.8px;background:#363636;"></div>
<div style="left:373.0px;top:549.3px;width:4px;height:0.8px;background:#363636;"></div>
<div style="left:373.0px;top:557.6px;width:4px;height:0.8px;background:#363636;"></div>
<div style="left:373.0px;top:565.9px;width:4px;height:0.8px;background:#363636;"></div>
<div style="left:373.0px;top:574.2px;width:4px;height:0.8px;background:#363636;"></div>
<div style="left:373.0px;top:582.5px;width:4px;height:0.8px;background:#363636;"></div>
<div style="left:377.5px;top:535px;width:9px;height:12px;background:#d4d4d4;border-radius:1px;"></div>
<div style="left:379.5px;top:539.5px;width:5px;height:0.8px;background:#707070;"></div>
<div style="left:379.5px;top:541.2px;width:5px;height:0.8px;background:#707070;"></div>
<div style="left:379.5px;top:542.9px;width:5px;height:0.8px;background:#707070;"></div>
<div style="left:391.0px;top:465px;width:13px;height:6px;background:#6b3c3c;"></div>
<div style="left:391.0px;top:471px;width:13px;height:15px;background:#6e6a3e;"></div>
<div style="left:391.0px;top:486px;width:13px;height:105px;background:#3f6a48;"></div>
<div style="left:391.0px;top:486px;width:13px;height:105px;background:#22e03c;"></div>
<div class="t" style="left:399.16px;top:470.82px;font-size:6px;color:#4a4630;font-weight:normal;transform:scaleX(1.0000);">6</div>
<div style="left:389.5px;top:473.4px;width:1.5px;height:0.8px;background:#606060;"></div>
<div class="t" style="left:395.83px;top:479.12px;font-size:6px;color:#4a4630;font-weight:normal;transform:scaleX(1.0000);">12</div>
<div style="left:389.5px;top:481.695px;width:1.5px;height:0.8px;background:#606060;"></div>
<div class="t" style="left:395.83px;top:487.41px;font-size:6px;color:#154a1c;font-weight:normal;transform:scaleX(1.0000);">18</div>
<div style="left:389.5px;top:489.98999999999995px;width:1.5px;height:0.8px;background:#606060;"></div>
<div class="t" style="left:395.83px;top:495.71px;font-size:6px;color:#154a1c;font-weight:normal;transform:scaleX(1.0000);">24</div>
<div style="left:389.5px;top:498.28499999999997px;width:1.5px;height:0.8px;background:#606060;"></div>
<div class="t" style="left:395.83px;top:504.00px;font-size:6px;color:#154a1c;font-weight:normal;transform:scaleX(1.0000);">30</div>
<div style="left:389.5px;top:506.58px;width:1.5px;height:0.8px;background:#606060;"></div>
<div class="t" style="left:395.83px;top:512.30px;font-size:6px;color:#154a1c;font-weight:normal;transform:scaleX(1.0000);">36</div>
<div style="left:389.5px;top:514.875px;width:1.5px;height:0.8px;background:#606060;"></div>
<div class="t" style="left:395.83px;top:520.59px;font-size:6px;color:#154a1c;font-weight:normal;transform:scaleX(1.0000);">42</div>
<div style="left:389.5px;top:523.17px;width:1.5px;height:0.8px;background:#606060;"></div>
<div class="t" style="left:395.83px;top:528.89px;font-size:6px;color:#154a1c;font-weight:normal;transform:scaleX(1.0000);">48</div>
<div style="left:389.5px;top:531.4649999999999px;width:1.5px;height:0.8px;background:#606060;"></div>
<div class="t" style="left:395.83px;top:537.18px;font-size:6px;color:#154a1c;font-weight:normal;transform:scaleX(1.0000);">54</div>
<div style="left:389.5px;top:539.76px;width:1.5px;height:0.8px;background:#606060;"></div>
<div class="t" style="left:395.83px;top:545.48px;font-size:6px;color:#154a1c;font-weight:normal;transform:scaleX(1.0000);">60</div>
<div style="left:389.5px;top:548.055px;width:1.5px;height:0.8px;background:#606060;"></div>
<div class="t" style="left:395.83px;top:553.77px;font-size:6px;color:#154a1c;font-weight:normal;transform:scaleX(1.0000);">66</div>
<div style="left:389.5px;top:556.35px;width:1.5px;height:0.8px;background:#606060;"></div>
<div class="t" style="left:395.83px;top:562.07px;font-size:6px;color:#154a1c;font-weight:normal;transform:scaleX(1.0000);">72</div>
<div style="left:389.5px;top:564.645px;width:1.5px;height:0.8px;background:#606060;"></div>
<div class="t" style="left:395.83px;top:570.36px;font-size:6px;color:#154a1c;font-weight:normal;transform:scaleX(1.0000);">78</div>
<div style="left:389.5px;top:572.9399999999999px;width:1.5px;height:0.8px;background:#606060;"></div>
<div class="t" style="left:395.83px;top:578.66px;font-size:6px;color:#154a1c;font-weight:normal;transform:scaleX(1.0000);">84</div>
<div style="left:389.5px;top:581.235px;width:1.5px;height:0.8px;background:#606060;"></div>
<div class="t" style="left:392.30px;top:456.50px;font-size:6.5px;color:#c8c8c8;font-weight:normal;transform:scaleX(1.0000);">-7.9</div>
<div class="t" style="left:375.97px;top:597.57px;font-size:7px;color:#707070;font-weight:normal;transform:scaleX(1.0000);">-7.0</div>
<div style="left:360.0px;top:605px;width:44.5px;height:14px;background:#3a5458;"></div>
<div class="t" style="left:363.00px;top:609.24px;font-size:7.4px;color:#e4e4e4;font-weight:normal;transform:scaleX(0.9774);">Acoustic G...</div>
<div style="left:406.5px;top:369px;width:44.5px;height:250px;background:#2c2c2c;"></div>
<div style="left:408.3px;top:372px;width:14px;height:9px;background:#74d488;"></div>
<div class="t" style="left:413.35px;top:373.57px;font-size:7px;color:#3a3a3a;font-weight:normal;transform:scaleX(1.0000);">8</div>
<div class="t" style="left:426.00px;top:374.24px;font-size:7.4px;color:#ececec;font-weight:normal;transform:scaleX(0.8982);">Audio</div>
<div class="t" style="left:409.00px;top:386.94px;font-size:7.4px;color:#e4e4e4;font-weight:normal;transform:scaleX(0.8604);">Soundmapper</div>
<div class="t" style="left:419.50px;top:399.74px;font-size:7.4px;color:#e4e4e4;font-weight:normal;transform:scaleX(0.8401);">Master</div>
<svg style="position:absolute;left:408.5px;top:412.3px" width="10" height="10"><g transform="translate(5,5)"><rect x="-1" y="-4" width="2" height="8" fill="#f0f0f0" transform="rotate(0)"/><rect x="-1" y="-4" width="2" height="8" fill="#f0f0f0" transform="rotate(45)"/><rect x="-1" y="-4" width="2" height="8" fill="#f0f0f0" transform="rotate(90)"/><rect x="-1" y="-4" width="2" height="8" fill="#f0f0f0" transform="rotate(135)"/><circle r="2.88" fill="#f0f0f0"/><circle r="1.68" fill="#e0203a"/></g></svg>
<div class="t" style="left:420.50px;top:414.04px;font-size:7.4px;color:#ececec;font-weight:normal;transform:scaleX(0.8862);">Touch</div>
<div style="left:445.0px;top:416px;width:5px;height:3px;background:#e0e0e0;clip-path:polygon(0 0,100% 0,50% 100%);"></div>
<div style="left:409.5px;top:429.5px;width:40px;height:1.3px;background:#555555;"></div>
<div style="left:426.0px;top:425.5px;width:5.5px;height:9px;background:#8a8a8a;"></div>
<div style="left:428.0px;top:427px;width:1.5px;height:6px;background:#3a3a3a;"></div>
<div class="t" style="left:418.49px;top:437.07px;font-size:7px;color:#6a6a6a;font-weight:normal;transform:scaleX(1.0000);">Center</div>
<div style="left:409.0px;top:452.2px;width:9.0px;height:9.0px;background:#5a8cb4;border-radius:50%;"></div>
<div style="left:412.7px;top:453.7px;width:1.6px;height:6.0px;background:#1a2a3a;transform:rotate(-45deg);"></div>
<div style="left:414.0px;top:452.7px;width:4.05px;height:4.05px;background:#f0f0f0;border-radius:50%;"></div>
<div style="left:415.1px;top:453.8px;width:2.025px;height:2.025px;background:#303030;border-radius:50%;"></div>
<div style="left:409.0px;top:465.9px;width:9.0px;height:9.0px;background:#c8a848;border-radius:50%;"></div>
<div style="left:410.8px;top:467.7px;width:5.4px;height:5.4px;background:#4a4020;border-radius:50%;"></div>
<div style="left:412.0px;top:468.4px;width:3px;height:4px;background:transparent;border:1px solid #c8b050;border-radius:40%;box-sizing:border-box;"></div>
<div style="left:416.5px;top:465.9px;width:1.6px;height:4.5px;background:#f0f0f0;"></div>
<div style="left:416.5px;top:471.4px;width:1.6px;height:1.4px;background:#f0f0f0;"></div>
<svg style="position:absolute;left:408.5px;top:478.5px" width="11" height="11"><path d="M8.5,1.2 C6.5,0.2 5.2,1.5 4.6,4 L3,10 C2.6,11 1.5,11 0.8,10.3" stroke="#28c0f8" stroke-width="1.4" fill="none"/><path d="M2.5,4.5 L7,4.5" stroke="#28c0f8" stroke-width="1.1"/><circle cx="8" cy="7.8" r="2.6" fill="#f4f4f4" stroke="#2a2a2a" stroke-width="0.8"/><path d="M6.9,7.8 L7.8,8.7 L9.2,7" stroke="#333" stroke-width="0.8" fill="none"/></svg>
<div style="left:409.0px;top:491.7px;width:9.0px;height:9.0px;background:#d8d0d0;border-radius:50%;"></div>
<div style="left:410.8px;top:493.5px;width:5.4px;height:5.4px;background:#c02020;border-radius:50%;"></div>
<div style="left:408.5px;top:504.5px;width:10px;height:10px;background:#f4f4f4;"></div>
<div style="left:410.5px;top:506.5px;width:6px;height:6px;background:#1a1a1a;clip-path:polygon(0 30%,40% 30%,100% 0,100% 100%,40% 70%,0 70%);"></div>
<div style="left:408.7px;top:517.2px;width:9.6px;height:9.6px;background:#3a9ad8;border-radius:50%;"></div>
<div style="left:410.2px;top:518.7px;width:6.6px;height:6.6px;background:#f0f0f0;border-radius:50%;"></div>
<div style="left:410.2px;top:522px;width:6.6px;height:3.3px;background:#6a4a30;border-radius:0 0 5px 5px;"></div>
<div style="left:427.0px;top:456px;width:3px;height:135px;background:#464646;"></div>
<div style="left:428.0px;top:456px;width:1px;height:135px;background:#6e6e6e;"></div>
<div style="left:419.5px;top:458.0px;width:4px;height:0.8px;background:#363636;"></div>
<div style="left:419.5px;top:466.3px;width:4px;height:0.8px;background:#363636;"></div>
<div style="left:419.5px;top:474.6px;width:4px;height:0.8px;background:#363636;"></div>
<div style="left:419.5px;top:482.9px;width:4px;height:0.8px;background:#363636;"></div>
<div style="left:419.5px;top:491.2px;width:4px;height:0.8px;background:#363636;"></div>
<div style="left:419.5px;top:499.5px;width:4px;height:0.8px;background:#363636;"></div>
<div style="left:419.5px;top:507.8px;width:4px;height:0.8px;background:#363636;"></div>
<div style="left:419.5px;top:516.1px;width:4px;height:0.8px;background:#363636;"></div>
<div style="left:419.5px;top:524.4px;width:4px;height:0.8px;background:#363636;"></div>
<div style="left:419.5px;top:532.7px;width:4px;height:0.8px;background:#363636;"></div>
<div style="left:419.5px;top:541.0px;width:4px;height:0.8px;background:#363636;"></div>
<div style="left:419.5px;top:549.3px;width:4px;height:0.8px;background:#363636;"></div>
<div style="left:419.5px;top:557.6px;width:4px;height:0.8px;background:#363636;"></div>
<div style="left:419.5px;top:565.9px;width:4px;height:0.8px;background:#363636;"></div>
<div style="left:419.5px;top:574.2px;width:4px;height:0.8px;background:#363636;"></div>
<div style="left:419.5px;top:582.5px;width:4px;height:0.8px;background:#363636;"></div>
<div style="left:424.0px;top:535px;width:9px;height:12px;background:#d4d4d4;border-radius:1px;"></div>
<div style="left:426.0px;top:539.5px;width:5px;height:0.8px;background:#707070;"></div>
<div style="left:426.0px;top:541.2px;width:5px;height:0.8px;background:#707070;"></div>
<div style="left:426.0px;top:542.9px;width:5px;height:0.8px;background:#707070;"></div>
<div style="left:437.5px;top:465px;width:13px;height:6px;background:#6b3c3c;"></div>
<div style="left:437.5px;top:471px;width:13px;height:15px;background:#6e6a3e;"></div>
<div style="left:437.5px;top:486px;width:13px;height:105px;background:#3f6a48;"></div>
<div style="left:437.5px;top:484px;width:13px;height:2px;background:#e8e020;"></div>
<div style="left:437.5px;top:486px;width:13px;height:105px;background:#22e03c;"></div>
<div class="t" style="left:445.66px;top:470.82px;font-size:6px;color:#4a4630;font-weight:normal;transform:scaleX(1.0000);">6</div>
<div style="left:436.0px;top:473.4px;width:1.5px;height:0.8px;background:#606060;"></div>
<div class="t" style="left:442.33px;top:479.12px;font-size:6px;color:#4a4630;font-weight:normal;transform:scaleX(1.0000);">12</div>
<div style="left:436.0px;top:481.695px;width:1.5px;height:0.8px;background:#606060;"></div>
<div class="t" style="left:442.33px;top:487.41px;font-size:6px;color:#154a1c;font-weight:normal;transform:scaleX(1.0000);">18</div>
<div style="left:436.0px;top:489.98999999999995px;width:1.5px;height:0.8px;background:#606060;"></div>
<div class="t" style="left:442.33px;top:495.71px;font-size:6px;color:#154a1c;font-weight:normal;transform:scaleX(1.0000);">24</div>
<div style="left:436.0px;top:498.28499999999997px;width:1.5px;height:0.8px;background:#606060;"></div>
<div class="t" style="left:442.33px;top:504.00px;font-size:6px;color:#154a1c;font-weight:normal;transform:scaleX(1.0000);">30</div>
<div style="left:436.0px;top:506.58px;width:1.5px;height:0.8px;background:#606060;"></div>
<div class="t" style="left:442.33px;top:512.30px;font-size:6px;color:#154a1c;font-weight:normal;transform:scaleX(1.0000);">36</div>
<div style="left:436.0px;top:514.875px;width:1.5px;height:0.8px;background:#606060;"></div>
<div class="t" style="left:442.33px;top:520.59px;font-size:6px;color:#154a1c;font-weight:normal;transform:scaleX(1.0000);">42</div>
<div style="left:436.0px;top:523.17px;width:1.5px;height:0.8px;background:#606060;"></div>
<div class="t" style="left:442.33px;top:528.89px;font-size:6px;color:#154a1c;font-weight:normal;transform:scaleX(1.0000);">48</div>
<div style="left:436.0px;top:531.4649999999999px;width:1.5px;height:0.8px;background:#606060;"></div>
<div class="t" style="left:442.33px;top:537.18px;font-size:6px;color:#154a1c;font-weight:normal;transform:scaleX(1.0000);">54</div>
<div style="left:436.0px;top:539.76px;width:1.5px;height:0.8px;background:#606060;"></div>
<div class="t" style="left:442.33px;top:545.48px;font-size:6px;color:#154a1c;font-weight:normal;transform:scaleX(1.0000);">60</div>
<div style="left:436.0px;top:548.055px;width:1.5px;height:0.8px;background:#606060;"></div>
<div class="t" style="left:442.33px;top:553.77px;font-size:6px;color:#154a1c;font-weight:normal;transform:scaleX(1.0000);">66</div>
<div style="left:436.0px;top:556.35px;width:1.5px;height:0.8px;background:#606060;"></div>
<div class="t" style="left:442.33px;top:562.07px;font-size:6px;color:#154a1c;font-weight:normal;transform:scaleX(1.0000);">72</div>
<div style="left:436.0px;top:564.645px;width:1.5px;height:0.8px;background:#606060;"></div>
<div class="t" style="left:442.33px;top:570.36px;font-size:6px;color:#154a1c;font-weight:normal;transform:scaleX(1.0000);">78</div>
<div style="left:436.0px;top:572.9399999999999px;width:1.5px;height:0.8px;background:#606060;"></div>
<div class="t" style="left:442.33px;top:578.66px;font-size:6px;color:#154a1c;font-weight:normal;transform:scaleX(1.0000);">84</div>
<div style="left:436.0px;top:581.235px;width:1.5px;height:0.8px;background:#606060;"></div>
<div class="t" style="left:438.80px;top:456.50px;font-size:6.5px;color:#c8c8c8;font-weight:normal;transform:scaleX(1.0000);">-9.1</div>
<div class="t" style="left:422.47px;top:597.57px;font-size:7px;color:#707070;font-weight:normal;transform:scaleX(1.0000);">-7.0</div>
<div style="left:406.5px;top:605px;width:44.5px;height:14px;background:#262626;"></div>
<div class="t" style="left:409.50px;top:609.24px;font-size:7.4px;color:#e4e4e4;font-weight:normal;transform:scaleX(0.9318);">Electric Gui...</div>
<div style="left:453.0px;top:369px;width:44.5px;height:250px;background:#2c2c2c;"></div>
<div style="left:454.8px;top:372px;width:14px;height:9px;background:#8aa4e4;"></div>
<div class="t" style="left:459.85px;top:373.57px;font-size:7px;color:#3a3a3a;font-weight:normal;transform:scaleX(1.0000);">9</div>
<div class="t" style="left:472.50px;top:374.24px;font-size:7.4px;color:#ececec;font-weight:normal;transform:scaleX(0.8982);">Audio</div>
<div class="t" style="left:455.50px;top:386.94px;font-size:7.4px;color:#e4e4e4;font-weight:normal;transform:scaleX(0.8604);">Soundmapper</div>
<div class="t" style="left:466.00px;top:399.74px;font-size:7.4px;color:#e4e4e4;font-weight:normal;transform:scaleX(0.8401);">Master</div>
<svg style="position:absolute;left:455.0px;top:412.3px" width="10" height="10"><g transform="translate(5,5)"><rect x="-1" y="-4" width="2" height="8" fill="#f0f0f0" transform="rotate(0)"/><rect x="-1" y="-4" width="2" height="8" fill="#f0f0f0" transform="rotate(45)"/><rect x="-1" y="-4" width="2" height="8" fill="#f0f0f0" transform="rotate(90)"/><rect x="-1" y="-4" width="2" height="8" fill="#f0f0f0" transform="rotate(135)"/><circle r="2.88" fill="#f0f0f0"/><circle r="1.68" fill="#e0203a"/></g></svg>
<div class="t" style="left:467.00px;top:414.04px;font-size:7.4px;color:#ececec;font-weight:normal;transform:scaleX(0.8862);">Touch</div>
<div style="left:491.5px;top:416px;width:5px;height:3px;background:#e0e0e0;clip-path:polygon(0 0,100% 0,50% 100%);"></div>
<div style="left:456.0px;top:429.5px;width:40px;height:1.3px;background:#555555;"></div>
<div style="left:472.5px;top:425.5px;width:5.5px;height:9px;background:#8a8a8a;"></div>
<div style="left:474.5px;top:427px;width:1.5px;height:6px;background:#3a3a3a;"></div>
<div class="t" style="left:464.99px;top:437.07px;font-size:7px;color:#6a6a6a;font-weight:normal;transform:scaleX(1.0000);">Center</div>
<div style="left:455.5px;top:452.2px;width:9.0px;height:9.0px;background:#5a8cb4;border-radius:50%;"></div>
<div style="left:459.2px;top:453.7px;width:1.6px;height:6.0px;background:#1a2a3a;transform:rotate(-45deg);"></div>
<div style="left:460.5px;top:452.7px;width:4.05px;height:4.05px;background:#f0f0f0;border-radius:50%;"></div>
<div style="left:461.6px;top:453.8px;width:2.025px;height:2.025px;background:#303030;border-radius:50%;"></div>
<div style="left:455.5px;top:465.9px;width:9.0px;height:9.0px;background:#c8a848;border-radius:50%;"></div>
<div style="left:457.3px;top:467.7px;width:5.4px;height:5.4px;background:#4a4020;border-radius:50%;"></div>
<div style="left:458.5px;top:468.4px;width:3px;height:4px;background:transparent;border:1px solid #c8b050;border-radius:40%;box-sizing:border-box;"></div>
<div style="left:463.0px;top:465.9px;width:1.6px;height:4.5px;background:#f0f0f0;"></div>
<div style="left:463.0px;top:471.4px;width:1.6px;height:1.4px;background:#f0f0f0;"></div>
<svg style="position:absolute;left:455.0px;top:478.5px" width="11" height="11"><path d="M8.5,1.2 C6.5,0.2 5.2,1.5 4.6,4 L3,10 C2.6,11 1.5,11 0.8,10.3" stroke="#28c0f8" stroke-width="1.4" fill="none"/><path d="M2.5,4.5 L7,4.5" stroke="#28c0f8" stroke-width="1.1"/><circle cx="8" cy="7.8" r="2.6" fill="#f4f4f4" stroke="#2a2a2a" stroke-width="0.8"/><path d="M6.9,7.8 L7.8,8.7 L9.2,7" stroke="#333" stroke-width="0.8" fill="none"/></svg>
<div style="left:455.5px;top:491.7px;width:9.0px;height:9.0px;background:#d8d0d0;border-radius:50%;"></div>
<div style="left:457.3px;top:493.5px;width:5.4px;height:5.4px;background:#c02020;border-radius:50%;"></div>
<div style="left:455.0px;top:504.5px;width:10px;height:10px;background:#f4f4f4;"></div>
<div style="left:457.0px;top:506.5px;width:6px;height:6px;background:#1a1a1a;clip-path:polygon(0 30%,40% 30%,100% 0,100% 100%,40% 70%,0 70%);"></div>
<div style="left:455.2px;top:517.2px;width:9.6px;height:9.6px;background:#3a9ad8;border-radius:50%;"></div>
<div style="left:456.7px;top:518.7px;width:6.6px;height:6.6px;background:#f0f0f0;border-radius:50%;"></div>
<div style="left:456.7px;top:522px;width:6.6px;height:3.3px;background:#6a4a30;border-radius:0 0 5px 5px;"></div>
<div style="left:473.5px;top:456px;width:3px;height:135px;background:#464646;"></div>
<div style="left:474.5px;top:456px;width:1px;height:135px;background:#6e6e6e;"></div>
<div style="left:466.0px;top:458.0px;width:4px;height:0.8px;background:#363636;"></div>
<div style="left:466.0px;top:466.3px;width:4px;height:0.8px;background:#363636;"></div>
<div style="left:466.0px;top:474.6px;width:4px;height:0.8px;background:#363636;"></div>
<div style="left:466.0px;top:482.9px;width:4px;height:0.8px;background:#363636;"></div>
<div style="left:466.0px;top:491.2px;width:4px;height:0.8px;background:#363636;"></div>
<div style="left:466.0px;top:499.5px;width:4px;height:0.8px;background:#363636;"></div>
<div style="left:466.0px;top:507.8px;width:4px;height:0.8px;background:#363636;"></div>
<div style="left:466.0px;top:516.1px;width:4px;height:0.8px;background:#363636;"></div>
<div style="left:466.0px;top:524.4px;width:4px;height:0.8px;background:#363636;"></div>
<div style="left:466.0px;top:532.7px;width:4px;height:0.8px;background:#363636;"></div>
<div style="left:466.0px;top:541.0px;width:4px;height:0.8px;background:#363636;"></div>
<div style="left:466.0px;top:549.3px;width:4px;height:0.8px;background:#363636;"></div>
<div style="left:466.0px;top:557.6px;width:4px;height:0.8px;background:#363636;"></div>
<div style="left:466.0px;top:565.9px;width:4px;height:0.8px;background:#363636;"></div>
<div style="left:466.0px;top:574.2px;width:4px;height:0.8px;background:#363636;"></div>
<div style="left:466.0px;top:582.5px;width:4px;height:0.8px;background:#363636;"></div>
<div style="left:470.5px;top:535px;width:9px;height:12px;background:#d4d4d4;border-radius:1px;"></div>
<div style="left:472.5px;top:539.5px;width:5px;height:0.8px;background:#707070;"></div>
<div style="left:472.5px;top:541.2px;width:5px;height:0.8px;background:#707070;"></div>
<div style="left:472.5px;top:542.9px;width:5px;height:0.8px;background:#707070;"></div>
<div style="left:484.0px;top:465px;width:13px;height:6px;background:#6b3c3c;"></div>
<div style="left:484.0px;top:471px;width:13px;height:15px;background:#6e6a3e;"></div>
<div style="left:484.0px;top:486px;width:13px;height:105px;background:#3f6a48;"></div>
<div style="left:484.0px;top:542px;width:13px;height:49px;background:#22e03c;"></div>
<div class="t" style="left:492.16px;top:470.82px;font-size:6px;color:#4a4630;font-weight:normal;transform:scaleX(1.0000);">6</div>
<div style="left:482.5px;top:473.4px;width:1.5px;height:0.8px;background:#606060;"></div>
<div class="t" style="left:488.83px;top:479.12px;font-size:6px;color:#4a4630;font-weight:normal;transform:scaleX(1.0000);">12</div>
<div style="left:482.5px;top:481.695px;width:1.5px;height:0.8px;background:#606060;"></div>
<div class="t" style="left:488.83px;top:487.41px;font-size:6px;color:#30402c;font-weight:normal;transform:scaleX(1.0000);">18</div>
<div style="left:482.5px;top:489.98999999999995px;width:1.5px;height:0.8px;background:#606060;"></div>
<div class="t" style="left:488.83px;top:495.71px;font-size:6px;color:#30402c;font-weight:normal;transform:scaleX(1.0000);">24</div>
<div style="left:482.5px;top:498.28499999999997px;width:1.5px;height:0.8px;background:#606060;"></div>
<div class="t" style="left:488.83px;top:504.00px;font-size:6px;color:#30402c;font-weight:normal;transform:scaleX(1.0000);">30</div>
<div style="left:482.5px;top:506.58px;width:1.5px;height:0.8px;background:#606060;"></div>
<div class="t" style="left:488.83px;top:512.30px;font-size:6px;color:#30402c;font-weight:normal;transform:scaleX(1.0000);">36</div>
<div style="left:482.5px;top:514.875px;width:1.5px;height:0.8px;background:#606060;"></div>
<div class="t" style="left:488.83px;top:520.59px;font-size:6px;color:#30402c;font-weight:normal;transform:scaleX(1.0000);">42</div>
<div style="left:482.5px;top:523.17px;width:1.5px;height:0.8px;background:#606060;"></div>
<div class="t" style="left:488.83px;top:528.89px;font-size:6px;color:#30402c;font-weight:normal;transform:scaleX(1.0000);">48</div>
<div style="left:482.5px;top:531.4649999999999px;width:1.5px;height:0.8px;background:#606060;"></div>
<div class="t" style="left:488.83px;top:537.18px;font-size:6px;color:#30402c;font-weight:normal;transform:scaleX(1.0000);">54</div>
<div style="left:482.5px;top:539.76px;width:1.5px;height:0.8px;background:#606060;"></div>
<div class="t" style="left:488.83px;top:545.48px;font-size:6px;color:#154a1c;font-weight:normal;transform:scaleX(1.0000);">60</div>
<div style="left:482.5px;top:548.055px;width:1.5px;height:0.8px;background:#606060;"></div>
<div class="t" style="left:488.83px;top:553.77px;font-size:6px;color:#154a1c;font-weight:normal;transform:scaleX(1.0000);">66</div>
<div style="left:482.5px;top:556.35px;width:1.5px;height:0.8px;background:#606060;"></div>
<div class="t" style="left:488.83px;top:562.07px;font-size:6px;color:#154a1c;font-weight:normal;transform:scaleX(1.0000);">72</div>
<div style="left:482.5px;top:564.645px;width:1.5px;height:0.8px;background:#606060;"></div>
<div class="t" style="left:488.83px;top:570.36px;font-size:6px;color:#154a1c;font-weight:normal;transform:scaleX(1.0000);">78</div>
<div style="left:482.5px;top:572.9399999999999px;width:1.5px;height:0.8px;background:#606060;"></div>
<div class="t" style="left:488.83px;top:578.66px;font-size:6px;color:#154a1c;font-weight:normal;transform:scaleX(1.0000);">84</div>
<div style="left:482.5px;top:581.235px;width:1.5px;height:0.8px;background:#606060;"></div>
<div class="t" style="left:485.30px;top:456.50px;font-size:6.5px;color:#c8c8c8;font-weight:normal;transform:scaleX(1.0000);">-9.2</div>
<div class="t" style="left:468.97px;top:597.57px;font-size:7px;color:#707070;font-weight:normal;transform:scaleX(1.0000);">-7.0</div>
<div style="left:453.0px;top:605px;width:44.5px;height:14px;background:#262626;"></div>
<div class="t" style="left:456.00px;top:609.24px;font-size:7.4px;color:#e4e4e4;font-weight:normal;transform:scaleX(1.0200);">Bass</div>
<div style="left:499.5px;top:369px;width:44.5px;height:250px;background:#2c2c2c;"></div>
<div style="left:501.3px;top:372px;width:14px;height:9px;background:#d06474;"></div>
<div class="t" style="left:504.41px;top:373.57px;font-size:7px;color:#3a3a3a;font-weight:normal;transform:scaleX(1.0000);">10</div>
<div class="t" style="left:519.00px;top:374.24px;font-size:7.4px;color:#ececec;font-weight:normal;transform:scaleX(0.8982);">Audio</div>
<div class="t" style="left:502.00px;top:386.94px;font-size:7.4px;color:#e4e4e4;font-weight:normal;transform:scaleX(0.8604);">Soundmapper</div>
<div class="t" style="left:512.50px;top:399.74px;font-size:7.4px;color:#e4e4e4;font-weight:normal;transform:scaleX(0.8401);">Master</div>
<svg style="position:absolute;left:501.5px;top:412.3px" width="10" height="10"><g transform="translate(5,5)"><rect x="-1" y="-4" width="2" height="8" fill="#f0f0f0" transform="rotate(0)"/><rect x="-1" y="-4" width="2" height="8" fill="#f0f0f0" transform="rotate(45)"/><rect x="-1" y="-4" width="2" height="8" fill="#f0f0f0" transform="rotate(90)"/><rect x="-1" y="-4" width="2" height="8" fill="#f0f0f0" transform="rotate(135)"/><circle r="2.88" fill="#f0f0f0"/><circle r="1.68" fill="#e0203a"/></g></svg>
<div class="t" style="left:513.50px;top:414.04px;font-size:7.4px;color:#ececec;font-weight:normal;transform:scaleX(0.8862);">Touch</div>
<div style="left:538.0px;top:416px;width:5px;height:3px;background:#e0e0e0;clip-path:polygon(0 0,100% 0,50% 100%);"></div>
<div style="left:502.5px;top:429.5px;width:40px;height:1.3px;background:#555555;"></div>
<div style="left:519.0px;top:425.5px;width:5.5px;height:9px;background:#8a8a8a;"></div>
<div style="left:521.0px;top:427px;width:1.5px;height:6px;background:#3a3a3a;"></div>
<div class="t" style="left:510.52px;top:437.07px;font-size:7px;color:#6a6a6a;font-weight:normal;transform:scaleX(1.0000);">15 % R</div>
<div style="left:502.0px;top:452.2px;width:9.0px;height:9.0px;background:#5a8cb4;border-radius:50%;"></div>
<div style="left:505.7px;top:453.7px;width:1.6px;height:6.0px;background:#1a2a3a;transform:rotate(-45deg);"></div>
<div style="left:507.0px;top:452.7px;width:4.05px;height:4.05px;background:#f0f0f0;border-radius:50%;"></div>
<div style="left:508.1px;top:453.8px;width:2.025px;height:2.025px;background:#303030;border-radius:50%;"></div>
<div style="left:502.0px;top:465.9px;width:9.0px;height:9.0px;background:#c8a848;border-radius:50%;"></div>
<div style="left:503.8px;top:467.7px;width:5.4px;height:5.4px;background:#4a4020;border-radius:50%;"></div>
<div style="left:505.0px;top:468.4px;width:3px;height:4px;background:transparent;border:1px solid #c8b050;border-radius:40%;box-sizing:border-box;"></div>
<div style="left:509.5px;top:465.9px;width:1.6px;height:4.5px;background:#f0f0f0;"></div>
<div style="left:509.5px;top:471.4px;width:1.6px;height:1.4px;background:#f0f0f0;"></div>
<svg style="position:absolute;left:501.5px;top:478.5px" width="11" height="11"><path d="M8.5,1.2 C6.5,0.2 5.2,1.5 4.6,4 L3,10 C2.6,11 1.5,11 0.8,10.3" stroke="#28c0f8" stroke-width="1.4" fill="none"/><path d="M2.5,4.5 L7,4.5" stroke="#28c0f8" stroke-width="1.1"/><circle cx="8" cy="7.8" r="2.6" fill="#f4f4f4" stroke="#2a2a2a" stroke-width="0.8"/><path d="M6.9,7.8 L7.8,8.7 L9.2,7" stroke="#333" stroke-width="0.8" fill="none"/></svg>
<div style="left:502.0px;top:491.7px;width:9.0px;height:9.0px;background:#d8d0d0;border-radius:50%;"></div>
<div style="left:503.8px;top:493.5px;width:5.4px;height:5.4px;background:#c02020;border-radius:50%;"></div>
<div style="left:501.5px;top:504.5px;width:10px;height:10px;background:#f4f4f4;"></div>
<div style="left:503.5px;top:506.5px;width:6px;height:6px;background:#1a1a1a;clip-path:polygon(0 30%,40% 30%,100% 0,100% 100%,40% 70%,0 70%);"></div>
<div style="left:501.7px;top:517.2px;width:9.6px;height:9.6px;background:#3a9ad8;border-radius:50%;"></div>
<div style="left:503.2px;top:518.7px;width:6.6px;height:6.6px;background:#f0f0f0;border-radius:50%;"></div>
<div style="left:503.2px;top:522px;width:6.6px;height:3.3px;background:#6a4a30;border-radius:0 0 5px 5px;"></div>
<div style="left:520.0px;top:456px;width:3px;height:135px;background:#464646;"></div>
<div style="left:521.0px;top:456px;width:1px;height:135px;background:#6e6e6e;"></div>
<div style="left:512.5px;top:458.0px;width:4px;height:0.8px;background:#363636;"></div>
<div style="left:512.5px;top:466.3px;width:4px;height:0.8px;background:#363636;"></div>
<div style="left:512.5px;top:474.6px;width:4px;height:0.8px;background:#363636;"></div>
<div style="left:512.5px;top:482.9px;width:4px;height:0.8px;background:#363636;"></div>
<div style="left:512.5px;top:491.2px;width:4px;height:0.8px;background:#363636;"></div>
<div style="left:512.5px;top:499.5px;width:4px;height:0.8px;background:#363636;"></div>
<div style="left:512.5px;top:507.8px;width:4px;height:0.8px;background:#363636;"></div>
<div style="left:512.5px;top:516.1px;width:4px;height:0.8px;background:#363636;"></div>
<div style="left:512.5px;top:524.4px;width:4px;height:0.8px;background:#363636;"></div>
<div style="left:512.5px;top:532.7px;width:4px;height:0.8px;background:#363636;"></div>
<div style="left:512.5px;top:541.0px;width:4px;height:0.8px;background:#363636;"></div>
<div style="left:512.5px;top:549.3px;width:4px;height:0.8px;background:#363636;"></div>
<div style="left:512.5px;top:557.6px;width:4px;height:0.8px;background:#363636;"></div>
<div style="left:512.5px;top:565.9px;width:4px;height:0.8px;background:#363636;"></div>
<div style="left:512.5px;top:574.2px;width:4px;height:0.8px;background:#363636;"></div>
<div style="left:512.5px;top:582.5px;width:4px;height:0.8px;background:#363636;"></div>
<div style="left:517.0px;top:535px;width:9px;height:12px;background:#d4d4d4;border-radius:1px;"></div>
<div style="left:519.0px;top:539.5px;width:5px;height:0.8px;background:#707070;"></div>
<div style="left:519.0px;top:541.2px;width:5px;height:0.8px;background:#707070;"></div>
<div style="left:519.0px;top:542.9px;width:5px;height:0.8px;background:#707070;"></div>
<div style="left:530.5px;top:465px;width:13px;height:6px;background:#6b3c3c;"></div>
<div style="left:530.5px;top:471px;width:13px;height:15px;background:#6e6a3e;"></div>
<div style="left:530.5px;top:486px;width:13px;height:105px;background:#3f6a48;"></div>
<div style="left:530.5px;top:510px;width:13px;height:81px;background:#22e03c;"></div>
<div class="t" style="left:538.66px;top:470.82px;font-size:6px;color:#4a4630;font-weight:normal;transform:scaleX(1.0000);">6</div>
<div style="left:529.0px;top:473.4px;width:1.5px;height:0.8px;background:#606060;"></div>
<div class="t" style="left:535.33px;top:479.12px;font-size:6px;color:#4a4630;font-weight:normal;transform:scaleX(1.0000);">12</div>
<div style="left:529.0px;top:481.695px;width:1.5px;height:0.8px;background:#606060;"></div>
<div class="t" style="left:535.33px;top:487.41px;font-size:6px;color:#30402c;font-weight:normal;transform:scaleX(1.0000);">18</div>
<div style="left:529.0px;top:489.98999999999995px;width:1.5px;height:0.8px;background:#606060;"></div>
<div class="t" style="left:535.33px;top:495.71px;font-size:6px;color:#30402c;font-weight:normal;transform:scaleX(1.0000);">24</div>
<div style="left:529.0px;top:498.28499999999997px;width:1.5px;height:0.8px;background:#606060;"></div>
<div class="t" style="left:535.33px;top:504.00px;font-size:6px;color:#30402c;font-weight:normal;transform:scaleX(1.0000);">30</div>
<div style="left:529.0px;top:506.58px;width:1.5px;height:0.8px;background:#606060;"></div>
<div class="t" style="left:535.33px;top:512.30px;font-size:6px;color:#154a1c;font-weight:normal;transform:scaleX(1.0000);">36</div>
<div style="left:529.0px;top:514.875px;width:1.5px;height:0.8px;background:#606060;"></div>
<div class="t" style="left:535.33px;top:520.59px;font-size:6px;color:#154a1c;font-weight:normal;transform:scaleX(1.0000);">42</div>
<div style="left:529.0px;top:523.17px;width:1.5px;height:0.8px;background:#606060;"></div>
<div class="t" style="left:535.33px;top:528.89px;font-size:6px;color:#154a1c;font-weight:normal;transform:scaleX(1.0000);">48</div>
<div style="left:529.0px;top:531.4649999999999px;width:1.5px;height:0.8px;background:#606060;"></div>
<div class="t" style="left:535.33px;top:537.18px;font-size:6px;color:#154a1c;font-weight:normal;transform:scaleX(1.0000);">54</div>
<div style="left:529.0px;top:539.76px;width:1.5px;height:0.8px;background:#606060;"></div>
<div class="t" style="left:535.33px;top:545.48px;font-size:6px;color:#154a1c;font-weight:normal;transform:scaleX(1.0000);">60</div>
<div style="left:529.0px;top:548.055px;width:1.5px;height:0.8px;background:#606060;"></div>
<div class="t" style="left:535.33px;top:553.77px;font-size:6px;color:#154a1c;font-weight:normal;transform:scaleX(1.0000);">66</div>
<div style="left:529.0px;top:556.35px;width:1.5px;height:0.8px;background:#606060;"></div>
<div class="t" style="left:535.33px;top:562.07px;font-size:6px;color:#154a1c;font-weight:normal;transform:scaleX(1.0000);">72</div>
<div style="left:529.0px;top:564.645px;width:1.5px;height:0.8px;background:#606060;"></div>
<div class="t" style="left:535.33px;top:570.36px;font-size:6px;color:#154a1c;font-weight:normal;transform:scaleX(1.0000);">78</div>
<div style="left:529.0px;top:572.9399999999999px;width:1.5px;height:0.8px;background:#606060;"></div>
<div class="t" style="left:535.33px;top:578.66px;font-size:6px;color:#154a1c;font-weight:normal;transform:scaleX(1.0000);">84</div>
<div style="left:529.0px;top:581.235px;width:1.5px;height:0.8px;background:#606060;"></div>
<div class="t" style="left:531.80px;top:456.50px;font-size:6.5px;color:#c8c8c8;font-weight:normal;transform:scaleX(1.0000);">-6.3</div>
<div class="t" style="left:515.47px;top:597.57px;font-size:7px;color:#707070;font-weight:normal;transform:scaleX(1.0000);">-7.0</div>
<div style="left:499.5px;top:605px;width:44.5px;height:14px;background:#262626;"></div>
<div class="t" style="left:502.50px;top:609.24px;font-size:7.4px;color:#e4e4e4;font-weight:normal;transform:scaleX(1.0200);">Piano</div>
<div style="left:546.0px;top:369px;width:44.5px;height:250px;background:#2c2c2c;"></div>
<div style="left:547.8px;top:372px;width:14px;height:9px;background:#74c8d4;"></div>
<div class="t" style="left:551.17px;top:373.57px;font-size:7px;color:#3a3a3a;font-weight:normal;transform:scaleX(1.0000);">11</div>
<div class="t" style="left:565.50px;top:374.24px;font-size:7.4px;color:#ececec;font-weight:normal;transform:scaleX(0.8982);">Audio</div>
<div class="t" style="left:548.50px;top:386.94px;font-size:7.4px;color:#e4e4e4;font-weight:normal;transform:scaleX(0.8604);">Soundmapper</div>
<div class="t" style="left:559.00px;top:399.74px;font-size:7.4px;color:#e4e4e4;font-weight:normal;transform:scaleX(0.8401);">Master</div>
<svg style="position:absolute;left:548.0px;top:412.3px" width="10" height="10"><g transform="translate(5,5)"><rect x="-1" y="-4" width="2" height="8" fill="#f0f0f0" transform="rotate(0)"/><rect x="-1" y="-4" width="2" height="8" fill="#f0f0f0" transform="rotate(45)"/><rect x="-1" y="-4" width="2" height="8" fill="#f0f0f0" transform="rotate(90)"/><rect x="-1" y="-4" width="2" height="8" fill="#f0f0f0" transform="rotate(135)"/><circle r="2.88" fill="#f0f0f0"/><circle r="1.68" fill="#e0203a"/></g></svg>
<div class="t" style="left:560.00px;top:414.04px;font-size:7.4px;color:#ececec;font-weight:normal;transform:scaleX(0.8862);">Touch</div>
<div style="left:584.5px;top:416px;width:5px;height:3px;background:#e0e0e0;clip-path:polygon(0 0,100% 0,50% 100%);"></div>
<div style="left:549.0px;top:429.5px;width:40px;height:1.3px;background:#555555;"></div>
<div style="left:565.5px;top:425.5px;width:5.5px;height:9px;background:#8a8a8a;"></div>
<div style="left:567.5px;top:427px;width:1.5px;height:6px;background:#3a3a3a;"></div>
<div class="t" style="left:557.99px;top:437.07px;font-size:7px;color:#6a6a6a;font-weight:normal;transform:scaleX(1.0000);">Center</div>
<div style="left:548.5px;top:452.2px;width:9.0px;height:9.0px;background:#5a8cb4;border-radius:50%;"></div>
<div style="left:552.2px;top:453.7px;width:1.6px;height:6.0px;background:#1a2a3a;transform:rotate(-45deg);"></div>
<div style="left:553.5px;top:452.7px;width:4.05px;height:4.05px;background:#f0f0f0;border-radius:50%;"></div>
<div style="left:554.6px;top:453.8px;width:2.025px;height:2.025px;background:#303030;border-radius:50%;"></div>
<div style="left:548.5px;top:465.9px;width:9.0px;height:9.0px;background:#c8a848;border-radius:50%;"></div>
<div style="left:550.3px;top:467.7px;width:5.4px;height:5.4px;background:#4a4020;border-radius:50%;"></div>
<div style="left:551.5px;top:468.4px;width:3px;height:4px;background:transparent;border:1px solid #c8b050;border-radius:40%;box-sizing:border-box;"></div>
<div style="left:556.0px;top:465.9px;width:1.6px;height:4.5px;background:#f0f0f0;"></div>
<div style="left:556.0px;top:471.4px;width:1.6px;height:1.4px;background:#f0f0f0;"></div>
<svg style="position:absolute;left:548.0px;top:478.5px" width="11" height="11"><path d="M8.5,1.2 C6.5,0.2 5.2,1.5 4.6,4 L3,10 C2.6,11 1.5,11 0.8,10.3" stroke="#28c0f8" stroke-width="1.4" fill="none"/><path d="M2.5,4.5 L7,4.5" stroke="#28c0f8" stroke-width="1.1"/><circle cx="8" cy="7.8" r="2.6" fill="#f4f4f4" stroke="#2a2a2a" stroke-width="0.8"/><path d="M6.9,7.8 L7.8,8.7 L9.2,7" stroke="#333" stroke-width="0.8" fill="none"/></svg>
<div style="left:548.5px;top:491.7px;width:9.0px;height:9.0px;background:#d8d0d0;border-radius:50%;"></div>
<div style="left:550.3px;top:493.5px;width:5.4px;height:5.4px;background:#c02020;border-radius:50%;"></div>
<div style="left:548.0px;top:504.5px;width:10px;height:10px;background:#f4f4f4;"></div>
<div style="left:550.0px;top:506.5px;width:6px;height:6px;background:#1a1a1a;clip-path:polygon(0 30%,40% 30%,100% 0,100% 100%,40% 70%,0 70%);"></div>
<div style="left:548.2px;top:517.2px;width:9.6px;height:9.6px;background:#3a9ad8;border-radius:50%;"></div>
<div style="left:549.7px;top:518.7px;width:6.6px;height:6.6px;background:#f0f0f0;border-radius:50%;"></div>
<div style="left:549.7px;top:522px;width:6.6px;height:3.3px;background:#6a4a30;border-radius:0 0 5px 5px;"></div>
<div style="left:566.5px;top:456px;width:3px;height:135px;background:#464646;"></div>
<div style="left:567.5px;top:456px;width:1px;height:135px;background:#6e6e6e;"></div>
<div style="left:559.0px;top:458.0px;width:4px;height:0.8px;background:#363636;"></div>
<div style="left:559.0px;top:466.3px;width:4px;height:0.8px;background:#363636;"></div>
<div style="left:559.0px;top:474.6px;width:4px;height:0.8px;background:#363636;"></div>
<div style="left:559.0px;top:482.9px;width:4px;height:0.8px;background:#363636;"></div>
<div style="left:559.0px;top:491.2px;width:4px;height:0.8px;background:#363636;"></div>
<div style="left:559.0px;top:499.5px;width:4px;height:0.8px;background:#363636;"></div>
<div style="left:559.0px;top:507.8px;width:4px;height:0.8px;background:#363636;"></div>
<div style="left:559.0px;top:516.1px;width:4px;height:0.8px;background:#363636;"></div>
<div style="left:559.0px;top:524.4px;width:4px;height:0.8px;background:#363636;"></div>
<div style="left:559.0px;top:532.7px;width:4px;height:0.8px;background:#363636;"></div>
<div style="left:559.0px;top:541.0px;width:4px;height:0.8px;background:#363636;"></div>
<div style="left:559.0px;top:549.3px;width:4px;height:0.8px;background:#363636;"></div>
<div style="left:559.0px;top:557.6px;width:4px;height:0.8px;background:#363636;"></div>
<div style="left:559.0px;top:565.9px;width:4px;height:0.8px;background:#363636;"></div>
<div style="left:559.0px;top:574.2px;width:4px;height:0.8px;background:#363636;"></div>
<div style="left:559.0px;top:582.5px;width:4px;height:0.8px;background:#363636;"></div>
<div style="left:563.5px;top:535px;width:9px;height:12px;background:#d4d4d4;border-radius:1px;"></div>
<div style="left:565.5px;top:539.5px;width:5px;height:0.8px;background:#707070;"></div>
<div style="left:565.5px;top:541.2px;width:5px;height:0.8px;background:#707070;"></div>
<div style="left:565.5px;top:542.9px;width:5px;height:0.8px;background:#707070;"></div>
<div style="left:577.0px;top:465px;width:13px;height:6px;background:#6b3c3c;"></div>
<div style="left:577.0px;top:471px;width:13px;height:15px;background:#6e6a3e;"></div>
<div style="left:577.0px;top:486px;width:13px;height:105px;background:#3f6a48;"></div>
<div class="t" style="left:585.16px;top:470.82px;font-size:6px;color:#4a4630;font-weight:normal;transform:scaleX(1.0000);">6</div>
<div style="left:575.5px;top:473.4px;width:1.5px;height:0.8px;background:#606060;"></div>
<div class="t" style="left:581.83px;top:479.12px;font-size:6px;color:#4a4630;font-weight:normal;transform:scaleX(1.0000);">12</div>
<div style="left:575.5px;top:481.695px;width:1.5px;height:0.8px;background:#606060;"></div>
<div class="t" style="left:581.83px;top:487.41px;font-size:6px;color:#30402c;font-weight:normal;transform:scaleX(1.0000);">18</div>
<div style="left:575.5px;top:489.98999999999995px;width:1.5px;height:0.8px;background:#606060;"></div>
<div class="t" style="left:581.83px;top:495.71px;font-size:6px;color:#30402c;font-weight:normal;transform:scaleX(1.0000);">24</div>
<div style="left:575.5px;top:498.28499999999997px;width:1.5px;height:0.8px;background:#606060;"></div>
<div class="t" style="left:581.83px;top:504.00px;font-size:6px;color:#30402c;font-weight:normal;transform:scaleX(1.0000);">30</div>
<div style="left:575.5px;top:506.58px;width:1.5px;height:0.8px;background:#606060;"></div>
<div class="t" style="left:581.83px;top:512.30px;font-size:6px;color:#30402c;font-weight:normal;transform:scaleX(1.0000);">36</div>
<div style="left:575.5px;top:514.875px;width:1.5px;height:0.8px;background:#606060;"></div>
<div class="t" style="left:581.83px;top:520.59px;font-size:6px;color:#30402c;font-weight:normal;transform:scaleX(1.0000);">42</div>
<div style="left:575.5px;top:523.17px;width:1.5px;height:0.8px;background:#606060;"></div>
<div class="t" style="left:581.83px;top:528.89px;font-size:6px;color:#30402c;font-weight:normal;transform:scaleX(1.0000);">48</div>
<div style="left:575.5px;top:531.4649999999999px;width:1.5px;height:0.8px;background:#606060;"></div>
<div class="t" style="left:581.83px;top:537.18px;font-size:6px;color:#30402c;font-weight:normal;transform:scaleX(1.0000);">54</div>
<div style="left:575.5px;top:539.76px;width:1.5px;height:0.8px;background:#606060;"></div>
<div class="t" style="left:581.83px;top:545.48px;font-size:6px;color:#30402c;font-weight:normal;transform:scaleX(1.0000);">60</div>
<div style="left:575.5px;top:548.055px;width:1.5px;height:0.8px;background:#606060;"></div>
<div class="t" style="left:581.83px;top:553.77px;font-size:6px;color:#30402c;font-weight:normal;transform:scaleX(1.0000);">66</div>
<div style="left:575.5px;top:556.35px;width:1.5px;height:0.8px;background:#606060;"></div>
<div class="t" style="left:581.83px;top:562.07px;font-size:6px;color:#30402c;font-weight:normal;transform:scaleX(1.0000);">72</div>
<div style="left:575.5px;top:564.645px;width:1.5px;height:0.8px;background:#606060;"></div>
<div class="t" style="left:581.83px;top:570.36px;font-size:6px;color:#30402c;font-weight:normal;transform:scaleX(1.0000);">78</div>
<div style="left:575.5px;top:572.9399999999999px;width:1.5px;height:0.8px;background:#606060;"></div>
<div class="t" style="left:581.83px;top:578.66px;font-size:6px;color:#30402c;font-weight:normal;transform:scaleX(1.0000);">84</div>
<div style="left:575.5px;top:581.235px;width:1.5px;height:0.8px;background:#606060;"></div>
<div class="t" style="left:578.30px;top:456.50px;font-size:6.5px;color:#c8c8c8;font-weight:normal;transform:scaleX(1.0000);">-7.5</div>
<div class="t" style="left:561.97px;top:597.57px;font-size:7px;color:#707070;font-weight:normal;transform:scaleX(1.0000);">-7.0</div>
<div style="left:546.0px;top:605px;width:44.5px;height:14px;background:#262626;"></div>
<div class="t" style="left:549.00px;top:609.24px;font-size:7.4px;color:#e4e4e4;font-weight:normal;transform:scaleX(1.0200);">Melody</div>
<div style="left:592.5px;top:369px;width:44.5px;height:250px;background:#2c2c2c;"></div>
<div style="left:594.3px;top:372px;width:14px;height:9px;background:#9c74cc;"></div>
<div class="t" style="left:597.41px;top:373.57px;font-size:7px;color:#3a3a3a;font-weight:normal;transform:scaleX(1.0000);">12</div>
<div class="t" style="left:612.00px;top:374.24px;font-size:7.4px;color:#ececec;font-weight:normal;transform:scaleX(0.8982);">Audio</div>
<div class="t" style="left:595.00px;top:386.94px;font-size:7.4px;color:#e4e4e4;font-weight:normal;transform:scaleX(0.8604);">Soundmapper</div>
<div class="t" style="left:605.50px;top:399.74px;font-size:7.4px;color:#e4e4e4;font-weight:normal;transform:scaleX(0.8401);">Master</div>
<svg style="position:absolute;left:594.5px;top:412.3px" width="10" height="10"><g transform="translate(5,5)"><rect x="-1" y="-4" width="2" height="8" fill="#f0f0f0" transform="rotate(0)"/><rect x="-1" y="-4" width="2" height="8" fill="#f0f0f0" transform="rotate(45)"/><rect x="-1" y="-4" width="2" height="8" fill="#f0f0f0" transform="rotate(90)"/><rect x="-1" y="-4" width="2" height="8" fill="#f0f0f0" transform="rotate(135)"/><circle r="2.88" fill="#f0f0f0"/><circle r="1.68" fill="#e0203a"/></g></svg>
<div class="t" style="left:606.50px;top:414.04px;font-size:7.4px;color:#ececec;font-weight:normal;transform:scaleX(0.8862);">Touch</div>
<div style="left:631.0px;top:416px;width:5px;height:3px;background:#e0e0e0;clip-path:polygon(0 0,100% 0,50% 100%);"></div>
<div style="left:595.5px;top:429.5px;width:40px;height:1.3px;background:#555555;"></div>
<div style="left:612.0px;top:425.5px;width:5.5px;height:9px;background:#8a8a8a;"></div>
<div style="left:614.0px;top:427px;width:1.5px;height:6px;background:#3a3a3a;"></div>
<div class="t" style="left:604.49px;top:437.07px;font-size:7px;color:#6a6a6a;font-weight:normal;transform:scaleX(1.0000);">Center</div>
<div style="left:595.0px;top:452.2px;width:9.0px;height:9.0px;background:#5a8cb4;border-radius:50%;"></div>
<div style="left:598.7px;top:453.7px;width:1.6px;height:6.0px;background:#1a2a3a;transform:rotate(-45deg);"></div>
<div style="left:600.0px;top:452.7px;width:4.05px;height:4.05px;background:#f0f0f0;border-radius:50%;"></div>
<div style="left:601.1px;top:453.8px;width:2.025px;height:2.025px;background:#303030;border-radius:50%;"></div>
<div style="left:595.0px;top:465.9px;width:9.0px;height:9.0px;background:#c8a848;border-radius:50%;"></div>
<div style="left:596.8px;top:467.7px;width:5.4px;height:5.4px;background:#4a4020;border-radius:50%;"></div>
<div style="left:598.0px;top:468.4px;width:3px;height:4px;background:transparent;border:1px solid #c8b050;border-radius:40%;box-sizing:border-box;"></div>
<div style="left:602.5px;top:465.9px;width:1.6px;height:4.5px;background:#f0f0f0;"></div>
<div style="left:602.5px;top:471.4px;width:1.6px;height:1.4px;background:#f0f0f0;"></div>
<svg style="position:absolute;left:594.5px;top:478.5px" width="11" height="11"><path d="M8.5,1.2 C6.5,0.2 5.2,1.5 4.6,4 L3,10 C2.6,11 1.5,11 0.8,10.3" stroke="#28c0f8" stroke-width="1.4" fill="none"/><path d="M2.5,4.5 L7,4.5" stroke="#28c0f8" stroke-width="1.1"/><circle cx="8" cy="7.8" r="2.6" fill="#f4f4f4" stroke="#2a2a2a" stroke-width="0.8"/><path d="M6.9,7.8 L7.8,8.7 L9.2,7" stroke="#333" stroke-width="0.8" fill="none"/></svg>
<div style="left:595.0px;top:491.7px;width:9.0px;height:9.0px;background:#d8d0d0;border-radius:50%;"></div>
<div style="left:596.8px;top:493.5px;width:5.4px;height:5.4px;background:#c02020;border-radius:50%;"></div>
<div style="left:594.5px;top:504.5px;width:10px;height:10px;background:#f4f4f4;"></div>
<div style="left:596.5px;top:506.5px;width:6px;height:6px;background:#1a1a1a;clip-path:polygon(0 30%,40% 30%,100% 0,100% 100%,40% 70%,0 70%);"></div>
<div style="left:594.7px;top:517.2px;width:9.6px;height:9.6px;background:#3a9ad8;border-radius:50%;"></div>
<div style="left:596.2px;top:518.7px;width:6.6px;height:6.6px;background:#f0f0f0;border-radius:50%;"></div>
<div style="left:596.2px;top:522px;width:6.6px;height:3.3px;background:#6a4a30;border-radius:0 0 5px 5px;"></div>
<div style="left:613.0px;top:456px;width:3px;height:135px;background:#464646;"></div>
<div style="left:614.0px;top:456px;width:1px;height:135px;background:#6e6e6e;"></div>
<div style="left:605.5px;top:458.0px;width:4px;height:0.8px;background:#363636;"></div>
<div style="left:605.5px;top:466.3px;width:4px;height:0.8px;background:#363636;"></div>
<div style="left:605.5px;top:474.6px;width:4px;height:0.8px;background:#363636;"></div>
<div style="left:605.5px;top:482.9px;width:4px;height:0.8px;background:#363636;"></div>
<div style="left:605.5px;top:491.2px;width:4px;height:0.8px;background:#363636;"></div>
<div style="left:605.5px;top:499.5px;width:4px;height:0.8px;background:#363636;"></div>
<div style="left:605.5px;top:507.8px;width:4px;height:0.8px;background:#363636;"></div>
<div style="left:605.5px;top:516.1px;width:4px;height:0.8px;background:#363636;"></div>
<div style="left:605.5px;top:524.4px;width:4px;height:0.8px;background:#363636;"></div>
<div style="left:605.5px;top:532.7px;width:4px;height:0.8px;background:#363636;"></div>
<div style="left:605.5px;top:541.0px;width:4px;height:0.8px;background:#363636;"></div>
<div style="left:605.5px;top:549.3px;width:4px;height:0.8px;background:#363636;"></div>
<div style="left:605.5px;top:557.6px;width:4px;height:0.8px;background:#363636;"></div>
<div style="left:605.5px;top:565.9px;width:4px;height:0.8px;background:#363636;"></div>
<div style="left:605.5px;top:574.2px;width:4px;height:0.8px;background:#363636;"></div>
<div style="left:605.5px;top:582.5px;width:4px;height:0.8px;background:#363636;"></div>
<div style="left:610.0px;top:524px;width:9px;height:12px;background:#d4d4d4;border-radius:1px;"></div>
<div style="left:612.0px;top:528.5px;width:5px;height:0.8px;background:#707070;"></div>
<div style="left:612.0px;top:530.2px;width:5px;height:0.8px;background:#707070;"></div>
<div style="left:612.0px;top:531.9px;width:5px;height:0.8px;background:#707070;"></div>
<div style="left:623.5px;top:465px;width:13px;height:6px;background:#6b3c3c;"></div>
<div style="left:623.5px;top:471px;width:13px;height:15px;background:#6e6a3e;"></div>
<div style="left:623.5px;top:486px;width:13px;height:105px;background:#3f6a48;"></div>
<div class="t" style="left:631.66px;top:470.82px;font-size:6px;color:#4a4630;font-weight:normal;transform:scaleX(1.0000);">6</div>
<div style="left:622.0px;top:473.4px;width:1.5px;height:0.8px;background:#606060;"></div>
<div class="t" style="left:628.33px;top:479.12px;font-size:6px;color:#4a4630;font-weight:normal;transform:scaleX(1.0000);">12</div>
<div style="left:622.0px;top:481.695px;width:1.5px;height:0.8px;background:#606060;"></div>
<div class="t" style="left:628.33px;top:487.41px;font-size:6px;color:#30402c;font-weight:normal;transform:scaleX(1.0000);">18</div>
<div style="left:622.0px;top:489.98999999999995px;width:1.5px;height:0.8px;background:#606060;"></div>
<div class="t" style="left:628.33px;top:495.71px;font-size:6px;color:#30402c;font-weight:normal;transform:scaleX(1.0000);">24</div>
<div style="left:622.0px;top:498.28499999999997px;width:1.5px;height:0.8px;background:#606060;"></div>
<div class="t" style="left:628.33px;top:504.00px;font-size:6px;color:#30402c;font-weight:normal;transform:scaleX(1.0000);">30</div>
<div style="left:622.0px;top:506.58px;width:1.5px;height:0.8px;background:#606060;"></div>
<div class="t" style="left:628.33px;top:512.30px;font-size:6px;color:#30402c;font-weight:normal;transform:scaleX(1.0000);">36</div>
<div style="left:622.0px;top:514.875px;width:1.5px;height:0.8px;background:#606060;"></div>
<div class="t" style="left:628.33px;top:520.59px;font-size:6px;color:#30402c;font-weight:normal;transform:scaleX(1.0000);">42</div>
<div style="left:622.0px;top:523.17px;width:1.5px;height:0.8px;background:#606060;"></div>
<div class="t" style="left:628.33px;top:528.89px;font-size:6px;color:#30402c;font-weight:normal;transform:scaleX(1.0000);">48</div>
<div style="left:622.0px;top:531.4649999999999px;width:1.5px;height:0.8px;background:#606060;"></div>
<div class="t" style="left:628.33px;top:537.18px;font-size:6px;color:#30402c;font-weight:normal;transform:scaleX(1.0000);">54</div>
<div style="left:622.0px;top:539.76px;width:1.5px;height:0.8px;background:#606060;"></div>
<div class="t" style="left:628.33px;top:545.48px;font-size:6px;color:#30402c;font-weight:normal;transform:scaleX(1.0000);">60</div>
<div style="left:622.0px;top:548.055px;width:1.5px;height:0.8px;background:#606060;"></div>
<div class="t" style="left:628.33px;top:553.77px;font-size:6px;color:#30402c;font-weight:normal;transform:scaleX(1.0000);">66</div>
<div style="left:622.0px;top:556.35px;width:1.5px;height:0.8px;background:#606060;"></div>
<div class="t" style="left:628.33px;top:562.07px;font-size:6px;color:#30402c;font-weight:normal;transform:scaleX(1.0000);">72</div>
<div style="left:622.0px;top:564.645px;width:1.5px;height:0.8px;background:#606060;"></div>
<div class="t" style="left:628.33px;top:570.36px;font-size:6px;color:#30402c;font-weight:normal;transform:scaleX(1.0000);">78</div>
<div style="left:622.0px;top:572.9399999999999px;width:1.5px;height:0.8px;background:#606060;"></div>
<div class="t" style="left:628.33px;top:578.66px;font-size:6px;color:#30402c;font-weight:normal;transform:scaleX(1.0000);">84</div>
<div style="left:622.0px;top:581.235px;width:1.5px;height:0.8px;background:#606060;"></div>
<div class="t" style="left:624.80px;top:456.50px;font-size:6.5px;color:#c8c8c8;font-weight:normal;transform:scaleX(1.0000);">-Inf.</div>
<div class="t" style="left:608.47px;top:597.57px;font-size:7px;color:#707070;font-weight:normal;transform:scaleX(1.0000);">-3.9</div>
<div style="left:592.5px;top:605px;width:44.5px;height:14px;background:#262626;"></div>
<div class="t" style="left:595.50px;top:609.24px;font-size:7.4px;color:#e4e4e4;font-weight:normal;transform:scaleX(1.0200);">Brass</div>
<div style="left:639.0px;top:369px;width:44.5px;height:250px;background:#2c2c2c;"></div>
<div style="left:640.8px;top:372px;width:14px;height:9px;background:#54b4a4;"></div>
<div class="t" style="left:643.91px;top:373.57px;font-size:7px;color:#3a3a3a;font-weight:normal;transform:scaleX(1.0000);">13</div>
<div class="t" style="left:655.00px;top:374.24px;font-size:7.4px;color:#ececec;font-weight:normal;transform:scaleX(0.8322);">MIDI</div>
<div class="t" style="left:646.00px;top:386.94px;font-size:7.4px;color:#e4e4e4;font-weight:normal;transform:scaleX(0.9188);">Auto Input</div>
<div class="t" style="left:643.00px;top:399.74px;font-size:7.4px;color:#e4e4e4;font-weight:normal;transform:scaleX(0.8568);">Drum Engine</div>
<svg style="position:absolute;left:641.0px;top:412.3px" width="10" height="10"><g transform="translate(5,5)"><rect x="-1" y="-4" width="2" height="8" fill="#f0f0f0" transform="rotate(0)"/><rect x="-1" y="-4" width="2" height="8" fill="#f0f0f0" transform="rotate(45)"/><rect x="-1" y="-4" width="2" height="8" fill="#f0f0f0" transform="rotate(90)"/><rect x="-1" y="-4" width="2" height="8" fill="#f0f0f0" transform="rotate(135)"/><circle r="2.88" fill="#f0f0f0"/><circle r="1.68" fill="#e0203a"/></g></svg>
<div class="t" style="left:653.00px;top:414.04px;font-size:7.4px;color:#ececec;font-weight:normal;transform:scaleX(0.8862);">Touch</div>
<div style="left:677.5px;top:416px;width:5px;height:3px;background:#e0e0e0;clip-path:polygon(0 0,100% 0,50% 100%);"></div>
<div style="left:642.0px;top:429.5px;width:40px;height:1.3px;background:#555555;"></div>
<div style="left:658.5px;top:425.5px;width:5.5px;height:9px;background:#8a8a8a;"></div>
<div style="left:660.5px;top:427px;width:1.5px;height:6px;background:#3a3a3a;"></div>
<div class="t" style="left:650.99px;top:437.07px;font-size:7px;color:#6a6a6a;font-weight:normal;transform:scaleX(1.0000);">Center</div>
<div style="left:641.5px;top:452.2px;width:9.0px;height:9.0px;background:#5a8cb4;border-radius:50%;"></div>
<div style="left:645.2px;top:453.7px;width:1.6px;height:6.0px;background:#1a2a3a;transform:rotate(-45deg);"></div>
<div style="left:646.5px;top:452.7px;width:4.05px;height:4.05px;background:#f0f0f0;border-radius:50%;"></div>
<div style="left:647.6px;top:453.8px;width:2.025px;height:2.025px;background:#303030;border-radius:50%;"></div>
<div style="left:641.5px;top:465.9px;width:9.0px;height:9.0px;background:#c8a848;border-radius:50%;"></div>
<div style="left:643.3px;top:467.7px;width:5.4px;height:5.4px;background:#4a4020;border-radius:50%;"></div>
<div style="left:644.5px;top:468.4px;width:3px;height:4px;background:transparent;border:1px solid #c8b050;border-radius:40%;box-sizing:border-box;"></div>
<div style="left:649.0px;top:465.9px;width:1.6px;height:4.5px;background:#f0f0f0;"></div>
<div style="left:649.0px;top:471.4px;width:1.6px;height:1.4px;background:#f0f0f0;"></div>
<div style="left:641.5px;top:479.0px;width:9.0px;height:9.0px;background:#d8d0d0;border-radius:50%;"></div>
<div style="left:643.3px;top:480.8px;width:5.4px;height:5.4px;background:#c02020;border-radius:50%;"></div>
<div style="left:641.5px;top:492px;width:9px;height:9px;background:#505050;"></div>
<div style="left:643.0px;top:493.5px;width:6px;height:6px;background:transparent;border:1px dashed #c0c0c0;box-sizing:border-box;"></div>
<div style="left:659.5px;top:456px;width:3px;height:135px;background:#464646;"></div>
<div style="left:660.5px;top:456px;width:1px;height:135px;background:#6e6e6e;"></div>
<div style="left:652.0px;top:458.0px;width:4px;height:0.8px;background:#363636;"></div>
<div style="left:652.0px;top:466.3px;width:4px;height:0.8px;background:#363636;"></div>
<div style="left:652.0px;top:474.6px;width:4px;height:0.8px;background:#363636;"></div>
<div style="left:652.0px;top:482.9px;width:4px;height:0.8px;background:#363636;"></div>
<div style="left:652.0px;top:491.2px;width:4px;height:0.8px;background:#363636;"></div>
<div style="left:652.0px;top:499.5px;width:4px;height:0.8px;background:#363636;"></div>
<div style="left:652.0px;top:507.8px;width:4px;height:0.8px;background:#363636;"></div>
<div style="left:652.0px;top:516.1px;width:4px;height:0.8px;background:#363636;"></div>
<div style="left:652.0px;top:524.4px;width:4px;height:0.8px;background:#363636;"></div>
<div style="left:652.0px;top:532.7px;width:4px;height:0.8px;background:#363636;"></div>
<div style="left:652.0px;top:541.0px;width:4px;height:0.8px;background:#363636;"></div>
<div style="left:652.0px;top:549.3px;width:4px;height:0.8px;background:#363636;"></div>
<div style="left:652.0px;top:557.6px;width:4px;height:0.8px;background:#363636;"></div>
<div style="left:652.0px;top:565.9px;width:4px;height:0.8px;background:#363636;"></div>
<div style="left:652.0px;top:574.2px;width:4px;height:0.8px;background:#363636;"></div>
<div style="left:652.0px;top:582.5px;width:4px;height:0.8px;background:#363636;"></div>
<div style="left:656.5px;top:480px;width:9px;height:12px;background:#d4d4d4;border-radius:1px;"></div>
<div style="left:658.5px;top:484.5px;width:5px;height:0.8px;background:#707070;"></div>
<div style="left:658.5px;top:486.2px;width:5px;height:0.8px;background:#707070;"></div>
<div style="left:658.5px;top:487.9px;width:5px;height:0.8px;background:#707070;"></div>
<div style="left:671.0px;top:461.5px;width:11px;height:12.5px;background:#6b3c3c;"></div>
<div style="left:671.0px;top:474px;width:11px;height:32px;background:#6e6a3e;"></div>
<div style="left:671.0px;top:506px;width:11px;height:85px;background:#3f6a48;"></div>
<div class="t" style="left:655.16px;top:597.57px;font-size:7px;color:#707070;font-weight:normal;transform:scaleX(1.0000);">100</div>
<div style="left:639.0px;top:605px;width:44.5px;height:14px;background:#262626;"></div>
<div class="t" style="left:642.00px;top:609.24px;font-size:7.4px;color:#e4e4e4;font-weight:normal;transform:scaleX(1.0200);">MIDI1</div>
<div style="left:112.0px;top:470.5px;width:13px;height:1.3px;background:#e83030;"></div>
<div style="left:205.0px;top:496.5px;width:13px;height:1.3px;background:#d0e030;"></div>
<div style="left:298.0px;top:531px;width:13px;height:1.3px;background:#d0e030;"></div>
<div style="left:391.0px;top:478px;width:13px;height:1.3px;background:#e8e020;"></div>
<div style="left:391.0px;top:481px;width:13px;height:1.3px;background:#e8e020;"></div>
<div style="left:437.5px;top:483.5px;width:13px;height:1.3px;background:#e8e020;"></div>
<div style="left:484.0px;top:485px;width:13px;height:1.3px;background:#e8e020;"></div>
<div style="left:530.5px;top:507px;width:13px;height:1.3px;background:#d0e030;"></div>
<div style="left:685.5px;top:369px;width:44.5px;height:250px;background:#2c2c2c;"></div>
<div style="left:687.5px;top:371px;width:7px;height:7px;background:#30a060;"></div>
<div style="left:690.5px;top:374px;width:6px;height:6px;background:#e0e0e0;border-radius:50%;"></div>
<div class="t" style="left:702.50px;top:374.24px;font-size:7.4px;color:#ececec;font-weight:normal;transform:scaleX(0.8984);">Synth</div>
<div class="t" style="left:698.50px;top:399.74px;font-size:7.4px;color:#e4e4e4;font-weight:normal;transform:scaleX(0.8401);">Master</div>
<svg style="position:absolute;left:687.5px;top:412.3px" width="10" height="10"><g transform="translate(5,5)"><rect x="-1" y="-4" width="2" height="8" fill="#f0f0f0" transform="rotate(0)"/><rect x="-1" y="-4" width="2" height="8" fill="#f0f0f0" transform="rotate(45)"/><rect x="-1" y="-4" width="2" height="8" fill="#f0f0f0" transform="rotate(90)"/><rect x="-1" y="-4" width="2" height="8" fill="#f0f0f0" transform="rotate(135)"/><circle r="2.88" fill="#f0f0f0"/><circle r="1.68" fill="#e0203a"/></g></svg>
<div class="t" style="left:699.50px;top:414.04px;font-size:7.4px;color:#ececec;font-weight:normal;transform:scaleX(0.8862);">Touch</div>
<div style="left:724.0px;top:416px;width:5px;height:3px;background:#e0e0e0;clip-path:polygon(0 0,100% 0,50% 100%);"></div>
<div style="left:688.5px;top:429.5px;width:40px;height:1.3px;background:#555555;"></div>
<div style="left:705.0px;top:425.5px;width:5.5px;height:9px;background:#8a8a8a;"></div>
<div style="left:707.0px;top:427px;width:1.5px;height:6px;background:#3a3a3a;"></div>
<div class="t" style="left:697.49px;top:437.07px;font-size:7px;color:#6a6a6a;font-weight:normal;transform:scaleX(1.0000);">Center</div>
<div style="left:688.0px;top:452.2px;width:9.0px;height:9.0px;background:#5a8cb4;border-radius:50%;"></div>
<div style="left:691.7px;top:453.7px;width:1.6px;height:6.0px;background:#1a2a3a;transform:rotate(-45deg);"></div>
<div style="left:693.0px;top:452.7px;width:4.05px;height:4.05px;background:#f0f0f0;border-radius:50%;"></div>
<div style="left:694.1px;top:453.8px;width:2.025px;height:2.025px;background:#303030;border-radius:50%;"></div>
<div style="left:688.0px;top:465.9px;width:9.0px;height:9.0px;background:#c8a848;border-radius:50%;"></div>
<div style="left:689.8px;top:467.7px;width:5.4px;height:5.4px;background:#4a4020;border-radius:50%;"></div>
<div style="left:691.0px;top:468.4px;width:3px;height:4px;background:transparent;border:1px solid #c8b050;border-radius:40%;box-sizing:border-box;"></div>
<div style="left:695.5px;top:465.9px;width:1.6px;height:4.5px;background:#f0f0f0;"></div>
<div style="left:695.5px;top:471.4px;width:1.6px;height:1.4px;background:#f0f0f0;"></div>
<div class="t" style="left:688.00px;top:479.04px;font-size:10px;color:#f0f0f0;font-weight:normal;transform:scaleX(1.0000);font-style:italic;font-family:'Liberation Serif',serif;">fx</div>
<div style="left:706.0px;top:456px;width:3px;height:135px;background:#464646;"></div>
<div style="left:707.0px;top:456px;width:1px;height:135px;background:#6e6e6e;"></div>
<div style="left:698.5px;top:458.0px;width:4px;height:0.8px;background:#363636;"></div>
<div style="left:698.5px;top:466.3px;width:4px;height:0.8px;background:#363636;"></div>
<div style="left:698.5px;top:474.6px;width:4px;height:0.8px;background:#363636;"></div>
<div style="left:698.5px;top:482.9px;width:4px;height:0.8px;background:#363636;"></div>
<div style="left:698.5px;top:491.2px;width:4px;height:0.8px;background:#363636;"></div>
<div style="left:698.5px;top:499.5px;width:4px;height:0.8px;background:#363636;"></div>
<div style="left:698.5px;top:507.8px;width:4px;height:0.8px;background:#363636;"></div>
<div style="left:698.5px;top:516.1px;width:4px;height:0.8px;background:#363636;"></div>
<div style="left:698.5px;top:524.4px;width:4px;height:0.8px;background:#363636;"></div>
<div style="left:698.5px;top:532.7px;width:4px;height:0.8px;background:#363636;"></div>
<div style="left:698.5px;top:541.0px;width:4px;height:0.8px;background:#363636;"></div>
<div style="left:698.5px;top:549.3px;width:4px;height:0.8px;background:#363636;"></div>
<div style="left:698.5px;top:557.6px;width:4px;height:0.8px;background:#363636;"></div>
<div style="left:698.5px;top:565.9px;width:4px;height:0.8px;background:#363636;"></div>
<div style="left:698.5px;top:574.2px;width:4px;height:0.8px;background:#363636;"></div>
<div style="left:698.5px;top:582.5px;width:4px;height:0.8px;background:#363636;"></div>
<div style="left:703.0px;top:497px;width:9px;height:12px;background:#d4d4d4;border-radius:1px;"></div>
<div style="left:705.0px;top:501.5px;width:5px;height:0.8px;background:#707070;"></div>
<div style="left:705.0px;top:503.2px;width:5px;height:0.8px;background:#707070;"></div>
<div style="left:705.0px;top:504.9px;width:5px;height:0.8px;background:#707070;"></div>
<div style="left:716.5px;top:465px;width:13px;height:6px;background:#6b3c3c;"></div>
<div style="left:716.5px;top:471px;width:13px;height:15px;background:#6e6a3e;"></div>
<div style="left:716.5px;top:486px;width:13px;height:105px;background:#3f6a48;"></div>
<div class="t" style="left:724.66px;top:470.82px;font-size:6px;color:#4a4630;font-weight:normal;transform:scaleX(1.0000);">6</div>
<div style="left:715.0px;top:473.4px;width:1.5px;height:0.8px;background:#606060;"></div>
<div class="t" style="left:721.33px;top:479.12px;font-size:6px;color:#4a4630;font-weight:normal;transform:scaleX(1.0000);">12</div>
<div style="left:715.0px;top:481.695px;width:1.5px;height:0.8px;background:#606060;"></div>
<div class="t" style="left:721.33px;top:487.41px;font-size:6px;color:#30402c;font-weight:normal;transform:scaleX(1.0000);">18</div>
<div style="left:715.0px;top:489.98999999999995px;width:1.5px;height:0.8px;background:#606060;"></div>
<div class="t" style="left:721.33px;top:495.71px;font-size:6px;color:#30402c;font-weight:normal;transform:scaleX(1.0000);">24</div>
<div style="left:715.0px;top:498.28499999999997px;width:1.5px;height:0.8px;background:#606060;"></div>
<div class="t" style="left:721.33px;top:504.00px;font-size:6px;color:#30402c;font-weight:normal;transform:scaleX(1.0000);">30</div>
<div style="left:715.0px;top:506.58px;width:1.5px;height:0.8px;background:#606060;"></div>
<div class="t" style="left:721.33px;top:512.30px;font-size:6px;color:#30402c;font-weight:normal;transform:scaleX(1.0000);">36</div>
<div style="left:715.0px;top:514.875px;width:1.5px;height:0.8px;background:#606060;"></div>
<div class="t" style="left:721.33px;top:520.59px;font-size:6px;color:#30402c;font-weight:normal;transform:scaleX(1.0000);">42</div>
<div style="left:715.0px;top:523.17px;width:1.5px;height:0.8px;background:#606060;"></div>
<div class="t" style="left:721.33px;top:528.89px;font-size:6px;color:#30402c;font-weight:normal;transform:scaleX(1.0000);">48</div>
<div style="left:715.0px;top:531.4649999999999px;width:1.5px;height:0.8px;background:#606060;"></div>
<div class="t" style="left:721.33px;top:537.18px;font-size:6px;color:#30402c;font-weight:normal;transform:scaleX(1.0000);">54</div>
<div style="left:715.0px;top:539.76px;width:1.5px;height:0.8px;background:#606060;"></div>
<div class="t" style="left:721.33px;top:545.48px;font-size:6px;color:#30402c;font-weight:normal;transform:scaleX(1.0000);">60</div>
<div style="left:715.0px;top:548.055px;width:1.5px;height:0.8px;background:#606060;"></div>
<div class="t" style="left:721.33px;top:553.77px;font-size:6px;color:#30402c;font-weight:normal;transform:scaleX(1.0000);">66</div>
<div style="left:715.0px;top:556.35px;width:1.5px;height:0.8px;background:#606060;"></div>
<div class="t" style="left:721.33px;top:562.07px;font-size:6px;color:#30402c;font-weight:normal;transform:scaleX(1.0000);">72</div>
<div style="left:715.0px;top:564.645px;width:1.5px;height:0.8px;background:#606060;"></div>
<div class="t" style="left:721.33px;top:570.36px;font-size:6px;color:#30402c;font-weight:normal;transform:scaleX(1.0000);">78</div>
<div style="left:715.0px;top:572.9399999999999px;width:1.5px;height:0.8px;background:#606060;"></div>
<div class="t" style="left:721.33px;top:578.66px;font-size:6px;color:#30402c;font-weight:normal;transform:scaleX(1.0000);">84</div>
<div style="left:715.0px;top:581.235px;width:1.5px;height:0.8px;background:#606060;"></div>
<div class="t" style="left:717.80px;top:456.50px;font-size:6.5px;color:#c8c8c8;font-weight:normal;transform:scaleX(1.0000);">-Inf.</div>
<div class="t" style="left:702.63px;top:597.57px;font-size:7px;color:#707070;font-weight:normal;transform:scaleX(1.0000);">0.0</div>
<div style="left:685.5px;top:605px;width:44.5px;height:14px;background:#262626;"></div>
<div class="t" style="left:688.50px;top:609.24px;font-size:7.4px;color:#e4e4e4;font-weight:normal;transform:scaleX(0.8336);">Drum Engine</div>
<div style="left:732.0px;top:369px;width:44.5px;height:250px;background:#2c2c2c;"></div>
<div style="left:734.0px;top:372px;width:9px;height:9px;background:transparent;border:1.5px solid #f0f0f0;box-sizing:border-box;"></div>
<div style="left:736.5px;top:374.5px;width:4px;height:4px;background:#f0f0f0;"></div>
<div class="t" style="left:749.00px;top:374.24px;font-size:7.4px;color:#ececec;font-weight:normal;transform:scaleX(0.8843);">Master</div>
<div class="t" style="left:735.00px;top:399.74px;font-size:7.4px;color:#e4e4e4;font-weight:normal;transform:scaleX(0.9937);">Microsoft ...</div>
<svg style="position:absolute;left:734.0px;top:412.3px" width="10" height="10"><g transform="translate(5,5)"><rect x="-1" y="-4" width="2" height="8" fill="#f0f0f0" transform="rotate(0)"/><rect x="-1" y="-4" width="2" height="8" fill="#f0f0f0" transform="rotate(45)"/><rect x="-1" y="-4" width="2" height="8" fill="#f0f0f0" transform="rotate(90)"/><rect x="-1" y="-4" width="2" height="8" fill="#f0f0f0" transform="rotate(135)"/><circle r="2.88" fill="#f0f0f0"/><circle r="1.68" fill="#e0203a"/></g></svg>
<div class="t" style="left:746.00px;top:414.04px;font-size:7.4px;color:#ececec;font-weight:normal;transform:scaleX(0.8862);">Touch</div>
<div style="left:770.5px;top:416px;width:5px;height:3px;background:#e0e0e0;clip-path:polygon(0 0,100% 0,50% 100%);"></div>
<div style="left:734.5px;top:452.2px;width:9.0px;height:9.0px;background:#5a8cb4;border-radius:50%;"></div>
<div style="left:738.2px;top:453.7px;width:1.6px;height:6.0px;background:#1a2a3a;transform:rotate(-45deg);"></div>
<div style="left:739.5px;top:452.7px;width:4.05px;height:4.05px;background:#f0f0f0;border-radius:50%;"></div>
<div style="left:740.6px;top:453.8px;width:2.025px;height:2.025px;background:#303030;border-radius:50%;"></div>
<div style="left:734.5px;top:465.9px;width:9.0px;height:9.0px;background:#c8a848;border-radius:50%;"></div>
<div style="left:736.3px;top:467.7px;width:5.4px;height:5.4px;background:#4a4020;border-radius:50%;"></div>
<div style="left:737.5px;top:468.4px;width:3px;height:4px;background:transparent;border:1px solid #c8b050;border-radius:40%;box-sizing:border-box;"></div>
<div style="left:742.0px;top:465.9px;width:1.6px;height:4.5px;background:#f0f0f0;"></div>
<div style="left:742.0px;top:471.4px;width:1.6px;height:1.4px;background:#f0f0f0;"></div>
<svg style="position:absolute;left:734.0px;top:478.5px" width="11" height="11"><path d="M8.5,1.2 C6.5,0.2 5.2,1.5 4.6,4 L3,10 C2.6,11 1.5,11 0.8,10.3" stroke="#28c0f8" stroke-width="1.4" fill="none"/><path d="M2.5,4.5 L7,4.5" stroke="#28c0f8" stroke-width="1.1"/><circle cx="8" cy="7.8" r="2.6" fill="#f4f4f4" stroke="#2a2a2a" stroke-width="0.8"/><path d="M6.9,7.8 L7.8,8.7 L9.2,7" stroke="#333" stroke-width="0.8" fill="none"/></svg>
<div style="left:734.5px;top:492px;width:1.2px;height:9px;background:#c0c0c0;"></div>
<div style="left:733.5px;top:495px;width:3px;height:3px;background:#f0f0f0;"></div>
<div class="t" style="left:736.50px;top:492.80px;font-size:8.5px;color:#30a8f0;font-weight:normal;transform:scaleX(1.0000);font-style:italic;font-family:'Liberation Serif',serif;">fx</div>
<div style="left:752.5px;top:456px;width:3px;height:135px;background:#464646;"></div>
<div style="left:753.5px;top:456px;width:1px;height:135px;background:#6e6e6e;"></div>
<div style="left:745.0px;top:458.0px;width:4px;height:0.8px;background:#363636;"></div>
<div style="left:745.0px;top:466.3px;width:4px;height:0.8px;background:#363636;"></div>
<div style="left:745.0px;top:474.6px;width:4px;height:0.8px;background:#363636;"></div>
<div style="left:745.0px;top:482.9px;width:4px;height:0.8px;background:#363636;"></div>
<div style="left:745.0px;top:491.2px;width:4px;height:0.8px;background:#363636;"></div>
<div style="left:745.0px;top:499.5px;width:4px;height:0.8px;background:#363636;"></div>
<div style="left:745.0px;top:507.8px;width:4px;height:0.8px;background:#363636;"></div>
<div style="left:745.0px;top:516.1px;width:4px;height:0.8px;background:#363636;"></div>
<div style="left:745.0px;top:524.4px;width:4px;height:0.8px;background:#363636;"></div>
<div style="left:745.0px;top:532.7px;width:4px;height:0.8px;background:#363636;"></div>
<div style="left:745.0px;top:541.0px;width:4px;height:0.8px;background:#363636;"></div>
<div style="left:745.0px;top:549.3px;width:4px;height:0.8px;background:#363636;"></div>
<div style="left:745.0px;top:557.6px;width:4px;height:0.8px;background:#363636;"></div>
<div style="left:745.0px;top:565.9px;width:4px;height:0.8px;background:#363636;"></div>
<div style="left:745.0px;top:574.2px;width:4px;height:0.8px;background:#363636;"></div>
<div style="left:745.0px;top:582.5px;width:4px;height:0.8px;background:#363636;"></div>
<div style="left:749.5px;top:497px;width:9px;height:12px;background:#d4d4d4;border-radius:1px;"></div>
<div style="left:751.5px;top:501.5px;width:5px;height:0.8px;background:#707070;"></div>
<div style="left:751.5px;top:503.2px;width:5px;height:0.8px;background:#707070;"></div>
<div style="left:751.5px;top:504.9px;width:5px;height:0.8px;background:#707070;"></div>
<div style="left:748.0px;top:497px;width:12px;height:12px;background:#d4d4d4;border-radius:1px;"></div>
<div style="left:749.0px;top:502.5px;width:10px;height:1px;background:#808080;"></div>
<div style="left:753.5px;top:498px;width:1px;height:10px;background:#808080;"></div>
<div style="left:736.5px;top:585px;width:5px;height:4px;background:#e8e8e8;border-radius:1px;"></div>
<div style="left:737.5px;top:582px;width:3px;height:4px;background:transparent;border:1px solid #e8e8e8;border-bottom:none;border-radius:2px 2px 0 0;box-sizing:border-box;"></div>
<div style="left:763.0px;top:465px;width:13px;height:6px;background:#6b3c3c;"></div>
<div style="left:763.0px;top:471px;width:13px;height:15px;background:#6e6a3e;"></div>
<div style="left:763.0px;top:486px;width:13px;height:105px;background:#3f6a48;"></div>
<div style="left:763.0px;top:471px;width:13px;height:15px;background:#e8e020;"></div>
<div style="left:763.0px;top:468px;width:13px;height:3px;background:#e02020;"></div>
<div style="left:763.0px;top:486px;width:13px;height:105px;background:#22e03c;"></div>
<div class="t" style="left:771.16px;top:470.82px;font-size:6px;color:#5a5a10;font-weight:normal;transform:scaleX(1.0000);">6</div>
<div style="left:761.5px;top:473.4px;width:1.5px;height:0.8px;background:#606060;"></div>
<div class="t" style="left:767.83px;top:479.12px;font-size:6px;color:#5a5a10;font-weight:normal;transform:scaleX(1.0000);">12</div>
<div style="left:761.5px;top:481.695px;width:1.5px;height:0.8px;background:#606060;"></div>
<div class="t" style="left:767.83px;top:487.41px;font-size:6px;color:#154a1c;font-weight:normal;transform:scaleX(1.0000);">18</div>
<div style="left:761.5px;top:489.98999999999995px;width:1.5px;height:0.8px;background:#606060;"></div>
<div class="t" style="left:767.83px;top:495.71px;font-size:6px;color:#154a1c;font-weight:normal;transform:scaleX(1.0000);">24</div>
<div style="left:761.5px;top:498.28499999999997px;width:1.5px;height:0.8px;background:#606060;"></div>
<div class="t" style="left:767.83px;top:504.00px;font-size:6px;color:#154a1c;font-weight:normal;transform:scaleX(1.0000);">30</div>
<div style="left:761.5px;top:506.58px;width:1.5px;height:0.8px;background:#606060;"></div>
<div class="t" style="left:767.83px;top:512.30px;font-size:6px;color:#154a1c;font-weight:normal;transform:scaleX(1.0000);">36</div>
<div style="left:761.5px;top:514.875px;width:1.5px;height:0.8px;background:#606060;"></div>
<div class="t" style="left:767.83px;top:520.59px;font-size:6px;color:#154a1c;font-weight:normal;transform:scaleX(1.0000);">42</div>
<div style="left:761.5px;top:523.17px;width:1.5px;height:0.8px;background:#606060;"></div>
<div class="t" style="left:767.83px;top:528.89px;font-size:6px;color:#154a1c;font-weight:normal;transform:scaleX(1.0000);">48</div>
<div style="left:761.5px;top:531.4649999999999px;width:1.5px;height:0.8px;background:#606060;"></div>
<div class="t" style="left:767.83px;top:537.18px;font-size:6px;color:#154a1c;font-weight:normal;transform:scaleX(1.0000);">54</div>
<div style="left:761.5px;top:539.76px;width:1.5px;height:0.8px;background:#606060;"></div>
<div class="t" style="left:767.83px;top:545.48px;font-size:6px;color:#154a1c;font-weight:normal;transform:scaleX(1.0000);">60</div>
<div style="left:761.5px;top:548.055px;width:1.5px;height:0.8px;background:#606060;"></div>
<div class="t" style="left:767.83px;top:553.77px;font-size:6px;color:#154a1c;font-weight:normal;transform:scaleX(1.0000);">66</div>
<div style="left:761.5px;top:556.35px;width:1.5px;height:0.8px;background:#606060;"></div>
<div class="t" style="left:767.83px;top:562.07px;font-size:6px;color:#154a1c;font-weight:normal;transform:scaleX(1.0000);">72</div>
<div style="left:761.5px;top:564.645px;width:1.5px;height:0.8px;background:#606060;"></div>
<div class="t" style="left:767.83px;top:570.36px;font-size:6px;color:#154a1c;font-weight:normal;transform:scaleX(1.0000);">78</div>
<div style="left:761.5px;top:572.9399999999999px;width:1.5px;height:0.8px;background:#606060;"></div>
<div class="t" style="left:767.83px;top:578.66px;font-size:6px;color:#154a1c;font-weight:normal;transform:scaleX(1.0000);">84</div>
<div style="left:761.5px;top:581.235px;width:1.5px;height:0.8px;background:#606060;"></div>
<div style="left:763.0px;top:455px;width:13px;height:7.4px;background:#e81818;"></div>
<div class="t" style="left:764.98px;top:456.00px;font-size:6.5px;color:#ffffff;font-weight:normal;transform:scaleX(1.0000);">2.4</div>
<div class="t" style="left:740.13px;top:597.57px;font-size:7px;color:#707070;font-weight:normal;transform:scaleX(1.0000);">0.0</div>
<div class="t" style="left:757.13px;top:597.57px;font-size:7px;color:#707070;font-weight:normal;transform:scaleX(1.0000);">0.0</div>
<div style="left:732.0px;top:605px;width:44.5px;height:14px;background:#262626;"></div>
<div class="t" style="left:735.00px;top:609.24px;font-size:7.4px;color:#e4e4e4;font-weight:normal;transform:scaleX(0.8843);">Master</div>
<div style="left:79.0px;top:369px;width:2px;height:250px;background:#222222;"></div>
<div style="left:125.5px;top:369px;width:2px;height:250px;background:#222222;"></div>
<div style="left:172.0px;top:369px;width:2px;height:250px;background:#222222;"></div>
<div style="left:218.5px;top:369px;width:2px;height:250px;background:#222222;"></div>
<div style="left:265.0px;top:369px;width:2px;height:250px;background:#222222;"></div>
<div style="left:311.5px;top:369px;width:2px;height:250px;background:#222222;"></div>
<div style="left:358.0px;top:369px;width:2px;height:250px;background:#222222;"></div>
<div style="left:404.5px;top:369px;width:2px;height:250px;background:#222222;"></div>
<div style="left:451.0px;top:369px;width:2px;height:250px;background:#222222;"></div>
<div style="left:497.5px;top:369px;width:2px;height:250px;background:#222222;"></div>
<div style="left:544.0px;top:369px;width:2px;height:250px;background:#222222;"></div>
<div style="left:590.5px;top:369px;width:2px;height:250px;background:#222222;"></div>
<div style="left:637.0px;top:369px;width:2px;height:250px;background:#222222;"></div>
<div style="left:683.5px;top:369px;width:2px;height:250px;background:#222222;"></div>
<div style="left:730.0px;top:369px;width:2px;height:250px;background:#222222;"></div>
<div style="left:776.5px;top:369px;width:2px;height:250px;background:#222222;"></div>
<div style="left:893px;top:352px;width:4px;height:267px;background:#1e1e1e;"></div>
<div style="left:897px;top:352px;width:273px;height:267px;background:#2a2a2a;"></div>
<div style="left:897px;top:352px;width:10px;height:267px;background:#2c2c2c;"></div>
<div style="left:898px;top:355.2px;width:7px;height:1.7px;background:#f4f4f4;transform:rotate(45deg);"></div>
<div style="left:898px;top:355.2px;width:7px;height:1.7px;background:#f4f4f4;transform:rotate(-45deg);"></div>
<div style="left:899.5px;top:361.5px;width:4.5px;height:6px;background:#f0f0f0;clip-path:polygon(0 50%,100% 0,100% 22%,40% 50%,100% 78%,100% 100%);"></div>
<div style="left:900.4px;top:374.0px;width:2px;height:1.6px;background:#e8e8e8;"></div>
<div style="left:900.4px;top:377.2px;width:2px;height:1.6px;background:#e8e8e8;"></div>
<div style="left:900.4px;top:380.4px;width:2px;height:1.6px;background:#e8e8e8;"></div>
<div style="left:900.4px;top:383.6px;width:2px;height:1.6px;background:#e8e8e8;"></div>
<div style="left:900.4px;top:386.8px;width:2px;height:1.6px;background:#e8e8e8;"></div>
<div style="left:900.4px;top:390.0px;width:2px;height:1.6px;background:#e8e8e8;"></div>
<div class="t" style="left:914.00px;top:371.74px;font-size:7.4px;color:#dcdcdc;font-weight:normal;transform:scaleX(0.8646);">Momentary</div>
<div style="left:968.5px;top:368px;width:38px;height:13px;background:#262626;"></div>
<div class="t" style="left:973.15px;top:371.74px;font-size:7.4px;color:#e0e0e0;font-weight:normal;transform:scaleX(1.0000);">11.4</div>
<div class="t" style="left:994.00px;top:371.74px;font-size:7.4px;color:#e4e4e4;font-weight:normal;transform:scaleX(0.8986);">LU</div>
<div class="t" style="left:914.00px;top:387.74px;font-size:7.4px;color:#dcdcdc;font-weight:normal;transform:scaleX(0.9046);">Short</div>
<div style="left:968.5px;top:384px;width:38px;height:13px;background:#262626;"></div>
<div class="t" style="left:973.15px;top:387.74px;font-size:7.4px;color:#e0e0e0;font-weight:normal;transform:scaleX(1.0000);">11.0</div>
<div class="t" style="left:994.00px;top:387.74px;font-size:7.4px;color:#e4e4e4;font-weight:normal;transform:scaleX(0.8986);">LU</div>
<div class="t" style="left:914.00px;top:403.74px;font-size:7.4px;color:#dcdcdc;font-weight:normal;transform:scaleX(0.9602);">Integrated</div>
<div style="left:968.5px;top:400px;width:38px;height:13px;background:#262626;"></div>
<div class="t" style="left:972.60px;top:403.74px;font-size:7.4px;color:#e0e0e0;font-weight:normal;transform:scaleX(1.0000);">12.0</div>
<div class="t" style="left:994.00px;top:403.74px;font-size:7.4px;color:#e4e4e4;font-weight:normal;transform:scaleX(0.8986);">LU</div>
<div class="t" style="left:914.00px;top:419.74px;font-size:7.4px;color:#dcdcdc;font-weight:normal;transform:scaleX(0.8757);">Loudness Range</div>
<div style="left:968.5px;top:416px;width:38px;height:13px;background:#262626;"></div>
<div class="t" style="left:976.71px;top:419.74px;font-size:7.4px;color:#e0e0e0;font-weight:normal;transform:scaleX(1.0000);">8.1</div>
<div class="t" style="left:994.00px;top:419.74px;font-size:7.4px;color:#e4e4e4;font-weight:normal;transform:scaleX(0.8986);">LU</div>
<div style="left:925px;top:438.5px;width:78px;height:1px;background:#3a3a3a;"></div>
<div class="t" style="left:914.00px;top:451.74px;font-size:7.4px;color:#dcdcdc;font-weight:normal;transform:scaleX(0.8652);">True Peaks</div>
<div style="left:1011px;top:403.5px;width:6px;height:6px;background:#f02020;border-radius:50%;box-shadow:0 0 1px #802020;"></div>
<div style="left:1012px;top:404.5px;width:2px;height:2px;background:#ff9090;border-radius:50%;"></div>
<div style="left:1011px;top:451.5px;width:6px;height:6px;background:#f02020;border-radius:50%;box-shadow:0 0 1px #802020;"></div>
<div style="left:1012px;top:452.5px;width:2px;height:2px;background:#ff9090;border-radius:50%;"></div>
<div style="left:1030px;top:362px;width:13px;height:247px;background:linear-gradient(#e81ef0 0px,#c040f0 20px,#8a70f0 40px,#5aa8f0 60px,#20e0f0 85px,#00f0f0 100px,#00f0f0 100%)"></div>
<div style="left:1029px;top:360px;width:15px;height:2px;background:#8a8a8a;"></div>
<div class="t" style="left:1029.69px;top:352.07px;font-size:7px;color:#dcdcdc;font-weight:normal;transform:scaleX(1.0000);">16.2</div>
<div class="t" style="left:1038.39px;top:367.00px;font-size:6.5px;color:#202030;font-weight:normal;transform:scaleX(1.0000);">9</div>
<div class="t" style="left:1038.39px;top:391.99px;font-size:6.5px;color:#202030;font-weight:normal;transform:scaleX(1.0000);">6</div>
<div class="t" style="left:1038.39px;top:416.98px;font-size:6.5px;color:#202030;font-weight:normal;transform:scaleX(1.0000);">3</div>
<div class="t" style="left:1038.39px;top:441.97px;font-size:6.5px;color:#103038;font-weight:normal;transform:scaleX(1.0000);">0</div>
<div class="t" style="left:1036.22px;top:466.96px;font-size:6.5px;color:#103038;font-weight:normal;transform:scaleX(1.0000);">-3</div>
<div class="t" style="left:1036.22px;top:491.95px;font-size:6.5px;color:#103038;font-weight:normal;transform:scaleX(1.0000);">-6</div>
<div class="t" style="left:1036.22px;top:516.94px;font-size:6.5px;color:#103038;font-weight:normal;transform:scaleX(1.0000);">-9</div>
<div class="t" style="left:1032.61px;top:541.93px;font-size:6.5px;color:#103038;font-weight:normal;transform:scaleX(1.0000);">-12</div>
<div class="t" style="left:1032.61px;top:566.92px;font-size:6.5px;color:#103038;font-weight:normal;transform:scaleX(1.0000);">-15</div>
<div class="t" style="left:1032.61px;top:591.91px;font-size:6.5px;color:#103038;font-weight:normal;transform:scaleX(1.0000);">-18</div>
<div class="t" style="left:1033.58px;top:610.57px;font-size:7px;color:#c0c0c0;font-weight:normal;transform:scaleX(1.0000);">M</div>
<div style="left:1051px;top:362px;width:13px;height:247px;background:linear-gradient(#e81ef0 0px,#c040f0 20px,#8a70f0 40px,#5aa8f0 60px,#20e0f0 85px,#00f0f0 100px,#00f0f0 100%)"></div>
<div style="left:1050px;top:360px;width:15px;height:2px;background:#8a8a8a;"></div>
<div class="t" style="left:1050.69px;top:352.07px;font-size:7px;color:#dcdcdc;font-weight:normal;transform:scaleX(1.0000);">14.9</div>
<div class="t" style="left:1059.39px;top:367.00px;font-size:6.5px;color:#202030;font-weight:normal;transform:scaleX(1.0000);">9</div>
<div class="t" style="left:1059.39px;top:391.99px;font-size:6.5px;color:#202030;font-weight:normal;transform:scaleX(1.0000);">6</div>
<div class="t" style="left:1059.39px;top:416.98px;font-size:6.5px;color:#202030;font-weight:normal;transform:scaleX(1.0000);">3</div>
<div class="t" style="left:1059.39px;top:441.97px;font-size:6.5px;color:#103038;font-weight:normal;transform:scaleX(1.0000);">0</div>
<div class="t" style="left:1057.22px;top:466.96px;font-size:6.5px;color:#103038;font-weight:normal;transform:scaleX(1.0000);">-3</div>
<div class="t" style="left:1057.22px;top:491.95px;font-size:6.5px;color:#103038;font-weight:normal;transform:scaleX(1.0000);">-6</div>
<div class="t" style="left:1057.22px;top:516.94px;font-size:6.5px;color:#103038;font-weight:normal;transform:scaleX(1.0000);">-9</div>
<div class="t" style="left:1053.61px;top:541.93px;font-size:6.5px;color:#103038;font-weight:normal;transform:scaleX(1.0000);">-12</div>
<div class="t" style="left:1053.61px;top:566.92px;font-size:6.5px;color:#103038;font-weight:normal;transform:scaleX(1.0000);">-15</div>
<div class="t" style="left:1053.61px;top:591.91px;font-size:6.5px;color:#103038;font-weight:normal;transform:scaleX(1.0000);">-18</div>
<div class="t" style="left:1055.17px;top:610.57px;font-size:7px;color:#c0c0c0;font-weight:normal;transform:scaleX(1.0000);">S</div>
<div style="left:1072.5px;top:362px;width:13px;height:247px;background:linear-gradient(#e81ef0 0px,#c040f0 20px,#8a70f0 40px,#5aa8f0 60px,#20e0f0 85px,#00f0f0 100px,#00f0f0 100%)"></div>
<div style="left:1071.5px;top:360px;width:15px;height:2px;background:#8a8a8a;"></div>
<div class="t" style="left:1072.19px;top:352.07px;font-size:7px;color:#dcdcdc;font-weight:normal;transform:scaleX(1.0000);">12.9</div>
<div class="t" style="left:1080.89px;top:367.00px;font-size:6.5px;color:#202030;font-weight:normal;transform:scaleX(1.0000);">9</div>
<div class="t" style="left:1080.89px;top:391.99px;font-size:6.5px;color:#202030;font-weight:normal;transform:scaleX(1.0000);">6</div>
<div class="t" style="left:1080.89px;top:416.98px;font-size:6.5px;color:#202030;font-weight:normal;transform:scaleX(1.0000);">3</div>
<div class="t" style="left:1080.89px;top:441.97px;font-size:6.5px;color:#103038;font-weight:normal;transform:scaleX(1.0000);">0</div>
<div class="t" style="left:1078.72px;top:466.96px;font-size:6.5px;color:#103038;font-weight:normal;transform:scaleX(1.0000);">-3</div>
<div class="t" style="left:1078.72px;top:491.95px;font-size:6.5px;color:#103038;font-weight:normal;transform:scaleX(1.0000);">-6</div>
<div class="t" style="left:1078.72px;top:516.94px;font-size:6.5px;color:#103038;font-weight:normal;transform:scaleX(1.0000);">-9</div>
<div class="t" style="left:1075.11px;top:541.93px;font-size:6.5px;color:#103038;font-weight:normal;transform:scaleX(1.0000);">-12</div>
<div class="t" style="left:1075.11px;top:566.92px;font-size:6.5px;color:#103038;font-weight:normal;transform:scaleX(1.0000);">-15</div>
<div class="t" style="left:1075.11px;top:591.91px;font-size:6.5px;color:#103038;font-weight:normal;transform:scaleX(1.0000);">-18</div>
<div class="t" style="left:1078.03px;top:610.57px;font-size:7px;color:#c0c0c0;font-weight:normal;transform:scaleX(1.0000);">I</div>
<div style="left:1094px;top:362px;width:13px;height:247px;background:linear-gradient(#e81ef0 0px,#c040f0 20px,#8a70f0 40px,#5aa8f0 60px,#20e0f0 85px,#00f0f0 100px,#00f0f0 100%)"></div>
<div style="left:1094px;top:392.5px;width:13px;height:216.5px;background:#7a7e80;"></div>
<div style="left:1093px;top:360px;width:15px;height:2px;background:#8a8a8a;"></div>
<div class="t" style="left:1093.69px;top:352.07px;font-size:7px;color:#dcdcdc;font-weight:normal;transform:scaleX(1.0000);">23.3</div>
<div class="t" style="left:1102.39px;top:367.00px;font-size:6.5px;color:#202030;font-weight:normal;transform:scaleX(1.0000);">9</div>
<div class="t" style="left:1102.39px;top:391.99px;font-size:6.5px;color:#202030;font-weight:normal;transform:scaleX(1.0000);">6</div>
<div class="t" style="left:1102.39px;top:416.98px;font-size:6.5px;color:#202030;font-weight:normal;transform:scaleX(1.0000);">3</div>
<div class="t" style="left:1102.39px;top:441.97px;font-size:6.5px;color:#103038;font-weight:normal;transform:scaleX(1.0000);">0</div>
<div class="t" style="left:1100.22px;top:466.96px;font-size:6.5px;color:#103038;font-weight:normal;transform:scaleX(1.0000);">-3</div>
<div class="t" style="left:1100.22px;top:491.95px;font-size:6.5px;color:#103038;font-weight:normal;transform:scaleX(1.0000);">-6</div>
<div class="t" style="left:1100.22px;top:516.94px;font-size:6.5px;color:#103038;font-weight:normal;transform:scaleX(1.0000);">-9</div>
<div class="t" style="left:1096.61px;top:541.93px;font-size:6.5px;color:#103038;font-weight:normal;transform:scaleX(1.0000);">-12</div>
<div class="t" style="left:1096.61px;top:566.92px;font-size:6.5px;color:#103038;font-weight:normal;transform:scaleX(1.0000);">-15</div>
<div class="t" style="left:1096.61px;top:591.91px;font-size:6.5px;color:#103038;font-weight:normal;transform:scaleX(1.0000);">-18</div>
<div class="t" style="left:1093.69px;top:610.57px;font-size:7px;color:#c0c0c0;font-weight:normal;transform:scaleX(1.0000);">LRA</div>
<div style="left:1127.7px;top:353px;width:13.3px;height:7.4px;background:#e81818;"></div>
<div class="t" style="left:1129.83px;top:354.00px;font-size:6.5px;color:#ffffff;font-weight:normal;transform:scaleX(1.0000);">2.4</div>
<div style="left:1127.7px;top:362px;width:13.3px;height:6px;background:#6a4040;"></div>
<div style="left:1127.7px;top:369px;width:13.3px;height:4.5px;background:#e02020;"></div>
<div style="left:1127.7px;top:373.5px;width:13.3px;height:29px;background:#e8e020;"></div>
<div style="left:1127.7px;top:402.5px;width:13.3px;height:206.5px;background:#22d83a;"></div>
<div class="t" style="left:1136.66px;top:374.02px;font-size:6px;color:#4a4a10;font-weight:normal;transform:scaleX(1.0000);">6</div>
<div class="t" style="left:1136.66px;top:382.32px;font-size:6px;color:#4a4a10;font-weight:normal;transform:scaleX(1.0000);">9</div>
<div class="t" style="left:1133.33px;top:390.62px;font-size:6px;color:#4a4a10;font-weight:normal;transform:scaleX(1.0000);">12</div>
<div class="t" style="left:1133.33px;top:398.92px;font-size:6px;color:#4a4a10;font-weight:normal;transform:scaleX(1.0000);">15</div>
<div class="t" style="left:1133.33px;top:407.22px;font-size:6px;color:#1a4a1a;font-weight:normal;transform:scaleX(1.0000);">18</div>
<div class="t" style="left:1133.33px;top:415.52px;font-size:6px;color:#1a4a1a;font-weight:normal;transform:scaleX(1.0000);">21</div>
<div class="t" style="left:1133.33px;top:423.82px;font-size:6px;color:#1a4a1a;font-weight:normal;transform:scaleX(1.0000);">24</div>
<div class="t" style="left:1133.33px;top:432.12px;font-size:6px;color:#1a4a1a;font-weight:normal;transform:scaleX(1.0000);">27</div>
<div class="t" style="left:1133.33px;top:440.42px;font-size:6px;color:#1a4a1a;font-weight:normal;transform:scaleX(1.0000);">30</div>
<div class="t" style="left:1133.33px;top:448.72px;font-size:6px;color:#1a4a1a;font-weight:normal;transform:scaleX(1.0000);">33</div>
<div class="t" style="left:1133.33px;top:457.02px;font-size:6px;color:#1a4a1a;font-weight:normal;transform:scaleX(1.0000);">36</div>
<div class="t" style="left:1133.33px;top:465.32px;font-size:6px;color:#1a4a1a;font-weight:normal;transform:scaleX(1.0000);">39</div>
<div class="t" style="left:1133.33px;top:473.62px;font-size:6px;color:#1a4a1a;font-weight:normal;transform:scaleX(1.0000);">42</div>
<div class="t" style="left:1133.33px;top:481.92px;font-size:6px;color:#1a4a1a;font-weight:normal;transform:scaleX(1.0000);">45</div>
<div class="t" style="left:1133.33px;top:490.22px;font-size:6px;color:#1a4a1a;font-weight:normal;transform:scaleX(1.0000);">48</div>
<div class="t" style="left:1133.33px;top:498.52px;font-size:6px;color:#1a4a1a;font-weight:normal;transform:scaleX(1.0000);">51</div>
<div class="t" style="left:1133.33px;top:506.82px;font-size:6px;color:#1a4a1a;font-weight:normal;transform:scaleX(1.0000);">54</div>
<div class="t" style="left:1133.33px;top:515.12px;font-size:6px;color:#1a4a1a;font-weight:normal;transform:scaleX(1.0000);">57</div>
<div class="t" style="left:1133.33px;top:523.42px;font-size:6px;color:#1a4a1a;font-weight:normal;transform:scaleX(1.0000);">60</div>
<div class="t" style="left:1133.33px;top:531.72px;font-size:6px;color:#1a4a1a;font-weight:normal;transform:scaleX(1.0000);">63</div>
<div class="t" style="left:1133.33px;top:540.02px;font-size:6px;color:#1a4a1a;font-weight:normal;transform:scaleX(1.0000);">66</div>
<div class="t" style="left:1133.33px;top:548.32px;font-size:6px;color:#1a4a1a;font-weight:normal;transform:scaleX(1.0000);">69</div>
<div class="t" style="left:1133.33px;top:556.62px;font-size:6px;color:#1a4a1a;font-weight:normal;transform:scaleX(1.0000);">72</div>
<div class="t" style="left:1133.33px;top:564.92px;font-size:6px;color:#1a4a1a;font-weight:normal;transform:scaleX(1.0000);">75</div>
<div class="t" style="left:1133.33px;top:573.22px;font-size:6px;color:#1a4a1a;font-weight:normal;transform:scaleX(1.0000);">78</div>
<div class="t" style="left:1133.33px;top:581.52px;font-size:6px;color:#1a4a1a;font-weight:normal;transform:scaleX(1.0000);">81</div>
<div class="t" style="left:1133.33px;top:589.82px;font-size:6px;color:#1a4a1a;font-weight:normal;transform:scaleX(1.0000);">84</div>
<div class="t" style="left:1133.33px;top:598.12px;font-size:6px;color:#1a4a1a;font-weight:normal;transform:scaleX(1.0000);">87</div>
<div style="left:1143.7px;top:353px;width:13.3px;height:7.4px;background:#e81818;"></div>
<div class="t" style="left:1145.83px;top:354.00px;font-size:6.5px;color:#ffffff;font-weight:normal;transform:scaleX(1.0000);">2.4</div>
<div style="left:1143.7px;top:362px;width:13.3px;height:6px;background:#6a4040;"></div>
<div style="left:1143.7px;top:369px;width:13.3px;height:4.5px;background:#e02020;"></div>
<div style="left:1143.7px;top:373.5px;width:13.3px;height:29px;background:#e8e020;"></div>
<div style="left:1143.7px;top:402.5px;width:13.3px;height:206.5px;background:#22d83a;"></div>
<div class="t" style="left:1152.66px;top:374.02px;font-size:6px;color:#4a4a10;font-weight:normal;transform:scaleX(1.0000);">6</div>
<div class="t" style="left:1152.66px;top:382.32px;font-size:6px;color:#4a4a10;font-weight:normal;transform:scaleX(1.0000);">9</div>
<div class="t" style="left:1149.33px;top:390.62px;font-size:6px;color:#4a4a10;font-weight:normal;transform:scaleX(1.0000);">12</div>
<div class="t" style="left:1149.33px;top:398.92px;font-size:6px;color:#4a4a10;font-weight:normal;transform:scaleX(1.0000);">15</div>
<div class="t" style="left:1149.33px;top:407.22px;font-size:6px;color:#1a4a1a;font-weight:normal;transform:scaleX(1.0000);">18</div>
<div class="t" style="left:1149.33px;top:415.52px;font-size:6px;color:#1a4a1a;font-weight:normal;transform:scaleX(1.0000);">21</div>
<div class="t" style="left:1149.33px;top:423.82px;font-size:6px;color:#1a4a1a;font-weight:normal;transform:scaleX(1.0000);">24</div>
<div class="t" style="left:1149.33px;top:432.12px;font-size:6px;color:#1a4a1a;font-weight:normal;transform:scaleX(1.0000);">27</div>
<div class="t" style="left:1149.33px;top:440.42px;font-size:6px;color:#1a4a1a;font-weight:normal;transform:scaleX(1.0000);">30</div>
<div class="t" style="left:1149.33px;top:448.72px;font-size:6px;color:#1a4a1a;font-weight:normal;transform:scaleX(1.0000);">33</div>
<div class="t" style="left:1149.33px;top:457.02px;font-size:6px;color:#1a4a1a;font-weight:normal;transform:scaleX(1.0000);">36</div>
<div class="t" style="left:1149.33px;top:465.32px;font-size:6px;color:#1a4a1a;font-weight:normal;transform:scaleX(1.0000);">39</div>
<div class="t" style="left:1149.33px;top:473.62px;font-size:6px;color:#1a4a1a;font-weight:normal;transform:scaleX(1.0000);">42</div>
<div class="t" style="left:1149.33px;top:481.92px;font-size:6px;color:#1a4a1a;font-weight:normal;transform:scaleX(1.0000);">45</div>
<div class="t" style="left:1149.33px;top:490.22px;font-size:6px;color:#1a4a1a;font-weight:normal;transform:scaleX(1.0000);">48</div>
<div class="t" style="left:1149.33px;top:498.52px;font-size:6px;color:#1a4a1a;font-weight:normal;transform:scaleX(1.0000);">51</div>
<div class="t" style="left:1149.33px;top:506.82px;font-size:6px;color:#1a4a1a;font-weight:normal;transform:scaleX(1.0000);">54</div>
<div class="t" style="left:1149.33px;top:515.12px;font-size:6px;color:#1a4a1a;font-weight:normal;transform:scaleX(1.0000);">57</div>
<div class="t" style="left:1149.33px;top:523.42px;font-size:6px;color:#1a4a1a;font-weight:normal;transform:scaleX(1.0000);">60</div>
<div class="t" style="left:1149.33px;top:531.72px;font-size:6px;color:#1a4a1a;font-weight:normal;transform:scaleX(1.0000);">63</div>
<div class="t" style="left:1149.33px;top:540.02px;font-size:6px;color:#1a4a1a;font-weight:normal;transform:scaleX(1.0000);">66</div>
<div class="t" style="left:1149.33px;top:548.32px;font-size:6px;color:#1a4a1a;font-weight:normal;transform:scaleX(1.0000);">69</div>
<div class="t" style="left:1149.33px;top:556.62px;font-size:6px;color:#1a4a1a;font-weight:normal;transform:scaleX(1.0000);">72</div>
<div class="t" style="left:1149.33px;top:564.92px;font-size:6px;color:#1a4a1a;font-weight:normal;transform:scaleX(1.0000);">75</div>
<div class="t" style="left:1149.33px;top:573.22px;font-size:6px;color:#1a4a1a;font-weight:normal;transform:scaleX(1.0000);">78</div>
<div class="t" style="left:1149.33px;top:581.52px;font-size:6px;color:#1a4a1a;font-weight:normal;transform:scaleX(1.0000);">81</div>
<div class="t" style="left:1149.33px;top:589.82px;font-size:6px;color:#1a4a1a;font-weight:normal;transform:scaleX(1.0000);">84</div>
<div class="t" style="left:1149.33px;top:598.12px;font-size:6px;color:#1a4a1a;font-weight:normal;transform:scaleX(1.0000);">87</div>
<div class="t" style="left:1118.00px;top:610.57px;font-size:7px;color:#c0c0c0;font-weight:normal;transform:scaleX(0.8493);">True peaks (dBFS)</div>
<div style="left:0px;top:619px;width:1170px;height:13px;background:#1e1e1e;"></div>
<div style="left:976px;top:623px;width:8px;height:5px;background:#d8d8d8;transform:skewX(-30deg);"></div>
<div class="t" style="left:990.00px;top:623.24px;font-size:7.4px;color:#c8c8c8;font-weight:normal;transform:scaleX(0.8898);">121/8.083 MB</div>
<div class="t" style="left:1044.00px;top:623.24px;font-size:7.4px;color:#c8c8c8;font-weight:normal;transform:scaleX(0.8952);">Record Time (2 channels): 243:38:55</div>
</body></html>
